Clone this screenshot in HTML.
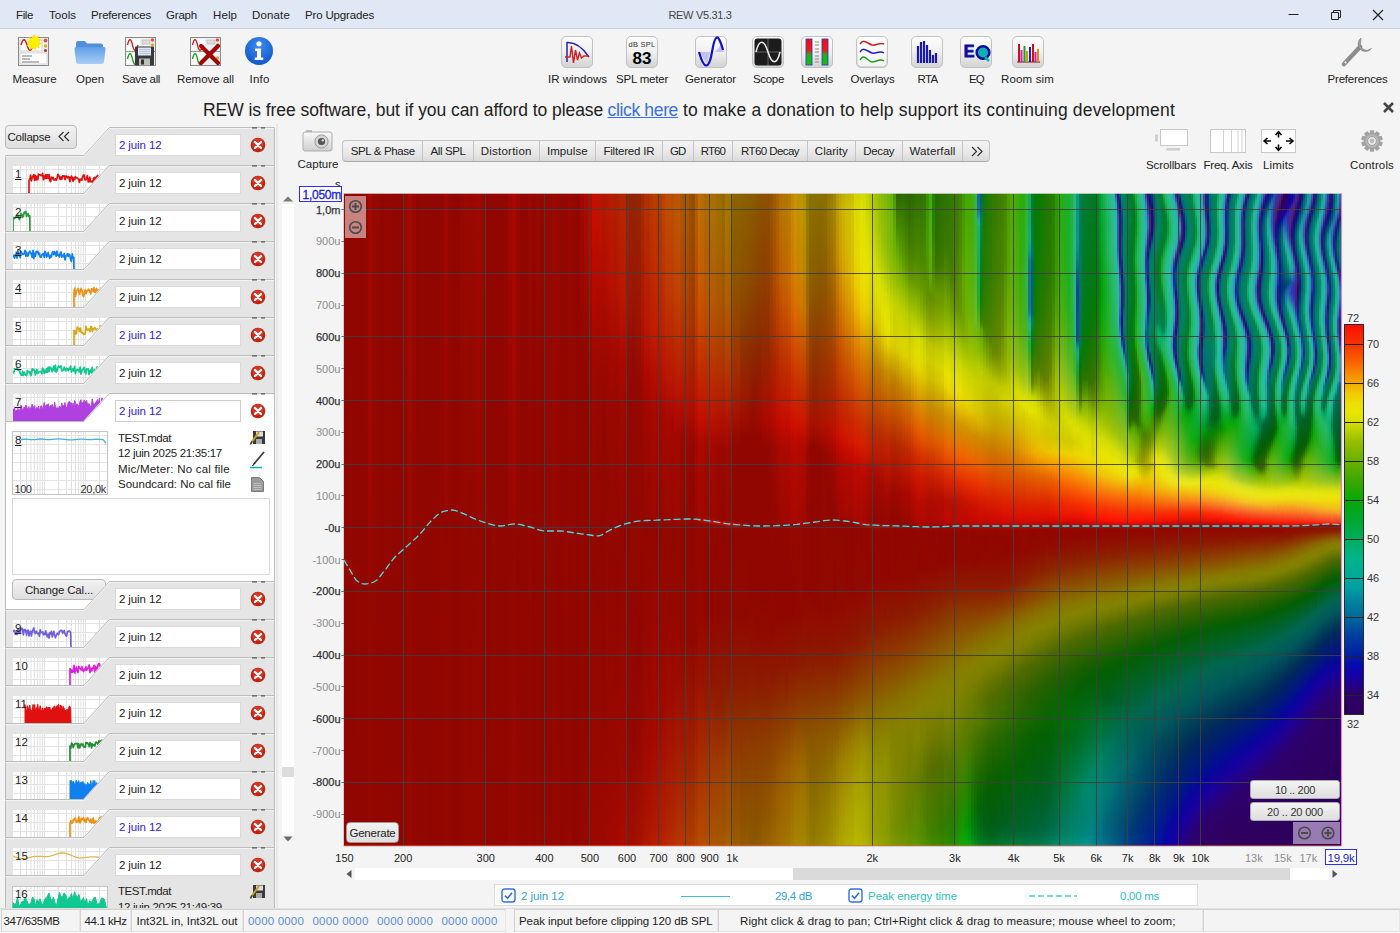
<!DOCTYPE html>
<html><head><meta charset="utf-8"><title>REW V5.31.3</title>
<style>

html,body{margin:0;padding:0;}
body{width:1400px;height:933px;overflow:hidden;background:#f4f4f4;font-family:"Liberation Sans",sans-serif;position:relative;}
.t{position:absolute;white-space:nowrap;}
.a{position:absolute;}
svg{position:absolute;overflow:visible;}
.fld{position:absolute;background:#fff;border:1px solid #dadada;box-sizing:border-box;}
.btn{position:absolute;box-sizing:border-box;border:1px solid #b9b9b9;border-radius:4px;background:linear-gradient(#f3f3f3,#dedede);}
.st{position:absolute;top:909px;height:23px;box-sizing:border-box;border:1px solid #e6e6e6;border-top-color:#d2d2d2;border-left-color:#d2d2d2;background:#f4f4f4;}

.sp{position:absolute;left:344px;top:193px;width:997px;height:653px;overflow:hidden;background:#8c1406;}
.sp i{position:absolute;top:0;height:653px;display:block;}
.tab{position:absolute;top:140px;height:22px;box-sizing:border-box;border-right:1px solid #c6c6c6;}
</style></head><body>
<div class="a" style="left:0;top:0;width:1400px;height:29px;background:#dfe8f4;border-bottom:1px solid #c9d3e2;box-sizing:border-box"></div><span class="t" style="left:16.0px;top:8.0px;font-size:11.5px;line-height:14px;color:#222;letter-spacing:-0.38px;">File</span><span class="t" style="left:49.0px;top:8.0px;font-size:11.5px;line-height:14px;color:#222;letter-spacing:0.03px;">Tools</span><span class="t" style="left:91.0px;top:8.0px;font-size:11.5px;line-height:14px;color:#222;letter-spacing:-0.18px;">Preferences</span><span class="t" style="left:166.0px;top:8.0px;font-size:11.5px;line-height:14px;color:#222;letter-spacing:-0.19px;">Graph</span><span class="t" style="left:213.0px;top:8.0px;font-size:11.5px;line-height:14px;color:#222;letter-spacing:0.09px;">Help</span><span class="t" style="left:252.0px;top:8.0px;font-size:11.5px;line-height:14px;color:#222;letter-spacing:0.15px;">Donate</span><span class="t" style="left:305.0px;top:8.0px;font-size:11.5px;line-height:14px;color:#222;letter-spacing:-0.16px;">Pro Upgrades</span><span class="t" style="left:668.5px;top:8.0px;font-size:11px;line-height:14px;color:#444;letter-spacing:-0.33px;">REW V5.31.3</span><svg style="left:1280px;top:4px" width="116" height="22" viewBox="0 0 116 22"><path d="M8.5 10.5 H18.5" stroke="#222" stroke-width="1"/><path d="M51.5 8.5 H58.5 V15.5 H51.5 Z M53.5 8.5 V6.5 H60.5 V13.5 H58.5" fill="none" stroke="#222" stroke-width="1"/><path d="M93 6 L103 16 M103 6 L93 16" stroke="#222" stroke-width="1.2"/></svg><svg style="left:17px;top:34px" width="34" height="34" viewBox="0 0 34 34"><rect x="1.5" y="3.5" width="30" height="28" fill="#f4f4f4" stroke="#8a8a8a"/><rect x="3" y="6" width="22" height="11" fill="#fff" stroke="#bbb" stroke-width="0.6"/><path d="M4 11 C6 4,8 4,10 11 S14 18,16 11" fill="none" stroke="#d01818" stroke-width="1.4"/><rect x="3" y="19" width="27" height="11" fill="#fff" stroke="#bbb" stroke-width="0.6"/><path d="M5 22h10M5 25h8M5 28h17" stroke="#777" stroke-width="1"/><circle cx="28.5" cy="6.5" r="2" fill="#e05050"/><circle cx="28.5" cy="12" r="1.8" fill="#d8b020"/><circle cx="28.5" cy="16.5" r="1.6" fill="#c03030"/><path d="M17 0 l1.6 3 3-1.6 -0.4 3.4 3.4 0.4 -2.2 2.6 2.6 2.2 -3.3 0.9 0.9 3.3 -3.2-1.2 -1.2 3.2 -2.2-2.6 -2.6 2.2 -0.4-3.4 -3.4-0.4 2.2-2.6 -2.6-2.2 3.3-0.9 -0.9-3.3 3.2 1.2z" fill="#ffe400"/><circle cx="17" cy="9" r="5.5" fill="#fff000"/></svg><span class="t" style="left:12.5px;top:72.0px;font-size:11.5px;line-height:14px;color:#222;letter-spacing:-0.11px;">Measure</span><svg style="left:73px;top:36px" width="34" height="32" viewBox="0 0 34 32"><defs><linearGradient id="fo" x1="0" y1="0" x2="0" y2="1"><stop offset="0" stop-color="#5f9fe6"/><stop offset="1" stop-color="#a8cdf6"/></linearGradient></defs><path d="M3 7 Q3 5 5 5 H12 L14 7.5 H28 Q30 7.5 30 9.5 V12 H3Z" fill="#4f8fdc"/><path d="M1.5 13 Q1.2 11 3.2 11 H30.8 Q32.8 11 32.5 13 L31 26 Q30.8 28 28.8 28 H5.2 Q3.2 28 3 26Z" fill="url(#fo)"/></svg><span class="t" style="left:76.0px;top:72.0px;font-size:11.5px;line-height:14px;color:#222;letter-spacing:-0.03px;">Open</span><svg style="left:124px;top:34px" width="34" height="34" viewBox="0 0 34 34"><rect x="1.5" y="3.5" width="30" height="28" fill="#f1f1f1" stroke="#8a8a8a"/><path d="M1.5 17.5h30" stroke="#9a9a9a"/><rect x="3" y="5.5" width="13" height="10" fill="#fff"/><rect x="3" y="19.5" width="13" height="10" fill="#fff"/><path d="M3.5 11 C5 4,7 4,8.5 11 S12 18,14 11" fill="none" stroke="#d01818" stroke-width="1.3"/><path d="M3.5 25 C5 18,7 18,8.5 25 S12 32,14 25" fill="none" stroke="#18a018" stroke-width="1.3"/><rect x="18" y="6" width="8" height="4" fill="#ddd" stroke="#aaa" stroke-width="0.5"/><circle cx="28.5" cy="6" r="1.8" fill="#e05050"/><circle cx="28.5" cy="11" r="1.7" fill="#d8b020"/><circle cx="28.5" cy="24" r="1.7" fill="#d8b020"/><rect x="11" y="12.5" width="19" height="19" rx="1" fill="#3a3a3a"/><rect x="14" y="13.5" width="13" height="8" fill="#dfe9f5"/><path d="M15 15.5h11M15 17.5h11M15 19.5h11" stroke="#a9bdd6" stroke-width="0.8"/><rect x="15" y="24.5" width="11" height="7" fill="#bdbdbd"/><rect x="17" y="25.5" width="3" height="5" fill="#333"/></svg><span class="t" style="left:122.0px;top:72.0px;font-size:11.5px;line-height:14px;color:#222;letter-spacing:-0.36px;">Save all</span><svg style="left:189px;top:34px" width="34" height="34" viewBox="0 0 34 34"><rect x="1.5" y="3.5" width="30" height="28" fill="#f1f1f1" stroke="#8a8a8a"/><path d="M1.5 17.5h30" stroke="#9a9a9a"/><rect x="3" y="5.5" width="13" height="10" fill="#fff"/><rect x="3" y="19.5" width="13" height="10" fill="#fff"/><path d="M3.5 11 C5 4,7 4,8.5 11 S12 18,14 11" fill="none" stroke="#d01818" stroke-width="1.3"/><path d="M3.5 25 C5 18,7 18,8.5 25 S12 32,14 25" fill="none" stroke="#18a018" stroke-width="1.3"/><rect x="18" y="6" width="8" height="4" fill="#ddd" stroke="#aaa" stroke-width="0.5"/><circle cx="28.5" cy="6" r="1.8" fill="#e05050"/><circle cx="28.5" cy="11" r="1.7" fill="#d8b020"/><circle cx="28.5" cy="24" r="1.7" fill="#d8b020"/><path d="M12 12 L29 29 M29 12 L12 29" stroke="#a00808" stroke-width="4.2" stroke-linecap="round"/></svg><span class="t" style="left:177.0px;top:72.0px;font-size:11.5px;line-height:14px;color:#222;letter-spacing:-0.05px;">Remove all</span><svg style="left:244px;top:36px" width="30" height="30" viewBox="0 0 30 30"><defs><radialGradient id="inf" cx="0.5" cy="0.3" r="0.8"><stop offset="0" stop-color="#3c8cf0"/><stop offset="1" stop-color="#0a50c8"/></radialGradient></defs><circle cx="15" cy="15" r="14" fill="url(#inf)"/><circle cx="15" cy="7.8" r="2.6" fill="#fff"/><path d="M11 12.5h6v9h2.3v2.6h-8.6v-2.6h2.3v-6.4h-2z" fill="#fff"/></svg><span class="t" style="left:249.5px;top:72.0px;font-size:11.5px;line-height:14px;color:#222;letter-spacing:0.20px;">Info</span><svg style="left:561px;top:36px" width="32" height="32" viewBox="0 0 32 32"><defs><linearGradient id="ib" x1="0" y1="0" x2="0" y2="1"><stop offset="0" stop-color="#fdfdfd"/><stop offset="0.5" stop-color="#f0f0f0"/><stop offset="1" stop-color="#d2d2d2"/></linearGradient></defs><rect x="0.5" y="0.5" width="31" height="31" rx="4.5" fill="url(#ib)" stroke="#c2c2c2"/><path d="M6 26 V6.5 C14 6,22 12,28 21" fill="none" stroke="#2020c0" stroke-width="1.5"/><path d="M4 21 H9 L10.5 10 L12.5 27 L14.5 14 L16.5 24 L18.5 17 L20.5 22 L23 20 H28" fill="none" stroke="#d02020" stroke-width="1.4"/></svg><span class="t" style="left:548.0px;top:72.0px;font-size:11.5px;line-height:14px;color:#222;letter-spacing:0.02px;">IR windows</span><svg style="left:626px;top:36px" width="32" height="32" viewBox="0 0 32 32"><defs><linearGradient id="ib" x1="0" y1="0" x2="0" y2="1"><stop offset="0" stop-color="#fdfdfd"/><stop offset="0.5" stop-color="#f0f0f0"/><stop offset="1" stop-color="#d2d2d2"/></linearGradient></defs><rect x="0.5" y="0.5" width="31" height="31" rx="4.5" fill="url(#ib)" stroke="#c2c2c2"/></svg><span class="t" style="left:628.5px;top:40.0px;font-size:7.5px;line-height:9px;color:#333;letter-spacing:0.26px;">dB SPL</span><span class="t" style="left:632.5px;top:47.5px;font-size:17px;line-height:21px;color:#000;letter-spacing:0.05px;font-weight:bold;">83</span><span class="t" style="left:616.0px;top:72.0px;font-size:11.5px;line-height:14px;color:#222;letter-spacing:-0.21px;">SPL meter</span><svg style="left:695px;top:36px" width="32" height="32" viewBox="0 0 32 32"><defs><linearGradient id="ib" x1="0" y1="0" x2="0" y2="1"><stop offset="0" stop-color="#fdfdfd"/><stop offset="0.5" stop-color="#f0f0f0"/><stop offset="1" stop-color="#d2d2d2"/></linearGradient></defs><rect x="0.5" y="0.5" width="31" height="31" rx="4.5" fill="url(#ib)" stroke="#c2c2c2"/><path d="M4 16 Q8.5 16 8.5 16 L15 16 L12 27 Z" fill="#b8b8f0" opacity="0.8"/><path d="M20 16 H29 L26 9 Z" fill="#b8b8f0" opacity="0.8"/><path d="M4 16 C9 34,14 34,17 16 S23 -4,28 14" fill="none" stroke="#1010c8" stroke-width="2.2"/></svg><span class="t" style="left:685.0px;top:72.0px;font-size:11.5px;line-height:14px;color:#222;letter-spacing:-0.09px;">Generator</span><svg style="left:752px;top:36px" width="32" height="32" viewBox="0 0 32 32"><defs><linearGradient id="ib" x1="0" y1="0" x2="0" y2="1"><stop offset="0" stop-color="#fdfdfd"/><stop offset="0.5" stop-color="#f0f0f0"/><stop offset="1" stop-color="#d2d2d2"/></linearGradient></defs><rect x="0.5" y="0.5" width="31" height="31" rx="4.5" fill="url(#ib)" stroke="#c2c2c2"/><rect x="2.5" y="2.5" width="27" height="27" rx="3" fill="#1c1c1c"/><path d="M3 16H29M16 3V29" stroke="#777" stroke-width="0.8"/><path d="M4 16 C7 3,12 3,16 16 S25 29,28 16" fill="none" stroke="#e8e8e8" stroke-width="1.6"/></svg><span class="t" style="left:753.0px;top:72.0px;font-size:11.5px;line-height:14px;color:#222;letter-spacing:-0.32px;">Scope</span><svg style="left:801px;top:36px" width="32" height="32" viewBox="0 0 32 32"><defs><linearGradient id="ib" x1="0" y1="0" x2="0" y2="1"><stop offset="0" stop-color="#fdfdfd"/><stop offset="0.5" stop-color="#f0f0f0"/><stop offset="1" stop-color="#d2d2d2"/></linearGradient></defs><rect x="0.5" y="0.5" width="31" height="31" rx="4.5" fill="url(#ib)" stroke="#c2c2c2"/><defs><linearGradient id="lv" x1="0" y1="0" x2="0" y2="1"><stop offset="0" stop-color="#f01010"/><stop offset="0.45" stop-color="#e02020"/><stop offset="0.6" stop-color="#20b020"/><stop offset="1" stop-color="#10c010"/></linearGradient></defs><rect x="5" y="3" width="6" height="26" fill="url(#lv)" stroke="#3030d0" stroke-width="0.8"/><rect x="21" y="3" width="6" height="26" fill="url(#lv)" stroke="#3030d0" stroke-width="0.8"/><path d="M14 6h4M14 9h4M14 13h4M14 16h4M14 20h4M14 23h4M14 26h4" stroke="#888" stroke-width="1.2"/></svg><span class="t" style="left:801.0px;top:72.0px;font-size:11.5px;line-height:14px;color:#222;letter-spacing:-0.21px;">Levels</span><svg style="left:856px;top:36px" width="32" height="32" viewBox="0 0 32 32"><defs><linearGradient id="ib" x1="0" y1="0" x2="0" y2="1"><stop offset="0" stop-color="#fdfdfd"/><stop offset="0.5" stop-color="#f0f0f0"/><stop offset="1" stop-color="#d2d2d2"/></linearGradient></defs><rect x="0.5" y="0.5" width="31" height="31" rx="4.5" fill="url(#ib)" stroke="#c2c2c2"/><rect x="2" y="2" width="28" height="28" rx="3" fill="#fff" opacity="0.7"/><path d="M4 8 C8 2,12 8,16 9 S24 6,28 8" fill="none" stroke="#d02020" stroke-width="1.5"/><path d="M4 16 C8 10,12 16,16 17 S24 14,28 17" fill="none" stroke="#2020d0" stroke-width="1.5"/><path d="M4 24 C8 16,12 26,16 26 S24 22,28 25" fill="none" stroke="#20a020" stroke-width="1.5"/></svg><span class="t" style="left:850.5px;top:72.0px;font-size:11.5px;line-height:14px;color:#222;letter-spacing:-0.17px;">Overlays</span><svg style="left:911px;top:36px" width="32" height="32" viewBox="0 0 32 32"><defs><linearGradient id="ib" x1="0" y1="0" x2="0" y2="1"><stop offset="0" stop-color="#fdfdfd"/><stop offset="0.5" stop-color="#f0f0f0"/><stop offset="1" stop-color="#d2d2d2"/></linearGradient></defs><rect x="0.5" y="0.5" width="31" height="31" rx="4.5" fill="url(#ib)" stroke="#c2c2c2"/><path d="M7 27V10M10 27V6M13 27V5M16 27V9M19 27V14M22 27V19M25 27V17" stroke="#1818b8" stroke-width="2.2"/></svg><span class="t" style="left:917.5px;top:72.0px;font-size:11.5px;line-height:14px;color:#222;letter-spacing:-0.65px;">RTA</span><svg style="left:960px;top:36px" width="32" height="32" viewBox="0 0 32 32"><defs><linearGradient id="ib" x1="0" y1="0" x2="0" y2="1"><stop offset="0" stop-color="#fdfdfd"/><stop offset="0.5" stop-color="#f0f0f0"/><stop offset="1" stop-color="#d2d2d2"/></linearGradient></defs><rect x="0.5" y="0.5" width="31" height="31" rx="4.5" fill="url(#ib)" stroke="#c2c2c2"/><circle cx="23" cy="16.5" r="6.3" fill="#10b0b0" stroke="#0a0aa0" stroke-width="2.6"/><path d="M25 21 l4 4" stroke="#10b0b0" stroke-width="2.5"/></svg><span class="t" style="left:963.7px;top:42.0px;font-size:16px;line-height:20px;color:#0a0aa0;font-weight:bold;-webkit-text-stroke:0.8px #0a0aa0;">E</span><span class="t" style="left:969.0px;top:72.0px;font-size:11.5px;line-height:14px;color:#222;letter-spacing:-0.81px;">EQ</span><svg style="left:1012px;top:36px" width="32" height="32" viewBox="0 0 32 32"><defs><linearGradient id="ib" x1="0" y1="0" x2="0" y2="1"><stop offset="0" stop-color="#fdfdfd"/><stop offset="0.5" stop-color="#f0f0f0"/><stop offset="1" stop-color="#d2d2d2"/></linearGradient></defs><rect x="0.5" y="0.5" width="31" height="31" rx="4.5" fill="url(#ib)" stroke="#c2c2c2"/><path d="M5 26H28" stroke="#8a3030" stroke-width="1.2"/><path d="M7 26V8" stroke="#d01010" stroke-width="2"/><path d="M9.5 26V14" stroke="#d020d0" stroke-width="2"/><path d="M12.5 26V10" stroke="#20a020" stroke-width="2"/><path d="M15 26V15" stroke="#c8a000" stroke-width="2"/><path d="M18 26V11" stroke="#2020d0" stroke-width="2"/><path d="M21 26V8" stroke="#d01010" stroke-width="2"/><path d="M23.5 26V16" stroke="#d020d0" stroke-width="2"/><path d="M26 26V13" stroke="#e09000" stroke-width="2"/></svg><span class="t" style="left:1001.0px;top:72.0px;font-size:11.5px;line-height:14px;color:#222;letter-spacing:0.16px;">Room sim</span><svg style="left:1340px;top:34px" width="36" height="36" viewBox="0 0 36 36"><defs><linearGradient id="wr" x1="0" y1="0" x2="1" y2="1"><stop offset="0" stop-color="#c8c8c8"/><stop offset="0.5" stop-color="#8a8a8a"/><stop offset="1" stop-color="#b0b0b0"/></linearGradient></defs><path d="M4 30 L20 13" stroke="url(#wr)" stroke-width="4.6" stroke-linecap="round"/><path d="M21 4 A7.5 7.5 0 1 0 31.5 14.5 L27 16.5 L22.5 15 L20.5 10.5 Z" fill="#9c9c9c" stroke="#7a7a7a" stroke-width="0.6"/><circle cx="5.5" cy="28.5" r="1.1" fill="#eee"/></svg><span class="t" style="left:1327.5px;top:72.0px;font-size:11.5px;line-height:14px;color:#222;letter-spacing:-0.18px;">Preferences</span><span class="t" style="left:203.0px;top:98.5px;font-size:17.5px;line-height:22px;color:#222;letter-spacing:-0.06px;">REW is free software, but if you can afford to please</span><span class="t" style="left:607.5px;top:98.5px;font-size:17.5px;line-height:22px;color:#3b6fe0;letter-spacing:-0.34px;text-decoration:underline;">click here</span><span class="t" style="left:683.0px;top:98.5px;font-size:17.5px;line-height:22px;color:#222;letter-spacing:0.17px;">to make a donation to help support its continuing development</span><svg style="left:1382px;top:101px" width="13" height="13" viewBox="0 0 13 13"><path d="M2 2 L11 11 M11 2 L2 11" stroke="#444" stroke-width="2.6"/></svg><div class="a" style="left:276px;top:124px;width:2px;height:786px;background:#e9e9e9"></div><div class="btn" style="left:5px;top:125px;width:72px;height:24px"></div><span class="t" style="left:7.5px;top:129.5px;font-size:11.5px;line-height:14px;color:#222;letter-spacing:-0.22px;">Collapse</span><svg style="left:57px;top:131px" width="14" height="11" viewBox="0 0 14 11"><path d="M6.5 1 L2 5.5 L6.5 10 M12 1 L7.5 5.5 L12 10" fill="none" stroke="#333" stroke-width="1.2"/></svg><svg style="left:0px;top:126.5px" width="280" height="79.5" viewBox="0 0 280 79.5"><path d="M109.5 0.5 H274.5 V78.5 H5.5 V28.5 H84 Z" fill="#e5e5e5" stroke="#bcbcbc" stroke-width="1"/><path d="M109.5 1.5 H274 M5.5 29.5 H84 L109.5 1.5" fill="none" stroke="#f6f6f6" stroke-width="1" opacity="0.8"/><path d="M252 0.8h5M261 0.8h4" stroke="#555" stroke-width="1.2"/></svg><div class="fld" style="left:115px;top:133.5px;width:126px;height:22px;"></div><span class="t" style="left:119.0px;top:138.0px;font-size:11.5px;line-height:14px;color:#2a22e8;letter-spacing:-0.11px;">2 juin 12</span><svg style="left:249.5px;top:137.0px" width="16" height="16" viewBox="0 0 16 16"><circle cx="8" cy="8" r="7.3" fill="#c6200f"/><circle cx="8" cy="6.6" r="5.6" fill="#de4a34" opacity="0.55"/><path d="M5 5 L11 11 M11 5 L5 11" stroke="#fff" stroke-width="2.3" stroke-linecap="round"/></svg><svg style="left:12.5px;top:166.0px" width="96" height="28" viewBox="0 0 96 28"><clipPath id="tc1"><path d="M0 0 H94.5 L69.5 28 H0Z"/></clipPath><g clip-path="url(#tc1)"><rect x="0" y="0" width="96" height="28" fill="#fff"/><path d="M7.5 0V28M13.5 0V28M18.0 0V28M21.5 0V28M24.5 0V28M27.0 0V28M29.5 0V28M31.5 0V28M45.5 0V28M53.5 0V28M58.5 0V28M62.5 0V28M65.5 0V28M68.0 0V28M70.5 0V28M72.5 0V28M86.5 0V28" stroke="#e1e1e1" stroke-width="1"/><path d="M0 3.5H96M0 12.5H96M0 21.5H96" stroke="#e4e4e4" stroke-width="1"/><path d="M16.0 28.0 L16.0 14.4 L16.8 13.6 L17.6 9.1 L18.4 14.9 L19.2 11.5 L20.0 10.3 L20.8 8.6 L21.6 14.5 L22.4 9.3 L23.2 14.0 L24.0 10.7 L24.8 13.6 L25.6 8.1 L26.4 8.8 L27.2 8.8 L28.0 9.6 L28.8 9.6 L29.6 7.4 L30.4 13.7 L31.2 10.2 L32.0 12.5 L32.8 8.6 L33.6 12.4 L34.4 8.8 L35.2 12.1 L36.0 8.5 L36.8 14.8 L37.6 15.7 L38.4 11.0 L39.2 12.7 L40.0 11.3 L40.8 13.8 L41.6 13.9 L42.4 13.0 L43.2 14.3 L44.0 12.3 L44.8 8.4 L45.6 9.3 L46.4 11.2 L47.2 13.5 L48.0 10.9 L48.8 13.3 L49.6 9.9 L50.4 10.2 L51.2 9.8 L52.0 13.6 L52.8 10.0 L53.6 10.0 L54.4 11.8 L55.2 10.6 L56.0 11.0 L56.8 15.7 L57.6 12.3 L58.4 10.0 L59.2 11.7 L60.0 15.3 L60.8 11.8 L61.6 13.7 L62.4 10.6 L63.2 11.5 L64.0 11.8 L64.8 12.6 L65.6 13.3 L66.4 16.4 L67.2 13.2 L68.0 13.4 L68.8 14.2 L69.6 11.1 L70.4 9.1 L71.2 9.1 L72.0 13.9 L72.8 13.9 L73.6 12.3 L74.4 9.5 L75.2 15.8 L76.0 15.8 L76.8 11.1 L77.6 15.6 L78.4 15.8 L79.2 15.1 L80.0 16.7 L80.8 11.9 L81.6 11.5 L82.4 15.1 L83.2 11.2 L84.0 10.4 L84.8 9.4 L85.6 12.7 L86.4 11.6 L87.2 11.9 L88.0 12.8 L88.8 15.0 L89.6 14.7 L90.4 12.0 L91.2 10.7 L92.0 13.0 L92.8 15.4 L93.6 13.8 L94.4 18.0 L95.2 15.0 L96.0 15.2" fill="none" stroke="#e01010" stroke-width="1.7" stroke-linejoin="round"/></g></svg><span class="t" style="left:15.0px;top:167.0px;font-size:11.5px;line-height:14px;color:#222;text-decoration:underline;">1</span><svg style="left:0px;top:164.5px" width="280" height="79.5" viewBox="0 0 280 79.5"><path d="M109.5 0.5 H274.5 V78.5 H5.5 V28.5 H84 Z" fill="#e5e5e5" stroke="#bcbcbc" stroke-width="1"/><path d="M109.5 1.5 H274 M5.5 29.5 H84 L109.5 1.5" fill="none" stroke="#f6f6f6" stroke-width="1" opacity="0.8"/><path d="M252 0.8h5M261 0.8h4" stroke="#555" stroke-width="1.2"/></svg><div class="fld" style="left:115px;top:171.5px;width:126px;height:22px;"></div><span class="t" style="left:119.0px;top:176.0px;font-size:11.5px;line-height:14px;color:#222;letter-spacing:-0.11px;">2 juin 12</span><svg style="left:249.5px;top:175.0px" width="16" height="16" viewBox="0 0 16 16"><circle cx="8" cy="8" r="7.3" fill="#c6200f"/><circle cx="8" cy="6.6" r="5.6" fill="#de4a34" opacity="0.55"/><path d="M5 5 L11 11 M11 5 L5 11" stroke="#fff" stroke-width="2.3" stroke-linecap="round"/></svg><svg style="left:12.5px;top:204.0px" width="96" height="28" viewBox="0 0 96 28"><clipPath id="tc2"><path d="M0 0 H94.5 L69.5 28 H0Z"/></clipPath><g clip-path="url(#tc2)"><rect x="0" y="0" width="96" height="28" fill="#fff"/><path d="M7.5 0V28M13.5 0V28M18.0 0V28M21.5 0V28M24.5 0V28M27.0 0V28M29.5 0V28M31.5 0V28M45.5 0V28M53.5 0V28M58.5 0V28M62.5 0V28M65.5 0V28M68.0 0V28M70.5 0V28M72.5 0V28M86.5 0V28" stroke="#e1e1e1" stroke-width="1"/><path d="M0 3.5H96M0 12.5H96M0 21.5H96" stroke="#e4e4e4" stroke-width="1"/><path d="M0.0 28.0 L0.0 13.8 L0.8 13.7 L1.6 14.7 L2.4 13.3 L3.2 12.6 L4.0 13.5 L4.8 10.9 L5.6 13.4 L6.4 15.5 L7.2 13.2 L8.0 9.4 L8.8 10.5 L9.6 13.3 L10.4 12.0 L11.2 8.2 L12.0 9.2 L12.8 7.5 L13.6 12.3 L14.4 10.8 L15.2 9.6 L16.0 12.6 L16.8 11.9 L17.0 28.0" fill="none" stroke="#2a9a3a" stroke-width="1.7" stroke-linejoin="round"/></g></svg><span class="t" style="left:15.0px;top:205.0px;font-size:11.5px;line-height:14px;color:#222;text-decoration:underline;">2</span><svg style="left:0px;top:202.5px" width="280" height="79.5" viewBox="0 0 280 79.5"><path d="M109.5 0.5 H274.5 V78.5 H5.5 V28.5 H84 Z" fill="#e5e5e5" stroke="#bcbcbc" stroke-width="1"/><path d="M109.5 1.5 H274 M5.5 29.5 H84 L109.5 1.5" fill="none" stroke="#f6f6f6" stroke-width="1" opacity="0.8"/><path d="M252 0.8h5M261 0.8h4" stroke="#555" stroke-width="1.2"/></svg><div class="fld" style="left:115px;top:209.5px;width:126px;height:22px;"></div><span class="t" style="left:119.0px;top:214.0px;font-size:11.5px;line-height:14px;color:#222;letter-spacing:-0.11px;">2 juin 12</span><svg style="left:249.5px;top:213.0px" width="16" height="16" viewBox="0 0 16 16"><circle cx="8" cy="8" r="7.3" fill="#c6200f"/><circle cx="8" cy="6.6" r="5.6" fill="#de4a34" opacity="0.55"/><path d="M5 5 L11 11 M11 5 L5 11" stroke="#fff" stroke-width="2.3" stroke-linecap="round"/></svg><svg style="left:12.5px;top:242.0px" width="96" height="28" viewBox="0 0 96 28"><clipPath id="tc3"><path d="M0 0 H94.5 L69.5 28 H0Z"/></clipPath><g clip-path="url(#tc3)"><rect x="0" y="0" width="96" height="28" fill="#fff"/><path d="M7.5 0V28M13.5 0V28M18.0 0V28M21.5 0V28M24.5 0V28M27.0 0V28M29.5 0V28M31.5 0V28M45.5 0V28M53.5 0V28M58.5 0V28M62.5 0V28M65.5 0V28M68.0 0V28M70.5 0V28M72.5 0V28M86.5 0V28" stroke="#e1e1e1" stroke-width="1"/><path d="M0 3.5H96M0 12.5H96M0 21.5H96" stroke="#e4e4e4" stroke-width="1"/><path d="M0.0 15.4 L0.8 13.4 L1.6 16.1 L2.4 12.5 L3.2 11.8 L4.0 16.2 L4.8 8.5 L5.6 13.3 L6.4 13.2 L7.2 15.6 L8.0 9.3 L8.8 11.3 L9.6 12.3 L10.4 12.2 L11.2 11.4 L12.0 8.3 L12.8 14.1 L13.6 10.2 L14.4 14.2 L15.2 13.5 L16.0 10.6 L16.8 9.1 L17.6 10.9 L18.4 11.9 L19.2 15.4 L20.0 8.3 L20.8 16.6 L21.6 11.3 L22.4 14.1 L23.2 9.3 L24.0 10.6 L24.8 9.3 L25.6 12.6 L26.4 11.3 L27.2 15.1 L28.0 15.3 L28.8 13.3 L29.6 12.1 L30.4 11.5 L31.2 15.4 L32.0 9.4 L32.8 11.0 L33.6 15.1 L34.4 13.6 L35.2 10.4 L36.0 14.5 L36.8 16.3 L37.6 13.5 L38.4 14.9 L39.2 10.7 L40.0 9.6 L40.8 12.7 L41.6 9.7 L42.4 11.2 L43.2 14.2 L44.0 9.1 L44.8 13.4 L45.6 13.0 L46.4 15.0 L47.2 11.2 L48.0 10.0 L48.8 15.2 L49.6 13.3 L50.4 14.7 L51.2 11.5 L52.0 18.0 L52.8 14.1 L53.6 13.7 L54.4 11.8 L55.2 14.4 L56.0 12.2 L56.8 13.2 L57.6 17.5 L58.4 19.4 L59.2 11.9 L60.0 16.5 L60.8 15.3 L61.0 28.0" fill="none" stroke="#1080f0" stroke-width="1.7" stroke-linejoin="round"/></g></svg><span class="t" style="left:15.0px;top:243.0px;font-size:11.5px;line-height:14px;color:#222;text-decoration:underline;">3</span><svg style="left:0px;top:240.5px" width="280" height="79.5" viewBox="0 0 280 79.5"><path d="M109.5 0.5 H274.5 V78.5 H5.5 V28.5 H84 Z" fill="#e5e5e5" stroke="#bcbcbc" stroke-width="1"/><path d="M109.5 1.5 H274 M5.5 29.5 H84 L109.5 1.5" fill="none" stroke="#f6f6f6" stroke-width="1" opacity="0.8"/><path d="M252 0.8h5M261 0.8h4" stroke="#555" stroke-width="1.2"/></svg><div class="fld" style="left:115px;top:247.5px;width:126px;height:22px;"></div><span class="t" style="left:119.0px;top:252.0px;font-size:11.5px;line-height:14px;color:#222;letter-spacing:-0.11px;">2 juin 12</span><svg style="left:249.5px;top:251.0px" width="16" height="16" viewBox="0 0 16 16"><circle cx="8" cy="8" r="7.3" fill="#c6200f"/><circle cx="8" cy="6.6" r="5.6" fill="#de4a34" opacity="0.55"/><path d="M5 5 L11 11 M11 5 L5 11" stroke="#fff" stroke-width="2.3" stroke-linecap="round"/></svg><svg style="left:12.5px;top:280.0px" width="96" height="28" viewBox="0 0 96 28"><clipPath id="tc4"><path d="M0 0 H94.5 L69.5 28 H0Z"/></clipPath><g clip-path="url(#tc4)"><rect x="0" y="0" width="96" height="28" fill="#fff"/><path d="M7.5 0V28M13.5 0V28M18.0 0V28M21.5 0V28M24.5 0V28M27.0 0V28M29.5 0V28M31.5 0V28M45.5 0V28M53.5 0V28M58.5 0V28M62.5 0V28M65.5 0V28M68.0 0V28M70.5 0V28M72.5 0V28M86.5 0V28" stroke="#e1e1e1" stroke-width="1"/><path d="M0 3.5H96M0 12.5H96M0 21.5H96" stroke="#e4e4e4" stroke-width="1"/><path d="M61.0 28.0 L61.0 11.6 L61.8 8.1 L62.6 16.1 L63.4 11.4 L64.2 10.1 L65.0 8.6 L65.8 11.4 L66.6 14.3 L67.4 10.2 L68.2 8.5 L69.0 10.5 L69.8 15.0 L70.6 16.6 L71.4 13.1 L72.2 9.8 L73.0 13.7 L73.8 10.9 L74.6 10.8 L75.4 9.1 L76.2 10.2 L77.0 11.6 L77.8 13.8 L78.6 8.8 L79.4 9.2 L80.2 11.2 L81.0 7.7 L81.8 12.2 L82.6 13.0 L83.4 8.3 L84.2 10.7 L85.0 10.9 L85.8 9.6 L86.6 14.5 L87.4 10.7 L88.2 7.7 L89.0 8.2 L89.8 8.9 L90.6 12.8 L91.4 10.6 L92.2 10.1 L93.0 10.1 L93.8 9.5 L94.6 11.2 L95.4 11.1" fill="none" stroke="#f09010" stroke-width="1.7" stroke-linejoin="round"/></g></svg><span class="t" style="left:15.0px;top:281.0px;font-size:11.5px;line-height:14px;color:#222;text-decoration:underline;">4</span><svg style="left:0px;top:278.5px" width="280" height="79.5" viewBox="0 0 280 79.5"><path d="M109.5 0.5 H274.5 V78.5 H5.5 V28.5 H84 Z" fill="#e5e5e5" stroke="#bcbcbc" stroke-width="1"/><path d="M109.5 1.5 H274 M5.5 29.5 H84 L109.5 1.5" fill="none" stroke="#f6f6f6" stroke-width="1" opacity="0.8"/><path d="M252 0.8h5M261 0.8h4" stroke="#555" stroke-width="1.2"/></svg><div class="fld" style="left:115px;top:285.5px;width:126px;height:22px;"></div><span class="t" style="left:119.0px;top:290.0px;font-size:11.5px;line-height:14px;color:#222;letter-spacing:-0.11px;">2 juin 12</span><svg style="left:249.5px;top:289.0px" width="16" height="16" viewBox="0 0 16 16"><circle cx="8" cy="8" r="7.3" fill="#c6200f"/><circle cx="8" cy="6.6" r="5.6" fill="#de4a34" opacity="0.55"/><path d="M5 5 L11 11 M11 5 L5 11" stroke="#fff" stroke-width="2.3" stroke-linecap="round"/></svg><svg style="left:12.5px;top:318.0px" width="96" height="28" viewBox="0 0 96 28"><clipPath id="tc5"><path d="M0 0 H94.5 L69.5 28 H0Z"/></clipPath><g clip-path="url(#tc5)"><rect x="0" y="0" width="96" height="28" fill="#fff"/><path d="M7.5 0V28M13.5 0V28M18.0 0V28M21.5 0V28M24.5 0V28M27.0 0V28M29.5 0V28M31.5 0V28M45.5 0V28M53.5 0V28M58.5 0V28M62.5 0V28M65.5 0V28M68.0 0V28M70.5 0V28M72.5 0V28M86.5 0V28" stroke="#e1e1e1" stroke-width="1"/><path d="M0 3.5H96M0 12.5H96M0 21.5H96" stroke="#e4e4e4" stroke-width="1"/><path d="M61.0 28.0 L61.0 12.4 L61.8 16.2 L62.6 13.1 L63.4 15.8 L64.2 9.1 L65.0 10.5 L65.8 10.3 L66.6 13.5 L67.4 10.0 L68.2 14.3 L69.0 14.8 L69.8 14.5 L70.6 16.3 L71.4 16.0 L72.2 16.1 L73.0 8.4 L73.8 11.0 L74.6 11.8 L75.4 11.1 L76.2 11.2 L77.0 13.4 L77.8 8.7 L78.6 8.8 L79.4 13.4 L80.2 10.6 L81.0 11.0 L81.8 9.8 L82.6 10.4 L83.4 12.5 L84.2 11.5 L85.0 10.7 L85.8 15.0 L86.6 14.7 L87.4 7.6 L88.2 8.7 L89.0 12.9 L89.8 8.3 L90.6 9.4 L91.4 10.7 L92.2 14.3 L93.0 12.0 L93.8 10.0 L94.6 8.9 L95.4 14.0" fill="none" stroke="#d8a810" stroke-width="1.7" stroke-linejoin="round"/></g></svg><span class="t" style="left:15.0px;top:319.0px;font-size:11.5px;line-height:14px;color:#222;text-decoration:underline;">5</span><svg style="left:0px;top:316.5px" width="280" height="79.5" viewBox="0 0 280 79.5"><path d="M109.5 0.5 H274.5 V78.5 H5.5 V28.5 H84 Z" fill="#e5e5e5" stroke="#bcbcbc" stroke-width="1"/><path d="M109.5 1.5 H274 M5.5 29.5 H84 L109.5 1.5" fill="none" stroke="#f6f6f6" stroke-width="1" opacity="0.8"/><path d="M252 0.8h5M261 0.8h4" stroke="#555" stroke-width="1.2"/></svg><div class="fld" style="left:115px;top:323.5px;width:126px;height:22px;"></div><span class="t" style="left:119.0px;top:328.0px;font-size:11.5px;line-height:14px;color:#2a22e8;letter-spacing:-0.11px;">2 juin 12</span><svg style="left:249.5px;top:327.0px" width="16" height="16" viewBox="0 0 16 16"><circle cx="8" cy="8" r="7.3" fill="#c6200f"/><circle cx="8" cy="6.6" r="5.6" fill="#de4a34" opacity="0.55"/><path d="M5 5 L11 11 M11 5 L5 11" stroke="#fff" stroke-width="2.3" stroke-linecap="round"/></svg><svg style="left:12.5px;top:356.0px" width="96" height="28" viewBox="0 0 96 28"><clipPath id="tc6"><path d="M0 0 H94.5 L69.5 28 H0Z"/></clipPath><g clip-path="url(#tc6)"><rect x="0" y="0" width="96" height="28" fill="#fff"/><path d="M7.5 0V28M13.5 0V28M18.0 0V28M21.5 0V28M24.5 0V28M27.0 0V28M29.5 0V28M31.5 0V28M45.5 0V28M53.5 0V28M58.5 0V28M62.5 0V28M65.5 0V28M68.0 0V28M70.5 0V28M72.5 0V28M86.5 0V28" stroke="#e1e1e1" stroke-width="1"/><path d="M0 3.5H96M0 12.5H96M0 21.5H96" stroke="#e4e4e4" stroke-width="1"/><path d="M0.0 16.6 L0.8 16.9 L1.6 12.6 L2.4 13.4 L3.2 13.1 L4.0 11.6 L4.8 13.8 L5.6 14.3 L6.4 14.5 L7.2 17.5 L8.0 19.0 L8.8 19.3 L9.6 15.3 L10.4 19.5 L11.2 16.0 L12.0 18.2 L12.8 19.2 L13.6 19.6 L14.4 14.6 L15.2 15.5 L16.0 16.6 L16.8 15.6 L17.6 19.6 L18.4 19.1 L19.2 12.8 L20.0 14.1 L20.8 13.3 L21.6 15.2 L22.4 18.9 L23.2 15.7 L24.0 13.5 L24.8 17.5 L25.6 16.6 L26.4 15.7 L27.2 15.7 L28.0 15.7 L28.8 17.7 L29.6 12.1 L30.4 14.0 L31.2 17.2 L32.0 14.2 L32.8 16.6 L33.6 12.7 L34.4 16.2 L35.2 11.2 L36.0 15.7 L36.8 11.2 L37.6 11.3 L38.4 13.2 L39.2 15.8 L40.0 13.0 L40.8 10.2 L41.6 15.0 L42.4 9.0 L43.2 16.1 L44.0 14.8 L44.8 11.7 L45.6 10.1 L46.4 11.1 L47.2 10.9 L48.0 9.9 L48.8 15.0 L49.6 14.7 L50.4 13.9 L51.2 11.0 L52.0 13.7 L52.8 14.9 L53.6 12.4 L54.4 12.5 L55.2 14.7 L56.0 12.4 L56.8 13.1 L57.6 10.0 L58.4 16.1 L59.2 14.2 L60.0 12.7 L60.8 14.9 L61.6 10.4 L62.4 17.6 L63.2 14.2 L64.0 14.4 L64.8 13.3 L65.6 14.1 L66.4 15.9 L67.2 11.0 L68.0 18.1 L68.8 15.5 L69.6 13.6 L70.4 12.9 L71.2 11.5 L72.0 16.1 L72.8 17.8 L73.6 12.9 L74.4 13.4 L75.2 12.9 L76.0 18.6 L76.8 14.9 L77.6 14.1 L78.4 17.0 L79.2 11.4 L80.0 17.0 L80.8 15.3 L81.6 13.7 L82.4 14.3 L83.2 14.2 L84.0 10.9 L84.8 11.9 L85.6 14.8 L86.4 18.9 L87.2 13.3 L88.0 13.0 L88.8 20.2 L89.6 13.0 L90.4 15.8 L91.2 13.4 L92.0 11.5 L92.8 12.7 L93.6 14.7 L94.4 11.6 L95.2 11.9 L96.0 17.1" fill="none" stroke="#10c890" stroke-width="1.7" stroke-linejoin="round"/></g></svg><span class="t" style="left:15.0px;top:357.0px;font-size:11.5px;line-height:14px;color:#222;text-decoration:underline;">6</span><svg style="left:0px;top:354.5px" width="280" height="79.5" viewBox="0 0 280 79.5"><path d="M109.5 0.5 H274.5 V78.5 H5.5 V28.5 H84 Z" fill="#e5e5e5" stroke="#bcbcbc" stroke-width="1"/><path d="M109.5 1.5 H274 M5.5 29.5 H84 L109.5 1.5" fill="none" stroke="#f6f6f6" stroke-width="1" opacity="0.8"/><path d="M252 0.8h5M261 0.8h4" stroke="#555" stroke-width="1.2"/></svg><div class="fld" style="left:115px;top:361.5px;width:126px;height:22px;"></div><span class="t" style="left:119.0px;top:366.0px;font-size:11.5px;line-height:14px;color:#222;letter-spacing:-0.11px;">2 juin 12</span><svg style="left:249.5px;top:365.0px" width="16" height="16" viewBox="0 0 16 16"><circle cx="8" cy="8" r="7.3" fill="#c6200f"/><circle cx="8" cy="6.6" r="5.6" fill="#de4a34" opacity="0.55"/><path d="M5 5 L11 11 M11 5 L5 11" stroke="#fff" stroke-width="2.3" stroke-linecap="round"/></svg><svg style="left:12.5px;top:394.0px" width="96" height="28" viewBox="0 0 96 28"><clipPath id="tc7"><path d="M0 0 H94.5 L69.5 28 H0Z"/></clipPath><g clip-path="url(#tc7)"><rect x="0" y="0" width="96" height="28" fill="#fff"/><path d="M7.5 0V28M13.5 0V28M18.0 0V28M21.5 0V28M24.5 0V28M27.0 0V28M29.5 0V28M31.5 0V28M45.5 0V28M53.5 0V28M58.5 0V28M62.5 0V28M65.5 0V28M68.0 0V28M70.5 0V28M72.5 0V28M86.5 0V28" stroke="#e1e1e1" stroke-width="1"/><path d="M0 3.5H96M0 12.5H96M0 21.5H96" stroke="#e4e4e4" stroke-width="1"/><path d="M0.0 28.0 L0.0 15.1 L0.8 15.7 L1.6 13.3 L2.4 18.2 L3.2 16.6 L4.0 16.8 L4.8 14.3 L5.6 17.2 L6.4 16.3 L7.2 15.1 L8.0 11.2 L8.8 13.9 L9.6 18.0 L10.4 14.6 L11.2 13.1 L12.0 15.0 L12.8 11.1 L13.6 12.5 L14.4 16.0 L15.2 13.5 L16.0 12.8 L16.8 17.4 L17.6 13.7 L18.4 13.1 L19.2 10.1 L20.0 14.1 L20.8 13.2 L21.6 11.5 L22.4 16.6 L23.2 14.0 L24.0 13.3 L24.8 15.8 L25.6 12.0 L26.4 16.6 L27.2 14.2 L28.0 11.7 L28.8 12.2 L29.6 16.3 L30.4 13.3 L31.2 8.5 L32.0 15.2 L32.8 11.6 L33.6 10.6 L34.4 12.0 L35.2 9.7 L36.0 13.3 L36.8 12.9 L37.6 11.6 L38.4 11.6 L39.2 10.4 L40.0 13.2 L40.8 14.3 L41.6 7.9 L42.4 12.5 L43.2 13.8 L44.0 15.3 L44.8 13.5 L45.6 14.8 L46.4 12.2 L47.2 13.8 L48.0 12.9 L48.8 8.9 L49.6 12.6 L50.4 11.8 L51.2 11.0 L52.0 8.6 L52.8 14.1 L53.6 13.0 L54.4 12.8 L55.2 8.3 L56.0 7.7 L56.8 7.7 L57.6 9.2 L58.4 8.9 L59.2 12.0 L60.0 9.2 L60.8 13.9 L61.6 6.3 L62.4 9.0 L63.2 12.7 L64.0 9.7 L64.8 11.0 L65.6 12.3 L66.4 10.5 L67.2 6.8 L68.0 5.7 L68.8 13.1 L69.6 8.5 L70.4 9.3 L71.2 5.9 L72.0 9.0 L72.8 7.8 L73.6 6.2 L74.4 10.2 L75.2 10.2 L76.0 9.5 L76.8 11.3 L77.6 12.3 L78.4 11.3 L79.2 5.0 L80.0 8.5 L80.8 9.6 L81.6 11.3 L82.4 8.5 L83.2 7.7 L84.0 6.3 L84.8 5.7 L85.6 10.5 L86.4 3.9 L87.2 9.6 L88.0 11.5 L88.8 4.0 L89.6 5.0 L90.4 5.7 L91.2 9.9 L92.0 9.9 L92.8 10.6 L93.6 8.1 L94.4 7.3 L95.2 7.0 L96.0 7.5 L96.0 28.0Z" fill="#b040e0" stroke="#b040e0" stroke-width="1" stroke-linejoin="round"/></g></svg><span class="t" style="left:15.0px;top:395.0px;font-size:11.5px;line-height:14px;color:#222;text-decoration:underline;">7</span><svg style="left:0px;top:392.5px" width="280" height="220.5" viewBox="0 0 280 220.5"><path d="M109.5 0.5 H274.5 V219.5 H5.5 V28.5 H84 Z" fill="#ffffff" stroke="#bcbcbc" stroke-width="1"/><path d="M109.5 1.5 H274 M5.5 29.5 H84 L109.5 1.5" fill="none" stroke="#f6f6f6" stroke-width="1" opacity="0.8"/><path d="M252 0.8h5M261 0.8h4" stroke="#555" stroke-width="1.2"/></svg><div class="fld" style="left:115px;top:399.5px;width:126px;height:22px;border-color:#cfcfcf;"></div><span class="t" style="left:119.0px;top:404.0px;font-size:11.5px;line-height:14px;color:#2a22e8;letter-spacing:-0.11px;">2 juin 12</span><svg style="left:249.5px;top:403.0px" width="16" height="16" viewBox="0 0 16 16"><circle cx="8" cy="8" r="7.3" fill="#c6200f"/><circle cx="8" cy="6.6" r="5.6" fill="#de4a34" opacity="0.55"/><path d="M5 5 L11 11 M11 5 L5 11" stroke="#fff" stroke-width="2.3" stroke-linecap="round"/></svg><div class="a" style="left:11.5px;top:430.5px;width:96px;height:64px;border:1px solid #c4c4c4;box-sizing:border-box;background:#fff"></div><svg style="left:12.5px;top:431.5px" width="94" height="62" viewBox="0 0 94 62"><clipPath id="tc108"><rect x="0" y="0" width="94" height="62"/></clipPath><g clip-path="url(#tc108)"><rect x="0" y="0" width="94" height="62" fill="#fff"/><path d="M7.5 0V62M13.5 0V62M18.0 0V62M21.5 0V62M24.5 0V62M27.0 0V62M29.5 0V62M31.5 0V62M45.5 0V62M53.5 0V62M58.5 0V62M62.5 0V62M65.5 0V62M68.0 0V62M70.5 0V62M72.5 0V62M86.5 0V62" stroke="#e1e1e1" stroke-width="1"/><path d="M0 3.5H94M0 12.5H94M0 21.5H94M0 30.5H94M0 39.5H94M0 48.5H94M0 57.5H94" stroke="#e4e4e4" stroke-width="1"/></g></svg><svg style="left:12.5px;top:431.5px" width="94" height="62" viewBox="0 0 94 62"><path d="M8 7.5 C14 6.5,18 8.5,24 7.3 S34 8.6,42 7.2 S54 9,62 7.6 S76 8.5,84 7.2 L90 7.6 L93 11" fill="none" stroke="#42b4d6" stroke-width="1.3"/></svg><span class="t" style="left:15.0px;top:433.0px;font-size:11.5px;line-height:14px;color:#222;text-decoration:underline;">8</span><span class="t" style="left:14.5px;top:481.5px;font-size:11px;line-height:14px;color:#333;letter-spacing:-0.45px;">100</span><span class="t" style="left:80.5px;top:481.5px;font-size:11px;line-height:14px;color:#333;letter-spacing:-0.28px;">20,0k</span><span class="t" style="left:118.0px;top:430.5px;font-size:11.5px;line-height:14px;color:#222;letter-spacing:-0.43px;">TEST.mdat</span><span class="t" style="left:118.0px;top:446.0px;font-size:11.5px;line-height:14px;color:#222;letter-spacing:-0.32px;">12 juin 2025 21:35:17</span><span class="t" style="left:118.0px;top:461.5px;font-size:11.5px;line-height:14px;color:#222;letter-spacing:0.21px;">Mic/Meter: No cal file</span><span class="t" style="left:118.0px;top:477.0px;font-size:11.5px;line-height:14px;color:#222;letter-spacing:0.02px;">Soundcard: No cal file</span><svg style="left:250px;top:429.5px" width="16" height="15" viewBox="0 0 16 15"><rect x="3" y="1" width="12" height="13" fill="#3a3a3a"/><rect x="6" y="1.5" width="7" height="5" fill="#ddd"/><rect x="6" y="9" width="6" height="5" fill="#aaa"/><path d="M1 13 L9 2" stroke="#c8a020" stroke-width="2"/><path d="M0.5 14.5 L2 11.5" stroke="#333" stroke-width="1.5"/></svg><svg style="left:249px;top:451.0px" width="18" height="18" viewBox="0 0 18 18"><path d="M5 13 L15 1" stroke="#444" stroke-width="1.8"/><path d="M3.5 15 L6 11.5" stroke="#222" stroke-width="1.2"/><path d="M1 16.5 H13" stroke="#20a8d0" stroke-width="1.6"/></svg><svg style="left:251px;top:477.0px" width="13" height="15" viewBox="0 0 13 15"><path d="M0.5 0.5 H8.5 L12.5 4.5 V14.5 H0.5Z" fill="#9a9a9a" stroke="#7c7c7c"/><path d="M2.5 6.5h8M2.5 8.5h8M2.5 10.5h8M2.5 12.5h8" stroke="#c9c9c9" stroke-width="0.8"/></svg><div class="a" style="left:12px;top:498px;width:258px;height:77px;border:1px solid #dcdcdc;box-sizing:border-box;background:#fff"></div><div class="btn" style="left:12px;top:579px;width:94px;height:21px;border-radius:4px"></div><span class="t" style="left:25.0px;top:582.5px;font-size:11.5px;line-height:14px;color:#222;letter-spacing:-0.18px;">Change Cal...</span><svg style="left:0px;top:580.5px" width="280" height="79.5" viewBox="0 0 280 79.5"><path d="M109.5 0.5 H274.5 V78.5 H5.5 V28.5 H84 Z" fill="#e5e5e5" stroke="#bcbcbc" stroke-width="1"/><path d="M109.5 1.5 H274 M5.5 29.5 H84 L109.5 1.5" fill="none" stroke="#f6f6f6" stroke-width="1" opacity="0.8"/><path d="M252 0.8h5M261 0.8h4" stroke="#555" stroke-width="1.2"/></svg><div class="fld" style="left:115px;top:587.5px;width:126px;height:22px;"></div><span class="t" style="left:119.0px;top:592.0px;font-size:11.5px;line-height:14px;color:#222;letter-spacing:-0.11px;">2 juin 12</span><svg style="left:249.5px;top:591.0px" width="16" height="16" viewBox="0 0 16 16"><circle cx="8" cy="8" r="7.3" fill="#c6200f"/><circle cx="8" cy="6.6" r="5.6" fill="#de4a34" opacity="0.55"/><path d="M5 5 L11 11 M11 5 L5 11" stroke="#fff" stroke-width="2.3" stroke-linecap="round"/></svg><svg style="left:12.5px;top:620.0px" width="96" height="28" viewBox="0 0 96 28"><clipPath id="tc9"><path d="M0 0 H94.5 L69.5 28 H0Z"/></clipPath><g clip-path="url(#tc9)"><rect x="0" y="0" width="96" height="28" fill="#fff"/><path d="M7.5 0V28M13.5 0V28M18.0 0V28M21.5 0V28M24.5 0V28M27.0 0V28M29.5 0V28M31.5 0V28M45.5 0V28M53.5 0V28M58.5 0V28M62.5 0V28M65.5 0V28M68.0 0V28M70.5 0V28M72.5 0V28M86.5 0V28" stroke="#e1e1e1" stroke-width="1"/><path d="M0 3.5H96M0 12.5H96M0 21.5H96" stroke="#e4e4e4" stroke-width="1"/><path d="M0.0 11.9 L0.8 10.3 L1.6 10.5 L2.4 14.5 L3.2 12.5 L4.0 14.5 L4.8 9.5 L5.6 9.0 L6.4 13.5 L7.2 12.9 L8.0 8.8 L8.8 8.2 L9.6 9.0 L10.4 14.9 L11.2 9.9 L12.0 9.4 L12.8 11.1 L13.6 15.1 L14.4 10.4 L15.2 10.2 L16.0 15.9 L16.8 12.4 L17.6 11.2 L18.4 16.0 L19.2 11.8 L20.0 9.7 L20.8 8.0 L21.6 12.9 L22.4 13.6 L23.2 11.1 L24.0 12.6 L24.8 13.8 L25.6 13.0 L26.4 16.3 L27.2 9.8 L28.0 12.5 L28.8 12.7 L29.6 11.8 L30.4 14.9 L31.2 13.5 L32.0 14.3 L32.8 10.8 L33.6 15.2 L34.4 16.8 L35.2 14.1 L36.0 18.0 L36.8 12.7 L37.6 13.9 L38.4 11.2 L39.2 17.0 L40.0 14.3 L40.8 11.4 L41.6 15.2 L42.4 17.8 L43.2 15.8 L44.0 13.9 L44.8 13.2 L45.6 14.7 L46.4 11.4 L47.2 11.0 L48.0 10.3 L48.8 10.3 L49.6 13.1 L50.4 12.4 L51.2 10.5 L52.0 13.7 L52.8 15.5 L53.6 16.2 L54.4 11.9 L55.2 11.3 L56.0 10.9 L56.8 11.7 L57.6 12.4 L58.0 28.0" fill="none" stroke="#7060e0" stroke-width="1.7" stroke-linejoin="round"/></g></svg><span class="t" style="left:15.0px;top:621.0px;font-size:11.5px;line-height:14px;color:#222;text-decoration:underline;">9</span><svg style="left:0px;top:618.5px" width="280" height="79.5" viewBox="0 0 280 79.5"><path d="M109.5 0.5 H274.5 V78.5 H5.5 V28.5 H84 Z" fill="#e5e5e5" stroke="#bcbcbc" stroke-width="1"/><path d="M109.5 1.5 H274 M5.5 29.5 H84 L109.5 1.5" fill="none" stroke="#f6f6f6" stroke-width="1" opacity="0.8"/><path d="M252 0.8h5M261 0.8h4" stroke="#555" stroke-width="1.2"/></svg><div class="fld" style="left:115px;top:625.5px;width:126px;height:22px;"></div><span class="t" style="left:119.0px;top:630.0px;font-size:11.5px;line-height:14px;color:#222;letter-spacing:-0.11px;">2 juin 12</span><svg style="left:249.5px;top:629.0px" width="16" height="16" viewBox="0 0 16 16"><circle cx="8" cy="8" r="7.3" fill="#c6200f"/><circle cx="8" cy="6.6" r="5.6" fill="#de4a34" opacity="0.55"/><path d="M5 5 L11 11 M11 5 L5 11" stroke="#fff" stroke-width="2.3" stroke-linecap="round"/></svg><svg style="left:12.5px;top:658.0px" width="96" height="28" viewBox="0 0 96 28"><clipPath id="tc10"><path d="M0 0 H94.5 L69.5 28 H0Z"/></clipPath><g clip-path="url(#tc10)"><rect x="0" y="0" width="96" height="28" fill="#fff"/><path d="M7.5 0V28M13.5 0V28M18.0 0V28M21.5 0V28M24.5 0V28M27.0 0V28M29.5 0V28M31.5 0V28M45.5 0V28M53.5 0V28M58.5 0V28M62.5 0V28M65.5 0V28M68.0 0V28M70.5 0V28M72.5 0V28M86.5 0V28" stroke="#e1e1e1" stroke-width="1"/><path d="M0 3.5H96M0 12.5H96M0 21.5H96" stroke="#e4e4e4" stroke-width="1"/><path d="M57.0 28.0 L57.0 10.5 L57.8 14.3 L58.6 11.9 L59.4 14.4 L60.2 13.2 L61.0 7.4 L61.8 15.0 L62.6 12.3 L63.4 9.1 L64.2 12.6 L65.0 14.5 L65.8 8.5 L66.6 10.0 L67.4 10.6 L68.2 12.0 L69.0 8.6 L69.8 12.1 L70.6 13.5 L71.4 11.1 L72.2 12.1 L73.0 8.9 L73.8 12.2 L74.6 10.5 L75.4 9.2 L76.2 7.0 L77.0 14.6 L77.8 10.1 L78.6 12.8 L79.4 11.0 L80.2 9.7 L81.0 7.4 L81.8 14.5 L82.6 8.4 L83.4 10.4 L84.2 13.8 L85.0 7.0 L85.8 5.6 L86.6 6.0 L87.4 11.4 L88.2 10.8 L89.0 8.5 L89.8 6.6 L90.6 6.3 L91.4 12.1 L92.2 7.5 L93.0 7.9 L93.8 11.4 L94.6 12.6 L95.4 10.3" fill="none" stroke="#e020e0" stroke-width="1.7" stroke-linejoin="round"/></g></svg><span class="t" style="left:15.0px;top:659.0px;font-size:11.5px;line-height:14px;color:#222;">10</span><svg style="left:0px;top:656.5px" width="280" height="79.5" viewBox="0 0 280 79.5"><path d="M109.5 0.5 H274.5 V78.5 H5.5 V28.5 H84 Z" fill="#e5e5e5" stroke="#bcbcbc" stroke-width="1"/><path d="M109.5 1.5 H274 M5.5 29.5 H84 L109.5 1.5" fill="none" stroke="#f6f6f6" stroke-width="1" opacity="0.8"/><path d="M252 0.8h5M261 0.8h4" stroke="#555" stroke-width="1.2"/></svg><div class="fld" style="left:115px;top:663.5px;width:126px;height:22px;"></div><span class="t" style="left:119.0px;top:668.0px;font-size:11.5px;line-height:14px;color:#222;letter-spacing:-0.11px;">2 juin 12</span><svg style="left:249.5px;top:667.0px" width="16" height="16" viewBox="0 0 16 16"><circle cx="8" cy="8" r="7.3" fill="#c6200f"/><circle cx="8" cy="6.6" r="5.6" fill="#de4a34" opacity="0.55"/><path d="M5 5 L11 11 M11 5 L5 11" stroke="#fff" stroke-width="2.3" stroke-linecap="round"/></svg><svg style="left:12.5px;top:696.0px" width="96" height="28" viewBox="0 0 96 28"><clipPath id="tc11"><path d="M0 0 H94.5 L69.5 28 H0Z"/></clipPath><g clip-path="url(#tc11)"><rect x="0" y="0" width="96" height="28" fill="#fff"/><path d="M7.5 0V28M13.5 0V28M18.0 0V28M21.5 0V28M24.5 0V28M27.0 0V28M29.5 0V28M31.5 0V28M45.5 0V28M53.5 0V28M58.5 0V28M62.5 0V28M65.5 0V28M68.0 0V28M70.5 0V28M72.5 0V28M86.5 0V28" stroke="#e1e1e1" stroke-width="1"/><path d="M0 3.5H96M0 12.5H96M0 21.5H96" stroke="#e4e4e4" stroke-width="1"/><path d="M12.0 28.0 L12.0 8.6 L12.8 14.0 L13.6 15.1 L14.4 9.7 L15.2 11.8 L16.0 15.6 L16.8 9.2 L17.6 15.0 L18.4 14.3 L19.2 15.9 L20.0 8.4 L20.8 15.5 L21.6 8.6 L22.4 14.0 L23.2 13.5 L24.0 11.2 L24.8 8.4 L25.6 14.8 L26.4 14.0 L27.2 9.7 L28.0 13.5 L28.8 14.9 L29.6 11.9 L30.4 14.9 L31.2 12.5 L32.0 12.4 L32.8 12.2 L33.6 10.7 L34.4 13.2 L35.2 11.0 L36.0 12.7 L36.8 11.1 L37.6 15.0 L38.4 14.8 L39.2 12.6 L40.0 11.8 L40.8 10.7 L41.6 9.9 L42.4 13.5 L43.2 10.2 L44.0 10.1 L44.8 9.5 L45.6 8.5 L46.4 16.0 L47.2 8.9 L48.0 13.0 L48.8 9.6 L49.6 14.3 L50.4 10.6 L51.2 13.0 L52.0 13.7 L52.8 15.4 L53.6 13.7 L54.4 13.3 L55.2 15.4 L56.0 10.4 L56.8 10.1 L57.6 12.2 L58.0 28.0Z" fill="#e01010" stroke="#e01010" stroke-width="1" stroke-linejoin="round"/></g></svg><span class="t" style="left:15.0px;top:697.0px;font-size:11.5px;line-height:14px;color:#222;">11</span><svg style="left:0px;top:694.5px" width="280" height="79.5" viewBox="0 0 280 79.5"><path d="M109.5 0.5 H274.5 V78.5 H5.5 V28.5 H84 Z" fill="#e5e5e5" stroke="#bcbcbc" stroke-width="1"/><path d="M109.5 1.5 H274 M5.5 29.5 H84 L109.5 1.5" fill="none" stroke="#f6f6f6" stroke-width="1" opacity="0.8"/><path d="M252 0.8h5M261 0.8h4" stroke="#555" stroke-width="1.2"/></svg><div class="fld" style="left:115px;top:701.5px;width:126px;height:22px;"></div><span class="t" style="left:119.0px;top:706.0px;font-size:11.5px;line-height:14px;color:#222;letter-spacing:-0.11px;">2 juin 12</span><svg style="left:249.5px;top:705.0px" width="16" height="16" viewBox="0 0 16 16"><circle cx="8" cy="8" r="7.3" fill="#c6200f"/><circle cx="8" cy="6.6" r="5.6" fill="#de4a34" opacity="0.55"/><path d="M5 5 L11 11 M11 5 L5 11" stroke="#fff" stroke-width="2.3" stroke-linecap="round"/></svg><svg style="left:12.5px;top:734.0px" width="96" height="28" viewBox="0 0 96 28"><clipPath id="tc12"><path d="M0 0 H94.5 L69.5 28 H0Z"/></clipPath><g clip-path="url(#tc12)"><rect x="0" y="0" width="96" height="28" fill="#fff"/><path d="M7.5 0V28M13.5 0V28M18.0 0V28M21.5 0V28M24.5 0V28M27.0 0V28M29.5 0V28M31.5 0V28M45.5 0V28M53.5 0V28M58.5 0V28M62.5 0V28M65.5 0V28M68.0 0V28M70.5 0V28M72.5 0V28M86.5 0V28" stroke="#e1e1e1" stroke-width="1"/><path d="M0 3.5H96M0 12.5H96M0 21.5H96" stroke="#e4e4e4" stroke-width="1"/><path d="M57.0 28.0 L57.0 12.0 L57.8 14.1 L58.6 9.0 L59.4 10.5 L60.2 13.6 L61.0 10.9 L61.8 9.9 L62.6 9.5 L63.4 9.7 L64.2 9.4 L65.0 13.8 L65.8 9.9 L66.6 13.9 L67.4 12.1 L68.2 9.7 L69.0 10.7 L69.8 10.1 L70.6 12.9 L71.4 12.6 L72.2 13.3 L73.0 8.5 L73.8 9.1 L74.6 8.8 L75.4 10.6 L76.2 12.6 L77.0 8.6 L77.8 9.1 L78.6 14.0 L79.4 10.2 L80.2 11.4 L81.0 10.6 L81.8 12.0 L82.6 8.4 L83.4 8.2 L84.2 9.1 L85.0 10.2 L85.8 6.8 L86.6 13.0 L87.4 6.9 L88.2 10.1 L89.0 6.2 L89.8 10.1 L90.6 8.3 L91.4 6.5 L92.2 12.2 L93.0 9.4 L93.8 11.5 L94.6 10.8 L95.4 9.1" fill="none" stroke="#209030" stroke-width="1.7" stroke-linejoin="round"/></g></svg><span class="t" style="left:15.0px;top:735.0px;font-size:11.5px;line-height:14px;color:#222;">12</span><svg style="left:0px;top:732.5px" width="280" height="79.5" viewBox="0 0 280 79.5"><path d="M109.5 0.5 H274.5 V78.5 H5.5 V28.5 H84 Z" fill="#e5e5e5" stroke="#bcbcbc" stroke-width="1"/><path d="M109.5 1.5 H274 M5.5 29.5 H84 L109.5 1.5" fill="none" stroke="#f6f6f6" stroke-width="1" opacity="0.8"/><path d="M252 0.8h5M261 0.8h4" stroke="#555" stroke-width="1.2"/></svg><div class="fld" style="left:115px;top:739.5px;width:126px;height:22px;"></div><span class="t" style="left:119.0px;top:744.0px;font-size:11.5px;line-height:14px;color:#222;letter-spacing:-0.11px;">2 juin 12</span><svg style="left:249.5px;top:743.0px" width="16" height="16" viewBox="0 0 16 16"><circle cx="8" cy="8" r="7.3" fill="#c6200f"/><circle cx="8" cy="6.6" r="5.6" fill="#de4a34" opacity="0.55"/><path d="M5 5 L11 11 M11 5 L5 11" stroke="#fff" stroke-width="2.3" stroke-linecap="round"/></svg><svg style="left:12.5px;top:772.0px" width="96" height="28" viewBox="0 0 96 28"><clipPath id="tc13"><path d="M0 0 H94.5 L69.5 28 H0Z"/></clipPath><g clip-path="url(#tc13)"><rect x="0" y="0" width="96" height="28" fill="#fff"/><path d="M7.5 0V28M13.5 0V28M18.0 0V28M21.5 0V28M24.5 0V28M27.0 0V28M29.5 0V28M31.5 0V28M45.5 0V28M53.5 0V28M58.5 0V28M62.5 0V28M65.5 0V28M68.0 0V28M70.5 0V28M72.5 0V28M86.5 0V28" stroke="#e1e1e1" stroke-width="1"/><path d="M0 3.5H96M0 12.5H96M0 21.5H96" stroke="#e4e4e4" stroke-width="1"/><path d="M57.0 28.0 L57.0 8.4 L57.8 9.1 L58.6 8.5 L59.4 11.2 L60.2 9.4 L61.0 10.6 L61.8 13.6 L62.6 11.2 L63.4 8.1 L64.2 10.0 L65.0 11.3 L65.8 8.6 L66.6 12.9 L67.4 10.5 L68.2 10.1 L69.0 10.5 L69.8 9.5 L70.6 10.4 L71.4 12.3 L72.2 12.3 L73.0 12.3 L73.8 13.4 L74.6 10.4 L75.4 11.7 L76.2 12.8 L77.0 11.9 L77.8 8.5 L78.6 13.6 L79.4 12.9 L80.2 8.3 L81.0 10.4 L81.8 8.5 L82.6 13.5 L83.4 10.6 L84.2 11.4 L85.0 11.0 L85.8 13.6 L86.6 13.0 L87.4 10.2 L88.2 11.2 L89.0 13.6 L89.8 12.2 L90.6 12.4 L91.4 13.6 L92.2 10.3 L93.0 12.3 L93.8 10.7 L94.6 9.4 L95.4 10.9 L96.0 28.0Z" fill="#1080f0" stroke="#1080f0" stroke-width="1" stroke-linejoin="round"/></g></svg><span class="t" style="left:15.0px;top:773.0px;font-size:11.5px;line-height:14px;color:#222;">13</span><svg style="left:0px;top:770.5px" width="280" height="79.5" viewBox="0 0 280 79.5"><path d="M109.5 0.5 H274.5 V78.5 H5.5 V28.5 H84 Z" fill="#e5e5e5" stroke="#bcbcbc" stroke-width="1"/><path d="M109.5 1.5 H274 M5.5 29.5 H84 L109.5 1.5" fill="none" stroke="#f6f6f6" stroke-width="1" opacity="0.8"/><path d="M252 0.8h5M261 0.8h4" stroke="#555" stroke-width="1.2"/></svg><div class="fld" style="left:115px;top:777.5px;width:126px;height:22px;"></div><span class="t" style="left:119.0px;top:782.0px;font-size:11.5px;line-height:14px;color:#222;letter-spacing:-0.11px;">2 juin 12</span><svg style="left:249.5px;top:781.0px" width="16" height="16" viewBox="0 0 16 16"><circle cx="8" cy="8" r="7.3" fill="#c6200f"/><circle cx="8" cy="6.6" r="5.6" fill="#de4a34" opacity="0.55"/><path d="M5 5 L11 11 M11 5 L5 11" stroke="#fff" stroke-width="2.3" stroke-linecap="round"/></svg><svg style="left:12.5px;top:810.0px" width="96" height="28" viewBox="0 0 96 28"><clipPath id="tc14"><path d="M0 0 H94.5 L69.5 28 H0Z"/></clipPath><g clip-path="url(#tc14)"><rect x="0" y="0" width="96" height="28" fill="#fff"/><path d="M7.5 0V28M13.5 0V28M18.0 0V28M21.5 0V28M24.5 0V28M27.0 0V28M29.5 0V28M31.5 0V28M45.5 0V28M53.5 0V28M58.5 0V28M62.5 0V28M65.5 0V28M68.0 0V28M70.5 0V28M72.5 0V28M86.5 0V28" stroke="#e1e1e1" stroke-width="1"/><path d="M0 3.5H96M0 12.5H96M0 21.5H96" stroke="#e4e4e4" stroke-width="1"/><path d="M57.0 28.0 L57.0 13.6 L57.8 10.7 L58.6 13.2 L59.4 13.0 L60.2 9.6 L61.0 10.1 L61.8 8.3 L62.6 8.3 L63.4 12.4 L64.2 11.4 L65.0 11.6 L65.8 6.9 L66.6 12.7 L67.4 12.6 L68.2 8.4 L69.0 9.8 L69.8 8.6 L70.6 7.7 L71.4 11.4 L72.2 9.5 L73.0 12.4 L73.8 8.7 L74.6 7.7 L75.4 9.6 L76.2 10.3 L77.0 11.8 L77.8 9.0 L78.6 13.1 L79.4 11.6 L80.2 8.1 L81.0 13.3 L81.8 12.5 L82.6 11.0 L83.4 12.5 L84.2 11.1 L85.0 12.2 L85.8 9.7 L86.6 7.9 L87.4 8.9 L88.2 6.6 L89.0 12.3 L89.8 7.1 L90.6 6.9 L91.4 7.3 L92.2 8.5 L93.0 10.6 L93.8 9.3 L94.6 8.0 L95.4 9.8" fill="none" stroke="#f09010" stroke-width="1.7" stroke-linejoin="round"/></g></svg><span class="t" style="left:15.0px;top:811.0px;font-size:11.5px;line-height:14px;color:#222;">14</span><svg style="left:0px;top:808.5px" width="280" height="79.5" viewBox="0 0 280 79.5"><path d="M109.5 0.5 H274.5 V78.5 H5.5 V28.5 H84 Z" fill="#e5e5e5" stroke="#bcbcbc" stroke-width="1"/><path d="M109.5 1.5 H274 M5.5 29.5 H84 L109.5 1.5" fill="none" stroke="#f6f6f6" stroke-width="1" opacity="0.8"/><path d="M252 0.8h5M261 0.8h4" stroke="#555" stroke-width="1.2"/></svg><div class="fld" style="left:115px;top:815.5px;width:126px;height:22px;"></div><span class="t" style="left:119.0px;top:820.0px;font-size:11.5px;line-height:14px;color:#2a22e8;letter-spacing:-0.11px;">2 juin 12</span><svg style="left:249.5px;top:819.0px" width="16" height="16" viewBox="0 0 16 16"><circle cx="8" cy="8" r="7.3" fill="#c6200f"/><circle cx="8" cy="6.6" r="5.6" fill="#de4a34" opacity="0.55"/><path d="M5 5 L11 11 M11 5 L5 11" stroke="#fff" stroke-width="2.3" stroke-linecap="round"/></svg><svg style="left:12.5px;top:848.0px" width="96" height="28" viewBox="0 0 96 28"><clipPath id="tc15"><path d="M0 0 H94.5 L69.5 28 H0Z"/></clipPath><g clip-path="url(#tc15)"><rect x="0" y="0" width="96" height="28" fill="#fff"/><path d="M7.5 0V28M13.5 0V28M18.0 0V28M21.5 0V28M24.5 0V28M27.0 0V28M29.5 0V28M31.5 0V28M45.5 0V28M53.5 0V28M58.5 0V28M62.5 0V28M65.5 0V28M68.0 0V28M70.5 0V28M72.5 0V28M86.5 0V28" stroke="#e1e1e1" stroke-width="1"/><path d="M0 3.5H96M0 12.5H96M0 21.5H96" stroke="#e4e4e4" stroke-width="1"/><path d="M0.0 8.0 L2.0 8.9 L4.0 9.7 L6.0 10.3 L8.0 10.6 L10.0 10.7 L12.0 10.5 L14.0 10.1 L16.0 9.6 L18.0 9.1 L20.0 8.7 L22.0 8.4 L24.0 8.3 L26.0 8.3 L28.0 8.4 L30.0 8.6 L32.0 8.6 L34.0 8.6 L36.0 8.3 L38.0 7.9 L40.0 7.3 L42.0 6.6 L44.0 5.9 L46.0 5.4 L48.0 5.0 L50.0 4.9 L52.0 5.1 L54.0 5.6 L56.0 6.3 L58.0 7.1 L60.0 8.0 L62.0 8.8 L64.0 9.4 L66.0 9.8 L68.0 9.9 L70.0 9.9 L72.0 9.7 L74.0 9.4 L76.0 9.1 L78.0 8.9 L80.0 8.8 L82.0 8.9 L84.0 9.0 L86.0 9.3 L88.0 9.5 L90.0 9.6 L92.0 9.5 L94.0 9.2 L96.0 8.7" fill="none" stroke="#e0b850" stroke-width="1.3"/></g></svg><span class="t" style="left:15.0px;top:849.0px;font-size:11.5px;line-height:14px;color:#222;">15</span><svg style="left:0px;top:846.5px" width="280" height="66.5" viewBox="0 0 280 66.5"><path d="M109.5 0.5 H274.5 V65.5 H5.5 V28.5 H84 Z" fill="#e5e5e5" stroke="#bcbcbc" stroke-width="1"/><path d="M109.5 1.5 H274 M5.5 29.5 H84 L109.5 1.5" fill="none" stroke="#f6f6f6" stroke-width="1" opacity="0.8"/><path d="M252 0.8h5M261 0.8h4" stroke="#555" stroke-width="1.2"/></svg><div class="fld" style="left:115px;top:853.5px;width:126px;height:22px;"></div><span class="t" style="left:119.0px;top:858.0px;font-size:11.5px;line-height:14px;color:#222;letter-spacing:-0.11px;">2 juin 12</span><svg style="left:249.5px;top:857.0px" width="16" height="16" viewBox="0 0 16 16"><circle cx="8" cy="8" r="7.3" fill="#c6200f"/><circle cx="8" cy="6.6" r="5.6" fill="#de4a34" opacity="0.55"/><path d="M5 5 L11 11 M11 5 L5 11" stroke="#fff" stroke-width="2.3" stroke-linecap="round"/></svg><div class="a" style="left:11.5px;top:885.5px;width:96px;height:30px;border:1px solid #c4c4c4;box-sizing:border-box;background:#fff"></div><svg style="left:12.5px;top:886.5px" width="94" height="24" viewBox="0 0 94 24"><clipPath id="tc116"><rect x="0" y="0" width="94" height="24"/></clipPath><g clip-path="url(#tc116)"><rect x="0" y="0" width="94" height="24" fill="#fff"/><path d="M7.5 0V24M13.5 0V24M18.0 0V24M21.5 0V24M24.5 0V24M27.0 0V24M29.5 0V24M31.5 0V24M45.5 0V24M53.5 0V24M58.5 0V24M62.5 0V24M65.5 0V24M68.0 0V24M70.5 0V24M72.5 0V24M86.5 0V24" stroke="#e1e1e1" stroke-width="1"/><path d="M0 3.5H94M0 12.5H94M0 21.5H94" stroke="#e4e4e4" stroke-width="1"/></g></svg><svg style="left:12.5px;top:886.5px" width="94" height="24" viewBox="0 0 94 24"><path d="M0.0 24.0 L0.0 15.6 L1.5 17.2 L3.0 16.7 L4.5 10.3 L6.0 18.5 L7.5 18.1 L9.0 14.2 L10.5 14.9 L12.0 10.1 L13.5 12.5 L15.0 16.9 L16.5 17.2 L18.0 15.6 L19.5 10.0 L21.0 11.9 L22.5 18.8 L24.0 12.6 L25.5 14.9 L27.0 11.8 L28.5 16.2 L30.0 18.0 L31.5 12.3 L33.0 10.9 L34.5 9.1 L36.0 6.0 L37.5 11.2 L39.0 14.5 L40.5 10.0 L42.0 16.0 L43.5 18.6 L45.0 11.7 L46.5 5.4 L48.0 9.8 L49.5 9.8 L51.0 5.9 L52.5 7.2 L54.0 12.7 L55.5 11.0 L57.0 10.1 L58.5 6.5 L60.0 12.0 L61.5 4.7 L63.0 8.8 L64.5 10.0 L66.0 7.5 L67.5 14.9 L69.0 12.9 L70.5 10.7 L72.0 16.2 L73.5 11.5 L75.0 18.9 L76.5 13.7 L78.0 15.3 L79.5 14.1 L81.0 10.5 L82.5 10.3 L84.0 17.5 L85.5 16.6 L87.0 15.7 L88.5 11.0 L90.0 11.3 L91.5 12.7 L93.0 19.0 L94.0 24.0Z" fill="#10c890" stroke="#10c890"/></svg><span class="t" style="left:15.0px;top:887.0px;font-size:11.5px;line-height:14px;color:#222;letter-spacing:-0.15px;">16</span><span class="t" style="left:118.0px;top:884.0px;font-size:11.5px;line-height:14px;color:#222;letter-spacing:-0.43px;">TEST.mdat</span><span class="t" style="left:118.0px;top:899.5px;font-size:11.5px;line-height:14px;color:#222;letter-spacing:-0.32px;">12 juin 2025 21:49:39</span><svg style="left:250px;top:883.5px" width="16" height="15" viewBox="0 0 16 15"><rect x="3" y="1" width="12" height="13" fill="#3a3a3a"/><rect x="6" y="1.5" width="7" height="5" fill="#ddd"/><rect x="6" y="9" width="6" height="5" fill="#aaa"/><path d="M1 13 L9 2" stroke="#c8a020" stroke-width="2"/><path d="M0.5 14.5 L2 11.5" stroke="#333" stroke-width="1.5"/></svg><div class="a" style="left:0;top:908px;width:1400px;height:25px;background:#f4f4f4;border-top:1px solid #dedede;box-sizing:border-box"></div><div class="st" style="left:1px;width:79px"></div><div class="st" style="left:80px;width:51px"></div><div class="st" style="left:131px;width:112px"></div><div class="st" style="left:243px;width:263px"></div><div class="st" style="left:514px;width:204px"></div><div class="st" style="left:718px;width:485px"></div><div class="st" style="left:1203px;width:197px"></div><span class="t" style="left:3.5px;top:914.0px;font-size:11.5px;line-height:14px;color:#222;letter-spacing:-0.31px;">347/635MB</span><span class="t" style="left:84.5px;top:914.0px;font-size:11.5px;line-height:14px;color:#222;letter-spacing:-0.42px;">44.1 kHz</span><span class="t" style="left:136.5px;top:914.0px;font-size:11.5px;line-height:14px;color:#222;letter-spacing:0.01px;">Int32L in, Int32L out</span><span class="t" style="left:248.0px;top:914.0px;font-size:11.5px;line-height:14px;color:#5b8de0;letter-spacing:0.18px;">0000 0000</span><span class="t" style="left:312.5px;top:914.0px;font-size:11.5px;line-height:14px;color:#5b8de0;letter-spacing:0.18px;">0000 0000</span><span class="t" style="left:377.0px;top:914.0px;font-size:11.5px;line-height:14px;color:#5b8de0;letter-spacing:0.18px;">0000 0000</span><span class="t" style="left:441.5px;top:914.0px;font-size:11.5px;line-height:14px;color:#5b8de0;letter-spacing:0.18px;">0000 0000</span><span class="t" style="left:519.0px;top:914.0px;font-size:11.5px;line-height:14px;color:#222;letter-spacing:-0.09px;">Peak input before clipping 120 dB SPL</span><span class="t" style="left:740.0px;top:914.0px;font-size:11.5px;line-height:14px;color:#222;letter-spacing:0.10px;">Right click &amp; drag to pan; Ctrl+Right click &amp; drag to measure; mouse wheel to zoom;</span><svg style="left:302px;top:129px" width="32" height="24" viewBox="0 0 32 24"><defs><linearGradient id="cam" x1="0" y1="0" x2="0" y2="1"><stop offset="0" stop-color="#fafafa"/><stop offset="1" stop-color="#cfcfcf"/></linearGradient></defs><rect x="4" y="1" width="6" height="3" fill="#bdbdbd"/><rect x="1" y="3" width="29" height="19" rx="2" fill="url(#cam)" stroke="#adadad"/><circle cx="19.5" cy="12.5" r="6.6" fill="#d5d5d5" stroke="#9b9b9b"/><circle cx="19.5" cy="12.5" r="3.6" fill="#555"/><circle cx="20.7" cy="11.4" r="1.2" fill="#cfd6ee"/></svg><span class="t" style="left:297.5px;top:156.5px;font-size:11.5px;line-height:14px;color:#222;letter-spacing:0.01px;">Capture</span><div class="a" style="left:342px;top:139.5px;width:648px;height:22.5px;box-sizing:border-box;border:1px solid #c2c2c2;border-bottom-color:#a9a9a9;border-radius:4px;background:linear-gradient(#f4f4f4,#e9e9e9 55%,#dadada)"></div><span class="t" style="left:350.7px;top:144.0px;font-size:11.5px;line-height:14px;color:#222;letter-spacing:-0.36px;">SPL &amp; Phase</span><span class="t" style="left:430.6px;top:144.0px;font-size:11.5px;line-height:14px;color:#222;letter-spacing:-0.39px;">All SPL</span><span class="t" style="left:480.7px;top:144.0px;font-size:11.5px;line-height:14px;color:#222;letter-spacing:0.24px;">Distortion</span><span class="t" style="left:546.9px;top:144.0px;font-size:11.5px;line-height:14px;color:#222;letter-spacing:0.10px;">Impulse</span><span class="t" style="left:603.4px;top:144.0px;font-size:11.5px;line-height:14px;color:#222;letter-spacing:-0.19px;">Filtered IR</span><span class="t" style="left:669.9px;top:144.0px;font-size:11.5px;line-height:14px;color:#222;letter-spacing:-0.90px;">GD</span><span class="t" style="left:700.8px;top:144.0px;font-size:11.5px;line-height:14px;color:#222;letter-spacing:-0.90px;">RT60</span><span class="t" style="left:741.0px;top:144.0px;font-size:11.5px;line-height:14px;color:#222;letter-spacing:-0.57px;">RT60 Decay</span><span class="t" style="left:814.8px;top:144.0px;font-size:11.5px;line-height:14px;color:#222;letter-spacing:0.06px;">Clarity</span><span class="t" style="left:863.2px;top:144.0px;font-size:11.5px;line-height:14px;color:#222;letter-spacing:-0.32px;">Decay</span><span class="t" style="left:909.5px;top:144.0px;font-size:11.5px;line-height:14px;color:#222;letter-spacing:0.12px;">Waterfall</span><svg style="left:970px;top:146px" width="14" height="11" viewBox="0 0 14 11"><path d="M2 1 L6.5 5.5 L2 10 M7.5 1 L12 5.5 L7.5 10" fill="none" stroke="#333" stroke-width="1.2"/></svg><svg style="left:0;top:0" width="1400" height="933"><path d="M422.5 140.5V161M473.5 140.5V161M539.5 140.5V161M595.5 140.5V161M662.5 140.5V161M693.5 140.5V161M732.5 140.5V161M807.5 140.5V161M855.5 140.5V161M902.5 140.5V161M962.5 140.5V161" stroke="#c4c4c4" stroke-width="1"/></svg><svg style="left:1150px;top:126px" width="250" height="30" viewBox="0 0 250 30"><rect x="10.5" y="3.5" width="27" height="16" fill="#fff" stroke="#c9c9c9"/><rect x="5" y="8.5" width="3" height="7" fill="#cfcfcf"/><rect x="16.5" y="22" width="13.5" height="2.6" fill="#cfcfcf"/><rect x="60.5" y="3.5" width="35" height="23" fill="#fff" stroke="#c9c9c9"/><path d="M73.5 4V26M81.5 4V26M88 4V26M92 4V26" stroke="#d0d0d0" stroke-width="1"/><rect x="111.5" y="3.5" width="34" height="23" fill="#fff" stroke="#c9c9c9"/><path d="M128.5 6V11.5M128.5 18.5V24M114.5 15H121M136 15H142.5" stroke="#000" stroke-width="1.6"/><path d="M125.5 9L128.5 5.6L131.5 9M125.5 21L128.5 24.4L131.5 21M117.5 12L114.1 15L117.5 18M139.5 12L142.9 15L139.5 18" fill="none" stroke="#000" stroke-width="1.6"/></svg><svg style="left:1361px;top:130px" width="22" height="22" viewBox="-11 -11 22 22"><defs><radialGradient id="ge"><stop offset="0.5" stop-color="#c9c9c9"/><stop offset="1" stop-color="#9b9b9b"/></radialGradient></defs><rect x="-2.2" y="-10.8" width="4.4" height="4" rx="0.8" transform="rotate(0)" fill="#a3a3a3"/><rect x="-2.2" y="-10.8" width="4.4" height="4" rx="0.8" transform="rotate(36)" fill="#a3a3a3"/><rect x="-2.2" y="-10.8" width="4.4" height="4" rx="0.8" transform="rotate(72)" fill="#a3a3a3"/><rect x="-2.2" y="-10.8" width="4.4" height="4" rx="0.8" transform="rotate(108)" fill="#a3a3a3"/><rect x="-2.2" y="-10.8" width="4.4" height="4" rx="0.8" transform="rotate(144)" fill="#a3a3a3"/><rect x="-2.2" y="-10.8" width="4.4" height="4" rx="0.8" transform="rotate(180)" fill="#a3a3a3"/><rect x="-2.2" y="-10.8" width="4.4" height="4" rx="0.8" transform="rotate(216)" fill="#a3a3a3"/><rect x="-2.2" y="-10.8" width="4.4" height="4" rx="0.8" transform="rotate(252)" fill="#a3a3a3"/><rect x="-2.2" y="-10.8" width="4.4" height="4" rx="0.8" transform="rotate(288)" fill="#a3a3a3"/><rect x="-2.2" y="-10.8" width="4.4" height="4" rx="0.8" transform="rotate(324)" fill="#a3a3a3"/><circle r="8.2" fill="url(#ge)"/><circle r="4.4" fill="#efefef" stroke="#8d8d8d" stroke-width="0.8"/><circle r="2.4" fill="#bdbdbd"/></svg><span class="t" style="left:1146.0px;top:158.0px;font-size:11.5px;line-height:14px;color:#222;letter-spacing:-0.11px;">Scrollbars</span><span class="t" style="left:1203.5px;top:158.0px;font-size:11.5px;line-height:14px;color:#222;letter-spacing:-0.21px;">Freq. Axis</span><span class="t" style="left:1263.0px;top:158.0px;font-size:11.5px;line-height:14px;color:#222;letter-spacing:0.16px;">Limits</span><span class="t" style="left:1350.0px;top:158.0px;font-size:11.5px;line-height:14px;color:#222;letter-spacing:0.15px;">Controls</span><div class="sp"><i style="left:0px;width:4px;background:linear-gradient(#910700 0%,#910700 42.5%,#910700 52.6%,#940700 56%,#ab0900 56.4%,#a90800 56.9%,#950700 57.5%,#910700 59%,#910700 91%,#910700 98.6%,#910700 99.8%,#910700 100%)"></i><i style="left:4px;width:4px;background:linear-gradient(#910700 0%,#920700 56.6%,#a30800 57.5%,#9f0800 58%,#910700 58.9%,#910700 90.8%,#910700 98.5%,#910700 100%)"></i><i style="left:8px;width:4px;background:linear-gradient(#910700 0%,#910700 56.6%,#960700 58.1%,#980800 58.7%,#910700 60%,#910700 91.9%,#910700 99.5%,#910700 100%)"></i><i style="left:12px;width:4px;background:linear-gradient(#910700 0%,#910700 56.6%,#930700 59.2%,#910700 91.1%,#910700 98.8%,#910700 100%)"></i><i style="left:16px;width:4px;background:linear-gradient(#910700 0%,#910700 75.5%,#910700 99.4%,#910700 100%)"></i><i style="left:20px;width:4px;background:linear-gradient(#920700 0%,#910700 75.5%,#910700 99.4%,#910700 100%)"></i><i style="left:24px;width:4px;background:linear-gradient(#a00800 0%,#9d0800 31.9%,#980800 55.8%,#980800 59.2%,#980800 59.8%,#930800 60.7%,#950800 92.6%,#950800 98.5%,#950800 100%)"></i><i style="left:28px;width:4px;background:linear-gradient(#960800 0%,#920800 75.5%,#920800 99.4%,#920800 100%)"></i><i style="left:32px;width:4px;background:linear-gradient(#930800 0%,#910700 75.5%,#910700 99.4%,#910700 100%)"></i><i style="left:36px;width:4px;background:linear-gradient(#910700 0%,#910700 75.5%,#910700 99.4%,#910700 100%)"></i><i style="left:40px;width:4px;background:linear-gradient(#940700 0%,#910700 75.5%,#920700 99.4%,#920700 100%)"></i><i style="left:44px;width:4px;background:linear-gradient(#940700 0%,#910700 75.5%,#920700 99.4%,#920700 100%)"></i><i style="left:48px;width:4px;background:linear-gradient(#910700 0%,#910700 75.5%,#910700 99.4%,#910700 100%)"></i><i style="left:52px;width:4px;background:linear-gradient(#910700 0%,#910700 75.5%,#910700 99.4%,#910700 100%)"></i><i style="left:56px;width:4px;background:linear-gradient(#910700 0%,#910700 75.5%,#910700 99.4%,#910700 100%)"></i><i style="left:60px;width:4px;background:linear-gradient(#970800 0%,#910800 56.6%,#930800 99.1%,#930800 100%)"></i><i style="left:64px;width:4px;background:linear-gradient(#a30800 0%,#a10800 23.9%,#9a0800 41.9%,#9a0800 52%,#930800 55.4%,#970800 97.9%,#970800 99.8%,#970800 100%)"></i><i style="left:68px;width:4px;background:linear-gradient(#970800 0%,#930700 75.5%,#930700 99.4%,#930700 100%)"></i><i style="left:72px;width:4px;background:linear-gradient(#910700 0%,#910700 75.5%,#910700 99.4%,#910700 100%)"></i><i style="left:76px;width:4px;background:linear-gradient(#920700 0%,#910700 75.5%,#910700 99.4%,#910700 100%)"></i><i style="left:80px;width:4px;background:linear-gradient(#910700 0%,#910700 75.5%,#910800 99.4%,#920800 100%)"></i><i style="left:84px;width:4px;background:linear-gradient(#910700 0%,#910700 75.5%,#910700 99.4%,#910700 100%)"></i><i style="left:88px;width:4px;background:linear-gradient(#910700 0%,#910700 75.5%,#910700 99.4%,#910700 100%)"></i><i style="left:92px;width:4px;background:linear-gradient(#910700 0%,#910700 75.5%,#910700 99.4%,#910700 100%)"></i><i style="left:96px;width:4px;background:linear-gradient(#940700 0%,#920700 75.5%,#920700 99.4%,#920700 100%)"></i><i style="left:100px;width:4px;background:linear-gradient(#9e0800 0%,#9a0800 23.9%,#970800 47.9%,#910700 49.1%,#950800 91.6%,#950800 99.2%,#950800 100%)"></i><i style="left:104px;width:4px;background:linear-gradient(#940700 0%,#920700 75.5%,#920700 99.4%,#920700 100%)"></i><i style="left:108px;width:4px;background:linear-gradient(#910700 0%,#910700 75.5%,#910700 99.4%,#910700 100%)"></i><i style="left:112px;width:4px;background:linear-gradient(#910700 0%,#910700 75.5%,#910700 99.4%,#910700 100%)"></i><i style="left:116px;width:4px;background:linear-gradient(#940800 0%,#910800 75.5%,#920800 99.4%,#920800 100%)"></i><i style="left:120px;width:4px;background:linear-gradient(#9a0800 0%,#920800 56.6%,#940800 99.1%,#940800 100%)"></i><i style="left:124px;width:4px;background:linear-gradient(#980800 0%,#910800 56.6%,#930800 99.1%,#940800 100%)"></i><i style="left:128px;width:4px;background:linear-gradient(#9b0800 0%,#920800 56.6%,#940800 99.1%,#940800 100%)"></i><i style="left:132px;width:4px;background:linear-gradient(#9d0800 0%,#9b0800 23.9%,#970800 47.9%,#980800 49.8%,#970800 50.3%,#920800 51.2%,#950800 93.7%,#950800 99.5%,#950800 100%)"></i><i style="left:136px;width:4px;background:linear-gradient(#970800 0%,#940800 42.5%,#940800 48.3%,#950800 49.8%,#9d0800 50.3%,#910800 50.9%,#930800 93.4%,#930800 99.2%,#930800 100%)"></i><i style="left:140px;width:4px;background:linear-gradient(#910700 0%,#910700 42.5%,#930800 50.2%,#9a0800 50.6%,#910700 51.2%,#910700 93.7%,#910700 99.5%,#910700 100%)"></i><i style="left:144px;width:4px;background:linear-gradient(#910700 0%,#910700 42.5%,#910700 50.2%,#990800 50.8%,#910700 51.4%,#910700 93.9%,#910700 99.7%,#910700 100%)"></i><i style="left:148px;width:4px;background:linear-gradient(#910700 0%,#910700 42.5%,#910700 50.2%,#930800 51.1%,#910700 93.6%,#910700 99.4%,#910700 100%)"></i><i style="left:152px;width:4px;background:linear-gradient(#910700 0%,#910700 75.5%,#910700 99.4%,#910700 100%)"></i><i style="left:156px;width:4px;background:linear-gradient(#910700 0%,#910700 75.5%,#910700 99.4%,#910700 100%)"></i><i style="left:160px;width:4px;background:linear-gradient(#920700 0%,#910700 75.5%,#910700 99.4%,#910700 100%)"></i><i style="left:164px;width:4px;background:linear-gradient(#9e0800 0%,#9b0800 23.9%,#970800 47.9%,#950800 50.5%,#910700 51.2%,#950800 93.7%,#950800 99.5%,#950800 100%)"></i><i style="left:168px;width:4px;background:linear-gradient(#a70800 0%,#a60800 17.9%,#9c0800 35.9%,#9b0800 49.4%,#9b0800 50.3%,#920800 51.1%,#980800 93.6%,#980800 99.4%,#980800 100%)"></i><i style="left:172px;width:4px;background:linear-gradient(#980800 0%,#910700 56.6%,#930800 99.1%,#930800 100%)"></i><i style="left:176px;width:4px;background:linear-gradient(#910700 0%,#910700 75.5%,#910700 99.4%,#910700 100%)"></i><i style="left:180px;width:4px;background:linear-gradient(#910700 0%,#910700 75.5%,#910700 99.4%,#910700 100%)"></i><i style="left:184px;width:4px;background:linear-gradient(#970800 0%,#920800 75.5%,#930800 99.4%,#930800 100%)"></i><i style="left:188px;width:4px;background:linear-gradient(#920700 0%,#910700 75.5%,#920800 99.4%,#920800 100%)"></i><i style="left:192px;width:4px;background:linear-gradient(#970800 0%,#910700 56.6%,#930800 99.1%,#930800 100%)"></i><i style="left:196px;width:4px;background:linear-gradient(#920700 0%,#910700 75.5%,#910800 99.4%,#910800 100%)"></i><i style="left:200px;width:4px;background:linear-gradient(#990800 0%,#950800 42.5%,#950800 50.2%,#910800 60.3%,#930800 92.2%,#940800 99.8%,#940800 100%)"></i><i style="left:204px;width:4px;background:linear-gradient(#930800 0%,#920800 42.5%,#920800 50.2%,#910800 52.1%,#910700 94.6%,#920800 99.1%,#920800 100%)"></i><i style="left:208px;width:4px;background:linear-gradient(#9b0800 0%,#960800 42.5%,#960800 50.2%,#990800 51.7%,#920800 52.6%,#940800 95.1%,#950800 99.5%,#950800 100%)"></i><i style="left:212px;width:4px;background:linear-gradient(#970800 0%,#940800 42.5%,#940800 50.2%,#950800 51.4%,#9a0800 51.8%,#910700 52.5%,#930800 94.9%,#940800 99.4%,#940800 100%)"></i><i style="left:216px;width:4px;background:linear-gradient(#920700 0%,#910700 42.5%,#910700 50.2%,#910700 51.4%,#980800 52%,#910700 52.6%,#910700 95.1%,#910700 99.5%,#910700 100%)"></i><i style="left:220px;width:4px;background:linear-gradient(#930700 0%,#910700 42.5%,#910700 50.2%,#940800 52.1%,#910700 94.6%,#920700 99.1%,#920700 100%)"></i><i style="left:224px;width:4px;background:linear-gradient(#990800 0%,#920700 42.5%,#920700 50.2%,#960800 52.1%,#910700 53.1%,#920800 95.6%,#940800 100%)"></i><i style="left:228px;width:4px;background:linear-gradient(#940800 0%,#910700 75.5%,#910700 99.4%,#920700 100%)"></i><i style="left:232px;width:4px;background:linear-gradient(#910700 0%,#910700 75.5%,#910700 99.4%,#910700 100%)"></i><i style="left:236px;width:4px;background:linear-gradient(#a20800 0%,#910700 23.9%,#930800 99.4%,#930800 100%)"></i><i style="left:240px;width:4px;background:linear-gradient(#ae0900 0%,#a80900 7.7%,#910700 25.6%,#910700 82.2%,#940800 95.7%,#960800 99.1%,#960800 100%)"></i><i style="left:244px;width:4px;background:linear-gradient(#b60a00 0%,#b60900 4.4%,#990800 22.4%,#920700 35.9%,#940800 92.5%,#970800 98.3%,#980800 99.8%,#980800 100%)"></i><i style="left:248px;width:4px;background:linear-gradient(#c20f00 0%,#c40e00 3.4%,#b10900 16.9%,#9d0800 27%,#960800 40.5%,#910700 58.4%,#980800 90.3%,#9b0800 98%,#9d0800 100%)"></i><i style="left:252px;width:3px;background:linear-gradient(#bb1300 0%,#be1100 3.4%,#ae0900 16.9%,#960800 30.4%,#910700 62.3%,#990800 94.2%,#9d0800 100%)"></i><i style="left:255px;width:3px;background:linear-gradient(#b81500 0%,#bc1300 4.4%,#b30a00 14.6%,#990800 28.1%,#910700 52%,#940800 83.9%,#9b0800 97.4%,#9e0800 100%)"></i><i style="left:258px;width:3px;background:linear-gradient(#ae1700 0%,#b31500 3.4%,#ae0c00 13.5%,#920800 31.4%,#910700 73.9%,#9b0800 97.9%,#9d0800 99.8%,#9d0800 100%)"></i><i style="left:261px;width:3px;background:linear-gradient(#ae1900 0%,#b41800 3.4%,#b00e00 13.5%,#9a0800 27%,#920800 40.5%,#940800 83%,#9c0800 96.5%,#a00800 99.8%,#a00800 100%)"></i><i style="left:264px;width:3px;background:linear-gradient(#b11c00 0%,#b71a00 3.4%,#b61000 13.5%,#a50800 23.6%,#970800 33.7%,#910700 57.7%,#9a0800 89.6%,#a20800 99.7%,#a30800 100%)"></i><i style="left:267px;width:3px;background:linear-gradient(#b01e00 0%,#b61d00 2.6%,#b81300 12.7%,#a80900 22.9%,#990800 33%,#910700 56.9%,#9a0800 88.8%,#a30800 98.9%,#a50900 99.8%,#a50900 100%)"></i><i style="left:270px;width:3px;background:linear-gradient(#aa1f00 0%,#b01e00 2.6%,#b01000 16.1%,#a00800 26.2%,#960800 36.3%,#910700 60.3%,#970800 84.2%,#a10800 97.7%,#a40900 99.7%,#a40900 100%)"></i><i style="left:273px;width:3px;background:linear-gradient(#ad2200 0%,#b32000 3.4%,#b61600 13.5%,#a80900 23.6%,#990800 33.7%,#910700 57.7%,#9c0800 89.6%,#a70900 99.7%,#a70a00 100%)"></i><i style="left:276px;width:3px;background:linear-gradient(#b12500 0%,#b82500 2.6%,#bb1500 16.1%,#a90900 26.2%,#9b0800 36.3%,#960800 49.8%,#910700 51.4%,#9a0800 83.3%,#a40a00 96.8%,#a90b00 99.4%,#aa0b00 100%)"></i><i style="left:279px;width:3px;background:linear-gradient(#ad2700 0%,#b32600 2.6%,#b71700 16.1%,#a60900 26.2%,#9a0800 36.3%,#910800 54.3%,#9b0800 86.2%,#a90c00 99.7%,#aa0c00 100%)"></i><i style="left:282px;width:3px;background:linear-gradient(#982400 0%,#9f2400 2.6%,#a31600 16.1%,#980800 26.2%,#910700 39.7%,#930800 82.2%,#9d0b00 95.7%,#a30d00 99.1%,#a40d00 100%)"></i><i style="left:285px;width:3px;background:linear-gradient(#8f2300 0%,#952200 2.6%,#9b1500 16.1%,#910700 29.6%,#930800 86.2%,#a20e00 99.7%,#a30e00 100%)"></i><i style="left:288px;width:3px;background:linear-gradient(#8e2300 0%,#942300 2.6%,#9a1500 16.1%,#930800 26.2%,#910800 82.8%,#9d0d00 96.3%,#a30f00 99.7%,#a40f00 100%)"></i><i style="left:291px;width:3px;background:linear-gradient(#902400 0%,#972400 2.6%,#9c1000 20.6%,#930800 28.2%,#910700 70.7%,#940800 84.2%,#a10f00 97.7%,#a61000 99.7%,#a61000 100%)"></i><i style="left:294px;width:3px;background:linear-gradient(#912500 0%,#982400 3.4%,#9e0f00 21.3%,#940800 29%,#910700 71.5%,#960800 85%,#a31100 98.5%,#a71100 100%)"></i><i style="left:297px;width:3px;background:linear-gradient(#9d2900 0%,#a42900 2.6%,#ab1300 20.6%,#9f0800 28.2%,#970800 32.7%,#910700 56.6%,#970800 80.5%,#a20f00 94%,#ac1300 99.8%,#ad1300 100%)"></i><i style="left:300px;width:3px;background:linear-gradient(#ae2f00 0%,#b42f00 2.6%,#ba1600 20.6%,#ac0900 28.2%,#a00800 32.7%,#990800 46.2%,#970800 49.5%,#910700 50.5%,#9e0800 82.4%,#a91200 95.9%,#b01600 99.2%,#b21600 100%)"></i><i style="left:303px;width:3px;background:linear-gradient(#ab3200 0%,#b13100 2.6%,#b71800 20.6%,#ab0900 28.2%,#9f0800 34%,#970800 47.5%,#960800 49.5%,#910700 50.5%,#990800 74.4%,#a20c00 87.9%,#ad1600 98%,#b31800 100%)"></i><i style="left:306px;width:3px;background:linear-gradient(#b33700 0%,#ba3600 2.6%,#be1b00 20.6%,#b30b00 28.2%,#a40800 34%,#9c0800 47.5%,#9a0800 49.5%,#910700 50.3%,#a10800 82.2%,#ac1600 95.7%,#b31a00 99.1%,#b61b00 100%)"></i><i style="left:309px;width:3px;background:linear-gradient(#b83c00 0%,#be3b00 2.6%,#c21e00 20.6%,#b70d00 28.2%,#a60900 34%,#9e0800 47.5%,#9c0800 49.5%,#910700 50.3%,#a30a00 82.2%,#ae1800 95.7%,#b51c00 99.1%,#b71d00 100%)"></i><i style="left:312px;width:3px;background:linear-gradient(#ae3c00 0%,#b43c00 2.6%,#b82000 20.6%,#b10e00 28.2%,#a10800 34%,#980800 47.5%,#960800 49.5%,#910700 50.8%,#960800 68.7%,#a00b00 82.2%,#ab1a00 95.7%,#b21e00 99.1%,#b51f00 100%)"></i><i style="left:315px;width:3px;background:linear-gradient(#ab3d00 0%,#b13d00 2.6%,#b42100 20.6%,#b31400 26.4%,#a00800 34%,#910700 52%,#960800 69.9%,#9e0a00 80.1%,#ae1f00 98%,#b42100 100%)"></i><i style="left:318px;width:3px;background:linear-gradient(#b34300 0%,#b94300 2.6%,#b92d00 16.1%,#b81700 26.2%,#a50800 33.9%,#9a0800 47.4%,#980800 49.4%,#910700 50.3%,#970800 68.3%,#9f0a00 78.4%,#ad1f00 96.3%,#b62400 99.7%,#b72400 100%)"></i><i style="left:321px;width:3px;background:linear-gradient(#bb4a00 0%,#c24900 2.6%,#c13300 16.1%,#be1a00 26.2%,#b10b00 32.1%,#a40800 36.5%,#9e0800 46.6%,#9c0800 49.2%,#970800 49.8%,#910800 50.3%,#990800 68.3%,#a10b00 78.4%,#af2200 96.3%,#b82700 99.7%,#b92700 100%)"></i><i style="left:324px;width:3px;background:linear-gradient(#b94d00 0%,#c04d00 2.6%,#bf3600 16.1%,#b81200 29.6%,#aa0900 34%,#a10800 38.5%,#9b0800 48.6%,#980800 49.8%,#920800 50.8%,#950800 64.3%,#a10c00 77.8%,#ae2300 95.7%,#b62a00 99.1%,#b92b00 100%)"></i><i style="left:327px;width:3px;background:linear-gradient(#b34e00 0%,#b94e00 2.6%,#ba3800 16.1%,#b61400 29.6%,#a30800 35.4%,#980800 48.9%,#970800 50.2%,#910800 51.4%,#970800 69.3%,#a00e00 79.4%,#af2900 97.4%,#b82e00 100%)"></i><i style="left:330px;width:3px;background:linear-gradient(#b75400 0%,#be5400 2.6%,#c03d00 16.1%,#b91600 29.6%,#b30c00 33%,#a20800 37.4%,#9c0800 47.5%,#9c0800 50.2%,#920800 50.8%,#950800 64.3%,#9d0a00 74.4%,#ab2300 92.3%,#b32e00 98.2%,#b93100 99.7%,#ba3100 100%)"></i><i style="left:333px;width:3px;background:linear-gradient(#b65800 0%,#bd5700 3.4%,#bf3f00 16.9%,#b91500 30.4%,#b10b00 33.7%,#a20800 37.1%,#9c0800 47.2%,#9a0800 49.2%,#a00800 49.8%,#a20800 50.2%,#930800 50.6%,#940800 64.1%,#9c0b00 74.2%,#ab2600 92.2%,#b33200 98%,#ba3500 100%)"></i><i style="left:336px;width:3px;background:linear-gradient(#a75500 0%,#af5400 3.4%,#b33e00 16.9%,#b31600 30.4%,#ad0c00 33.7%,#9a0800 38.2%,#940800 48.3%,#940800 49.5%,#a20800 50%,#a20800 50.2%,#910800 50.6%,#940800 68.6%,#a01600 82.1%,#aa2e00 95.6%,#b73700 100%)"></i><i style="left:339px;width:3px;background:linear-gradient(#9f5200 0%,#a65300 2.6%,#ac3f00 16.1%,#ae1900 29.6%,#ae0f00 33%,#990800 37.4%,#910800 47.5%,#910700 49.5%,#9f0800 50%,#9f0800 50.2%,#910700 50.6%,#910800 68.6%,#9e1700 82.1%,#a83100 95.6%,#b43a00 100%)"></i><i style="left:342px;width:3px;background:linear-gradient(#a15600 0%,#a85700 2.6%,#af4200 16.1%,#b11a00 29.6%,#af0c00 34%,#990800 38.5%,#930800 48.6%,#920800 49.5%,#a00800 50%,#a00800 50.2%,#910800 50.6%,#920800 68.6%,#a22000 86.5%,#aa3600 96.6%,#b53d00 100%)"></i><i style="left:345px;width:3px;background:linear-gradient(#925000 0%,#995000 3.4%,#a13d00 16.9%,#a91800 30.4%,#ab0e00 33.7%,#980800 37.1%,#920700 40.5%,#910700 48.2%,#920800 49.7%,#9b0800 50%,#910700 50.6%,#910800 68.6%,#961400 78.7%,#a63700 96.6%,#b13e00 100%)"></i><i style="left:348px;width:3px;background:linear-gradient(#8f4e00 0%,#964d00 4.4%,#9f3900 17.9%,#a91500 31.4%,#aa0d00 34%,#930700 38.5%,#910700 48.6%,#930800 49.8%,#980800 50.2%,#910700 50.8%,#910800 68.7%,#921100 76.4%,#a23400 94.3%,#aa3e00 98.8%,#af4000 100%)"></i><i style="left:351px;width:3px;background:linear-gradient(#aa5e00 0%,#b15e00 3.4%,#ba4700 16.9%,#b80c00 34.8%,#a30800 38.2%,#9b0800 48.3%,#9a0800 49.5%,#a20800 50%,#930800 50.6%,#950800 68.6%,#a11e00 82.1%,#ac3c00 95.6%,#b74600 100%)"></i><i style="left:354px;width:3px;background:linear-gradient(#bc6d00 0%,#c36d00 3.4%,#cd5300 16.9%,#c30e00 34.8%,#ae0900 38.2%,#a50900 48.3%,#a40900 49.5%,#b40900 50%,#b30900 50.2%,#9d0800 50.5%,#950800 50.8%,#960800 64.3%,#9d1100 74.4%,#b64800 98.3%,#bc4b00 99.8%,#bc4b00 100%)"></i><i style="left:357px;width:3px;background:linear-gradient(#b26d00 0%,#b96b00 4.4%,#c15a00 14.6%,#c24800 20.4%,#be2000 30.5%,#bf0f00 35%,#a90900 38.3%,#a00800 48.5%,#a10800 49.7%,#bd0a00 50.2%,#b70a00 50.3%,#9a0800 50.6%,#940800 51.1%,#930800 64.6%,#991300 74.7%,#ac3d00 92.6%,#b34a00 98.5%,#b94d00 100%)"></i><i style="left:360px;width:3px;background:linear-gradient(#a76800 0%,#ad6900 3.4%,#b95200 16.9%,#b92e00 27%,#bb1100 34.7%,#a60900 38%,#9f0800 42.5%,#9b0800 48.3%,#9a0800 49.5%,#a10800 49.8%,#bc0a00 50.2%,#b90a00 50.3%,#9a0800 50.6%,#920800 50.9%,#910700 64.4%,#981a00 77.9%,#a73c00 91.4%,#ab4800 97.2%,#b44f00 99.8%,#b44f00 100%)"></i><i style="left:363px;width:3px;background:linear-gradient(#a76b00 0%,#ad6b00 3.4%,#b85500 16.9%,#ba3000 27%,#ba1100 34.7%,#ad0900 37.3%,#a10800 39.9%,#9c0800 47.5%,#9b0800 49.5%,#a20800 49.8%,#c30a00 50.2%,#c30a00 50.3%,#9d0800 50.6%,#950800 50.8%,#910700 55.2%,#910700 65.3%,#981d00 78.8%,#a53800 89%,#a94900 96.6%,#b25200 100%)"></i><i style="left:366px;width:3px;background:linear-gradient(#a86e00 0%,#ae6e00 3.4%,#b95700 16.9%,#bb3200 27%,#ba1200 34.7%,#ae0900 37.3%,#a20800 39.9%,#9d0800 47.5%,#9b0800 49.5%,#a00800 49.8%,#ae0900 50%,#c40a00 50.2%,#d20b00 50.3%,#c60a00 50.5%,#ac0900 50.6%,#9a0800 50.8%,#920800 51.1%,#910700 64.6%,#921500 74.7%,#a43900 88.2%,#ab5000 98.3%,#b05400 99.8%,#b15400 100%)"></i><i style="left:369px;width:3px;background:linear-gradient(#a46f00 0%,#aa7000 2.6%,#b25a00 16.1%,#b83600 26.2%,#b71500 33.9%,#b10c00 36.5%,#a20800 39.1%,#9a0800 49.2%,#9b0800 49.8%,#a40800 50%,#ce0b00 50.3%,#cf0b00 50.5%,#9f0800 50.8%,#950800 50.9%,#910700 54.3%,#900b00 67.8%,#931d00 77.9%,#a23a00 88%,#a85200 98.2%,#ad5600 99.7%,#ae5600 100%)"></i><i style="left:372px;width:3px;background:linear-gradient(#9c6c00 0%,#a26c00 3.4%,#ac5600 16.9%,#b33200 27%,#b31200 34.7%,#9d0800 39.1%,#960800 49.2%,#960800 49.8%,#9b0800 50%,#ac0900 50.2%,#c80a00 50.3%,#d90b00 50.5%,#cc0a00 50.6%,#ae0900 50.8%,#990800 50.9%,#910700 51.2%,#910800 64.7%,#8f1e00 78.2%,#9f3c00 88.3%,#a45300 98.5%,#aa5700 100%)"></i><i style="left:375px;width:3px;background:linear-gradient(#9a6c00 0%,#a06c00 3.4%,#a95600 16.9%,#b13200 27%,#b11200 34.7%,#9c0800 39.1%,#940800 49.2%,#960800 50%,#a00800 50.2%,#cf0b00 50.5%,#ce0b00 50.6%,#9d0800 50.9%,#930800 51.1%,#910800 64.6%,#8d1f00 78.1%,#9e3d00 88.2%,#a25400 98.3%,#a75900 99.8%,#a75900 100%)"></i><i style="left:378px;width:3px;background:linear-gradient(#936800 0%,#996900 3.4%,#a25300 16.9%,#ad3200 27%,#ad1200 34.7%,#990800 39.1%,#910800 49.2%,#920800 50%,#9a0800 50.2%,#af0900 50.3%,#cd0b00 50.5%,#da0b00 50.6%,#c60a00 50.8%,#a80800 50.9%,#960800 51.1%,#910700 51.4%,#910800 64.9%,#8c2100 78.4%,#9b3f00 88.5%,#9c5000 96.2%,#a35800 99.5%,#a45900 100%)"></i><i style="left:381px;width:3px;background:linear-gradient(#a37400 0%,#a97500 3.4%,#b15c00 16.9%,#b83500 27%,#b71a00 32.8%,#af0d00 36.2%,#a00800 39.6%,#990800 49.7%,#9b0800 50.2%,#a70900 50.3%,#d70b00 50.6%,#d20b00 50.8%,#9d0800 51.1%,#930800 51.2%,#910800 64.7%,#8d1900 74.8%,#902600 79.3%,#9e3e00 87%,#a05600 97.1%,#a75d00 99.7%,#a85d00 100%)"></i><i style="left:384px;width:3px;background:linear-gradient(#9d7300 0%,#a37300 3.4%,#ac5c00 16.9%,#b53600 27%,#b41a00 32.8%,#ac0d00 36.2%,#9d0800 39.6%,#970800 49.7%,#980800 50.2%,#a20800 50.3%,#ba0900 50.5%,#d90b00 50.6%,#df0b00 50.8%,#a50800 51.1%,#950800 51.2%,#910700 51.7%,#900900 65.2%,#8c1b00 75.3%,#922e00 81.1%,#9d4400 88.8%,#9d5600 96.5%,#a55e00 99.8%,#a55f00 100%)"></i><i style="left:387px;width:3px;background:linear-gradient(#8a6500 0%,#8f5500 13.5%,#9c3b00 23.6%,#a42500 29.4%,#a61300 33.9%,#930800 38.3%,#910700 48.5%,#910700 50%,#930800 50.3%,#9f0800 50.5%,#d50b00 50.8%,#ce0b00 50.9%,#990800 51.2%,#910700 51.5%,#900900 65%,#8c1b00 75.2%,#913900 85.3%,#945100 95.4%,#9c5b00 99.8%,#9c5b00 100%)"></i><i style="left:390px;width:3px;background:linear-gradient(#8a6400 0%,#8e5300 13.5%,#9b3a00 23.6%,#a42400 29.4%,#a61300 33.9%,#920700 38.3%,#910700 48.5%,#910700 50%,#910800 50.3%,#970800 50.5%,#c20a00 50.8%,#c40a00 50.9%,#990800 51.2%,#910700 51.5%,#900900 65%,#8c1c00 75.2%,#903a00 85.3%,#975900 98.8%,#9b5c00 100%)"></i><i style="left:393px;width:3px;background:linear-gradient(#8a6400 0%,#8e5300 13.5%,#a12f00 27%,#a61600 32.8%,#a10d00 35.4%,#910700 38.8%,#910700 48.9%,#910700 50.2%,#960800 50.5%,#bc0a00 50.8%,#be0a00 50.9%,#970800 51.2%,#910700 51.5%,#900900 65%,#8c1c00 75.2%,#924400 88.7%,#925400 96.3%,#995c00 99.7%,#9a5c00 100%)"></i><i style="left:396px;width:3px;background:linear-gradient(#8a6300 0%,#8c5000 13.5%,#8e3400 23.6%,#9a2000 29.4%,#9e1000 33.9%,#910700 37.3%,#910700 47.4%,#910700 50%,#930800 50.5%,#9c0800 50.6%,#ad0900 50.8%,#b10900 50.9%,#950800 51.2%,#910700 51.7%,#900900 65.2%,#8c1d00 75.3%,#8d4400 88.8%,#8d5200 96.5%,#945a00 99.8%,#945a00 100%)"></i><i style="left:399px;width:3px;background:linear-gradient(#8a6100 0%,#8c4e00 13.5%,#8d3200 23.6%,#9a1900 31.3%,#9e1000 33.9%,#910700 37.3%,#910700 47.4%,#910700 50%,#910800 50.5%,#970800 50.6%,#a40800 50.8%,#a90900 50.9%,#950800 51.2%,#910700 51.8%,#900900 65.3%,#8c1d00 75.5%,#8e3d00 85.6%,#8c5100 95.7%,#905800 99.1%,#935a00 100%)"></i><i style="left:402px;width:3px;background:linear-gradient(#8a5f00 0%,#8c4c00 13.5%,#8d3000 23.6%,#9b1800 31.3%,#9d0c00 34.7%,#910700 37.3%,#910700 47.4%,#910700 50%,#920700 50.6%,#9d0800 50.9%,#910700 51.5%,#910800 65%,#8c1d00 75.2%,#8e3d00 85.3%,#8c5200 95.4%,#935b00 99.8%,#935b00 100%)"></i><i style="left:405px;width:3px;background:linear-gradient(#8a5d00 0%,#8c4a00 13.5%,#8d2400 27%,#990b00 34.7%,#910700 37.3%,#910700 61.2%,#8f0e00 68.9%,#8c2200 76.5%,#8d4100 86.7%,#8b5400 96.8%,#8e5800 99.4%,#8f5a00 100%)"></i><i style="left:408px;width:3px;background:linear-gradient(#8b5a00 0%,#8d4600 13.5%,#8c2200 27%,#950a00 34.7%,#910700 38%,#910700 62%,#8f0f00 69.6%,#8c2400 77.3%,#8d4400 87.4%,#8b5500 97.5%,#8b5700 99.5%,#8d5800 100%)"></i><i style="left:411px;width:3px;background:linear-gradient(#8b5600 0%,#8d4300 13.5%,#8c2000 27%,#9a0a00 34.7%,#910700 37.3%,#910700 61.2%,#900a00 67%,#8c1b00 74.7%,#8e3d00 84.8%,#8b5600 98.3%,#8f5900 99.8%,#8f5a00 100%)"></i><i style="left:414px;width:3px;background:linear-gradient(#8b5400 0%,#8d4100 13.5%,#8d1f00 27%,#9a1300 31.4%,#9f0900 34.8%,#910700 37.4%,#910700 61.3%,#900a00 67.2%,#8c1b00 74.8%,#8e3e00 85%,#8d5800 98.5%,#915b00 100%)"></i><i style="left:417px;width:3px;background:linear-gradient(#8b5200 0%,#8e3f00 13.5%,#902900 23.6%,#9a1d00 28.1%,#a31000 32.5%,#a50800 35.1%,#910700 38.5%,#910700 62.4%,#900b00 68.3%,#8c1f00 75.9%,#8d4200 86%,#8e5600 96.2%,#945e00 99.5%,#955f00 100%)"></i><i style="left:420px;width:3px;background:linear-gradient(#8c5200 0%,#8e3e00 13.5%,#922800 23.6%,#9c1e00 28.1%,#a61000 32.5%,#a80900 35.1%,#910700 38.5%,#910700 62.4%,#900b00 68.3%,#8c1f00 75.9%,#8d4300 86%,#8e5800 96.2%,#955f00 99.5%,#966000 100%)"></i><i style="left:423px;width:3px;background:linear-gradient(#8c5100 0%,#923f00 13.5%,#942800 23.6%,#9d1d00 28.1%,#aa0c00 33.9%,#a90900 35.4%,#920700 38.8%,#910700 62.7%,#900c00 68.6%,#8c2100 76.2%,#8d4500 86.3%,#905a00 96.5%,#976200 99.8%,#976200 100%)"></i><i style="left:426px;width:3px;background:linear-gradient(#905400 0%,#975400 3.4%,#9f3d00 16.9%,#9f2900 24.5%,#b20900 34.7%,#960800 39.1%,#910700 57.1%,#900900 67.2%,#8c1c00 74.8%,#8d4300 85%,#935b00 95.1%,#996400 99.5%,#9a6500 100%)"></i><i style="left:429px;width:3px;background:linear-gradient(#9a5b00 0%,#a15b00 3.4%,#aa4b00 13.5%,#a92300 27%,#b80a00 34.7%,#9c0800 39.1%,#910700 52.6%,#910800 66.1%,#8d1900 73.8%,#8e4100 83.9%,#955800 91.6%,#976200 97.4%,#9d6900 100%)"></i><i style="left:432px;width:3px;background:linear-gradient(#a56300 0%,#ac6300 3.4%,#b55200 13.5%,#b74700 16.9%,#b02e00 24.5%,#be0b00 34.7%,#ae0900 37.3%,#a20800 39.3%,#980800 49.4%,#910700 51.4%,#910700 64.9%,#8d1600 72.5%,#8e3e00 82.7%,#975400 88.5%,#9c6900 98.6%,#a06c00 99.8%,#a06c00 100%)"></i><i style="left:435px;width:3px;background:linear-gradient(#b16e00 0%,#b86e00 3.4%,#c15b00 13.5%,#c04a00 17.9%,#bb2500 28.1%,#c30f00 33.9%,#c20a00 35.4%,#aa0900 38.8%,#9f0800 48.9%,#9b0800 50.5%,#910700 50.9%,#910700 64.4%,#8e1500 72.1%,#8e3e00 82.2%,#9a5700 88%,#9f6c00 98.2%,#a37000 99.7%,#a37100 100%)"></i><i style="left:438px;width:3px;background:linear-gradient(#b47400 0%,#bb7400 3.4%,#c56100 13.5%,#c85400 16.9%,#bd2c00 27%,#c70e00 34.7%,#bc0a00 36.7%,#aa0900 39.3%,#a10800 49.4%,#9f0800 50.3%,#910700 50.9%,#910700 64.4%,#8d1600 72.1%,#8e4000 82.2%,#9b5a00 88%,#a06f00 98.2%,#a47300 99.7%,#a47400 100%)"></i><i style="left:441px;width:3px;background:linear-gradient(#b17600 0%,#b87600 3.4%,#c36400 13.5%,#c45200 17.9%,#bc2900 28.1%,#c51200 33.9%,#c10a00 35.9%,#aa0900 39.3%,#a00800 49.4%,#9e0800 50.3%,#910700 50.9%,#910700 64.4%,#8c1e00 74.5%,#8e4200 82.2%,#9a5c00 88%,#9f7100 98.2%,#a37500 99.7%,#a47600 100%)"></i><i style="left:444px;width:3px;background:linear-gradient(#b37c00 0%,#ba7d00 2.6%,#c46c00 12.7%,#c95c00 17.2%,#c02f00 27.3%,#c70f00 35%,#b60900 37.6%,#ab0900 39.6%,#a10800 49.7%,#9d0800 50.5%,#910700 50.9%,#910700 64.4%,#8d1700 72.1%,#8e4400 82.2%,#9a5f00 88%,#a07400 98.2%,#a47800 99.7%,#a57900 100%)"></i><i style="left:447px;width:3px;background:linear-gradient(#bf8900 0%,#c68900 3.4%,#d17600 13.5%,#d66300 17.9%,#c93000 28.1%,#cd1d00 32.5%,#ce1000 35.1%,#bc0a00 37.7%,#b10900 40.3%,#aa0900 48%,#a70900 50%,#a10800 50.5%,#930800 50.8%,#910700 64.3%,#8d1700 71.9%,#8e3900 79.6%,#9d6100 87.3%,#a37800 97.4%,#a97e00 100%)"></i><i style="left:450px;width:3px;background:linear-gradient(#c49300 0%,#ca9400 2.6%,#d48200 12.7%,#db6900 18.6%,#cd3200 28.7%,#ce2200 32.1%,#d01100 35.4%,#bd0a00 38%,#b40900 40.6%,#ac0900 48.3%,#a80900 50.3%,#a00800 50.6%,#940800 50.9%,#910800 64.4%,#8d1900 72.1%,#8e3c00 79.8%,#9c5e00 85.6%,#a27400 93.3%,#a88100 99.1%,#ab8300 100%)"></i><i style="left:453px;width:3px;background:linear-gradient(#ba9100 0%,#c19100 3.4%,#c68500 11%,#d27400 16.9%,#c62a00 30.4%,#cd1500 34.8%,#be0a00 37.4%,#b10900 39.4%,#a60900 49.5%,#a40900 50.5%,#930800 51.2%,#900900 64.7%,#8c1b00 72.4%,#904e00 82.5%,#9d6900 88.3%,#a48000 98.5%,#a88400 100%)"></i><i style="left:456px;width:3px;background:linear-gradient(#b99500 0%,#bf9600 2.6%,#c78500 12.7%,#d07700 17.2%,#c52b00 30.7%,#cc1600 35.1%,#b50900 38.5%,#ad0900 41.9%,#a40900 49.5%,#a50900 50.3%,#ac0900 50.6%,#930800 51.2%,#900a00 64.7%,#8c1c00 72.4%,#8f5000 82.5%,#9d6c00 88.3%,#a48300 98.5%,#a98700 100%)"></i><i style="left:459px;width:3px;background:linear-gradient(#ae9100 0%,#b49300 2.6%,#bb8200 12.7%,#c66f00 18.6%,#c12500 32.1%,#c71900 34.7%,#c00f00 36.7%,#ac0900 39.3%,#9f0800 49.4%,#a20800 50.3%,#af0900 50.6%,#ab0900 50.8%,#960800 51.1%,#910700 51.8%,#910700 62%,#8c1b00 72.1%,#8c4f00 82.2%,#996b00 88%,#a18200 98.2%,#a58700 99.7%,#a68700 100%)"></i><i style="left:462px;width:3px;background:linear-gradient(#937c00 0%,#987b00 4.4%,#9b7000 12.1%,#a76300 17.9%,#ae2500 31.4%,#b81700 34.8%,#af0e00 36.8%,#9c0800 39.4%,#930700 49.5%,#940800 50.2%,#a20800 50.6%,#920700 51.1%,#910700 61.2%,#8e1300 68.9%,#8c2100 73.3%,#8b5600 83.4%,#936f00 91.1%,#9a7f00 98.8%,#9d8300 100%)"></i><i style="left:465px;width:3px;background:linear-gradient(#887200 0%,#8a5f00 13.5%,#983300 27%,#9d2200 31.4%,#a91500 34.8%,#a10d00 36.8%,#920700 38.8%,#910700 48.9%,#910700 50.2%,#9a0800 50.6%,#910700 51.1%,#910700 61.2%,#8e1300 68.9%,#8c2200 73.3%,#8b5600 83.4%,#8e7600 96.9%,#947c00 99.5%,#957d00 100%)"></i><i style="left:468px;width:3px;background:linear-gradient(#887100 0%,#8a5d00 13.5%,#902f00 27%,#961f00 31.4%,#a41500 34.8%,#9d0c00 36.8%,#910700 38.3%,#910700 62.3%,#8c1d00 72.4%,#8b5300 82.5%,#896800 90.2%,#8d7700 97.9%,#937c00 99.8%,#937c00 100%)"></i><i style="left:471px;width:3px;background:linear-gradient(#887000 0%,#8b5a00 13.5%,#922f00 27%,#981f00 31.4%,#a61500 34.8%,#a10c00 36.8%,#910700 38.8%,#910800 62.7%,#8d1700 70.4%,#8d3100 76.2%,#8b5900 83.9%,#8c7100 94%,#957f00 99.8%,#957f00 100%)"></i><i style="left:474px;width:3px;background:linear-gradient(#896f00 0%,#8b5800 13.5%,#963000 27%,#a11c00 32.8%,#aa1200 35.4%,#a10a00 37.4%,#910700 39.4%,#910800 63.3%,#8d1900 71%,#8e3500 76.8%,#8b5500 82.7%,#8c6c00 90.3%,#937d00 98%,#988200 100%)"></i><i style="left:477px;width:3px;background:linear-gradient(#896f00 0%,#8b6500 7.7%,#8f4d00 17.8%,#9c2e00 27.9%,#a21e00 32.4%,#ae1500 35%,#aa0c00 37%,#930800 39.6%,#910900 63.5%,#8d1900 71.2%,#8c4f00 81.3%,#8c6b00 89%,#988400 99.1%,#9b8600 100%)"></i><i style="left:480px;width:3px;background:linear-gradient(#896f00 0%,#8e6f00 3.4%,#8d5800 13.5%,#944900 19.3%,#a51d00 32.8%,#b01300 35.4%,#aa0a00 37.4%,#930800 40%,#900900 64%,#8c1b00 71.6%,#8b5300 81.7%,#8b6800 87.6%,#968200 97.7%,#9c8800 99.7%,#9d8900 100%)"></i><i style="left:483px;width:3px;background:linear-gradient(#907600 0%,#987900 2.6%,#996100 12.7%,#9a4f00 18.6%,#a62000 32.1%,#b41400 35.4%,#b00a00 37.4%,#990800 40%,#910700 45.9%,#900900 63.8%,#8c1b00 71.5%,#8b5300 81.6%,#8e6b00 87.4%,#998600 97.5%,#9f8c00 99.5%,#a08d00 100%)"></i><i style="left:486px;width:3px;background:linear-gradient(#957c00 0%,#9d8000 2%,#a06900 12.1%,#9e5400 17.9%,#a63000 28.1%,#aa1f00 32.5%,#b81300 35.9%,#b10900 37.9%,#9a0800 40.5%,#910700 46.3%,#900a00 64.3%,#8c1d00 71.9%,#8b5700 82.1%,#8b6500 85.4%,#957c00 91.3%,#9f8e00 98.9%,#a29100 99.8%,#a29200 100%)"></i><i style="left:489px;width:3px;background:linear-gradient(#9e8400 0%,#a68800 2%,#aa7900 9.7%,#a85300 19.8%,#ac2b00 29.9%,#b11e00 33.3%,#bc1000 36.7%,#af0900 38.7%,#9f0800 40.6%,#920700 48.3%,#910700 61.8%,#8e1500 69.5%,#8d2800 73.9%,#8b5600 81.6%,#906c00 86%,#9b8600 93.7%,#a49500 99.5%,#a69600 100%)"></i><i style="left:492px;width:3px;background:linear-gradient(#b29800 0%,#ba9d00 2%,#c18d00 9.7%,#c07400 15.5%,#bc5e00 19.9%,#b92f00 30.1%,#bc2100 33.4%,#c71200 36.8%,#bb0a00 38.8%,#aa0900 40.8%,#9a0800 48.5%,#960800 49.7%,#910700 50.6%,#900a00 64.1%,#8c1e00 71.8%,#8b5a00 81.9%,#9a7b00 87.7%,#a69800 97.9%,#ac9f00 99.8%,#ac9f00 100%)"></i><i style="left:495px;width:3px;background:linear-gradient(#bda600 0%,#c6ab00 2%,#ce9d00 9.7%,#ce8300 15.5%,#c86100 21.3%,#bf2d00 31.4%,#c22400 33.4%,#ce1400 36.8%,#c40a00 38.8%,#b20900 40.8%,#a10800 48.5%,#9c0800 49.7%,#910700 50.2%,#900a00 63.7%,#8c1d00 71.3%,#8c5a00 81.4%,#9d7f00 87.3%,#a99d00 97.4%,#b1a600 100%)"></i><i style="left:498px;width:3px;background:linear-gradient(#c1af00 0%,#cab400 2%,#d3a800 9.7%,#d69600 14.1%,#cd6600 21.8%,#c32e00 31.9%,#c62500 33.9%,#d11400 37.3%,#c40a00 39.3%,#b40900 41.3%,#a20800 48.9%,#9e0800 49.7%,#910700 50.2%,#900a00 63.7%,#8c1f00 71.3%,#8e5e00 81.4%,#9e8300 87.3%,#aba200 97.4%,#b2aa00 100%)"></i><i style="left:501px;width:3px;background:linear-gradient(#c4b700 0%,#cdbd00 2%,#d7b300 9.7%,#dca200 14.1%,#cb4a00 27.6%,#c52900 33.4%,#d21a00 36.8%,#cd0e00 38.8%,#b60900 41.4%,#a40900 49.1%,#9e0800 49.8%,#910700 50.3%,#910700 60.4%,#8e1500 68.1%,#8c2700 72.5%,#8b5900 80.2%,#9d8100 86%,#a89d00 93.7%,#b3ac00 99.5%,#b4ad00 100%)"></i><i style="left:504px;width:3px;background:linear-gradient(#c3ba00 0%,#ccc100 2%,#dab300 12.1%,#da9b00 16.6%,#cf6400 24.2%,#c63600 31.9%,#c82700 34.5%,#d21600 37.9%,#bf0a00 40.5%,#b20900 42.5%,#a60900 48.3%,#a00800 49.8%,#920800 50.3%,#910700 60.4%,#8d1600 68.1%,#8d2900 72.5%,#8c5c00 80.2%,#9d8400 86%,#a89f00 93.7%,#b3ae00 99.5%,#b5af00 100%)"></i><i style="left:507px;width:3px;background:linear-gradient(#c6bf00 0%,#cfc600 2%,#d8c100 9.7%,#e0b500 14.1%,#d99500 18.6%,#cc4d00 28.7%,#c72a00 34.5%,#d31900 37.9%,#c80d00 39.9%,#b40900 42.5%,#a70900 48.3%,#a10800 49.8%,#910700 50.6%,#910700 60.7%,#8d1800 68.4%,#8e3500 74.2%,#8c5e00 80.1%,#9a8000 84.5%,#a59a00 90.3%,#afab00 98%,#b6b200 100%)"></i><i style="left:510px;width:3px;background:linear-gradient(#d4d000 0%,#dcd700 2%,#e5d400 9.7%,#ecc800 14.1%,#ebb200 17.5%,#da7000 25.2%,#ce3900 32.8%,#cf2900 35.4%,#d91c00 38%,#ce1000 40%,#bb0a00 42.6%,#ad0900 48.5%,#a70900 50%,#9c0800 50.6%,#910800 51.2%,#910800 61.3%,#8c1b00 69%,#8c4900 76.7%,#936c00 81.1%,#a08b00 85.6%,#aaa200 91.4%,#b6b400 99.1%,#b9b800 100%)"></i><i style="left:513px;width:3px;background:linear-gradient(#d2d200 0%,#dddb00 2.6%,#e5d800 10.3%,#eacc00 14.7%,#eabd00 17.3%,#d87700 25%,#cd3e00 32.7%,#cc2d00 35.3%,#d61b00 38.7%,#bc0a00 42%,#a60900 49.7%,#a70900 50.3%,#ab0900 50.6%,#940800 51.1%,#910900 61.2%,#8c1c00 68.9%,#8c4b00 76.5%,#8e6500 79.9%,#9b8600 84.4%,#a49b00 88.8%,#b3b300 98.9%,#b6b600 99.8%,#b7b600 100%)"></i><i style="left:516px;width:3px;background:linear-gradient(#d6d900 0%,#dfe100 2.6%,#e8e100 10.3%,#ecd700 14.7%,#eec500 18.1%,#d97900 25.8%,#ce3d00 33.4%,#cd2c00 36%,#d61e00 38.7%,#ca1100 40.6%,#b90a00 43.3%,#aa0900 49.1%,#a60900 50%,#a90900 50.3%,#b80900 50.6%,#b40900 50.8%,#990800 51.1%,#910700 51.4%,#900a00 61.5%,#8c2000 69.2%,#8d4300 75%,#8e6500 79.4%,#9b8700 83.9%,#a49c00 88.3%,#b0b100 98.5%,#b5b700 100%)"></i><i style="left:519px;width:3px;background:linear-gradient(#d2da00 0%,#dfe200 5.8%,#e8e300 11.7%,#ebd700 16.1%,#e8bf00 19.5%,#d58200 25.3%,#cc4300 33%,#ca2c00 36.3%,#d21d00 39%,#c51100 41%,#b50a00 43.6%,#a50800 49.4%,#a40800 50.3%,#c40a00 50.8%,#b90900 50.9%,#a50800 51.1%,#960800 51.2%,#910700 51.5%,#900a00 61.7%,#8c2300 69.3%,#8d4700 75.2%,#8c6800 79.6%,#9c9100 85.4%,#a8a700 93.1%,#adb000 98.9%,#b1b400 99.8%,#b1b400 100%)"></i><i style="left:522px;width:3px;background:linear-gradient(#c5d300 0%,#dce000 7.7%,#e5e200 12.1%,#e3cd00 17.9%,#d9ad00 21.3%,#cc7f00 25.8%,#c54100 33.4%,#c22f00 36%,#ca1c00 39.4%,#b10c00 42.8%,#a10800 48.6%,#9a0800 50.2%,#a10800 50.5%,#c00a00 50.8%,#bd0a00 50.9%,#980800 51.2%,#910700 51.5%,#910700 59.2%,#8c1a00 66.9%,#8e3800 72.7%,#8a6e00 80.4%,#968c00 84.8%,#a1a200 92.5%,#a6aa00 98.3%,#abb000 99.8%,#acb000 100%)"></i><i style="left:525px;width:3px;background:linear-gradient(#b6cb00 0%,#c4d500 3.4%,#dddf00 11%,#d7cc00 16.9%,#d7c300 18.9%,#c89600 23.3%,#bf6c00 27.8%,#bd4000 33.6%,#ba2900 37%,#c11c00 39.6%,#a90c00 42.9%,#980800 48.8%,#920800 50.3%,#970800 50.5%,#a60800 50.6%,#bc0a00 50.8%,#c50a00 50.9%,#b60900 51.1%,#9f0800 51.2%,#930800 51.4%,#910700 59%,#8c1a00 66.7%,#8e3900 72.5%,#886f00 80.2%,#938d00 86%,#9b9b00 91.9%,#9ea300 97.7%,#a3aa00 99.7%,#a4ab00 100%)"></i><i style="left:528px;width:3px;background:linear-gradient(#acc800 0%,#c8d701 7.7%,#d9de00 11%,#dad800 14.4%,#d5c600 18.9%,#cba600 22.2%,#bb7600 26.7%,#bc4800 32.5%,#b62a00 37%,#bc1c00 39.6%,#a20a00 44%,#910700 49.8%,#910800 50.5%,#970800 50.6%,#b80900 50.9%,#b60900 51.1%,#950800 51.4%,#910700 51.7%,#910700 59.4%,#8c1c00 67%,#8e3d00 72.9%,#887200 80.5%,#8c8400 83.9%,#969600 89.7%,#989f00 97.4%,#9ea800 100%)"></i><i style="left:531px;width:3px;background:linear-gradient(#9fc202 0%,#bad004 7.7%,#d7de02 12.1%,#e0e000 14.7%,#dbcf00 19.2%,#d1ae00 22.5%,#c08300 25.9%,#bd4300 33.6%,#b62b00 37%,#bb1800 40.3%,#a10800 44.8%,#930800 49.2%,#910700 50.5%,#950800 50.6%,#b10900 50.9%,#b10900 51.1%,#950800 51.4%,#910700 52%,#910800 59.7%,#8c1f00 67.3%,#8d4100 73.2%,#896c00 79%,#887c00 82.4%,#949300 88.2%,#96a000 98.3%,#9ba700 99.8%,#9ba700 100%)"></i><i style="left:534px;width:3px;background:linear-gradient(#92bd03 0%,#a3c405 5.8%,#bdd106 10.3%,#d9df03 13.7%,#dfdf00 16.3%,#dccb00 20.7%,#cca100 24.1%,#bd7900 27.5%,#bf4800 33.3%,#b62e00 36.7%,#ba1b00 40%,#a30900 44.5%,#910700 50.3%,#950800 50.6%,#af0900 50.9%,#af0900 51.1%,#950800 51.4%,#910700 52%,#910800 59.7%,#8c2000 67.3%,#8d4400 73.2%,#896e00 79%,#8a8300 83.4%,#929100 87.9%,#919e00 98%,#96a500 100%)"></i><i style="left:537px;width:3px;background:linear-gradient(#87ba05 0%,#9dc207 7.7%,#bfd308 12.1%,#d7de04 14.7%,#e3e100 18.1%,#e1d000 21.5%,#c28100 27.3%,#c26300 30.7%,#c34b00 33.3%,#b82800 37.7%,#bb1a00 40.3%,#a40900 44.8%,#960800 49.2%,#910700 50.5%,#950800 50.6%,#ad0900 50.9%,#ad0900 51.1%,#950800 51.4%,#910700 52%,#910800 59.7%,#8c2100 67.3%,#8d4600 73.2%,#887000 79%,#8a8400 83.4%,#919100 87.9%,#8d9d00 98%,#92a500 100%)"></i><i style="left:540px;width:3px;background:linear-gradient(#7bb807 0%,#91be08 7.7%,#a7c60a 11%,#d4dc04 15.5%,#e5e400 18.9%,#e7db00 21.5%,#ddba00 24.1%,#c78800 27.5%,#c46e00 30.1%,#c74e00 33.4%,#ba2900 37.9%,#bb1700 41.3%,#a50900 45.7%,#930800 50.2%,#960800 50.6%,#ad0900 50.9%,#ad0900 51.1%,#950800 51.4%,#910700 52%,#910800 59.7%,#8c1a00 65.5%,#8d4800 73.2%,#887200 79%,#888100 82.4%,#909000 86.8%,#8e9600 92.6%,#8a9d00 98.5%,#8ea400 100%)"></i><i style="left:543px;width:3px;background:linear-gradient(#70b50a 0%,#85ba08 7.7%,#98c009 11%,#c8d705 15.5%,#dadf01 17.5%,#e7e100 20.9%,#e6d500 22.9%,#c99000 27.3%,#c47400 29.9%,#c95300 33.3%,#ba2c00 37.7%,#bb1900 41.1%,#a50900 45.6%,#940800 50%,#930800 50.5%,#960800 50.6%,#ac0900 50.9%,#ac0900 51.1%,#940800 51.4%,#910700 52.9%,#910700 58.7%,#8c1f00 66.4%,#8d4300 72.2%,#886f00 78.1%,#888200 82.5%,#8d8e00 87%,#839700 97.1%,#88a000 99.7%,#89a100 100%)"></i><i style="left:546px;width:3px;background:linear-gradient(#66b410 0%,#79b706 7.7%,#95be06 12.1%,#c8d601 16.6%,#d3d900 18.1%,#dcd600 21.5%,#dbca00 23.5%,#bf8800 27.9%,#bd6e00 30.5%,#c34e00 33.9%,#b32700 38.3%,#b31600 41.7%,#9d0800 46.2%,#910700 49.5%,#910700 50.5%,#9a0800 50.8%,#a40800 50.9%,#a50800 51.1%,#930800 51.4%,#910800 59%,#8d1900 64.9%,#8e3900 70.7%,#887200 78.4%,#857f00 81.7%,#868c00 89.4%,#7b9200 97.1%,#809b00 99.7%,#819c00 100%)"></i><i style="left:549px;width:3px;background:linear-gradient(#479a08 0%,#6cb002 7.7%,#8cbb03 12.1%,#a8c704 14.7%,#c7d500 17.3%,#ced000 19.9%,#d8d000 22.5%,#d7c500 24.1%,#bc8300 28.5%,#bc6a00 31.1%,#c35100 33.7%,#b22800 38.2%,#af1200 42.6%,#9c0800 46%,#910700 50.5%,#950800 50.8%,#9e0800 51.1%,#910700 51.5%,#910800 59.2%,#8c1b00 65%,#8e3c00 70.9%,#887400 78.5%,#858000 81.9%,#818800 89.6%,#768e00 97.2%,#7b9800 99.8%,#7b9800 100%)"></i><i style="left:552px;width:3px;background:linear-gradient(#2a6300 0%,#4c8e00 5.8%,#6aab00 9.2%,#92bd03 13.7%,#bdd100 17%,#cad100 19%,#d7d200 22.4%,#d9cc00 23.9%,#cca700 26.5%,#be8200 29.1%,#c26100 32.5%,#c44c00 34.5%,#b32500 39%,#ae0f00 43.4%,#9c0800 46.8%,#910700 50.2%,#930800 50.8%,#980800 51.1%,#910700 51.5%,#910800 59.2%,#8c1b00 65%,#8e3e00 70.9%,#877600 78.5%,#858000 81.9%,#7e8600 89.6%,#718d00 97.2%,#779700 99.8%,#779700 100%)"></i><i style="left:555px;width:3px;background:linear-gradient(#2a6400 0%,#347400 2%,#549500 7.8%,#6fab00 11.2%,#86b900 13.2%,#a4c503 15.8%,#c4d300 18.4%,#dad400 22.9%,#dbce00 24.4%,#d0a900 27%,#c28300 29.6%,#c95500 34%,#b82a00 38.5%,#b41200 42.9%,#a20800 46.3%,#920800 50.8%,#960800 51.1%,#910700 51.8%,#900900 59.5%,#8c1d00 65.3%,#8d4200 71.2%,#886f00 77%,#867f00 80.4%,#7e8500 88%,#6f8900 95.7%,#719300 99.1%,#749800 100%)"></i><i style="left:558px;width:3px;background:linear-gradient(#2b6800 0%,#337500 2%,#4d8d00 7.8%,#659f00 11.2%,#8dbb01 14.6%,#b9cf00 17.9%,#cad200 19.9%,#dbd500 23.3%,#ddd000 24.8%,#d2aa00 27.5%,#c68400 30.1%,#ce5500 34.5%,#bb2900 39%,#b71100 43.4%,#a70900 46%,#9a0800 49.4%,#920700 50.9%,#910700 58.6%,#8c1a00 64.4%,#8e3d00 70.2%,#877600 77.9%,#858100 81.3%,#798400 89%,#6a8a00 96.6%,#709800 100%)"></i><i style="left:561px;width:3px;background:linear-gradient(#2a6700 0%,#357500 3.4%,#4e8a00 9.2%,#609800 11.8%,#8bb800 15.2%,#b9ce00 18.6%,#d7d500 23%,#dbd000 25%,#d4ae00 27.6%,#c77f00 31%,#cf5000 35.4%,#bc2400 39.9%,#ba1300 43.3%,#aa0900 45.9%,#9d0800 49.2%,#910700 51.2%,#910800 58.9%,#8c1c00 64.7%,#8d4100 70.6%,#886f00 76.4%,#857f00 79.8%,#798100 87.4%,#678500 95.1%,#6b9500 99.5%,#6c9700 100%)"></i><i style="left:564px;width:3px;background:linear-gradient(#2a6500 0%,#417a00 7.7%,#5a8f00 12.1%,#83af00 15.5%,#b3c900 18.9%,#c9cd00 21.5%,#d6d100 24.1%,#d9c700 26.1%,#c88800 30.5%,#cb6d00 33.1%,#d15000 35.7%,#be2400 40.2%,#ba1200 43.6%,#a90900 46.2%,#9d0800 49.5%,#910700 51.1%,#910800 58.7%,#8c1c00 64.6%,#8c5100 72.2%,#887300 76.7%,#858000 80.1%,#747e00 87.7%,#638400 95.4%,#648f00 98.8%,#689600 100%)"></i><i style="left:567px;width:3px;background:linear-gradient(#2c6900 0%,#347300 3.4%,#488200 9.2%,#5d9200 12.6%,#85b100 16%,#b7cd00 19.3%,#cdd400 21.3%,#dcd600 24.7%,#dfce00 26.2%,#cf7f00 32.1%,#da5a00 35.4%,#c72a00 39.9%,#c31600 43.3%,#b00900 46.6%,#a10800 50%,#910700 51.5%,#900900 59.2%,#8c2000 65%,#8d4800 70.9%,#887400 76.7%,#858000 80.1%,#7a8000 85.9%,#638200 93.6%,#608d00 98%,#659700 100%)"></i><i style="left:570px;width:3px;background:linear-gradient(#2d6e00 0%,#367800 3.4%,#498500 9.2%,#669a00 13.7%,#90b800 17%,#d0d900 21.5%,#e2dc00 24.8%,#e4d100 26.8%,#d69200 31.3%,#de6b00 34.7%,#e05300 36.7%,#cf2d00 40%,#cb1700 43.4%,#b70900 46.8%,#a90900 50.2%,#910700 51.7%,#900a00 59.4%,#8c2300 65.2%,#8c4c00 71%,#877700 76.8%,#848100 80.2%,#7e8300 84.7%,#687f00 90.5%,#5d8f00 98.2%,#619700 99.7%,#619900 100%)"></i><i style="left:573px;width:3px;background:linear-gradient(#2e7100 0%,#367a00 3.4%,#518c00 11%,#6a9d00 14.4%,#93b900 17.8%,#d4dc00 22.2%,#e2df00 24.8%,#e5d600 26.8%,#e0b500 29.4%,#d98600 32.8%,#e55f00 36.2%,#d32c00 40.6%,#cc1600 44%,#b90a00 47.4%,#af0900 50%,#9e0800 51.2%,#920800 51.7%,#910700 57.5%,#8c1a00 63.3%,#8d4000 69.2%,#886f00 75%,#857f00 78.4%,#818400 82.8%,#647d00 90.5%,#598e00 98.2%,#5c9600 99.7%,#5d9800 100%)"></i><i style="left:576px;width:3px;background:linear-gradient(#2e7100 0%,#387b00 4.4%,#4b8800 10.3%,#679a00 14.7%,#8cb200 18.1%,#c1d100 21.5%,#d4d900 23%,#e0da00 25.6%,#e1cf00 27.6%,#d69400 32.1%,#e16e00 35.4%,#e45500 37.4%,#d42e00 40.8%,#cc1600 44.2%,#ba0a00 46.8%,#b40900 49.4%,#a80900 50.9%,#a30800 51.2%,#920800 51.7%,#910700 57.5%,#8c1b00 63.3%,#8d4300 69.2%,#887100 75%,#858000 78.4%,#7a8000 84.2%,#607a00 90%,#538a00 97.7%,#579400 99.7%,#579600 100%)"></i><i style="left:579px;width:3px;background:linear-gradient(#2f7600 0%,#398000 4.4%,#528c00 12.1%,#709c00 16.6%,#90b100 19.2%,#c3ce00 22.5%,#d4d500 24.5%,#d9d400 26.1%,#dac800 28.1%,#d18f00 32.5%,#e25e00 37%,#d02b00 41.4%,#c41400 44.8%,#b60c00 46.8%,#b20900 49.4%,#a70900 50.6%,#a90900 51.1%,#920800 51.7%,#910700 57.5%,#8c1c00 63.3%,#8b5400 71%,#877600 75.5%,#858000 78.1%,#7c8000 82.5%,#617600 88.3%,#4f8100 96%,#4f8f00 99.4%,#519200 100%)"></i><i style="left:582px;width:3px;background:linear-gradient(#388e01 0%,#469901 5.8%,#599100 13.5%,#659000 16.1%,#89a700 19.5%,#bbc500 22.9%,#cfce00 25.5%,#d1c200 28.1%,#c98d00 32.5%,#d66c00 35.9%,#dc5400 37.9%,#cc2d00 41.3%,#c01600 44.6%,#af0b00 47.2%,#ab0900 49.8%,#a10800 50.8%,#a20800 51.2%,#920800 51.7%,#910700 57.5%,#8c1e00 63.3%,#8b5700 71%,#877700 75.5%,#848200 78.8%,#757b00 83.3%,#587100 89.1%,#477f00 96.8%,#498b00 99.4%,#4b8f00 100%)"></i><i style="left:585px;width:3px;background:linear-gradient(#41aa0d 0%,#4fae0f 5.8%,#57ae08 9.2%,#61a900 12.6%,#638e00 16%,#82a100 19.3%,#c1c700 23.8%,#cecc00 25.8%,#cebf00 28.4%,#c68a00 32.8%,#da5e00 37.3%,#d43f00 39.9%,#c71f00 43.3%,#af0d00 46.6%,#aa0900 50%,#a00800 50.9%,#9f0800 51.2%,#920800 51.7%,#910800 57.5%,#8c2000 63.3%,#8b5900 71%,#877900 75.5%,#838200 78.8%,#737a00 83.3%,#5a6f00 87.7%,#428000 97.9%,#458c00 99.8%,#458c00 100%)"></i><i style="left:588px;width:3px;background:linear-gradient(#218304 0%,#2b8304 5.8%,#488c00 11.7%,#639600 15%,#669000 16.3%,#86a400 19.6%,#c2c700 24.1%,#cfcd00 26.1%,#cfbe00 28.7%,#c58800 33.1%,#d56a00 36.5%,#db5300 38.5%,#cc2c00 41.9%,#c11800 44.5%,#ad0c00 47.1%,#ad0900 49.7%,#9b0800 51.2%,#910700 51.8%,#910800 57.7%,#8c2300 63.5%,#8a5d00 71.2%,#867c00 75.6%,#828200 79%,#707900 83.4%,#566d00 87.9%,#3e7f00 98%,#418b00 100%)"></i><i style="left:591px;width:3px;background:linear-gradient(#206f00 0%,#2d7100 7.7%,#3b7400 11%,#679800 15.5%,#6a9600 16.4%,#8aa900 19.8%,#c6cb00 24.2%,#d4d200 26.2%,#d5c300 28.8%,#c78b00 33.3%,#d27400 35.9%,#df5f00 37.9%,#d83f00 40.5%,#ce2400 43.1%,#b40e00 46.5%,#b10900 48.5%,#b00900 50%,#940800 51.5%,#910700 54.1%,#910800 57.5%,#8c2400 63.3%,#8a5e00 71%,#867d00 75.5%,#818100 78.8%,#6f7900 83.3%,#556e00 87.7%,#3b7f00 97.9%,#3d8b00 99.8%,#3d8b00 100%)"></i><i style="left:594px;width:3px;background:linear-gradient(#257000 0%,#317300 7.7%,#3e7600 11%,#669800 15.5%,#6c9900 16.7%,#8ead00 20.1%,#c8cd00 24.5%,#d6d400 26.5%,#d7c600 29.1%,#c78a00 33.6%,#d37400 36.2%,#e05f00 38.2%,#d53500 41.6%,#c31800 44.9%,#b10d00 46.9%,#b30900 49.5%,#ab0900 50.5%,#960800 51.4%,#910700 52.3%,#910700 56.7%,#8c2000 62.6%,#8b5b00 70.2%,#877a00 74.7%,#828200 78.1%,#717a00 82.5%,#576e00 87%,#377b00 97.1%,#388900 99.7%,#398a00 100%)"></i><i style="left:597px;width:3px;background:linear-gradient(#2a7200 0%,#357500 7.7%,#417a00 11%,#659700 15.5%,#739f00 17.5%,#98b500 20.9%,#c5cd00 24.2%,#d9d600 26.8%,#dbcf00 28.8%,#c99000 33.3%,#cc7e00 35.3%,#df6600 37.9%,#e04d00 39.9%,#d22600 43.3%,#bb1200 45.9%,#b00c00 47.4%,#b30900 50%,#a50800 50.8%,#950800 51.2%,#910700 52.8%,#910800 57.2%,#8c2500 63%,#8a6100 70.7%,#867e00 75.2%,#7f8100 78.5%,#6d7a00 83%,#536f00 87.4%,#337b00 97.5%,#348700 99.5%,#358a00 100%)"></i><i style="left:600px;width:3px;background:linear-gradient(#2d7400 0%,#387700 7.7%,#4d8800 12.1%,#689e00 15.5%,#84b000 18.9%,#d1d800 24.7%,#e4e100 27.3%,#e7d900 29.3%,#dbb100 31.9%,#d19300 33.9%,#d78000 35.9%,#ea6600 38.5%,#e84c00 40.5%,#d92400 43.9%,#b90d00 47.2%,#bd0a00 49.8%,#b30900 50.6%,#9a0800 51.2%,#910700 52.1%,#910700 56.6%,#8c1900 61%,#8b5400 68.7%,#867d00 74.5%,#7d8300 80.4%,#5a7400 86.2%,#337b00 96.3%,#318b00 99.7%,#318d00 100%)"></i><i style="left:603px;width:3px;background:linear-gradient(#2f7600 0%,#397800 7.7%,#4a8300 12.1%,#76a700 17.9%,#9dbf00 21.3%,#d7dc00 25.8%,#e6e200 27.8%,#e9da00 29.8%,#e1bc00 31.7%,#d39a00 33.7%,#d58500 35.7%,#e96d00 38.3%,#ec5800 39.9%,#de2c00 43.3%,#cf1a00 45.2%,#b90f00 47.2%,#be0a00 49.8%,#b30900 50.6%,#990800 51.4%,#910700 52.1%,#910700 56.6%,#8c1b00 61%,#8b5700 68.7%,#877700 73.2%,#838200 76.5%,#7d8400 79.9%,#517400 87.6%,#327900 95.2%,#2b8400 98.6%,#2c8d00 99.8%,#2c8d00 100%)"></i><i style="left:606px;width:3px;background:linear-gradient(#327800 0%,#427b00 10.1%,#4d8100 13.5%,#6d9e00 17.9%,#a5c300 22.4%,#d2d800 25.8%,#e3df00 28.4%,#e7d600 30.4%,#d8aa00 33%,#cf8d00 35%,#d97c00 37%,#ea5f00 39.6%,#d92600 44%,#b60e00 47.4%,#ba0a00 50%,#ac0900 50.8%,#980800 51.4%,#910700 52.1%,#910800 56.6%,#8c1c00 61%,#8b5900 68.7%,#877900 73.2%,#828200 76.5%,#748000 81%,#527400 86.8%,#317700 94.5%,#278000 97.9%,#268e00 99.8%,#268e00 100%)"></i><i style="left:609px;width:3px;background:linear-gradient(#367a00 0%,#457d00 10.1%,#4d8000 13.5%,#5f9000 16.9%,#82ae00 20.2%,#c1d200 24.7%,#d4da00 26.2%,#e5e100 28.8%,#ead700 30.8%,#d49c00 34.2%,#d38600 36.2%,#e86e00 38.8%,#ec5900 40.3%,#df2c00 43.7%,#cd1900 45.7%,#ba1000 47.2%,#bb0a00 48.8%,#bc0a00 50%,#ae0900 50.8%,#990800 51.4%,#910700 52%,#910700 56.4%,#8c1b00 60.9%,#8b5a00 68.6%,#877a00 73%,#818100 76.4%,#738100 80.8%,#527700 86.7%,#2f7a00 94.3%,#238400 97.7%,#219201 99.7%,#229401 100%)"></i><i style="left:612px;width:3px;background:linear-gradient(#387c00 0%,#438000 7.7%,#598b00 15.3%,#669600 17.9%,#8ab400 21.3%,#ccd800 25.8%,#e2e100 28.4%,#eadf00 30.4%,#ebcf00 31.9%,#d49400 35.3%,#dc8200 37.3%,#f06400 39.9%,#e12800 44.3%,#c21200 46.9%,#bd0c00 48.5%,#c00a00 50%,#b10900 50.8%,#970800 51.5%,#910700 52.3%,#910900 56.7%,#8c1e00 61.2%,#8c5000 67%,#867b00 72.9%,#808100 76.2%,#728200 80.7%,#527b00 86.5%,#2d8000 94.2%,#1f8b01 97.5%,#1c9a02 99.5%,#1c9d02 100%)"></i><i style="left:615px;width:3px;background:linear-gradient(#3c8400 0%,#498d00 7.7%,#649700 17.8%,#80ad00 21.2%,#c2d300 25.6%,#d5da00 27.1%,#e6e000 29.8%,#ebdb00 31.3%,#e4bc00 33.3%,#d59900 35.3%,#d68700 36.8%,#ec6e00 39.4%,#f05900 41%,#e32a00 44.3%,#cc1700 46.3%,#be0f00 47.9%,#c10a00 49.8%,#b50900 50.6%,#970800 51.5%,#910700 52.1%,#910800 56.6%,#8c1e00 61%,#8c5100 66.9%,#867c00 72.7%,#828200 75.3%,#6c8000 81.1%,#557d00 85.6%,#2d8400 93.3%,#189502 97.7%,#15a504 99.7%,#15a604 100%)"></i><i style="left:618px;width:3px;background:linear-gradient(#429500 0%,#509e00 7.7%,#62a500 13.5%,#6fa200 19.3%,#84ae00 21.9%,#c4d200 26.4%,#d3d800 27.9%,#e3db00 30.5%,#e7d600 31.7%,#e0b800 33.7%,#d29500 35.7%,#d98100 37.7%,#ef6400 40.3%,#e02700 44.8%,#c11200 47.4%,#c00b00 48.9%,#c10a00 49.8%,#b40900 50.6%,#910800 51.8%,#910800 56.3%,#8c1c00 60.7%,#8c5000 66.6%,#867d00 72.4%,#818100 75%,#697f00 80.8%,#5e7c00 82.8%,#298700 92.9%,#119903 97.4%,#0ca706 99.4%,#0ca808 100%)"></i><i style="left:621px;width:3px;background:linear-gradient(#44a600 0%,#59ae02 10.1%,#70b000 17.8%,#7eb000 21.2%,#98bb00 23.8%,#c9d300 27.1%,#dfd800 30.5%,#e5d400 32.1%,#e0b800 34%,#d29400 36%,#d58400 37.6%,#ed6900 40.2%,#ed4d00 42.2%,#e32a00 44.8%,#c51300 47.4%,#c10d00 48.6%,#c30a00 49.8%,#b60900 50.6%,#910800 51.8%,#910800 56.3%,#8c1c00 60.7%,#8d4300 65.2%,#896c00 69.6%,#858000 73%,#7d7f00 75.6%,#587b00 83.3%,#2d8200 91%,#0a9504 96.8%,#07a70d 99.4%,#09a80f 100%)"></i><i style="left:624px;width:3px;background:linear-gradient(#3ea903 0%,#52ae06 10.1%,#6db407 17.8%,#88b900 22.2%,#a4c300 24.8%,#cfd400 28.2%,#e0d600 31.6%,#e4ca00 33.1%,#d29200 36.5%,#d78200 38%,#ef6600 40.6%,#e93600 44%,#db1f00 46%,#c51000 48%,#c50a00 50%,#b40900 50.8%,#940800 51.7%,#910800 56.1%,#8c1c00 60.6%,#8d4300 65%,#896d00 69.5%,#858000 72.9%,#7b7f00 75.5%,#547a00 83.1%,#267c00 90.8%,#058c08 96.6%,#049b12 98.6%,#05a516 99.8%,#05a516 100%)"></i><i style="left:627px;width:3px;background:linear-gradient(#40ae14 0%,#43ad10 4.4%,#5ab10f 14.6%,#6eb50c 19%,#86ba04 22.4%,#adc700 25.8%,#ccd200 28.4%,#dcd200 31.7%,#e1c800 33.3%,#d8a800 35.3%,#d18a00 37.3%,#e57200 39.9%,#ef5d00 41.4%,#e62e00 44.8%,#d91e00 46.3%,#c81200 47.9%,#c80a00 49.8%,#ba0a00 50.6%,#980800 51.5%,#910700 52.1%,#900900 56.6%,#8c1f00 61%,#8c4900 65.5%,#887300 69.9%,#858000 72.5%,#7b7e00 75.2%,#6c7b00 77.8%,#5d7c00 81.1%,#4f7700 83.1%,#1e7400 90.8%,#057b05 95.2%,#028512 97.9%,#029a1a 99.8%,#029b1b 100%)"></i><i style="left:630px;width:3px;background:linear-gradient(#35b53a 0%,#3ab433 3.4%,#3fb429 5.4%,#52b526 13%,#6eb821 18.9%,#74b815 20.4%,#76b608 21.3%,#9ac003 24.7%,#b5ca00 26.7%,#c9cf00 28.7%,#d7cd00 32.1%,#ddc300 33.6%,#d9ad00 35.1%,#cf8d00 37.1%,#d47e00 38.7%,#eb6100 41.3%,#e63200 44.6%,#d71c00 46.6%,#c91100 48.2%,#c90b00 49.7%,#ba0a00 50.6%,#980800 51.5%,#910700 52.1%,#900900 56.6%,#8c1e00 61%,#8c4b00 65.5%,#896d00 68.9%,#867e00 71.5%,#7e8000 74.1%,#687800 77.5%,#5a7b00 80.8%,#427300 84.2%,#1d6d00 90%,#046f05 94.5%,#017915 97.9%,#018e1e 99.8%,#018f1e 100%)"></i><i style="left:633px;width:3px;background:linear-gradient(#1c5ea9 0%,#1c76a1 2.6%,#2283a2 3.1%,#23a599 4%,#22b485 4.8%,#1ab078 5.2%,#1bac49 12.9%,#20ac35 15.5%,#2fad21 17.5%,#55af1d 19.5%,#68b51a 20.4%,#6db306 21.3%,#94be04 24.7%,#b6cd00 26.7%,#cbcf00 29.3%,#d6ca00 32.7%,#dbb800 34.7%,#cf8e00 37.3%,#d87a00 39.3%,#eb6300 41.3%,#e93500 44.6%,#db1f00 46.6%,#cd1200 48.2%,#cd0b00 49.7%,#c10a00 50.5%,#950800 51.7%,#910700 52.9%,#910800 56.3%,#8c1c00 60.7%,#8e3b00 64.1%,#8a6300 67.5%,#867d00 70.9%,#808100 73.5%,#677600 76.8%,#547b00 81.3%,#477300 82.8%,#156901 90.5%,#046805 93.9%,#016e14 97.2%,#00771a 98.5%,#008720 100%)"></i><i style="left:636px;width:3px;background:linear-gradient(#006261 0%,#016d5a 2.6%,#047a56 3.5%,#05843d 4.8%,#038236 5.1%,#077e18 12.7%,#0d7e0d 15.3%,#217f03 17.9%,#358102 19.5%,#448c02 20.2%,#5aa402 20.9%,#96bd00 25.3%,#b9cd00 27.3%,#c9cd00 29.3%,#d2c700 32.7%,#d8b800 34.7%,#ce8600 38%,#e26d00 40.6%,#eb5300 42.6%,#e22600 46%,#d01500 48%,#cc0b00 50%,#b60a00 50.9%,#950800 51.7%,#910700 52.9%,#910900 56.3%,#8c1c00 60.7%,#8e3c00 64.1%,#896500 67.5%,#867e00 70.9%,#7e8000 73.5%,#637400 76.8%,#4f7900 81.3%,#427100 82.8%,#116501 90.5%,#036407 93.9%,#016815 97.2%,#00701b 98.5%,#008122 100%)"></i><i style="left:639px;width:3px;background:linear-gradient(#107a03 0%,#287a00 13.5%,#3c7e00 19.3%,#458300 20.6%,#539100 21.5%,#85af00 24.8%,#b5c800 27.5%,#c6ca00 29.4%,#ccc100 32.8%,#d3b300 34.8%,#cb8400 38.2%,#e46100 41.6%,#e63f00 44.2%,#da2000 46.8%,#cf1000 48.8%,#cb0b00 50%,#b50900 50.9%,#950800 51.7%,#910700 52.9%,#910900 56.3%,#8c1c00 60.7%,#8e3d00 64.1%,#896800 67.5%,#857f00 70.9%,#7f8000 72.9%,#697600 75.5%,#5a7100 77.5%,#4c7600 80.8%,#346c00 84.2%,#076103 91.9%,#016012 96.3%,#00691b 98.3%,#007c24 99.8%,#007d24 100%)"></i><i style="left:642px;width:3px;background:linear-gradient(#1e7a01 0%,#2f7b00 13.5%,#407f00 19.3%,#528700 21.9%,#83a700 25.3%,#b6c600 27.9%,#c5c900 29.4%,#c8be00 32.8%,#cfab00 35.4%,#cb7e00 38.8%,#e35a00 42.2%,#e12e00 45.6%,#d01000 48.9%,#ce0b00 49.8%,#b90a00 50.8%,#950800 51.7%,#910700 52.9%,#910900 56.3%,#8c1c00 60.7%,#8e3f00 64.1%,#896a00 67.5%,#858000 70.9%,#7d7f00 72.9%,#566e00 77.3%,#487400 80.7%,#437300 81.6%,#386c00 82.8%,#0b5f02 90.5%,#035f07 93.1%,#006119 97.5%,#00691e 98.5%,#007a26 100%)"></i><i style="left:645px;width:3px;background:linear-gradient(#267a00 0%,#367c00 13.5%,#468000 19.3%,#598500 22.7%,#799b00 25.3%,#afbf00 27.9%,#c1c700 29.1%,#c6c400 31.1%,#c6b500 33.7%,#cba400 35.7%,#c97a00 39.1%,#df5700 42.5%,#dd2b00 45.9%,#d01400 48.5%,#cb0b00 50%,#b30900 50.9%,#920800 51.8%,#900900 56.3%,#8c1c00 60.7%,#8d4000 64.1%,#896c00 67.5%,#867f00 70.1%,#808100 72.1%,#6f7900 74.1%,#556c00 76.7%,#417100 81.1%,#326900 83.1%,#075f02 90.8%,#005e16 96.6%,#00621d 98.2%,#007527 99.7%,#007728 100%)"></i><i style="left:648px;width:3px;background:linear-gradient(#2f7b00 0%,#3d7e00 13.5%,#558300 21.2%,#698a00 24.5%,#8ca500 26.5%,#bfc600 29.1%,#c6c500 31.1%,#c3b400 33.7%,#ca9d00 36.3%,#c77b00 39%,#dd5800 42.3%,#dc2d00 45.7%,#d20f00 49.1%,#cd0b00 50%,#b70a00 50.8%,#950800 51.7%,#910700 52.9%,#900900 56.3%,#8c1c00 60.7%,#8d4200 64.1%,#896e00 67.5%,#857f00 70.1%,#7e8000 72.1%,#657300 74.7%,#4f6b00 77.3%,#407000 80.7%,#1b6200 86.5%,#055f03 91%,#005e18 96.8%,#006320 98.3%,#00772a 99.8%,#00772a 100%)"></i><i style="left:651px;width:3px;background:linear-gradient(#367c00 0%,#447f00 13.5%,#5a8500 21.2%,#6a8800 24.5%,#94a900 27.1%,#bdc400 29.1%,#c7c900 30.4%,#c3b400 33.7%,#ca9e00 36.3%,#cb7500 39.7%,#de5000 43.1%,#db2700 46.5%,#d10b00 49.8%,#bf0a00 50.6%,#9b0800 51.5%,#910700 52%,#900a00 56.4%,#8c1d00 60.9%,#8d4700 64.3%,#896a00 66.9%,#867e00 69.5%,#808100 71.5%,#6e7800 73.5%,#536b00 76.1%,#3d7000 80.5%,#366c00 81.7%,#0a5f02 89.4%,#025f0a 92.8%,#005f1c 97.2%,#006624 98.5%,#00782d 100%)"></i><i style="left:654px;width:3px;background:linear-gradient(#3c7e00 0%,#498100 13.5%,#5f8600 21.2%,#6f8b00 24.5%,#93a700 27.1%,#c4c800 29.8%,#ccca00 31.3%,#c5b400 33.9%,#cb9e00 36.5%,#cd7600 39.9%,#de5000 43.3%,#db2600 46.6%,#d70f00 49.2%,#cf0b00 50.2%,#ba0a00 50.8%,#960800 51.7%,#910700 52.5%,#910800 55.8%,#8c1a00 60.3%,#8d3500 62.9%,#896600 66.3%,#867d00 68.9%,#828200 70.9%,#727a00 72.9%,#4f6a00 76.2%,#397000 80.7%,#246600 84%,#065f03 89.9%,#005f20 97.5%,#006d2a 98.8%,#007930 100%)"></i><i style="left:657px;width:3px;background:linear-gradient(#407f00 0%,#4d8400 13.5%,#678f00 21.2%,#799700 24.5%,#97ac00 27.1%,#c4c900 29.8%,#d0cf00 31.3%,#c8b800 33.9%,#ce9800 37.3%,#d07900 39.9%,#df5200 43.3%,#dd2800 46.6%,#dc1000 49.2%,#d40b00 50.2%,#be0a00 50.8%,#970800 51.7%,#910700 52.3%,#900b00 56.7%,#8c1a00 60.1%,#8d3500 62.7%,#896600 66.1%,#867d00 68.7%,#818100 70.7%,#6f7900 72.7%,#526b00 75.3%,#347000 81.1%,#276800 83.1%,#086202 89%,#005e15 94.8%,#006122 97.4%,#006c2b 98.6%,#007a33 99.8%,#007b33 100%)"></i><i style="left:660px;width:3px;background:linear-gradient(#448700 0%,#4f8e00 10.1%,#649c00 17.8%,#75a300 21.2%,#84a600 24.5%,#9cb200 27.1%,#c4ca00 29.8%,#d2d200 31.3%,#cab400 34.7%,#cf9b00 37.3%,#d37200 40.6%,#df5300 43.3%,#dd2900 46.6%,#dc1100 49.2%,#d40b00 50.2%,#bf0a00 50.8%,#970800 51.7%,#910700 52.3%,#910800 55.7%,#8c1b00 60.1%,#8e3700 62.7%,#896900 66.1%,#857f00 68.7%,#7f8000 70.7%,#717900 72.2%,#536b00 74.8%,#3e6c00 78.2%,#2d6d00 81.6%,#236700 83.1%,#056303 89%,#005f20 96.6%,#006629 98.2%,#007a35 99.7%,#007c36 100%)"></i><i style="left:663px;width:3px;background:linear-gradient(#4b9a00 0%,#5ca500 13.5%,#73b000 19.3%,#92b600 25.2%,#b4c400 28.5%,#c8cd00 30.1%,#d4d200 31.6%,#cbbb00 34.2%,#cf9a00 37.6%,#d57000 41%,#de5000 43.6%,#dc2700 46.9%,#dc0e00 49.5%,#d10b00 50.3%,#920800 51.8%,#910700 55.2%,#8c1900 59.7%,#8d3400 62.3%,#896600 65.6%,#867e00 68.3%,#808100 70.2%,#737a00 71.8%,#536b00 74.4%,#406800 77%,#2b6c00 81.4%,#216600 83%,#046303 88.8%,#005e18 94.6%,#006125 97.2%,#006a2e 98.5%,#007a38 99.7%,#007c39 100%)"></i><i style="left:666px;width:3px;background:linear-gradient(#4da900 0%,#5daf03 13.5%,#71b506 19.3%,#94bd04 25.2%,#c9d300 29.6%,#d5d500 31.6%,#ceb700 35%,#d39400 38.3%,#de4a00 44.2%,#dc2200 47.5%,#dd0e00 49.5%,#d20b00 50.3%,#b20900 51.1%,#920800 51.8%,#910800 55.2%,#8c1b00 59.7%,#8e3600 62.3%,#896900 65.6%,#857f00 68.3%,#7e8000 70.2%,#4d6900 74.7%,#386900 78.1%,#276b00 81.4%,#1f6600 82.7%,#046304 88.5%,#005e18 94.3%,#00642b 97.7%,#007b3a 99.7%,#007d3c 100%)"></i><i style="left:669px;width:3px;background:linear-gradient(#47ab05 0%,#56af08 13.5%,#69b40b 19.3%,#8ebd0b 25.2%,#a4c506 27.1%,#ced900 29.8%,#d6db00 30.7%,#d5d000 32.7%,#d0b800 35.3%,#d59500 38.7%,#dd4700 44.5%,#db1f00 47.9%,#da0c00 49.8%,#c70a00 50.6%,#9c0800 51.5%,#910700 52%,#900900 55.4%,#8c1d00 59.8%,#8e3b00 62.4%,#896e00 65.8%,#867e00 67.8%,#7f8000 69.8%,#6a7600 71.8%,#4c6900 74.4%,#396600 77%,#246a00 81.4%,#1a6400 83%,#056203 87.4%,#005f1f 95.1%,#00642c 97.7%,#006d34 98.6%,#007c3d 99.8%,#007c3e 100%)"></i><i style="left:672px;width:3px;background:linear-gradient(#3dab09 0%,#4bad0a 13.5%,#5fb20e 19.3%,#7ab912 23.8%,#9cc10c 27.1%,#d7de02 30.5%,#dbda00 32.1%,#d2ba00 35.4%,#d89700 38.8%,#dc4600 44.6%,#da2500 47.2%,#da0c00 49.8%,#c60a00 50.6%,#9b0800 51.5%,#910700 52%,#900900 55.4%,#8c1f00 59.8%,#8d3f00 62.4%,#887000 65.8%,#857f00 67.8%,#7d7f00 69.8%,#4a6900 74.2%,#336600 77.6%,#236900 81%,#146401 83.6%,#036105 88%,#006024 95.7%,#00632e 97.7%,#007a3f 99.7%,#007c40 100%)"></i><i style="left:675px;width:3px;background:linear-gradient(#2fab0b 0%,#3eab0c 13.5%,#51af0e 19.3%,#65b411 22.7%,#87bc12 26.1%,#a2c40d 28.1%,#d5dd04 30.7%,#e0e100 31.9%,#d4c800 34.5%,#dc9b00 39%,#dd4500 44.8%,#da2500 47.4%,#dd1100 49.4%,#d40b00 50.2%,#b30900 51.1%,#940800 51.7%,#910700 53.2%,#900c00 55.8%,#8c1c00 59.2%,#8e3900 61.8%,#896c00 65.2%,#867e00 67.2%,#7f8000 69.2%,#707900 70.7%,#4f6a00 73.3%,#346300 76.7%,#1f6800 81.1%,#146301 83.1%,#036105 87.6%,#006024 95.2%,#006431 97.9%,#007b42 99.8%,#007c42 100%)"></i><i style="left:678px;width:3px;background:linear-gradient(#26ac11 0%,#30ae15 7.7%,#40b01a 15.3%,#54b115 21.2%,#66b517 23.8%,#8dbe13 27.1%,#a5c60f 28.7%,#dadf05 31.3%,#e3e100 32.5%,#d7ce00 34%,#d8b800 36.7%,#e09c00 39.3%,#de5400 43.7%,#da2800 47.1%,#db0d00 49.7%,#ca0b00 50.5%,#a90900 51.2%,#930800 51.7%,#900a00 55.1%,#8c2200 59.5%,#8d4100 62.1%,#887200 65.5%,#858000 67.5%,#7b7e00 69.5%,#516a00 72.9%,#2d6300 77.3%,#1e6700 80.7%,#0d6202 84%,#036007 87.4%,#005f1b 93.3%,#006332 97.7%,#006c3a 98.6%,#007b43 99.8%,#007b44 100%)"></i><i style="left:681px;width:3px;background:linear-gradient(#2db42e 0%,#2fb434 7.7%,#2fb540 11%,#38b436 18.7%,#49b428 21.3%,#69b826 24.7%,#a9c91d 29.1%,#d3dd0c 31.1%,#e4e400 32.7%,#d9cd00 34.7%,#dcb900 37.3%,#e69900 39.9%,#e15d00 43.3%,#dc2200 47.7%,#dc0e00 49.7%,#cb0b00 50.5%,#b10900 51.1%,#930800 51.7%,#900a00 55.1%,#8c2400 59.5%,#8d4500 62.1%,#896c00 64.7%,#867e00 66.7%,#7f8000 68.7%,#677500 70.7%,#496800 73.3%,#2e6200 76.7%,#196701 81.1%,#0f6202 83.1%,#036105 86.5%,#006022 94.2%,#006333 97.5%,#006a3a 98.5%,#007b46 100%)"></i><i style="left:684px;width:3px;background:linear-gradient(#1aa555 0%,#1aa874 5.8%,#1aa87c 7.4%,#1a9791 8.9%,#1a7597 10.4%,#1a729b 11.7%,#1a729c 17.5%,#1e78a3 18.3%,#23969f 19%,#23af93 19.9%,#22b575 20.9%,#20b367 21.2%,#20ad3a 23.2%,#32ae23 24.7%,#4dae1e 25.6%,#90bd1c 29%,#b7cf14 30.5%,#d9df08 31.7%,#e6e400 33.3%,#dbd200 34.5%,#debf00 37.1%,#eaa300 39.7%,#e36100 43.1%,#de2500 47.5%,#de0f00 49.5%,#d00b00 50.3%,#b20900 51.1%,#920800 51.7%,#910800 54.3%,#8c2000 58.7%,#8e3d00 61.3%,#886f00 64.7%,#857f00 66.7%,#808100 68.3%,#707900 69.8%,#4f6a00 72.4%,#2a6200 76.8%,#166701 81.3%,#0e6102 82.8%,#036106 86.2%,#006023 93.9%,#006333 97.2%,#006a3c 98.5%,#007a47 99.7%,#007c49 100%)"></i><i style="left:687px;width:3px;background:linear-gradient(#017c27 0%,#017e3a 5.8%,#007e40 7.4%,#007a55 8.9%,#006a5d 10.9%,#006a5c 16.7%,#026d5d 18.3%,#058052 19.5%,#068335 20.7%,#058127 21.2%,#117e0a 23.8%,#3a7d01 26.4%,#568101 28.4%,#698b01 29.3%,#819f01 29.9%,#c0d102 31.1%,#d7de03 31.9%,#e5e300 33.4%,#dad000 35%,#e0bf00 37.6%,#edac00 39.6%,#e36600 42.9%,#dd2700 47.4%,#de1100 49.4%,#d40b00 50.2%,#b00900 51.1%,#960800 51.5%,#910700 52.1%,#900b00 54.8%,#8c1d00 58.1%,#8d4300 61.5%,#887300 64.9%,#858000 66.9%,#797d00 68.9%,#4d6900 72.2%,#286100 76.7%,#146701 81.1%,#0c6102 82.7%,#036007 86%,#006024 93.7%,#00673b 98.2%,#007a49 99.7%,#007c4b 100%)"></i><i style="left:690px;width:3px;background:linear-gradient(#047a07 0%,#097a06 13.5%,#107a03 17.9%,#307b00 23.8%,#4e7e00 27.1%,#749600 29.1%,#bbcd00 31.1%,#d5dc00 32.1%,#e1e000 33.6%,#d9ce00 35.6%,#dfc200 37.6%,#efb200 39.6%,#ee9200 41.1%,#e46600 43.1%,#de2500 47.5%,#de1000 49.5%,#cf0b00 50.3%,#b00900 51.1%,#950800 51.5%,#910700 52.5%,#8f0d00 55.1%,#8c2200 58.4%,#8d3f00 61%,#887100 64.4%,#858000 66.4%,#7b7e00 68.4%,#4e6a00 71.8%,#286100 76.2%,#136601 80.7%,#046103 84%,#005f1c 91.7%,#006439 97.5%,#006b40 98.5%,#007d4d 100%)"></i><i style="left:693px;width:3px;background:linear-gradient(#087a03 0%,#147a02 13.5%,#237a00 19.3%,#407b00 25.2%,#4d7d00 26.7%,#7e9e00 29.3%,#c6d000 31.9%,#d8da00 33.1%,#dcd900 34.4%,#dac700 37%,#ebbe00 39%,#f3a600 40.5%,#e66800 43.1%,#df2600 47.5%,#de1000 49.5%,#ce0b00 50.3%,#ae0900 51.1%,#940800 51.5%,#900900 54.1%,#8c2600 58.6%,#8d4500 61.2%,#887400 64.6%,#848100 66.6%,#767c00 68.6%,#526b00 71.2%,#296100 75.6%,#0e6602 81.4%,#076103 83%,#005f1a 90.6%,#006336 96.5%,#00673f 98%,#007d50 100%)"></i><i style="left:696px;width:3px;background:linear-gradient(#0e7a03 0%,#1a7a01 13.5%,#2a7a00 19.3%,#467c00 25.2%,#5a7e00 27.8%,#759000 29.3%,#b7c100 31.9%,#c9ce00 32.8%,#d8d600 34.4%,#d7c800 37%,#eac100 39%,#f2b000 40.2%,#f09300 41.4%,#e66400 43.4%,#df2f00 46.8%,#de1100 49.4%,#d20b00 50.2%,#ad0900 51.1%,#930800 51.5%,#900a00 54.1%,#8c1d00 57.5%,#8d4400 60.9%,#887300 64.3%,#848100 66.3%,#767c00 68.3%,#526b00 70.9%,#286100 75.3%,#196200 77.9%,#0c6602 81.3%,#056003 82.8%,#005f1b 90.5%,#006337 96.3%,#006b44 98.3%,#007e52 99.8%,#007e53 100%)"></i><i style="left:699px;width:3px;background:linear-gradient(#157a02 0%,#227a00 13.5%,#317b00 19.3%,#597e00 27%,#637e00 28.5%,#98a600 31.1%,#bac000 32.7%,#d3d100 34.7%,#d5c500 37.3%,#ecc200 39.3%,#f3a600 40.8%,#e66500 43.4%,#df3000 46.8%,#dd1100 49.4%,#d10b00 50.2%,#aa0900 51.1%,#920800 51.5%,#900a00 54.1%,#8c1f00 57.5%,#8d4700 60.9%,#877500 64.3%,#848200 66.3%,#737a00 68.3%,#4f6a00 70.9%,#256000 75.3%,#136301 78.7%,#0a6602 81.3%,#046003 82.8%,#006128 92.9%,#006640 97.4%,#00714b 98.6%,#007f55 99.8%,#007f56 100%)"></i><i style="left:702px;width:3px;background:linear-gradient(#1d7a01 0%,#2a7a00 13.5%,#397d00 19.3%,#548000 25.2%,#688000 28.5%,#94a100 31.1%,#b9bd00 33.1%,#d2ce00 35.1%,#d2c600 37.1%,#e0c300 38.7%,#efc200 39.6%,#f39600 41.6%,#e76400 43.6%,#df2e00 46.9%,#dd0f00 49.5%,#cc0b00 50.3%,#920800 51.5%,#910800 53.5%,#8c2600 58%,#8d4600 60.6%,#887400 64%,#848100 66%,#747b00 67.9%,#4f6a00 70.6%,#256000 75%,#0e6402 79.4%,#076603 81.4%,#046004 82.7%,#00612a 92.8%,#006842 97.2%,#00704c 98.5%,#008058 99.7%,#008259 100%)"></i><i style="left:705px;width:3px;background:linear-gradient(#227a00 0%,#2f7b00 13.5%,#3d7f00 19.3%,#668500 27%,#829500 29.6%,#c1c300 34%,#d0cd00 35.6%,#d2c500 37.6%,#e6c600 39.1%,#f0c300 39.7%,#f49600 41.7%,#e96400 43.7%,#e22d00 47.1%,#e21500 49.1%,#d60b00 50%,#be0a00 50.6%,#960800 51.4%,#910700 52.1%,#900b00 54.1%,#8c2300 57.5%,#8c4d00 60.9%,#877900 64.3%,#828200 66.3%,#727a00 67.8%,#4e6a00 70.4%,#236000 74.8%,#116301 78.2%,#056503 81.6%,#036107 83.1%,#006430 93.3%,#006d49 97.7%,#007652 98.6%,#00845d 99.8%,#00845e 100%)"></i><i style="left:708px;width:3px;background:linear-gradient(#258100 0%,#338300 13.5%,#468d00 19.3%,#619800 23.8%,#87a300 28.2%,#b2b800 32.7%,#cdcc00 35.3%,#d3c500 37.9%,#ecc900 39.4%,#f1ba02 40.3%,#f48a00 42.3%,#ea5c00 44.3%,#e62600 47.7%,#e41300 49.2%,#d90b00 50%,#c00a00 50.6%,#960800 51.4%,#910700 52.1%,#900c00 54.1%,#8c2400 57.5%,#8c4f00 60.9%,#867b00 64.3%,#808100 66.3%,#6f7800 67.8%,#4b6900 70.4%,#215f00 74.8%,#0a6602 79.3%,#046803 81.3%,#036208 82.8%,#006827 90.5%,#006b45 96.3%,#007453 98.3%,#008763 99.8%,#008864 100%)"></i><i style="left:711px;width:3px;background:linear-gradient(#289901 0%,#3a9b00 13.5%,#49a200 17.9%,#6fb001 23.8%,#a7c100 29.6%,#c1c400 34%,#d0cc00 36%,#d0c500 37.6%,#e4c900 39.1%,#efc701 39.9%,#f68a00 42.5%,#ed5c00 44.5%,#e82500 47.9%,#e51200 49.4%,#d60b00 50.2%,#b80a00 50.8%,#950800 51.4%,#910700 52.6%,#8e1300 55.2%,#8d2900 57.8%,#8b5600 61.2%,#877800 63.8%,#828200 65.8%,#727a00 67.3%,#4d6a00 69.9%,#215f00 74.4%,#0e6402 77.8%,#046905 81.1%,#036409 82.7%,#006a2a 90.3%,#006f49 96.2%,#007757 98.2%,#008968 99.7%,#008b69 100%)"></i><i style="left:714px;width:3px;background:linear-gradient(#28a909 0%,#3ca906 13.5%,#52ae09 19.3%,#70b50c 23.8%,#8fbe0d 27.1%,#bed001 31.6%,#c8cb00 34.2%,#d1ce00 36.2%,#d1c700 37.7%,#e0ca00 39%,#efca01 39.9%,#f68d01 42.5%,#f25f00 44.5%,#eb2600 47.9%,#e81200 49.4%,#d90b00 50.2%,#ba0a00 50.8%,#950800 51.4%,#910700 52.1%,#900d00 54.1%,#8c2700 57.5%,#8d4800 60.1%,#877600 63.5%,#848100 65%,#747b00 67%,#4e6a00 69.6%,#215f00 74.1%,#106101 76.7%,#046904 80.1%,#036908 81.6%,#02660d 83.1%,#006e32 90.8%,#007451 96.6%,#008163 98.6%,#008e6d 99.8%,#008f6e 100%)"></i><i style="left:717px;width:3px;background:linear-gradient(#23ad15 0%,#37ad12 13.5%,#4caf13 19.3%,#76b918 25.2%,#95c015 28.5%,#cad701 33%,#d1d600 34.2%,#d2c900 37.6%,#ddcc00 38.8%,#eece00 39.7%,#f2b004 41.3%,#f76000 44.6%,#ed2f00 47.2%,#eb1500 49.2%,#e00c00 50%,#c60a00 50.6%,#960800 51.4%,#910700 52.1%,#8f0d00 54.1%,#8d2800 57.5%,#8b5600 60.9%,#877800 63.5%,#818100 65.5%,#707900 67%,#4b6900 69.6%,#1e5f00 74.1%,#0e6202 76.7%,#046a06 80.1%,#036b0b 81.6%,#026710 83.1%,#007237 90.8%,#007858 96.6%,#008467 98.6%,#009072 99.8%,#009172 100%)"></i><i style="left:720px;width:3px;background:linear-gradient(#1daf23 0%,#24af1b 10.1%,#38af19 17.8%,#5db41b 23.6%,#87be1d 28.1%,#adca0e 31.4%,#d3db01 34%,#d4d700 35.3%,#d2ca00 37.9%,#e1ce00 39.1%,#eecf00 39.9%,#f2b005 41.4%,#f86000 44.8%,#ee2e00 47.4%,#eb1300 49.4%,#dc0c00 50.2%,#b40900 50.9%,#960800 51.4%,#910700 52.1%,#8f0d00 54.1%,#8c2100 56.7%,#8c4c00 60.1%,#877a00 63.5%,#838200 65%,#747b00 66.6%,#4e6a00 69.2%,#1f5f00 73.6%,#0a6302 77%,#036b09 80.4%,#026c0d 81.6%,#016812 83.1%,#00753c 90.8%,#007b5d 96.6%,#007f65 98.2%,#009074 99.7%,#009276 100%)"></i><i style="left:723px;width:3px;background:linear-gradient(#1baf33 0%,#1eaf21 13.5%,#28b01d 17.9%,#4fb11d 23.8%,#7bbb1f 28.2%,#a3c512 31.6%,#cfda03 34.2%,#d8de00 35.1%,#d1ca00 37.7%,#dbce00 39%,#ecd000 39.9%,#f1bc04 41.1%,#f96900 44.5%,#ef3400 47.1%,#ec1800 49.1%,#e00c00 50%,#bc0a00 50.8%,#950800 51.4%,#910700 52.1%,#8f0e00 54.1%,#8c2200 56.7%,#8c4e00 60.1%,#887300 62.7%,#858000 64.3%,#7c7f00 65.8%,#4b6900 69.2%,#1d5f00 73.6%,#076303 77%,#026c0f 81.4%,#016914 83%,#007740 90.6%,#007c61 96.5%,#00836b 98.5%,#009379 100%)"></i><i style="left:726px;width:3px;background:linear-gradient(#20b147 0%,#26b238 13.5%,#2bb32b 19.3%,#3cb427 22.7%,#63b724 27.1%,#8cbf1d 30.5%,#a9c812 32.5%,#d8de01 35.1%,#d9db00 36%,#d4cc00 38%,#dfd000 39.3%,#eed001 40.2%,#f2b105 41.7%,#f96001 45.1%,#ef2b00 47.7%,#ec1600 49.2%,#e10c00 50%,#bd0a00 50.8%,#950800 51.4%,#910700 52.3%,#8e1300 54.9%,#8d2c00 57.5%,#867b00 63.3%,#828200 64.9%,#717900 66.4%,#4a6900 69%,#1b5f00 73.5%,#066203 76.8%,#026d11 81.3%,#006917 82.8%,#007a45 90.5%,#007e63 96.3%,#00836d 98.3%,#00937c 99.8%,#00947c 100%)"></i><i style="left:729px;width:3px;background:linear-gradient(#27b972 0%,#27b874 10.1%,#28b676 16%,#29b764 21.8%,#2ab760 22.7%,#32b53a 24.7%,#4bb529 27.3%,#95c325 31.7%,#b0cb1b 33.3%,#d6dd02 35.3%,#dcdf00 36.2%,#d7d100 38.2%,#e3d500 39.4%,#edd201 40.2%,#f2b605 41.7%,#f96302 45.1%,#f22c00 47.7%,#e91000 49.7%,#d70b00 50.3%,#aa0900 51.1%,#960800 51.4%,#910700 52.1%,#900c00 53.7%,#8c1f00 56.3%,#8c4a00 59.7%,#877900 63%,#838200 64.6%,#737a00 66.1%,#4b6900 68.7%,#1c5f00 73.2%,#056103 76.5%,#016d13 81%,#006b1a 83%,#007d4c 90.6%,#008064 95.1%,#00826d 97.7%,#00947f 99.7%,#009581 100%)"></i><i style="left:732px;width:3px;background:linear-gradient(#0e9a89 0%,#108f97 7.7%,#0e8895 8.9%,#125c95 12.3%,#1b3ea4 14.9%,#1a4b9e 22.5%,#1a8599 23.5%,#1aa195 24.1%,#1aa883 24.8%,#1c9e34 27.5%,#26a01e 28.4%,#349e1b 28.8%,#4da117 30.1%,#9ec112 33.4%,#cad805 35%,#dce000 36.2%,#d8d300 38.2%,#e7d700 39.7%,#efca03 41%,#f68d05 43.6%,#f74e02 46.2%,#f12600 48.2%,#e91100 49.7%,#d70b00 50.3%,#a90900 51.1%,#950800 51.4%,#910700 52.3%,#8f1000 54.3%,#8c2700 56.9%,#8b5500 60.3%,#877900 62.9%,#838200 64.4%,#737a00 66%,#526b00 67.9%,#205f00 72.4%,#065f03 75.8%,#006d18 81.6%,#006c1f 83.1%,#008053 90.8%,#008068 95.2%,#008371 97.9%,#009584 99.8%,#009684 100%)"></i><i style="left:735px;width:3px;background:linear-gradient(#00804d 0%,#007e4e 10.1%,#007754 16%,#00784a 21.8%,#017a47 22.7%,#017c31 23.9%,#027920 24.7%,#09730a 26.7%,#1b7102 28.2%,#377300 30.2%,#527f00 31.7%,#88ad00 33.3%,#b0cb02 34.2%,#d4dc01 35.7%,#dbde00 36.7%,#ddd600 38.7%,#ecd800 40.2%,#f1bf05 41.7%,#f96904 45.1%,#f52e00 47.7%,#eb1100 49.7%,#d80b00 50.3%,#a90900 51.1%,#950800 51.4%,#910700 52.6%,#8c1d00 56%,#8c4800 59.4%,#877900 62.7%,#848200 64.3%,#737a00 65.8%,#4a6900 68.4%,#195f00 72.9%,#055f03 75.5%,#006e1a 81.3%,#006c21 82.8%,#008258 90.5%,#008265 93.1%,#008373 97.5%,#008779 98.5%,#009688 100%)"></i><i style="left:738px;width:3px;background:linear-gradient(#007d38 0%,#007923 13.5%,#03790e 21.2%,#077904 23.8%,#297300 28.2%,#4a8d00 30.2%,#8ab800 32.8%,#c8d702 35.4%,#dbdf00 36.7%,#e4da00 39.3%,#ecdb00 40.2%,#f0c305 41.7%,#f96e06 45.1%,#f63000 47.7%,#f31800 49.2%,#e70d00 50%,#ca0b00 50.6%,#950800 51.4%,#910700 52.1%,#8f1000 54.1%,#8c2700 56.7%,#8c4a00 59.4%,#877a00 62.7%,#828200 64.3%,#757b00 65.5%,#4c6900 68.1%,#1a5f00 72.5%,#055f03 75.2%,#006e1c 81%,#006f26 83%,#008560 90.6%,#008769 92.2%,#00816f 95.6%,#00857b 98.2%,#00948b 99.7%,#00968d 100%)"></i><i style="left:741px;width:3px;background:linear-gradient(#007c33 0%,#00791d 13.5%,#047a09 21.2%,#0c7903 23.8%,#237200 27.1%,#2f7600 28.4%,#519200 30.4%,#80b400 32.4%,#c9d702 35.7%,#dbdf00 37%,#e9e000 39.6%,#edd602 40.8%,#f1bb07 42.3%,#f96307 45.7%,#f63302 47.7%,#f71900 49.2%,#eb0e00 50%,#ce0b00 50.6%,#960800 51.4%,#910700 52%,#900c00 53.5%,#8c2100 56.1%,#8c4e00 59.5%,#887500 62.1%,#848100 63.7%,#787d00 65.2%,#4d6a00 67.8%,#1b5f00 72.2%,#055f03 74.8%,#02650e 77.5%,#006f1e 80.8%,#00702a 82.8%,#008766 90.5%,#008276 96.3%,#008681 98.3%,#009591 99.8%,#009592 100%)"></i><i style="left:744px;width:3px;background:linear-gradient(#007a2c 0%,#017918 13.5%,#067a04 21.2%,#1e7500 25.6%,#367300 29%,#578e00 31%,#93ba00 33.6%,#cbd700 36.2%,#dade00 37.4%,#e8dd00 40%,#edd702 41%,#f1bc06 42.5%,#f96308 45.9%,#f63202 47.9%,#f81800 49.4%,#e80c00 50.2%,#c50a00 50.8%,#970800 51.4%,#910700 51.8%,#8f0e00 53.8%,#8c2500 56.4%,#8b5400 59.8%,#877900 62.4%,#838200 64%,#707900 65.5%,#4f6a00 67.5%,#1b5f00 71.9%,#045f03 74.5%,#02630f 77.1%,#007127 81.6%,#007231 83.1%,#008561 89%,#00876d 91.6%,#008178 96%,#008382 98%,#009092 99.5%,#009295 100%)"></i><i style="left:747px;width:2px;background:linear-gradient(#007a26 0%,#027913 13.5%,#057a05 19.3%,#217600 25.2%,#3e7300 29.6%,#5e8e00 31.6%,#abc500 35%,#ced500 37%,#dcd600 39.6%,#ebda00 40.8%,#f0c305 42.3%,#f88109 44.9%,#f63a04 47.5%,#fb1e00 49.1%,#ee0f00 50%,#d00b00 50.6%,#970800 51.4%,#910700 51.8%,#900c00 53.4%,#8c2100 56%,#8c4e00 59.4%,#887500 62%,#848100 63.5%,#767c00 65%,#536b00 67%,#1e5f00 71.5%,#055f03 74.1%,#016312 77.5%,#006f26 80.8%,#007133 82.8%,#008564 88.7%,#008670 92%,#008077 95.4%,#008184 98%,#008d95 100%)"></i><i style="left:749px;width:2px;background:linear-gradient(#007922 0%,#037910 13.5%,#097a03 19.3%,#257600 25.2%,#397400 28.5%,#487c00 30.1%,#699700 32.1%,#b3ca00 35.4%,#d2d800 37.4%,#e1d900 40%,#ecda00 41%,#f0c305 42.5%,#f87f09 45.1%,#f63804 47.7%,#fb1c00 49.2%,#f00f00 50%,#d10b00 50.6%,#970800 51.4%,#910700 51.8%,#900c00 53.4%,#8c2100 56%,#8c4f00 59.4%,#877600 62%,#848200 63.5%,#747b00 65%,#516b00 67%,#1c5f00 71.5%,#045f03 74.1%,#016313 77.5%,#007028 80.8%,#007236 82.8%,#008567 88.7%,#008571 92%,#007f7a 95.4%,#007d84 98%,#008995 100%)"></i><i style="left:751px;width:2px;background:linear-gradient(#007a20 0%,#037a0d 13.5%,#077a04 17.9%,#2b7600 25.6%,#3c7a00 28.2%,#588c00 30.8%,#87b000 33.4%,#b4cc00 35.4%,#d6dc00 37.4%,#ebde00 40.8%,#f1c007 42.8%,#f68c0a 44.8%,#f64206 47.4%,#fb1a00 49.4%,#f71200 49.8%,#dd0c00 50.5%,#970800 51.4%,#910700 51.8%,#900c00 53.4%,#8c2200 56%,#8c5000 59.4%,#877700 62%,#848200 63.5%,#737a00 65%,#506a00 67%,#1b5f00 71.5%,#045f04 74.1%,#006315 77.5%,#00702b 80.8%,#007239 82.8%,#008360 87.3%,#00846f 90.6%,#007985 98.3%,#008494 99.8%,#008495 100%)"></i><i style="left:753px;width:2px;background:linear-gradient(#008723 0%,#047d0d 13.5%,#098004 17.9%,#2f7f00 25.6%,#4a8900 29%,#699c00 31.6%,#a9c700 35%,#d7de00 37.6%,#ebde01 41%,#f0c906 42.5%,#f5990a 44.5%,#f85e09 46.5%,#f63505 48%,#fc1900 49.5%,#f51100 50%,#df0c00 50.5%,#980800 51.4%,#910700 51.7%,#900b00 53.2%,#8c2100 55.8%,#8c4f00 59.2%,#877600 61.8%,#848200 63.3%,#747b00 64.9%,#506b00 66.9%,#1b5f00 71.3%,#045f04 73.9%,#006115 77.3%,#007134 81.7%,#007c51 85.1%,#008366 87.7%,#008275 92.2%,#007583 98%,#008094 100%)"></i><i style="left:755px;width:2px;background:linear-gradient(#019f2e 0%,#019621 5.8%,#048b0e 13.5%,#0a9204 17.9%,#229201 22.4%,#368d00 25.8%,#519400 29.1%,#6fa400 31.7%,#d5dc02 37.6%,#e5e300 39.6%,#ecd902 41.6%,#f1c008 43.1%,#f7890a 45.1%,#f74f08 47.1%,#f82b03 48.6%,#fa1400 49.8%,#e90c00 50.3%,#bf0a00 50.9%,#980800 51.4%,#910700 51.7%,#900b00 53.2%,#8c2100 55.8%,#8c5000 59.2%,#877600 61.8%,#848200 63.3%,#787d00 64.6%,#536b00 66.6%,#1d5f00 71%,#045f03 73.6%,#005f15 77%,#007235 81.4%,#00713d 82.7%,#008164 87.1%,#008174 91.6%,#007180 97.4%,#007388 98.6%,#007b92 99.8%,#007c93 100%)"></i><i style="left:757px;width:2px;background:linear-gradient(#0bab3f 0%,#05a62b 5.8%,#049d13 13.5%,#09a307 17.9%,#24a304 22.4%,#3b9b00 25.8%,#579e00 29.1%,#71aa00 31.7%,#a4c502 35.1%,#d4dc03 37.7%,#e7e400 39.7%,#ecd903 41.7%,#f1c008 43.3%,#f7870a 45.2%,#f74d08 47.2%,#f92903 48.8%,#fc1700 49.7%,#f20f00 50.2%,#cb0b00 50.8%,#980800 51.4%,#910700 51.7%,#900c00 53.2%,#8c2200 55.8%,#8c5100 59.2%,#877700 61.8%,#848200 63.3%,#767c00 64.6%,#526b00 66.6%,#1b5f00 71%,#045f04 73.6%,#005e16 77%,#007137 81.4%,#007242 83%,#007f62 86.3%,#007e77 92.2%,#006e7d 96.6%,#007086 98.6%,#007891 99.8%,#007891 100%)"></i><i style="left:759px;width:2px;background:linear-gradient(#17b153 0%,#0eab3e 4.4%,#0daa2c 10.3%,#0ba916 16.1%,#13ab10 19.5%,#30a907 23.9%,#54a800 28.4%,#73b000 31.7%,#a0c203 35.1%,#d0da04 37.7%,#e6e500 39.7%,#ecdc03 41.7%,#f0c308 43.3%,#f5990b 44.8%,#f85c09 46.8%,#f73305 48.3%,#fc1500 49.8%,#ec0d00 50.3%,#b20900 51.1%,#980800 51.4%,#910700 51.7%,#900c00 53.2%,#8c2300 55.8%,#8d4500 58.4%,#877800 61.8%,#848300 63.3%,#6f7900 64.9%,#4c6a00 66.9%,#165f01 71.3%,#045f03 73.3%,#00611d 77.8%,#007038 81.1%,#007246 83.1%,#007d63 86.5%,#007c78 92.3%,#006a7c 96.8%,#006a81 98.3%,#00748f 99.8%,#007490 100%)"></i><i style="left:761px;width:2px;background:linear-gradient(#21b668 0%,#17b150 4.4%,#16ae3d 10.3%,#11ab28 14.7%,#1cae1b 20.6%,#44ab06 26.4%,#79b600 32.2%,#96be04 34.8%,#d5dc04 38.2%,#e8e500 40.2%,#edd804 42.2%,#f1bb09 43.7%,#f96a0a 46.3%,#f73405 48.3%,#fc1600 49.8%,#f51000 50.2%,#d90b00 50.6%,#980800 51.4%,#910700 51.7%,#900c00 53.2%,#8c2300 55.8%,#8b5200 59.2%,#877900 61.8%,#838200 63.3%,#737b00 64.6%,#4f6a00 66.6%,#185f00 71%,#045f03 73%,#005f1c 77.5%,#006e37 80.8%,#00734c 83.4%,#007b61 86%,#007b78 91.9%,#00677b 96.3%,#006680 98.3%,#00708e 99.8%,#00708e 100%)"></i><i style="left:763px;width:2px;background:linear-gradient(#27ba7a 0%,#1eb562 4.4%,#21b457 8.9%,#18ae38 14.7%,#23b12c 20.6%,#2cb11e 23.2%,#4ead08 27.6%,#83b904 33.4%,#9bc105 35.4%,#dadf04 38.8%,#e8e501 40.3%,#ebde03 41.9%,#f0c608 43.4%,#f5990b 44.9%,#f85b09 46.9%,#f73305 48.5%,#fb1300 50%,#e60c00 50.5%,#980800 51.4%,#910700 51.7%,#900c00 53.2%,#8d2d00 56.6%,#887000 61%,#858000 62.6%,#7e8000 63.8%,#506a00 66.4%,#195f00 70.9%,#045f03 72.9%,#005f1d 77.3%,#006d38 80.7%,#00724d 83.3%,#00795e 85.3%,#007976 91.1%,#007478 92.6%,#006579 96%,#00627d 98%,#006d8d 100%)"></i><i style="left:765px;width:2px;background:linear-gradient(#28bc88 0%,#22b872 4.4%,#26b869 8.9%,#1fb149 14.7%,#28b33d 20.6%,#2fb325 23.9%,#54b00e 28.4%,#88bb06 34.2%,#a4c507 36.2%,#d8de05 38.8%,#e8e401 40.8%,#ecdb05 42.3%,#f1bd09 43.9%,#f96909 46.5%,#f73406 48.5%,#fc1400 50%,#f20e00 50.3%,#cf0b00 50.8%,#990800 51.4%,#910700 51.7%,#900c00 53.2%,#8c2400 55.8%,#8b5400 59.2%,#877a00 61.8%,#818200 63.3%,#707900 64.6%,#4c6900 66.6%,#155f01 71%,#045f05 73%,#005f20 77.5%,#006d3c 80.8%,#007251 83.4%,#00775f 85.4%,#007878 91.3%,#006378 95.7%,#00607d 98.3%,#00698b 99.8%,#00698c 100%)"></i><i style="left:767px;width:2px;background:linear-gradient(#28be96 0%,#25bb81 4.4%,#28ba79 8.9%,#25b55b 14.7%,#28b44a 20.6%,#2db530 23.9%,#52b116 28.4%,#77b70b 32.8%,#9ec209 36.2%,#d4dc07 38.8%,#e8e502 40.8%,#ecdd06 42.3%,#f1c00a 43.9%,#f96b09 46.5%,#f73506 48.5%,#fd1501 50%,#f40f00 50.3%,#d10b00 50.8%,#990800 51.4%,#910700 51.7%,#900c00 53.2%,#8c2500 55.8%,#8d4900 58.4%,#877b00 61.8%,#818100 63.3%,#6e7800 64.6%,#4b6900 66.6%,#145f01 71%,#035f06 73%,#006022 77.5%,#006d3e 80.8%,#007253 83.4%,#007766 86.8%,#007578 91.3%,#006377 94.6%,#005c7b 98%,#00668b 100%)"></i><i style="left:769px;width:2px;background:linear-gradient(#28b7a5 0%,#28bf99 2%,#28bd8d 6.4%,#28bb7e 10.9%,#27b866 16.7%,#28b65c 20.1%,#2db535 24.5%,#38b52b 26.1%,#58b31a 29.4%,#7eb90e 33.9%,#9ec20b 36.5%,#d5dd08 39.1%,#e8e504 41.1%,#eddb07 42.6%,#f1c30a 43.9%,#fa6c09 46.5%,#f63606 48.5%,#fd1601 50%,#f60f00 50.3%,#d30b00 50.8%,#9a0800 51.4%,#910700 51.7%,#900d00 53.2%,#8c2500 55.8%,#8b5600 59.2%,#867c00 61.8%,#808100 63.3%,#737b00 64.3%,#4e6a00 66.3%,#165f01 70.7%,#045f05 72.7%,#006022 77.1%,#006f47 81.6%,#006f50 82.8%,#007561 85.4%,#007575 89.9%,#005d76 95.7%,#005a7b 98.3%,#006289 99.8%,#00628a 100%)"></i><i style="left:771px;width:2px;background:linear-gradient(#354193 0%,#2c5db1 0.5%,#2790aa 1.2%,#28a7a8 1.8%,#28b6a7 2.6%,#28bca0 5.2%,#28be97 9.7%,#28bb7c 14.1%,#28b86c 19.9%,#28b557 22.5%,#2eb531 25.9%,#53b323 29.3%,#79b913 33.7%,#97c00e 36.3%,#dadf08 39.7%,#e8e605 41.3%,#eddb09 42.8%,#f1c10b 44%,#f96908 46.6%,#f73406 48.6%,#fc1300 50.2%,#ee0d00 50.5%,#9a0800 51.4%,#910700 51.7%,#900d00 53.2%,#8c2600 55.8%,#8b5700 59.2%,#867c00 61.8%,#828200 63%,#717a00 64.3%,#4c6a00 66.3%,#155f01 70.7%,#035f06 72.7%,#00622e 78.5%,#006d45 81.1%,#006e50 82.7%,#00746f 88.5%,#006d76 91.1%,#005a74 95.6%,#005679 98.2%,#005e87 99.7%,#005e89 100%)"></i><i style="left:773px;width:2px;background:linear-gradient(#260885 0%,#3a1070 0.3%,#3e146d 0.9%,#3e1677 1.2%,#3d1f90 1.5%,#372892 1.8%,#353f94 2.6%,#3155ad 3.4%,#2962b1 4.6%,#2f5ab0 7.2%,#2b60b2 8.4%,#276fb0 9.2%,#279ca5 10.7%,#28b8a4 12%,#28bd95 13.5%,#28bd8a 16.9%,#28bd8b 19.5%,#28bb7e 21%,#2ab443 25.5%,#32b52d 27.5%,#5ab524 30.8%,#85bc14 35.3%,#a1c410 37.3%,#d8df0a 39.9%,#e7e508 41.4%,#eddb0a 42.9%,#f1bf0c 44.2%,#f87807 46.2%,#f73106 48.8%,#fd1702 50%,#f81000 50.3%,#d50b00 50.8%,#9a0800 51.4%,#910700 51.7%,#900d00 53.2%,#8c2600 55.8%,#8b5800 59.2%,#867d00 61.8%,#828200 63%,#767c00 64%,#4f6a00 66%,#175f01 70.4%,#045f05 72.4%,#00622e 78.2%,#006d4a 81.6%,#006d53 82.8%,#007170 88.7%,#006575 92%,#005573 96.5%,#00537b 98.5%,#005a89 100%)"></i><i style="left:775px;width:2px;background:linear-gradient(#00696e 0%,#005a72 0.3%,#013e82 0.8%,#053289 0.9%,#0c2a89 1.1%,#192174 1.4%,#1e117c 2%,#250884 2.3%,#370c6e 2.9%,#3e146e 3.5%,#3e146d 9.4%,#3e146f 10.3%,#3d1474 10.6%,#39198b 11%,#372494 11.3%,#353690 12%,#344995 12.6%,#2b61b3 13.3%,#277fae 14.3%,#278baa 15.5%,#2782ad 17%,#286ab2 18.6%,#245eb0 19.3%,#2363af 20.1%,#2788a9 21.3%,#27b69a 22.5%,#28bb7b 23.5%,#28b761 24.4%,#2db533 27.8%,#3db52b 29.3%,#63b722 32.7%,#8abd15 36%,#a1c412 37.6%,#d8df0b 40.2%,#e8e60b 41.7%,#ecde0b 42.9%,#f1c10c 44.2%,#f59f0b 45.1%,#f96b07 46.6%,#f73506 48.6%,#fc1401 50.2%,#ef0d00 50.5%,#9a0800 51.4%,#910700 51.7%,#8f0d00 53.2%,#8c2700 55.8%,#8b5900 59.2%,#867e00 61.8%,#7e8000 63.3%,#4e6a00 66%,#155f01 70.4%,#035f06 72.4%,#006230 78.2%,#006c4c 81.6%,#006c58 83.6%,#006f6e 88%,#005f72 92.5%,#005073 96.9%,#004f7b 98.5%,#005589 100%)"></i><i style="left:777px;width:2px;background:linear-gradient(#008264 0%,#007a6e 1.5%,#005c71 2.8%,#01467e 4%,#01467e 5.2%,#015b71 7.8%,#015376 9.4%,#014681 10.1%,#0a318b 10.7%,#1c2b73 11.3%,#1d1875 12.1%,#240984 12.7%,#2f0a7f 13%,#3e1471 13.5%,#3e146e 16.1%,#3e1473 17.6%,#33138a 18.6%,#1f0b86 19.3%,#1e1083 20.2%,#2d1791 21%,#30149b 21.9%,#291e96 22.4%,#2f329a 22.7%,#2b4faa 23.2%,#2659ae 23.3%,#237ca9 23.6%,#269ba3 23.9%,#27b697 24.4%,#28ba7a 25%,#28b75f 25.8%,#2bb440 27.8%,#34b52c 29.8%,#6eb921 34.2%,#9bc214 37.6%,#d2dc0d 40.2%,#e9e50d 42.2%,#edde0c 43.1%,#f1be0d 44.3%,#f5990a 45.2%,#f87a06 46.2%,#f73205 48.8%,#fc1802 50%,#f81100 50.3%,#d50b00 50.8%,#9a0800 51.4%,#910700 51.7%,#8f0d00 53.2%,#8c2700 55.8%,#8c4d00 58.4%,#877600 61%,#848200 62.6%,#767c00 63.8%,#4f6a00 65.8%,#155f01 70.2%,#035f06 72.2%,#006231 78.1%,#006c4d 81.4%,#006b5a 84%,#006c6f 88.5%,#004f70 96.2%,#004b78 98.2%,#005087 99.7%,#005189 100%)"></i><i style="left:779px;width:2px;background:linear-gradient(#008157 0%,#008265 2.6%,#008164 6%,#008161 10.4%,#007e6a 12%,#01646e 13.5%,#015277 14.4%,#014b7e 15.6%,#015871 17.2%,#00726d 18.7%,#007968 20.2%,#016f6a 21.5%,#015a70 22.2%,#08468c 22.9%,#10348e 23.2%,#142e88 23.3%,#152790 23.6%,#152d9e 23.9%,#154099 24.4%,#1c62a0 24.7%,#2184a5 25%,#219b9e 25.3%,#24b19d 25.6%,#27bb85 26.2%,#28b65f 27.1%,#29b44c 28.1%,#33b52d 30.7%,#76bb25 35.1%,#98c117 37.7%,#dae00b 41.1%,#e9e50e 42.3%,#eddd0d 43.3%,#f2ba0e 44.5%,#f78006 46%,#f74606 48%,#fc1802 50%,#f81100 50.3%,#e30c00 50.6%,#9a0800 51.4%,#910700 51.7%,#8f0d00 53.2%,#8d2800 55.8%,#8c4e00 58.4%,#877600 61%,#848200 62.6%,#747b00 63.8%,#4d6a00 65.8%,#145f01 70.2%,#045f03 71.8%,#00643d 79.4%,#006b4f 81.4%,#006855 83%,#006c6c 87.4%,#005c71 91.9%,#004b71 96.3%,#004779 98.3%,#004c89 99.8%,#004d89 100%)"></i><i style="left:781px;width:2px;background:linear-gradient(#007f47 0%,#008158 2.6%,#008157 6%,#008050 9.4%,#00825a 15.2%,#007e41 21%,#007f45 22.5%,#007e5a 23.8%,#076974 25%,#076677 25.3%,#11778d 25.8%,#147e90 26.2%,#1d9c9f 26.7%,#21ad9b 27.1%,#22b48b 27.6%,#27ba80 28.2%,#27b65d 29.4%,#2ab33a 31.4%,#39b42b 33%,#71ba27 35.6%,#8dc124 37.1%,#9bc216 38.3%,#d2dc0c 41%,#e6e60f 42.2%,#eddb0d 43.4%,#f1c10e 44.3%,#f59c0a 45.2%,#f97206 46.5%,#f63a06 48.5%,#fc1802 50%,#f91100 50.3%,#e40c00 50.6%,#9a0800 51.4%,#910700 51.7%,#8f0e00 53.2%,#8d2800 55.8%,#896d00 60.3%,#857f00 61.8%,#7e8000 63%,#6f7900 64%,#506b00 65.5%,#165f01 69.9%,#035f06 71.9%,#006440 79.6%,#006a52 81.6%,#006754 82.8%,#006a6c 87.3%,#005a70 91.7%,#004d6e 95.1%,#00447c 98.5%,#00498a 100%)"></i><i style="left:783px;width:2px;background:linear-gradient(#007c37 0%,#007f49 2.6%,#007f4a 5.2%,#007e3e 9.7%,#007f47 15.5%,#007b2f 21.3%,#007b33 23.9%,#007a3e 25.2%,#01795a 26.4%,#067d6d 26.8%,#077b75 27.5%,#0d8e86 27.8%,#149686 28.4%,#149b7a 29.6%,#148f33 32.2%,#1b8e18 33.7%,#2e8e15 34.7%,#4ba615 35.6%,#77ba1f 36.8%,#8dc01d 37.7%,#a0c415 39%,#cbd90b 41%,#e4e50f 42.2%,#ebe10d 43.1%,#f0cd0d 44%,#f59d0a 45.2%,#f97307 46.5%,#f63a06 48.5%,#fc1902 50%,#f91100 50.3%,#e50c00 50.6%,#9a0800 51.4%,#910700 51.7%,#8f0e00 53.2%,#8d2900 55.8%,#8c4f00 58.4%,#877800 61%,#828200 62.6%,#777d00 63.5%,#4f6a00 65.5%,#155f01 69.9%,#045f03 71.5%,#00643f 79.1%,#006a50 81.1%,#006656 83.1%,#006969 86.5%,#00556f 92.3%,#004770 95.7%,#00407b 98.3%,#00458a 99.8%,#00458b 100%)"></i><i style="left:785px;width:2px;background:linear-gradient(#007a29 0%,#007d3b 3.4%,#007c36 6%,#007a2b 9.4%,#007c35 15.2%,#007a2b 17.8%,#00791b 21.2%,#007820 23.8%,#017336 28.2%,#016e29 29.8%,#05690a 31.7%,#146602 33.3%,#256601 34.8%,#327301 35.6%,#468f03 36%,#62af07 36.7%,#7fbb15 37.6%,#a5c60f 39.6%,#c7d707 41.1%,#dfe20d 42%,#eae40b 42.8%,#edda0b 43.6%,#f3b20c 44.8%,#f78407 46%,#f63706 48.6%,#fc1501 50.2%,#f10e00 50.5%,#c70a00 50.9%,#9a0800 51.4%,#910700 51.7%,#8f0e00 53.2%,#8d2900 55.8%,#8a5d00 59.2%,#877b00 61.2%,#808100 62.7%,#6b7700 64%,#4d6a00 65.5%,#135f01 69.9%,#045f04 71.5%,#006441 79.1%,#006851 81.1%,#006454 82.7%,#00646a 87.1%,#00556e 91.6%,#00476e 94.9%,#003c7b 98.3%,#00418b 99.8%,#00418c 100%)"></i><i style="left:787px;width:2px;background:linear-gradient(#007c22 0%,#007a2b 4.4%,#00791d 10.3%,#007920 16.1%,#037a0b 21.9%,#027711 24.5%,#00711c 27.1%,#026c0f 29.8%,#066903 31.3%,#1e6300 33.9%,#286e00 34.7%,#3e8d00 35.6%,#4fa401 36%,#68b307 37%,#83bb0d 38.2%,#a1c408 39.7%,#c6d503 41.3%,#dbe008 41.9%,#e8e507 42.6%,#edd907 43.6%,#f3b20b 44.8%,#fa6c07 46.8%,#f73405 48.8%,#fc1902 50%,#f81200 50.3%,#e40c00 50.6%,#9a0800 51.4%,#910700 51.7%,#8f0e00 53.2%,#8d2a00 55.8%,#8c5100 58.4%,#877a00 61%,#818100 62.6%,#737b00 63.5%,#4c6900 65.5%,#125f01 69.9%,#035f05 71.5%,#006335 77.3%,#00664f 80.7%,#00645b 84%,#006368 86.7%,#00466d 94.3%,#003978 97.7%,#003980 98.6%,#003d8c 99.8%,#003d8c 100%)"></i><i style="left:789px;width:2px;background:linear-gradient(#099b32 0%,#018022 1.5%,#007921 3.5%,#007c1d 6.9%,#058b1f 10.3%,#027d17 13.7%,#027a12 17%,#07840a 20.4%,#0a7a04 23.8%,#036f0b 28.2%,#076b04 30.2%,#1f6400 33.6%,#256600 34.4%,#368300 35.3%,#4fa900 36%,#7ab708 38%,#b1c800 40.6%,#b7c700 41.1%,#d7de03 41.7%,#e8e403 42.6%,#edd804 43.6%,#f2b108 44.8%,#fa6c07 46.8%,#f73405 48.8%,#fc1901 50%,#f71100 50.3%,#d50b00 50.8%,#990800 51.4%,#910700 51.7%,#8e1200 53.7%,#8d3000 56.3%,#877700 60.7%,#838200 62.3%,#717a00 63.5%,#4b6900 65.5%,#105f01 69.9%,#045f04 71.2%,#006334 77%,#00664e 80.4%,#006259 83.7%,#006066 86.3%,#00446c 94%,#003776 97.4%,#00398d 100%)"></i><i style="left:791px;width:2px;background:linear-gradient(#21b353 0%,#10a539 1.5%,#049027 3.1%,#038a23 4.6%,#059326 6.1%,#11a634 8.1%,#1aac3d 10.1%,#17a833 12.1%,#0c941f 14.7%,#0a931a 16.7%,#1ba923 20.1%,#1fa91c 22.1%,#1fa114 23%,#1b8d08 24.2%,#177f04 24.8%,#127402 26.4%,#0f6e02 29%,#236400 33.4%,#276400 34.7%,#337900 35.4%,#489b00 36%,#5fae01 37%,#94bb00 39.6%,#a6b800 40.8%,#aab800 41.1%,#bcc700 41.4%,#d2d900 41.7%,#e5e100 42.6%,#ecda01 43.4%,#f3ac07 44.9%,#f96907 46.9%,#f73105 48.9%,#fb1500 50.2%,#ee0e00 50.5%,#b60900 51.1%,#990800 51.4%,#910700 51.7%,#8d1800 54.3%,#8d4600 57.7%,#867b00 61%,#7f8000 62.6%,#697600 63.8%,#4b6900 65.3%,#105f01 69.8%,#045f04 71%,#006335 76.8%,#00654f 80.2%,#006159 83.6%,#005e65 86.2%,#004c6b 92%,#003e6e 94.6%,#003477 97.2%,#00358e 99.8%,#00368f 100%)"></i><i style="left:793px;width:2px;background:linear-gradient(#28b96e 0%,#23b454 2%,#19ad44 3.5%,#17ac41 5.1%,#27b65b 9.5%,#26b453 12.1%,#20b03c 15.5%,#23b13b 17.5%,#2ab440 20.9%,#2bb431 22.9%,#2ead20 24.4%,#2da315 25.2%,#28920b 25.8%,#227c03 26.7%,#1f7100 27.9%,#276700 33.7%,#2d6d00 35%,#357a00 35.6%,#469200 36.2%,#69ab00 37.7%,#8dae00 39.7%,#9caa00 41%,#a6af00 41.3%,#c5ca00 41.7%,#dbd500 42.6%,#e9d500 43.4%,#f1bf03 44.3%,#f96a08 46.9%,#f73105 48.9%,#fb1500 50.2%,#ee0e00 50.5%,#c50a00 50.9%,#980800 51.4%,#910700 51.7%,#8e1300 53.7%,#8d3100 56.3%,#877800 60.7%,#828200 62.3%,#6e7800 63.5%,#4f6a00 65%,#135f01 69.5%,#035f05 71%,#006546 78.7%,#006450 80.7%,#005f58 83.3%,#005c64 85.9%,#004a6b 91.7%,#00396f 95.1%,#00307c 97.7%,#00338f 99.7%,#003390 100%)"></i><i style="left:795px;width:2px;background:linear-gradient(#28bd8b 0%,#28b869 2.6%,#27b65f 4.6%,#28b86a 7.2%,#28bb77 9.8%,#28ba71 11.8%,#28b559 15.2%,#28b559 18.6%,#28b65a 21.2%,#29b447 23.2%,#32b42b 25.2%,#3bb021 26.1%,#3ba313 27%,#358f08 27.8%,#2d7902 29%,#2b7400 30.5%,#338200 33.9%,#367d00 35.4%,#448c00 36.2%,#6a9e00 38.2%,#939f00 40.8%,#9ea500 41.3%,#bdbe00 41.9%,#dbcd00 43.1%,#efc600 44%,#f97608 46.6%,#f63806 48.6%,#fb1500 50.2%,#ed0e00 50.5%,#b50900 51.1%,#980800 51.4%,#910700 51.7%,#8e1300 53.7%,#8d3200 56.3%,#877900 60.7%,#818100 62.3%,#737b00 63.2%,#526b00 64.7%,#155f01 69.2%,#045f04 70.7%,#006336 76.5%,#00654f 79.9%,#005e58 83.3%,#005964 85.9%,#00486b 91.7%,#003670 95.1%,#002e84 98.5%,#003091 100%)"></i><i style="left:797px;width:2px;background:linear-gradient(#28baa2 0%,#28bc82 3.4%,#28bb7e 5.4%,#28be95 9.8%,#28bd8b 12.4%,#28ba74 15.8%,#28ba76 18.4%,#28bb79 21%,#28b96f 22.5%,#2bb440 25.2%,#34b52c 26.4%,#48b324 27.6%,#44a510 29.6%,#40a303 34%,#3e9800 35%,#3d8b00 35.6%,#4e8900 37.1%,#8c9900 40.5%,#9a9e00 41.3%,#b9b700 42%,#d9c400 43.3%,#efc000 44.2%,#f59608 45.7%,#f96409 47.2%,#f73506 48.8%,#fc1801 50%,#f51100 50.3%,#d30b00 50.8%,#970800 51.4%,#910700 51.8%,#8c1a00 54.4%,#8c4b00 57.8%,#877600 60.4%,#838200 62%,#717a00 63.2%,#516b00 64.7%,#135f01 69.2%,#045f05 70.7%,#006338 76.5%,#00664e 79.1%,#005a61 85%,#004869 90.8%,#003271 95.2%,#002c88 98.6%,#002e92 99.8%,#002e92 100%)"></i><i style="left:799px;width:2px;background:linear-gradient(#28a2ac 0%,#28b4aa 1.5%,#28bd9d 4.9%,#28b4a8 10.7%,#28be94 15.2%,#28be90 17.2%,#28bc99 20.6%,#28bc92 22.5%,#28bc83 23.5%,#2db537 26.8%,#3db52b 28.1%,#48b427 29.6%,#46b11e 32.2%,#43a903 34.8%,#439c00 35.4%,#4c8300 37%,#7b9100 39.6%,#989c00 41.1%,#c4bb00 42.6%,#dfc100 43.6%,#f0bb00 44.3%,#f69309 45.9%,#f85209 47.9%,#f82d05 49.1%,#fc1801 50%,#f41100 50.3%,#d20b00 50.8%,#960800 51.4%,#910700 51.8%,#8c1b00 54.4%,#8e3e00 57.1%,#877700 60.4%,#848100 61.7%,#767c00 62.9%,#4d6a00 64.9%,#1e5f00 68.3%,#055f03 70.2%,#00612a 74.7%,#00654f 79.1%,#005164 86.8%,#00446a 91.3%,#003270 94.6%,#002a83 98%,#002b94 100%)"></i><i style="left:801px;width:2px;background:linear-gradient(#353493 0%,#373b95 0.2%,#2e52af 0.6%,#276ead 1.1%,#288dab 1.8%,#28a2ae 3.1%,#28b1ac 5.7%,#28adab 6.6%,#289aaa 7.5%,#2770af 8.3%,#2d5eb1 8.6%,#36519b 9%,#354592 9.4%,#353794 10.3%,#333a9a 11.5%,#2d50a6 12.7%,#245eb0 13.3%,#267dae 14%,#279ea5 15.2%,#27a8a6 16.4%,#27a2a6 17.6%,#268baa 18.9%,#2174a7 19.8%,#1e6aa5 20.7%,#145a95 21.3%,#145697 22.1%,#1e5fa6 22.5%,#2169aa 23.2%,#2181a4 23.8%,#26a3a1 24.2%,#27b796 24.7%,#28bc80 25.3%,#28b553 26.8%,#2db535 28.4%,#38b52c 30.4%,#40b529 32.4%,#40ac0d 34.4%,#46a800 35.3%,#4e8500 36.8%,#568200 37.6%,#758e00 39.1%,#999f00 40.6%,#aeab00 41.9%,#d3bf00 43.1%,#ebc000 44%,#f3a805 45.2%,#f9750a 46.8%,#f73506 48.8%,#fc1800 50%,#f31100 50.3%,#d20b00 50.8%,#960800 51.4%,#910700 51.7%,#8e1400 53.7%,#8d3300 56.3%,#867c00 60.7%,#828200 62%,#747b00 62.9%,#4b6900 64.9%,#1c5f00 68.3%,#045f03 70.2%,#006338 76.1%,#00664e 78.7%,#005163 86.3%,#003c6d 92.2%,#003170 94.2%,#00278b 98.6%,#002894 99.8%,#002895 100%)"></i><i style="left:803px;width:2px;background:linear-gradient(#2c087f 0%,#350b6f 0.2%,#3e146a 0.6%,#451c71 1.1%,#47217e 1.4%,#3c2393 1.7%,#393292 2%,#3a4198 2.5%,#3249ac 2.8%,#2a54b2 3.1%,#2865ac 3.5%,#2873ad 4.4%,#286fae 5.4%,#2d5ab0 6%,#3255ab 6.1%,#3a4c95 6.4%,#393192 7.1%,#3a2695 7.2%,#40218f 7.4%,#492177 7.7%,#3e146a 8.4%,#3d1370 8.9%,#340f7f 9%,#270c86 9.2%,#1f0f80 9.4%,#1d1a77 9.7%,#1b2278 10%,#122d8a 10.4%,#0a368d 11.3%,#132d89 12.3%,#1d1d77 13%,#1d157e 13.5%,#29138c 13.8%,#31138e 14%,#3e1476 14.6%,#3b147e 15.2%,#32158d 16%,#2d1796 17.2%,#2416ac 17.8%,#1c1aac 18.1%,#123299 18.9%,#073e82 19.3%,#06677a 20.6%,#016a73 21.2%,#016770 22.1%,#065e7b 22.7%,#074a85 23.2%,#102b8d 23.6%,#1c218f 23.9%,#2816a1 24.2%,#2f149f 24.4%,#2f1694 24.5%,#302f8e 24.8%,#354f90 25.2%,#286ab0 25.5%,#27a39e 25.9%,#27b794 26.2%,#28bc7f 26.7%,#28b763 27.5%,#29b449 28.7%,#2eb532 31.3%,#32b326 32.8%,#3aab0d 34.4%,#46a800 35.3%,#528800 36.8%,#5d8500 37.7%,#819600 39.3%,#a7aa00 40.8%,#acab00 41.4%,#b1ac00 41.9%,#cebf00 42.8%,#e7c400 43.7%,#f1b600 44.6%,#f4a109 45.6%,#f85e0b 47.5%,#f82d05 49.1%,#fb1700 50%,#f21100 50.3%,#d00b00 50.8%,#950800 51.4%,#910700 51.8%,#8c1b00 54.4%,#8e3f00 57.1%,#877900 60.4%,#848200 61.7%,#727a00 62.9%,#516b00 64.4%,#135f01 68.9%,#035f06 70.4%,#00643b 76.2%,#00654f 78.8%,#005a5c 83.3%,#003f6a 91%,#00316e 93.6%,#002587 98%,#002596 100%)"></i><i style="left:805px;width:2px;background:linear-gradient(#002b7c 0%,#081791 0.5%,#10138b 0.6%,#170f7c 0.8%,#210782 1.1%,#2b067e 1.2%,#32076c 1.4%,#340762 1.7%,#3e146a 2.3%,#42196d 2.9%,#492173 3.5%,#492173 5.5%,#461d70 6%,#3e146a 6.4%,#3b1067 7.1%,#340767 7.4%,#2e0778 7.5%,#210a83 7.7%,#1b1b71 8%,#192071 8.1%,#0f2685 8.3%,#033188 8.4%,#014979 8.7%,#006472 9.2%,#007871 10.1%,#007c6c 12.1%,#00756f 13.3%,#015c72 14.6%,#014181 15.8%,#014081 16.6%,#015c72 17.8%,#007b6f 19%,#008260 21%,#00825c 22.5%,#007e63 23.8%,#007a6b 24.1%,#015f6c 24.5%,#054984 24.8%,#11378c 25%,#1c2f73 25.2%,#1d256f 25.3%,#201e77 25.5%,#261786 25.6%,#33138b 25.8%,#3b1480 25.9%,#35158e 26.1%,#2e228e 26.2%,#324b97 26.5%,#2b58ad 26.7%,#2470ad 26.8%,#2697a3 27.1%,#27b19b 27.5%,#28bc87 27.9%,#28b96c 28.5%,#28b552 29.8%,#2cb43b 31.7%,#21b01c 33%,#37a905 34.5%,#479f00 35.4%,#568e00 36.7%,#628b00 37.6%,#809900 38.8%,#aeb300 40.3%,#bcbb00 41.3%,#b5b000 41.7%,#dac700 42.9%,#eec700 43.9%,#f2af03 45.1%,#f6940b 46%,#f9600c 47.5%,#f82d05 49.1%,#fb1700 50%,#e80e00 50.5%,#b10900 51.1%,#950800 51.4%,#910700 52%,#8c1d00 54.6%,#8d4300 57.2%,#867b00 60.6%,#828200 61.8%,#747b00 62.7%,#526b00 64.3%,#135f01 68.7%,#035f05 70.2%,#00643b 76.1%,#00654f 78.7%,#00595c 83.1%,#004c62 86.5%,#003c6b 91%,#002f71 93.6%,#002389 98%,#002297 100%)"></i><i style="left:807px;width:2px;background:linear-gradient(#004770 0%,#003178 1.2%,#00277f 1.5%,#09188e 1.8%,#171377 2.1%,#180b79 2.5%,#230181 2.8%,#320568 3.1%,#330762 3.7%,#330762 5.2%,#330765 5.7%,#32066c 5.8%,#2a057c 6%,#1f0581 6.1%,#171371 6.4%,#17186f 6.6%,#151f77 6.7%,#0a2789 6.9%,#013581 7.1%,#005572 7.5%,#006b74 8%,#007871 8.6%,#008163 11.2%,#007f68 17%,#00825e 19.6%,#007f4b 22.2%,#007e4e 24.2%,#007a5f 25.5%,#007865 25.6%,#01586a 26.1%,#064486 26.4%,#0f358b 26.5%,#162d82 26.7%,#1c2680 26.8%,#1f229b 27.1%,#1a20a6 27.3%,#1a34a6 27.6%,#205da6 27.9%,#217da7 28.2%,#21969e 28.5%,#26aca2 28.8%,#27b797 29.1%,#27ba79 30.1%,#27b44b 31.6%,#23b135 32.1%,#15ac1f 32.5%,#13a90e 33.1%,#379c00 34.7%,#539200 36.2%,#709600 37.7%,#9db000 39.3%,#c2c500 40.5%,#cfce00 41.1%,#c1bc00 41.6%,#c8bf00 42%,#e3cf00 42.9%,#efcc00 43.7%,#f2af06 45.2%,#f7860c 46.5%,#f7500c 48%,#f92904 49.2%,#fb1700 50%,#e60e00 50.5%,#b00900 51.1%,#950800 51.4%,#910700 52%,#8c1d00 54.6%,#8d4400 57.2%,#867c00 60.6%,#818100 61.8%,#727a00 62.7%,#516b00 64.3%,#125f01 68.7%,#035f07 70.2%,#00664e 77.9%,#005b5a 82.4%,#004c60 85.7%,#003d69 90.2%,#002d73 93.6%,#001f96 99.4%,#001f98 100%)"></i><i style="left:809px;width:2px;background:linear-gradient(#006874 0%,#004871 2.6%,#022a86 4.1%,#022c85 4.8%,#004775 5.7%,#006473 6.4%,#007772 7.4%,#008161 9.4%,#00804e 11.3%,#008050 13.3%,#008261 16.7%,#00825c 18.7%,#007f41 22.1%,#007c3e 24.1%,#007a4c 26.1%,#00765e 27%,#026267 27.6%,#075377 28.2%,#08537a 28.5%,#116889 28.8%,#148a8e 29.6%,#149f7e 30.5%,#15a74e 31.4%,#15a731 31.9%,#099d16 32.4%,#089506 33%,#2f8900 34.5%,#539000 36%,#84a700 38%,#c9d000 40%,#dfde00 41%,#deda00 41.3%,#d0ca00 41.6%,#d0c800 41.9%,#e8d800 42.8%,#f0c403 44.3%,#f2b106 45.2%,#f6930c 46.2%,#f85d0e 47.7%,#f83106 48.9%,#fb1a00 49.8%,#f51300 50.2%,#da0b00 50.6%,#9f0800 51.2%,#950800 51.4%,#910700 52%,#8c1e00 54.6%,#8d4400 57.2%,#887300 59.8%,#848200 61.3%,#747b00 62.6%,#526b00 64.1%,#125f01 68.6%,#045f04 69.8%,#00622e 74.2%,#00664d 77.6%,#005b5a 82.1%,#004d5d 84.7%,#003f66 89.1%,#002b75 93.6%,#001c97 99.4%,#001c99 100%)"></i><i style="left:811px;width:2px;background:linear-gradient(#007f68 0%,#006f73 2.6%,#006e74 4.6%,#007c6d 6.6%,#00825f 8.1%,#007e40 10.1%,#007c35 11.7%,#007d3b 13.7%,#008054 17%,#008153 19%,#008250 19.8%,#009955 21%,#01964b 21.9%,#007e35 23.5%,#007934 25%,#00754b 28.4%,#01744f 29.3%,#017245 30.1%,#03721a 31.6%,#047a11 32.1%,#077203 32.8%,#237300 34%,#579200 36%,#7cac00 37.3%,#a2c000 38.5%,#d6dd01 40%,#e7e302 41.3%,#ddd700 41.7%,#ebde01 42.6%,#efca04 44.2%,#f2b705 45.1%,#f59b0c 46%,#f9630f 47.5%,#f73507 48.8%,#f91600 50%,#e30e00 50.5%,#ad0900 51.1%,#940800 51.4%,#900b00 52.6%,#8c2700 55.2%,#8c5000 57.8%,#867c00 60.4%,#818100 61.7%,#727a00 62.6%,#506b00 64.1%,#1f5f00 67.5%,#055f03 69.5%,#00612d 73.9%,#00664c 77.3%,#005c5a 81.7%,#004c5b 84.4%,#003e66 88.8%,#002a75 93.3%,#001c8d 97.7%,#00199b 99.7%,#00199c 100%)"></i><i style="left:813px;width:2px;background:linear-gradient(#00804b 0%,#008063 2%,#007d6a 4%,#008067 6%,#008159 7.2%,#007b2e 9.8%,#007924 11.8%,#007a2a 13.8%,#007f49 17.2%,#008050 19.2%,#008451 19.8%,#00a863 20.7%,#07b062 21.6%,#05a64e 22.9%,#007c2d 24.1%,#007627 25.3%,#007232 27.9%,#006e2c 29.4%,#036708 32.1%,#106501 33%,#226600 33.9%,#4e8f00 35.4%,#629d00 36.2%,#82b500 37.1%,#adc903 38.7%,#d9df06 40.2%,#e8e404 41.4%,#ecde05 42.9%,#f0c706 44.5%,#f2b20a 45.4%,#f96a0f 47.4%,#f83106 48.9%,#fb1900 49.8%,#eb1000 50.3%,#ca0b00 50.8%,#9d0800 51.2%,#940800 51.4%,#900c00 52.6%,#8c2700 55.2%,#8c5100 57.8%,#867d00 60.4%,#808100 61.7%,#707900 62.6%,#4f6a00 64.1%,#1e5f00 67.5%,#045f03 69.5%,#00622e 73.9%,#00664e 77.3%,#005b5b 81.7%,#004a5b 84.4%,#00346a 90.2%,#001991 97.9%,#01159f 99.8%,#0115a0 100%)"></i><i style="left:815px;width:2px;background:linear-gradient(#007c33 0%,#007f47 2%,#00825b 4%,#008158 5.5%,#007a29 8.9%,#007e21 10.4%,#038825 12%,#007d23 14%,#007b31 16%,#007f49 18.6%,#008350 20.1%,#00995c 20.9%,#03ac66 21.5%,#0cb163 22.4%,#09ad50 23.3%,#039d3b 23.9%,#007d23 24.7%,#00741a 25.6%,#006d1f 29%,#02690f 31%,#0a6702 32.2%,#246500 33.7%,#3d8100 34.7%,#5b9e00 35.6%,#70ad00 36.3%,#89bb04 37.3%,#b1cc08 38.8%,#dae00b 40.3%,#e6e60b 41.3%,#e9e306 42%,#eddb0a 43.6%,#f1bc07 45.1%,#f7890e 46.6%,#f74d0d 48.2%,#f82c05 49.1%,#fa1900 49.8%,#e91000 50.3%,#c80a00 50.8%,#9c0800 51.2%,#910700 51.5%,#8e1400 53.5%,#8e3500 56.1%,#887100 59.5%,#858000 60.7%,#7b7f00 62%,#506b00 64%,#1e5f00 67.3%,#045f03 69.3%,#00622e 73.8%,#00664e 77.1%,#005a5c 81.6%,#00485a 84.2%,#003965 88.7%,#001b89 96.3%,#0311a2 99.7%,#0310a3 100%)"></i><i style="left:817px;width:2px;background:linear-gradient(#048e35 0%,#00802e 0.9%,#007c37 2.5%,#007f45 4.4%,#007e3e 6%,#007a28 8%,#008024 8.9%,#0da236 10.4%,#19ac44 12%,#12a63c 13.5%,#01812a 15.5%,#007c34 17%,#00804d 20.4%,#008550 21%,#02ab64 21.9%,#11b263 22.9%,#14b051 23.8%,#0ca437 24.5%,#058419 25.5%,#03740e 26.4%,#026c0f 29.8%,#066903 31.3%,#236700 33.3%,#367e00 34%,#5da900 35.3%,#abc90c 38.7%,#d3dd0f 40.2%,#e5e50d 41.4%,#e9e50b 42.3%,#ecdf0d 43.6%,#f1bf09 45.1%,#f78b0f 46.6%,#f74d0e 48.2%,#f92c05 49.1%,#f91800 49.8%,#e81000 50.3%,#c60a00 50.8%,#9b0800 51.2%,#910700 51.5%,#8c1a00 54.1%,#8e3f00 56.7%,#877b00 60.1%,#828200 61.3%,#747b00 62.3%,#516b00 63.8%,#1f5f00 67.2%,#045f03 69.2%,#00622e 73.6%,#00664e 77%,#00595c 81.4%,#004759 84%,#003765 88.5%,#001a8b 96.2%,#040da5 99.5%,#040ca6 100%)"></i><i style="left:819px;width:2px;background:linear-gradient(#1cb158 0%,#10a344 0.9%,#01812d 2.1%,#007b30 3.4%,#007c33 5.4%,#007d27 7.4%,#02912c 8.3%,#0ea83e 9.2%,#22b459 10.4%,#27b764 12%,#24b55a 14%,#12a847 15.5%,#028837 17%,#00803a 18.3%,#008149 20.2%,#008750 21%,#04ad68 21.9%,#1ab66e 22.9%,#24b664 23.8%,#1cad36 25.3%,#14a120 25.9%,#097f08 26.8%,#077104 27.8%,#086b03 30.4%,#1d6800 32.4%,#277100 33%,#489f00 34.2%,#60b005 35.1%,#a3c511 38.5%,#d4dd15 40.5%,#e1e312 41.4%,#e9e610 42.6%,#edde0f 43.9%,#f2b80c 45.4%,#f96e12 47.4%,#f83006 48.9%,#f91800 49.8%,#df0d00 50.5%,#9a0800 51.2%,#910700 51.5%,#8e1500 53.5%,#8e3600 56.1%,#887300 59.5%,#858000 60.7%,#797e00 62%,#4d6a00 64%,#1b5f00 67.3%,#035f05 69.3%,#00654f 77%,#00575b 81.4%,#004659 84%,#002e6c 89.9%,#00198b 95.7%,#0509a6 99.1%,#0608a9 100%)"></i><i style="left:821px;width:2px;background:linear-gradient(#27ba76 0%,#22b55f 1.2%,#11a747 2.1%,#038c33 3.1%,#00802d 3.8%,#007e2b 5.8%,#00882c 6.7%,#0ba83e 8%,#25b766 9.5%,#28bb7c 11%,#28bc80 12.6%,#23b663 16%,#0ca250 17.9%,#059851 19.2%,#059e5f 20.4%,#10b377 21.6%,#25bb7f 22.9%,#28b96d 24.1%,#27b338 26.1%,#1da81b 27%,#148909 27.9%,#107704 28.5%,#116c02 30.1%,#1b6c01 31.6%,#277d00 32.4%,#44a503 33.6%,#62b20d 35.1%,#83bb11 37.1%,#acca17 39.1%,#d8e01a 41.1%,#e0e313 42%,#eae514 43.3%,#eddb10 44.2%,#f2bb0d 45.4%,#f88212 46.9%,#f74e0f 48.2%,#f92b05 49.1%,#f91800 49.8%,#e70f00 50.3%,#c60a00 50.8%,#990800 51.2%,#910700 51.5%,#8e1500 53.5%,#8e3600 56.1%,#887400 59.5%,#848200 61%,#787d00 62%,#4c6900 64%,#1a5f00 67.3%,#035f06 69.3%,#006441 75.2%,#00654f 76.7%,#00575c 81.1%,#004359 84.5%,#002f68 89%,#00257c 92.3%,#00168f 95.7%,#0608a3 98.3%,#0a06a8 99.8%,#0a06a8 100%)"></i><i style="left:823px;width:2px;background:linear-gradient(#28be91 0%,#26b86a 2%,#10a848 3.5%,#059838 4.8%,#069d3a 6%,#11ae4b 7.2%,#27b971 8.7%,#28be96 10.7%,#28bd9c 12.3%,#28be92 14.3%,#27ba78 16.9%,#1db775 18.9%,#1eba88 20.9%,#27be94 22.4%,#28bd8b 23.6%,#28b86a 25.2%,#2bb433 27.1%,#28ac1f 28.1%,#21970e 29%,#1c8605 29.9%,#1f8303 30.8%,#3da808 32.8%,#66b514 35.4%,#7dba14 37%,#acca1d 39.6%,#cdda1e 41.1%,#dee218 42.3%,#eae717 43.3%,#eddf13 44.2%,#f2bd0d 45.4%,#f88413 46.9%,#f74f10 48.2%,#f92b05 49.1%,#f81800 49.8%,#dd0d00 50.5%,#990800 51.2%,#910700 51.5%,#8e1500 53.5%,#8e3700 56.1%,#887500 59.5%,#848100 60.7%,#767c00 62%,#526b00 63.5%,#1f5f00 66.9%,#045f03 68.9%,#00643e 74.7%,#00654f 76.7%,#00555b 81.1%,#004159 84.5%,#002d6a 89%,#00188b 94.8%,#0508a0 97.4%,#0d04a7 100%)"></i><i style="left:825px;width:2px;background:linear-gradient(#28bba2 0%,#28be93 1.2%,#26b86b 3.2%,#1cb358 4.8%,#1bb259 6%,#25b86f 7.5%,#28be9a 9.5%,#28b7a6 11.5%,#28bca0 14.9%,#28be90 17.5%,#27be92 19%,#28bc9f 21.6%,#28bd9e 23.6%,#28be8f 24.8%,#28b762 26.4%,#2bb43e 27.6%,#30af1e 29.6%,#32ab14 31.1%,#55b21a 34.5%,#70b716 36.5%,#a8c820 39.9%,#c8d81f 41.4%,#e9e719 43.4%,#eddf14 44.3%,#f3b00e 45.9%,#fa7115 47.4%,#f63a0b 48.6%,#fb1e01 49.5%,#f21400 50%,#db0d00 50.5%,#980800 51.2%,#910700 51.5%,#8e1500 53.5%,#8e3700 56.1%,#887500 59.5%,#848100 60.7%,#747b00 62%,#516b00 63.5%,#1d5f00 66.9%,#045f04 68.9%,#006440 74.7%,#006450 76.7%,#005b5b 80.1%,#003f58 84.5%,#002b6c 89%,#001c84 93.4%,#05089f 96.8%,#1002a6 99.4%,#1102a7 100%)"></i><i style="left:827px;width:2px;background:linear-gradient(#28b2ab 0%,#28be9b 2%,#28bb79 4%,#27ba72 5.5%,#28bc81 7.1%,#28bd9e 8.6%,#28b3aa 10.1%,#2789ac 12.1%,#278dac 13%,#28b1ab 15%,#28bba1 17.6%,#28b8a4 20.2%,#28b3aa 21.2%,#2797a9 22.7%,#2796a8 23.5%,#28aaa8 24.4%,#28b7a6 24.8%,#28be8e 26.1%,#29b44d 28.1%,#2eb530 29.6%,#38b427 31.6%,#4cb221 34.2%,#66b619 36.2%,#abca23 40.6%,#e3e51d 43.3%,#ebe418 44%,#efd112 44.9%,#f4a60f 46.2%,#f96515 47.7%,#f73a0b 48.6%,#fb1e01 49.5%,#eb1200 50.2%,#d00b00 50.6%,#970800 51.2%,#910700 51.7%,#8c1d00 54.3%,#8d4600 56.9%,#877600 59.5%,#848200 60.7%,#7a7e00 61.7%,#4d6a00 63.7%,#195f00 67%,#045f03 68.6%,#006230 73%,#00664b 75.6%,#005a5c 80.1%,#003d57 84.5%,#002d66 87.9%,#001889 93.7%,#06089f 96.3%,#1400a6 99.7%,#1400a6 100%)"></i><i style="left:829px;width:2px;background:linear-gradient(#287aae 0%,#289bad 0.5%,#28b1ad 1.2%,#28bd9c 3.2%,#28bd8d 4.8%,#28be91 6.3%,#28b8a4 8.3%,#28aead 9.2%,#289cad 9.7%,#2a57b0 10.4%,#3239a0 10.9%,#2f29a0 11.3%,#241ca8 11.7%,#191dac 12.3%,#1626a5 13.2%,#1d2aa8 14.1%,#2a42ae 14.7%,#2363aa 15.5%,#2790ac 16.4%,#28a3ab 17.3%,#28a6aa 18.6%,#289aaa 19.5%,#277eae 20.1%,#2a5bb1 20.7%,#304ba5 21%,#343d96 21.3%,#362b93 21.9%,#341990 22.4%,#381485 23.2%,#361486 23.8%,#362091 24.2%,#353d90 24.8%,#354991 25%,#2b5fb1 25.3%,#2784ad 25.6%,#27a1a6 25.9%,#28b6a7 26.2%,#28be93 27%,#28b551 29%,#2db538 30.5%,#33b52c 32.5%,#47b323 34.5%,#64b51b 36.5%,#a5c825 41%,#c8d921 42.5%,#dfe31f 43.3%,#ebe51a 44%,#eedc16 44.6%,#f3b30e 45.9%,#f98215 47.1%,#f85713 48%,#f82f07 48.9%,#f81a00 49.7%,#e20f00 50.3%,#c10a00 50.8%,#960800 51.2%,#910700 51.5%,#8c1c00 54.1%,#8d4300 56.7%,#887500 59.4%,#848100 60.6%,#747b00 61.8%,#516b00 63.3%,#1d5f00 66.7%,#035f05 68.7%,#006334 73.2%,#00664e 75.8%,#00565b 80.2%,#003a58 84.7%,#002a69 88%,#001c84 92.5%,#021094 94.5%,#07079f 96%,#1500a3 98.6%,#1700a1 99.8%,#1700a1 100%)"></i><i style="left:831px;width:2px;background:linear-gradient(#492175 0%,#47217f 0.2%,#3e2292 0.3%,#372c92 0.5%,#3a4596 0.8%,#3350a9 0.9%,#285eb0 1.1%,#288eac 1.5%,#28a1ae 1.8%,#28b2ab 2.6%,#28bca0 5.2%,#28b3aa 7.8%,#28a9ad 8.3%,#289bad 8.6%,#277aae 8.9%,#2768ad 9%,#2e54af 9.2%,#37459b 9.4%,#373792 9.5%,#362a92 9.7%,#3e2091 9.8%,#431d7d 10%,#411871 10.1%,#3e1471 10.3%,#3b137a 10.4%,#2e0f8c 10.6%,#211286 10.7%,#1b1981 10.9%,#0f258e 11.2%,#033982 11.5%,#014c75 12.1%,#015674 12.9%,#014977 13.8%,#053a85 14.4%,#11228e 14.9%,#1b1585 15.3%,#2d1190 15.6%,#3b1480 16%,#3d147a 16.1%,#35198d 16.9%,#372594 17.2%,#352f8f 18.1%,#382594 19%,#3e2192 19.3%,#3e1470 19.9%,#3e146e 20.6%,#381077 20.9%,#2e0b81 21%,#240a85 21.2%,#1d157b 21.5%,#1c1d77 21.8%,#102989 22.2%,#033188 22.7%,#023a83 23.3%,#073089 23.9%,#0d2c8a 24.1%,#1d2471 24.5%,#1d1578 25%,#230f85 25.2%,#311086 25.3%,#3b1378 25.5%,#3e1471 25.6%,#3e1571 25.8%,#3b1783 25.9%,#342091 26.1%,#354292 26.4%,#2561b0 26.7%,#257dac 26.8%,#27a2a6 27.1%,#27b8a4 27.5%,#28bd8a 28.2%,#28b65b 29.8%,#2ab442 31.3%,#2fb52e 33.3%,#42b220 34.8%,#5fb41d 36.8%,#a0c626 41.3%,#b5cf24 42.2%,#dfe320 43.4%,#ebe71c 44%,#eeda16 44.8%,#f2ba0e 45.7%,#f88a15 46.9%,#f85f15 47.9%,#f73409 48.8%,#f71a00 49.7%,#e00f00 50.3%,#bf0a00 50.8%,#950800 51.2%,#910700 51.7%,#8c1e00 54.3%,#8d4700 56.9%,#877800 59.5%,#838200 60.7%,#767c00 61.7%,#526b00 63.2%,#1d5f00 66.6%,#045f05 68.6%,#006334 73%,#00664e 75.6%,#005c59 79%,#003758 84.8%,#002a65 87.4%,#001c83 91.9%,#01148d 93.4%,#07079e 95.4%,#1600a1 98%,#1a009b 100%)"></i><i style="left:833px;width:2px;background:linear-gradient(#250884 0%,#340769 0.3%,#3b1067 0.6%,#41186c 1.2%,#461d75 1.4%,#41208c 1.5%,#372893 1.7%,#37368f 1.8%,#394395 2%,#334fa8 2.1%,#295eb0 2.3%,#2896ac 2.9%,#28a9ae 3.5%,#28b3ab 4.4%,#28b2ab 6.4%,#28a5ae 7.2%,#2899ac 7.5%,#277bae 7.8%,#276aad 8%,#2e56af 8.1%,#394898 8.3%,#393a91 8.4%,#382994 8.6%,#432087 8.7%,#461d73 8.9%,#3e146a 9.2%,#3b1068 9.4%,#350b70 9.5%,#230a84 9.7%,#1c1778 9.8%,#181f7b 10%,#09298a 10.1%,#013b7e 10.3%,#005f72 10.7%,#007473 11.5%,#00796f 13%,#007572 14.6%,#006473 15.5%,#015974 15.8%,#013a81 16.4%,#043189 16.6%,#0b2a8a 16.7%,#1c2372 17.2%,#1d1677 18.1%,#1d1975 19%,#1a2273 19.6%,#0e2785 19.9%,#072d89 20.1%,#01477b 20.6%,#006471 21.2%,#007871 22.1%,#007b6a 24.1%,#00756d 24.8%,#01616b 25.5%,#014e76 25.8%,#02437e 25.9%,#0a358a 26.1%,#1d256f 26.4%,#20187d 26.7%,#29138d 26.8%,#331392 27%,#31159b 27.1%,#2b2297 27.3%,#2b48a8 27.6%,#235cad 27.8%,#258aa8 28.1%,#269da5 28.2%,#27b6a5 28.5%,#28bd8c 29.1%,#28b96d 30.1%,#28b44d 31.6%,#28b334 33.1%,#28b121 34%,#4bb11b 36%,#8ac024 40.5%,#a7c826 42%,#dfe320 43.6%,#ebe61c 44.2%,#eedc17 44.8%,#f2bc0e 45.7%,#f88b16 46.9%,#f85f16 47.9%,#f83309 48.8%,#f91c00 49.5%,#e61100 50.2%,#ca0b00 50.6%,#950800 51.2%,#910800 51.8%,#8c2100 54.4%,#8c4b00 57.1%,#867b00 59.7%,#818100 60.9%,#707900 61.8%,#4e6a00 63.3%,#195f00 66.7%,#045f03 68.3%,#006232 72.7%,#00664e 75.3%,#00565b 79.8%,#003857 84.2%,#002a62 86.8%,#001689 92.6%,#05089c 94.6%,#1500a2 97.2%,#1d0096 99.8%,#1d0095 100%)"></i><i style="left:835px;width:2px;background:linear-gradient(#005972 0%,#004278 0.5%,#042c88 0.8%,#102283 0.9%,#181b70 1.1%,#1b1179 1.4%,#240884 1.5%,#310773 1.7%,#370b67 1.8%,#41186c 2.5%,#461d74 2.6%,#442085 2.8%,#3a2393 2.9%,#352f8f 3.1%,#394495 3.4%,#2f55af 3.7%,#276bad 4%,#2887ad 4.6%,#2892ac 5.2%,#288dac 5.8%,#2774ae 6.4%,#295db1 6.7%,#3253aa 6.9%,#3a4a97 7.1%,#373390 7.4%,#3a2494 7.5%,#452082 7.7%,#461d72 7.8%,#3b1067 8.4%,#370b69 8.6%,#280784 8.7%,#1b1476 8.9%,#191c71 9%,#092889 9.2%,#003e7d 9.4%,#004c74 9.5%,#005d72 9.7%,#007173 10.1%,#007b6d 11%,#008068 13.7%,#007672 17%,#006d72 18.6%,#007b6d 20.6%,#008262 23.2%,#007d60 25.2%,#007765 26.4%,#006869 26.8%,#01576a 27.1%,#083986 27.6%,#112c8c 27.9%,#143198 28.2%,#154195 28.5%,#185397 28.7%,#207aa4 29%,#218ca2 29.1%,#22a2a0 29.4%,#26b7a0 29.8%,#27bb7b 30.7%,#23b350 31.9%,#1caf1f 33.9%,#2bae19 34.8%,#4bb11c 36.8%,#7abb22 40.2%,#98c427 41.7%,#b5cf26 42.6%,#dde222 43.6%,#ebe71c 44.2%,#efd816 44.9%,#f2b80e 45.9%,#f88517 47.1%,#f85714 48%,#f83309 48.8%,#f81c00 49.5%,#dd0e00 50.3%,#bb0a00 50.8%,#940800 51.2%,#900c00 52.5%,#8d2a00 55.1%,#8b5800 57.7%,#867c00 59.7%,#808100 60.9%,#6f7800 61.8%,#4d6a00 63.3%,#185f00 66.7%,#045f04 68.3%,#006334 72.7%,#00664f 75.3%,#005c5a 78.7%,#003457 84.5%,#002a60 86.5%,#00158b 92.3%,#06079d 94.3%,#1700a0 96.9%,#200090 99.5%,#20008f 100%)"></i><i style="left:837px;width:2px;background:linear-gradient(#007772 0%,#006d74 0.9%,#005a72 1.5%,#003c7d 2%,#052c88 2.1%,#122280 2.3%,#191b71 2.5%,#1b1774 2.6%,#1e0e7f 2.8%,#290782 2.9%,#33076c 3.1%,#370b66 3.2%,#3e146a 3.7%,#41186c 4.1%,#492179 4.6%,#42218a 5.1%,#42218a 5.5%,#492176 6.1%,#3e146a 6.9%,#340863 7.5%,#32076d 7.7%,#210782 7.8%,#191373 8%,#181c6e 8.1%,#0c2788 8.3%,#003b7e 8.4%,#005b72 8.7%,#007173 9.2%,#007c6c 10.1%,#008159 12.1%,#008154 13.7%,#007f68 17%,#008166 20.4%,#007e48 23.8%,#007c4a 25.3%,#007561 27.9%,#026568 28.7%,#076570 29.3%,#086c76 29.4%,#118389 29.8%,#149783 30.4%,#15ad88 30.7%,#1db468 31.3%,#14ae4e 31.7%,#0faa32 32.7%,#14ac15 34.2%,#37af1a 36.2%,#77ba20 40.6%,#9dc527 42.2%,#bcd226 42.9%,#dee321 43.7%,#ebe61c 44.3%,#eeda17 44.9%,#f1bf0d 45.7%,#f78d17 46.9%,#f85f17 47.9%,#f83309 48.8%,#f81c00 49.5%,#dc0e00 50.3%,#ba0a00 50.8%,#9d0800 51.1%,#940800 51.2%,#900d00 52.5%,#8c2100 54.4%,#8c4c00 57.1%,#867d00 59.7%,#7f8000 60.9%,#6d7800 61.8%,#4b6900 63.3%,#165f01 66.7%,#035f05 68.3%,#006335 72.7%,#00654f 75.3%,#005b5b 78.7%,#003258 84.5%,#00295d 86%,#001c80 90.5%,#06079c 93.9%,#1300a2 95.9%,#22008b 99.2%,#230089 100%)"></i><i style="left:839px;width:2px;background:linear-gradient(#007d6b 0%,#007274 2%,#006072 2.8%,#004677 3.2%,#033087 3.5%,#0d2687 3.7%,#162074 3.8%,#181a6e 4%,#1b1575 4.3%,#210b83 4.6%,#260784 4.8%,#32076e 5.4%,#300773 5.8%,#290782 6.1%,#220983 6.3%,#18166e 6.7%,#171b6c 6.9%,#142378 7.1%,#082b89 7.2%,#003a7e 7.4%,#005373 7.7%,#006774 8%,#007970 8.7%,#008260 10.3%,#007f46 11.8%,#007d3d 13.3%,#007f46 15.3%,#00825b 17.9%,#008159 19.5%,#007c36 22.9%,#007830 24.8%,#007740 26.8%,#00754f 28.4%,#01734e 29.9%,#017446 30.5%,#058040 31.1%,#058e3e 31.4%,#039a25 32.7%,#0da911 34.2%,#20ad14 35.4%,#3cb01b 37.4%,#70b81d 40.8%,#93c226 42%,#afcc26 42.8%,#dde221 43.7%,#ebe71c 44.3%,#eedb17 44.9%,#f1c00d 45.7%,#f78e17 46.9%,#f85f17 47.9%,#f83209 48.8%,#f71b00 49.5%,#db0e00 50.3%,#b90a00 50.8%,#9c0800 51.1%,#910700 51.4%,#8d1600 53.4%,#8e3900 56%,#877900 59.4%,#828200 60.6%,#737b00 61.5%,#4f6a00 63%,#1a5f00 66.4%,#045f03 67.9%,#006333 72.4%,#00654f 75%,#005b5a 78.4%,#003258 84.2%,#00295c 85.7%,#01148b 91.6%,#06079c 93.6%,#1400a1 95.6%,#240086 98.9%,#250084 99.8%,#250083 100%)"></i><i style="left:841px;width:2px;background:linear-gradient(#008262 0%,#007373 3.4%,#005573 5.4%,#005d72 6.1%,#007871 7.7%,#008163 9.2%,#007d3c 11.2%,#028337 13.8%,#007d36 15.8%,#007e43 18.4%,#007d3b 20.4%,#007a26 23%,#007520 25.6%,#00732b 27.1%,#00723a 28.7%,#006e36 30.2%,#006b22 31.7%,#00751a 32.5%,#059f11 33.7%,#0ca90f 34.5%,#2caf1a 37.1%,#53b118 39.7%,#73b91d 41.3%,#93c225 42.2%,#b2cd25 42.9%,#dbe221 43.7%,#ebe71c 44.3%,#eedc17 44.9%,#f1c10d 45.7%,#f78f18 46.9%,#f86018 47.9%,#f83209 48.8%,#f71b00 49.5%,#db0e00 50.3%,#b80a00 50.8%,#9b0800 51.1%,#910700 51.4%,#8d1600 53.4%,#8e3900 56%,#877a00 59.4%,#818100 60.6%,#717a00 61.5%,#4e6a00 63%,#185f00 66.4%,#045f04 67.9%,#006335 72.4%,#00654f 75%,#005b5b 78.4%,#003058 84.2%,#00275e 85.7%,#001981 90.2%,#09059d 93.6%,#17009f 95.6%,#260080 98.9%,#27007e 99.8%,#27007e 100%)"></i><i style="left:843px;width:2px;background:linear-gradient(#008050 0%,#007f68 2.6%,#007871 5.2%,#007f68 7.8%,#00815b 8.7%,#007e3c 10.3%,#01873b 11%,#0fa750 12.3%,#19ad59 13.5%,#14a951 14.7%,#0b9741 15.6%,#068f3a 16.3%,#028334 16.9%,#007c30 19.5%,#018129 21.5%,#07932e 23%,#0d9830 24.2%,#099025 25.5%,#047c1c 26.2%,#00701b 27.5%,#006e28 29.4%,#006922 31%,#016614 32.5%,#027512 33%,#059d10 33.9%,#07a811 34.4%,#19ad19 36.3%,#3bae14 39%,#62b415 41%,#8ec023 42.2%,#aecb23 42.9%,#dfe31f 43.9%,#ebe51a 44.5%,#efd715 45.1%,#f1c20d 45.7%,#f78f18 46.9%,#f86018 47.9%,#f83209 48.8%,#f81b00 49.5%,#db0e00 50.3%,#b70a00 50.8%,#9a0800 51.1%,#910700 51.4%,#8d1600 53.4%,#8e3a00 56%,#877b00 59.4%,#808100 60.6%,#6f7900 61.5%,#4d6a00 63%,#175f01 66.4%,#035f05 67.9%,#006337 72.4%,#00664d 74.4%,#005c59 77.8%,#004458 81.1%,#002b59 84.5%,#001685 90.3%,#08069c 92.9%,#1600a0 94.9%,#27007e 98.3%,#290078 99.8%,#290078 100%)"></i><i style="left:845px;width:2px;background:linear-gradient(#007f44 0%,#008050 2%,#008166 4%,#008067 6.6%,#008159 7.8%,#007e3d 9.4%,#01883d 10%,#0ea955 10.9%,#21b76d 11.8%,#27bb7b 13%,#27ba76 14.6%,#21b462 16.1%,#13a84c 17.3%,#0c963e 18.3%,#0a973a 20.2%,#19ae4b 22.2%,#23b355 23.8%,#22b14a 25.3%,#15a330 26.5%,#0b8e21 27.1%,#047918 27.8%,#016e17 28.7%,#006919 30.7%,#016612 32.2%,#026a11 32.7%,#04a014 33.9%,#0aa918 34.7%,#14ac1e 36.2%,#1eac14 37.7%,#4cae0e 40.3%,#64b413 41.3%,#84bd1f 42%,#abca21 42.9%,#dee31e 43.9%,#ebe619 44.5%,#efd814 45.1%,#f2be0e 45.9%,#f8881a 47.1%,#f85817 48%,#f83209 48.8%,#f81b00 49.5%,#db0e00 50.3%,#b70a00 50.8%,#990800 51.1%,#910700 51.4%,#8d1600 53.4%,#8e3a00 56%,#867c00 59.4%,#848300 60.3%,#757c00 61.2%,#516b00 62.7%,#1a5f00 66.1%,#045f03 67.6%,#006335 72.1%,#00654f 74.7%,#005a5c 78.1%,#003956 82.5%,#002959 84.5%,#011488 90.3%,#06079b 92.3%,#1400a0 94.3%,#240087 96.9%,#2a0075 98.9%,#2a0073 99.8%,#2a0073 100%)"></i><i style="left:847px;width:2px;background:linear-gradient(#04924c 0%,#008043 2%,#00815b 5.4%,#008052 6.9%,#007f3f 8.4%,#01883f 9%,#0fac5a 10%,#24ba79 10.9%,#28be92 12.1%,#28bd9a 13.7%,#28be90 15.2%,#24b76a 17.8%,#21b45e 19.8%,#28b971 23.2%,#28b96f 24.7%,#27b557 26.2%,#1fac3b 27.5%,#16a42e 27.9%,#0b8e1f 28.5%,#047515 29.3%,#016a13 30.8%,#026c11 32.1%,#027f13 32.7%,#04a119 33.6%,#09a81f 34.5%,#10ab23 36%,#13ab11 37.6%,#35aa09 39.6%,#59b00c 41.1%,#80bc1b 42%,#a9c91f 42.9%,#dde21c 43.9%,#ebe618 44.5%,#eed814 45.1%,#f2bf0e 45.9%,#f8891b 47.1%,#f85818 48%,#f8330a 48.8%,#f81b00 49.5%,#db0e00 50.3%,#b70a00 50.8%,#990800 51.1%,#910700 51.4%,#8d1600 53.4%,#8e3b00 56%,#867d00 59.4%,#838200 60.3%,#747b00 61.2%,#506a00 62.7%,#185f00 66.1%,#045f04 67.6%,#006336 72.1%,#00664d 74.1%,#005c5a 77.5%,#003158 83.3%,#00275d 84.8%,#001880 89.3%,#06079b 91.9%,#1400a1 93.9%,#21008e 95.9%,#2b0073 98.5%,#2c006e 100%)"></i><i style="left:849px;width:2px;background:linear-gradient(#1ab46f 0%,#10a85e 1.5%,#028645 3.1%,#007f46 4.6%,#007f44 6.6%,#018540 7.8%,#0aa353 8.7%,#1fb773 9.7%,#28be90 10.6%,#28bca0 11.5%,#28b5a8 13.5%,#28bca0 16.1%,#28bc81 18.7%,#28bb7d 20.2%,#28be93 23.6%,#28bd8d 25.2%,#28b96d 26.7%,#25b247 28.2%,#14a32b 29.4%,#098c1c 30.4%,#058618 31.3%,#07a622 33.3%,#0aa929 34.8%,#0eaa22 36.3%,#0fa90c 37.9%,#44aa03 40.5%,#60b20c 41.4%,#8bbe19 42.3%,#b1cd1d 43.1%,#dde21a 43.9%,#ebe617 44.5%,#eed913 45.1%,#f1c00f 45.9%,#f88a1c 47.1%,#f85918 48%,#f92d07 48.9%,#f91b00 49.5%,#db0e00 50.3%,#b70a00 50.8%,#990800 51.1%,#910700 51.4%,#8c1d00 54%,#8d4800 56.6%,#867b00 59.2%,#808100 60.4%,#6e7800 61.3%,#4c6900 62.9%,#155f01 66.3%,#045f04 67.5%,#006336 71.9%,#00664d 73.9%,#005c5a 77.3%,#003058 83.1%,#00275e 84.7%,#001782 89.1%,#07069b 91.7%,#16009f 93.7%,#22008b 95.7%,#2c006f 98.3%,#2e006b 99.8%,#2e006b 100%)"></i><i style="left:851px;width:2px;background:linear-gradient(#27bd8a 0%,#25ba7f 1.5%,#1bb26c 2.8%,#11a75d 3.5%,#0a9952 4.1%,#048d47 5.7%,#099b50 7.2%,#1cb66f 8.4%,#28be94 9.7%,#28b7a5 10.9%,#28a8ae 12.1%,#2781ad 13.7%,#2782ad 14.3%,#28aaad 15.8%,#28b5a8 16.7%,#28bd9b 19.3%,#28b9a4 23.8%,#28bd9f 25.8%,#28be91 26.7%,#28b559 28.7%,#20b03e 30.2%,#12aa30 31.7%,#0ba932 34.4%,#0aa929 35.9%,#0aa808 37.9%,#319f00 39.9%,#51ab02 41.1%,#8abd15 42.3%,#a8c819 42.9%,#dde218 43.9%,#eae816 44.3%,#eed912 45.1%,#f2bb10 46%,#f9831d 47.2%,#f75117 48.2%,#f92d08 48.9%,#f91b00 49.5%,#db0e00 50.3%,#b70a00 50.8%,#990800 51.1%,#910700 51.4%,#8c1d00 54%,#8d4900 56.6%,#867c00 59.2%,#838200 60.1%,#747b00 61%,#506a00 62.6%,#185f00 66%,#045f05 67.5%,#006338 71.9%,#00664e 73.9%,#005b5b 77.3%,#003a56 81.7%,#002959 83.7%,#01118a 89.6%,#06079a 91.1%,#1400a0 93.1%,#21008e 95.1%,#2c0070 97.7%,#2e006a 99.2%,#2e0069 100%)"></i><i style="left:853px;width:2px;background:linear-gradient(#28bd9f 0%,#28be95 2%,#1fb773 4.6%,#1ab36b 6.1%,#22b979 7.4%,#28bd99 8.9%,#28b1ad 10.4%,#27a0ae 11%,#278eab 11.3%,#225faa 11.8%,#274fac 12%,#333a97 12.3%,#2e248d 12.6%,#2e188f 12.7%,#34148b 12.9%,#3e1472 13.3%,#3e146c 14.6%,#3e1470 14.9%,#351a8e 15.3%,#35408d 16%,#344f95 16.3%,#2e55a9 16.4%,#2760b1 16.6%,#2792ab 17.2%,#28aaad 17.9%,#28b4a9 19.2%,#28b2ab 21.8%,#289bab 23%,#277aaf 23.9%,#2773af 24.4%,#277eaf 25%,#28a4a9 25.9%,#28b6a6 26.5%,#28be94 27.8%,#28b868 29.3%,#27b452 30.8%,#18af45 32.8%,#09a937 34.8%,#07a822 36.3%,#07a105 37.9%,#249101 39.4%,#379200 40.3%,#4da000 41.1%,#65b106 41.6%,#9fc315 42.8%,#d7df17 43.7%,#e9e714 44.3%,#eeda11 45.1%,#f1c20f 45.9%,#f69c1a 46.8%,#f96b1d 47.7%,#f73a0e 48.6%,#fa1b00 49.5%,#dc0e00 50.3%,#b80a00 50.8%,#990800 51.1%,#910700 51.4%,#8d1700 53.4%,#8e3d00 56%,#887300 58.6%,#848100 59.8%,#737a00 61%,#4e6a00 62.6%,#175f01 66%,#035f06 67.5%,#006339 71.9%,#00654f 73.9%,#005a5c 77.3%,#003857 81.7%,#00285b 83.7%,#00187e 88.2%,#06079a 90.8%,#1400a0 92.8%,#1f0093 94.3%,#2d006b 97.7%,#2e0068 99.7%,#2e0068 100%)"></i><i style="left:855px;width:2px;background:linear-gradient(#28b5a8 0%,#28bba1 2.6%,#27bd8d 5.2%,#27be90 6.7%,#28b7a5 8.7%,#28abae 9.7%,#279aad 10.1%,#267fac 10.4%,#225aaa 10.7%,#2745ad 10.9%,#29259b 11.2%,#2a17a2 11.3%,#2b12a2 11.5%,#241196 11.7%,#1e1684 11.8%,#1c1a7d 12%,#1a207d 12.1%,#0f2b8b 12.4%,#023783 12.7%,#014a78 13.3%,#014f76 14.1%,#01457c 14.7%,#07338b 15.2%,#102f88 15.3%,#1c2b70 15.6%,#1d1f6f 16%,#1d147b 16.3%,#260d86 16.4%,#341080 16.6%,#3d1370 16.7%,#3e146b 17%,#3e146f 17.2%,#34198d 17.5%,#353a8f 17.9%,#354892 18.3%,#2c51aa 18.6%,#2661af 18.9%,#2774ae 19.3%,#277cae 20.1%,#2770ae 20.9%,#295db1 21.3%,#2d55ae 21.5%,#344b95 21.8%,#35388f 22.2%,#3a2393 22.7%,#40208c 22.9%,#421871 23.2%,#3e146a 23.5%,#3e156b 25.5%,#441c77 25.8%,#411f8a 25.9%,#382594 26.1%,#353a8e 26.4%,#354690 26.5%,#285eb1 26.8%,#2788ad 27.1%,#2799a7 27.3%,#28b6a7 27.8%,#28be96 28.7%,#28ba71 30.2%,#28b761 31.7%,#22b55a 32.7%,#08ab3f 34.7%,#04a72a 35.9%,#05a011 37.1%,#0b9304 38%,#268200 39.6%,#378500 40.5%,#499100 41.1%,#64ae02 41.6%,#a0c411 42.8%,#d8df14 43.7%,#e9e712 44.3%,#eeda10 45.1%,#f2bd11 46%,#f9851f 47.2%,#f75318 48.2%,#f92e09 48.9%,#fa1c00 49.5%,#dc0e00 50.3%,#b80a00 50.8%,#9a0800 51.1%,#910700 51.4%,#8c1e00 54%,#8c4a00 56.6%,#867e00 59.2%,#828200 60.1%,#717a00 61%,#4d6a00 62.6%,#155f01 66%,#045f04 67.2%,#006337 71.6%,#00664e 73.6%,#005b5b 77%,#003857 81.4%,#00285a 83.4%,#00177e 87.9%,#060799 90.5%,#1400a0 92.5%,#22008c 94.5%,#2d006d 97.1%,#2e0067 99.7%,#2e0067 100%)"></i><i style="left:857px;width:2px;background:linear-gradient(#28a3af 0%,#28abae 2%,#28b9a3 4.6%,#28b8a5 7.2%,#28aeae 8.4%,#279cae 9%,#2787ab 9.4%,#234fad 9.8%,#283caa 10%,#272ca1 10.1%,#241ca6 10.3%,#2212ab 10.4%,#171c8e 10.7%,#12228d 10.9%,#072f8a 11%,#014778 11.3%,#005c72 11.7%,#006f74 12.3%,#007970 13.5%,#007772 15.5%,#006973 16.4%,#015874 16.9%,#013d82 17.3%,#08338b 17.5%,#132f86 17.6%,#1b2c76 17.8%,#1d2070 18.1%,#1e127c 18.6%,#2c0f88 18.9%,#3b147b 19.3%,#3e1473 19.8%,#3c116f 21.3%,#330971 21.6%,#270784 22.1%,#1d1478 22.5%,#182169 23.3%,#172970 23.8%,#0d2e88 24.4%,#092f89 25.2%,#0e2c85 25.5%,#1c2a6e 26.1%,#1d206c 26.4%,#22197f 26.8%,#2d1595 27.1%,#2a14a7 27.3%,#221baa 27.5%,#2340ac 27.8%,#2594a7 28.4%,#27b4a7 28.8%,#28be98 29.6%,#28bb7b 31.1%,#27b96e 32.4%,#09ac48 34.4%,#00a42d 35.6%,#02a21e 36.3%,#098904 37.9%,#237600 39.4%,#327700 40.3%,#458500 41.1%,#75b301 41.9%,#a2c40d 42.8%,#d9e011 43.7%,#eae510 44.5%,#eddb0f 45.1%,#f2bf11 46%,#f7971d 46.9%,#f9651e 47.9%,#f8350c 48.8%,#fa1c01 49.5%,#e41000 50.2%,#c50a00 50.6%,#9a0800 51.1%,#910700 51.4%,#8c1e00 54%,#8c4b00 56.6%,#887500 58.6%,#848200 59.8%,#787d00 60.7%,#516b00 62.3%,#195f00 65.6%,#045f05 67.2%,#006339 71.6%,#00654f 73.6%,#005a5c 77%,#003757 81.4%,#00275d 83.4%,#001680 87.9%,#050897 89.9%,#1200a0 91.9%,#1d0096 93.4%,#2d006c 96.8%,#2e0067 99.4%,#2e0066 100%)"></i><i style="left:859px;width:2px;background:linear-gradient(#2d54af 0%,#3451a6 0.9%,#2b5ab1 1.7%,#278aac 2.9%,#28a1ae 3.8%,#28aead 5.4%,#28aaae 6.9%,#289aad 7.8%,#277eac 8.3%,#294fad 8.7%,#2f329a 9%,#2b2397 9.2%,#2b15a2 9.4%,#2612a3 9.5%,#1c1892 9.7%,#0c278d 10%,#033882 10.1%,#005173 10.4%,#006573 10.7%,#007771 11.5%,#008162 13.5%,#008162 15%,#007772 17.6%,#015f73 19.2%,#014d77 20.1%,#014f75 21%,#006a74 22.5%,#007572 24.1%,#00716d 26.1%,#00646c 27%,#01556e 27.5%,#06467b 27.9%,#0b4380 28.2%,#134d8c 28.5%,#14548b 28.7%,#16618f 28.8%,#1f84a1 29.1%,#25b3a7 29.8%,#28be99 30.5%,#25bb7e 32.1%,#07ad4f 34%,#009b2a 35.6%,#029b1f 36.2%,#068806 37.4%,#246d00 39.4%,#387200 40.6%,#4a8100 41.3%,#7cb200 42%,#d2dc0e 43.6%,#e9e60e 44.3%,#eed70d 45.2%,#f2ba13 46.2%,#f8901f 47.1%,#f9661e 47.9%,#f8360d 48.8%,#fa1c01 49.5%,#e41000 50.2%,#c50a00 50.6%,#9a0800 51.1%,#910700 51.4%,#8d1800 53.4%,#8e3f00 56%,#887500 58.6%,#848200 59.8%,#767c00 60.7%,#506b00 62.3%,#175f01 65.6%,#035f06 67.2%,#00622d 70.6%,#00664c 73.2%,#005c5a 76.5%,#003957 81%,#00285a 83%,#00177e 87.4%,#080699 90%,#16009f 92%,#230089 94%,#2e006b 96.6%,#2e0066 100%)"></i><i style="left:861px;width:2px;background:linear-gradient(#3e146a 0%,#3e156b 2.6%,#482078 3.1%,#3d2292 3.4%,#352f8f 3.7%,#384c8f 4.4%,#38559b 4.8%,#3158ae 5.1%,#2864b0 5.7%,#2863b0 6.3%,#2e58b0 6.7%,#354895 7.2%,#342b8f 7.8%,#351e90 8%,#3c147b 8.3%,#381385 8.4%,#29138e 8.6%,#201b7f 8.7%,#192082 8.9%,#0c2a8c 9%,#023b81 9.2%,#005473 9.5%,#006c75 10%,#007b6c 10.9%,#00825b 12.1%,#008049 13.3%,#008047 14.9%,#008155 16.4%,#007f68 17.9%,#007871 21.3%,#00786b 24.7%,#006e67 28.1%,#02676b 28.8%,#076972 29.3%,#086e78 29.4%,#10828a 29.8%,#169e97 30.2%,#21b39b 30.7%,#22bc96 31.1%,#03aa53 33.7%,#00902a 35.3%,#009023 35.7%,#029118 36.3%,#0a8003 37.6%,#236b00 39.1%,#356b00 40.3%,#4b7b00 41.3%,#6e9e00 41.9%,#8fba00 42.3%,#d5dd0c 43.6%,#e9e60c 44.3%,#eed80d 45.2%,#f2bb13 46.2%,#f89220 47.1%,#f85f1d 48%,#f8370d 48.8%,#fa1d01 49.5%,#eb1300 50%,#c50a00 50.6%,#990800 51.1%,#910700 51.4%,#8d1800 53.4%,#8d4000 56%,#877600 58.6%,#858100 59.5%,#7b7f00 60.4%,#4c6a00 62.4%,#135f01 65.8%,#035f05 67%,#00633a 71.5%,#00654f 73.5%,#00585c 76.8%,#003457 81.3%,#00285b 82.8%,#001680 87.3%,#050896 89.3%,#13009f 91.3%,#1d0096 92.8%,#2d006b 96.2%,#2e0065 99.5%,#2e0065 100%)"></i><i style="left:863px;width:2px;background:linear-gradient(#0a2789 0%,#023383 0.6%,#023385 1.4%,#092b89 1.8%,#0e2986 2%,#162771 2.3%,#19206a 2.8%,#1d1577 3.4%,#230983 3.7%,#2a0780 3.8%,#340768 4.1%,#3c1168 4.6%,#3e146b 6.6%,#391074 6.9%,#2e0b82 7.1%,#210b84 7.2%,#1d1b73 7.5%,#1c2172 7.7%,#18287e 7.8%,#0b2f8b 8%,#023c80 8.1%,#015273 8.4%,#006373 8.7%,#007772 9.5%,#008161 10.7%,#008046 12%,#048744 12.9%,#08984d 13.7%,#09984c 14.9%,#078e46 15.5%,#028541 16.3%,#007f45 17.2%,#008160 19.2%,#007f68 20.7%,#00776a 25.2%,#007060 29.6%,#027564 30.2%,#057d68 30.5%,#0a9779 31%,#089e77 31.4%,#019956 33%,#00832a 35%,#00821f 35.6%,#028a17 36.2%,#058205 37.1%,#276a00 39.1%,#396c00 40.3%,#4f7a00 41.3%,#638d00 41.7%,#a5c502 42.6%,#d7de0a 43.6%,#e9e60b 44.3%,#eed90d 45.2%,#f2bd14 46.2%,#fa8322 47.4%,#f8581c 48.2%,#f9320b 48.9%,#f91900 49.7%,#dc0e00 50.3%,#b70a00 50.8%,#990800 51.1%,#910700 51.4%,#8d1800 53.4%,#8d4100 56%,#877700 58.6%,#838200 59.8%,#737b00 60.7%,#4e6a00 62.3%,#155f01 65.6%,#045f04 66.9%,#00633a 71.3%,#00654f 73.3%,#00585c 76.7%,#003457 81.1%,#00285b 82.7%,#001581 87.1%,#050797 89.1%,#1400a0 91.1%,#1e0094 92.6%,#2e006b 96%,#2e0064 99.4%,#2e0064 100%)"></i><i style="left:865px;width:2px;background:linear-gradient(#006a74 0%,#006f74 2%,#006573 3.5%,#014f74 4.8%,#01457a 5.7%,#014d75 6.4%,#007074 8%,#008067 9.5%,#008246 11%,#038a47 11.5%,#13ab60 12.4%,#21b773 13.3%,#23b977 14.6%,#1fb169 15.8%,#15ab5c 16.4%,#119c50 16.9%,#078e44 17.5%,#018440 18.1%,#007f48 19.3%,#008262 21.9%,#007a69 24.5%,#007259 30.4%,#00724b 31.9%,#007027 34.5%,#00761c 35.4%,#038413 36.2%,#098004 37.1%,#2d6f00 39.1%,#477600 40.6%,#5f8500 41.6%,#799e00 42%,#aac701 42.6%,#d9df09 43.6%,#e9e50a 44.3%,#edda0c 45.2%,#f2bf14 46.2%,#f98523 47.4%,#f7511a 48.3%,#f92d09 49.1%,#fa1a00 49.7%,#dd0e00 50.3%,#a80900 50.9%,#9a0800 51.1%,#910700 51.4%,#8c2000 54%,#8c4f00 56.6%,#877800 58.6%,#828200 59.8%,#727a00 60.7%,#4d6a00 62.3%,#135f01 65.6%,#035f05 66.9%,#00622e 70.2%,#00664e 72.9%,#005b5b 76.2%,#003657 80.7%,#002959 82.2%,#00167f 86.7%,#050896 88.7%,#13009f 90.6%,#1d0096 92.2%,#2e006b 95.6%,#2e0063 100%)"></i><i style="left:867px;width:2px;background:linear-gradient(#007a6e 0%,#007b6d 3.4%,#007772 6%,#007e6a 8%,#00815f 8.9%,#018347 10.1%,#048f4b 10.6%,#16ae66 11.3%,#25bc85 12.3%,#28be96 13.2%,#28bd9b 14.7%,#28bd8f 16%,#21b46c 17.5%,#14a557 18.3%,#048541 19.5%,#008047 21%,#008163 23.6%,#007b64 25.6%,#00744c 29%,#006f46 31%,#006321 34.4%,#006c19 35.3%,#03800f 36.2%,#0a8103 37%,#327700 39%,#4f8000 40.5%,#6c8f00 41.7%,#97b600 42.3%,#b7ce02 42.8%,#dadf09 43.6%,#e9e509 44.3%,#eddb0c 45.2%,#f2c115 46.2%,#f98824 47.4%,#f85d1f 48.2%,#f8340d 48.9%,#fa1a01 49.7%,#e71100 50.2%,#b70a00 50.8%,#9a0800 51.1%,#910700 51.4%,#8c2000 54%,#8c4f00 56.6%,#877800 58.6%,#828200 59.8%,#707900 60.7%,#4c6900 62.3%,#125f01 65.6%,#035f06 66.9%,#00643d 71.3%,#00664e 72.9%,#005a5c 76.2%,#003457 80.7%,#00285b 82.2%,#001482 86.7%,#060798 88.7%,#15009f 90.6%,#22008c 92.6%,#2e006b 95.2%,#2e0062 99.7%,#2e0062 100%)"></i><i style="left:869px;width:2px;background:linear-gradient(#008165 0%,#00825c 2%,#008064 6.4%,#008157 8%,#00824a 8.9%,#048e4c 9.5%,#10a65f 10.1%,#22b97f 10.9%,#28bd9a 11.8%,#28b3aa 13.3%,#28b3aa 15.3%,#28bc9d 16.9%,#26ba7c 18.4%,#14a95c 19.9%,#0c9a51 20.6%,#03874b 21.8%,#008262 25.2%,#01835b 26.4%,#017a3f 27.9%,#007034 29.1%,#006a32 31.7%,#00611c 34.4%,#006417 35%,#047f0b 36.2%,#0c8303 36.8%,#378000 38.8%,#588e00 40.3%,#709a00 41.3%,#729500 41.6%,#7e9f00 41.9%,#aac600 42.5%,#d6de08 43.4%,#e9e509 44.3%,#eddd0c 45.2%,#f3b719 46.5%,#f98a25 47.4%,#f85f20 48.2%,#f92f0b 49.1%,#f81700 49.8%,#d30c00 50.5%,#9a0800 51.1%,#910700 51.4%,#8d1900 53.4%,#8d4300 56%,#877900 58.6%,#818100 59.8%,#6f7900 60.7%,#506b00 62%,#165f01 65.3%,#045f04 66.6%,#00612d 69.9%,#00664d 72.5%,#005b5b 75.9%,#003557 80.4%,#00295a 81.9%,#001582 86.3%,#060798 88.3%,#15009f 90.3%,#22008c 92.3%,#2d006b 94.9%,#2e0062 99.4%,#2e0062 100%)"></i><i style="left:871px;width:2px;background:linear-gradient(#008153 0%,#038750 2.6%,#018150 6%,#04894c 8%,#0fa25e 8.9%,#1bb473 9.5%,#27be94 10.4%,#28b8a5 11.3%,#28a8ae 12.3%,#2798ac 12.7%,#276eae 13.3%,#2962b3 13.5%,#305caf 13.7%,#355598 14%,#355190 14.3%,#355292 14.7%,#3157a2 15%,#2e5aae 15.2%,#2a61b2 15.3%,#279cac 16.3%,#28b3aa 17.2%,#28bd98 18.7%,#25ba7e 20.2%,#19b171 21.8%,#10a872 23%,#0ea279 24.5%,#13af82 25.8%,#16b078 26.7%,#14ab61 27.6%,#0e9345 28.4%,#068835 29%,#03772a 29.4%,#006b25 30.7%,#006624 32.7%,#006316 34.7%,#058007 36.2%,#288700 37.7%,#569800 39.7%,#7bad00 41%,#82aa00 41.4%,#85a800 41.7%,#b0ca02 42.5%,#d7de09 43.4%,#e9e609 44.3%,#ecde0c 45.2%,#f1c515 46.2%,#f98d26 47.4%,#f86221 48.2%,#f83810 48.9%,#f91800 49.8%,#d30c00 50.5%,#9a0800 51.1%,#910700 51.4%,#8d1900 53.4%,#8d4400 56%,#877a00 58.6%,#808100 59.8%,#6e7800 60.7%,#4a6900 62.3%,#105f01 65.6%,#045f05 66.6%,#00622e 69.9%,#00664e 72.5%,#005a5c 75.9%,#003457 80.4%,#00285c 81.9%,#011385 86.3%,#080699 88.3%,#1300a0 89.9%,#21008f 91.9%,#2d006d 94.5%,#2e0062 98.9%,#2e0061 99.8%,#2e0061 100%)"></i><i style="left:873px;width:2px;background:linear-gradient(#089a5e 0%,#0ea164 0.6%,#15b072 1.4%,#19b174 2.9%,#14aa6a 4.4%,#139e61 5.7%,#13a062 6.6%,#19b170 7.8%,#26bd8e 9%,#28b8a5 10.3%,#28aaae 11%,#279ead 11.3%,#2792ab 11.5%,#2769af 11.8%,#35589f 12%,#374d8c 12.1%,#342e8f 12.4%,#3c1d8f 12.6%,#421872 12.7%,#3f156b 12.9%,#3d136c 13.7%,#3b106f 13.8%,#290782 14.1%,#230983 14.7%,#2c0a83 15%,#3d1270 15.3%,#3e146a 16%,#3e146b 16.1%,#401673 16.3%,#3a1b8e 16.4%,#342b8f 16.6%,#35508d 17%,#3257a3 17.2%,#2667b0 17.3%,#278dac 17.6%,#279bac 17.8%,#28b0ac 18.4%,#28bd9b 20.4%,#27be96 22.4%,#26bd9d 25.8%,#27be91 27%,#23b667 28.5%,#13a443 29.8%,#098d31 30.4%,#017123 31.3%,#00651d 33.3%,#006718 34.2%,#047f0b 35.7%,#0a8604 36.3%,#3e9600 38.3%,#86b903 41%,#94ba01 41.7%,#d1db0b 43.3%,#e6e50b 44.2%,#ebe00a 45.1%,#f0cd14 46%,#f79925 47.2%,#f96e25 48%,#f83a11 48.9%,#fa1801 49.8%,#e00f00 50.3%,#9a0800 51.1%,#910700 51.4%,#8d1900 53.4%,#8d4500 56%,#877b00 58.6%,#808100 59.8%,#6c7700 60.7%,#496900 62.3%,#1c5f00 64.9%,#045f04 66.4%,#00622e 69.8%,#00664e 72.4%,#005a5c 75.8%,#003358 80.2%,#00285c 81.7%,#011286 86.2%,#09069a 88.2%,#1400a0 89.7%,#21008d 91.7%,#2d006c 94.3%,#2e0061 98.8%,#2e0061 100%)"></i><i style="left:875px;width:2px;background:linear-gradient(#21ba85 0%,#27bd97 1.5%,#27bd98 3.5%,#26bd8e 6.1%,#28bd9b 8.1%,#28b1ac 9.7%,#279ead 10.3%,#2793ab 10.4%,#2767af 10.7%,#385696 10.9%,#36478d 11%,#35338e 11.2%,#3d1d8c 11.3%,#41186d 11.5%,#3b1067 12%,#340b73 12.1%,#1e107e 12.3%,#1c1c71 12.4%,#1b276b 12.6%,#192c6e 12.7%,#0c2f8b 12.9%,#013e80 13%,#015274 13.3%,#016073 13.7%,#006974 14.6%,#016173 15.5%,#014b78 16%,#01437e 16.1%,#06368b 16.3%,#16307e 16.4%,#1c2d6d 16.6%,#1c266c 16.7%,#1d1c72 16.9%,#1f0f7f 17%,#320b78 17.2%,#3b1068 17.3%,#411870 17.8%,#3d1d8c 17.9%,#342e8f 18.1%,#354c8b 18.4%,#365595 18.6%,#2960b2 18.7%,#2788ad 19%,#2797ab 19.2%,#28adad 19.8%,#28b5a8 20.7%,#28b7a5 23.3%,#28b7a6 25.9%,#28bd9e 27.5%,#28bc81 28.7%,#23b45b 30.2%,#0c9f3b 31.4%,#018227 32.7%,#007b1e 33.9%,#04880e 35.4%,#088904 36%,#3d9e00 38%,#71b405 40%,#91be0a 41.3%,#a3c507 42%,#dae00f 43.6%,#e9e60b 44.5%,#ece00d 45.2%,#f1ca16 46.2%,#f6a324 47.1%,#f97126 48%,#f83c13 48.9%,#fb1901 49.8%,#ed1200 50.2%,#b80a00 50.8%,#990800 51.1%,#910700 51.4%,#8d1900 53.4%,#8d4600 56%,#867b00 58.6%,#838200 59.5%,#737b00 60.4%,#4d6a00 62%,#135f01 65.3%,#035f07 66.6%,#00654f 72.4%,#00585c 75.8%,#003258 80.2%,#00275e 81.7%,#011189 86.2%,#070699 87.7%,#16009e 89.7%,#23008a 91.7%,#2e006b 94.3%,#2e0061 98.8%,#2e0060 100%)"></i><i style="left:877px;width:2px;background:linear-gradient(#28bc9f 0%,#28b3aa 2.6%,#28b6a7 7.1%,#28aeac 8.3%,#279fae 9%,#278cab 9.4%,#2664af 9.7%,#355498 9.8%,#35488c 10%,#391e90 10.3%,#41186e 10.4%,#3a0f67 10.9%,#300a7c 11%,#1d1677 11.2%,#1b226b 11.3%,#192b6d 11.5%,#04348a 11.7%,#014879 11.8%,#006373 12.1%,#007672 12.9%,#007d6b 14.9%,#007772 16.4%,#006774 17.2%,#006072 17.3%,#015275 17.5%,#01437f 17.6%,#0d318b 17.8%,#1b2e6d 17.9%,#1c246c 18.1%,#1d1974 18.3%,#240984 18.4%,#370b69 18.6%,#41186d 19.2%,#431d7e 19.3%,#372494 19.5%,#374b8c 19.9%,#395593 20.1%,#335ba9 20.2%,#2963b3 20.4%,#2784ad 20.9%,#2798ac 21.3%,#28a0ad 22.2%,#2799ac 23.5%,#278cac 24.4%,#278fab 25.3%,#27b2a9 27.3%,#28be99 28.8%,#27b867 30.8%,#1db254 31.7%,#06a436 33%,#019721 34.2%,#069206 35.7%,#1c9502 36.7%,#51ad03 38.7%,#93bf12 41.3%,#a2c50e 42%,#d8df12 43.6%,#e8e70d 44.5%,#ece10e 45.2%,#f1cc16 46.2%,#f6a724 47.1%,#f97327 48%,#f83e14 48.9%,#fb1a02 49.8%,#f81600 50%,#d60d00 50.5%,#990800 51.1%,#910700 51.4%,#8c1a00 53.4%,#8d4700 56%,#867c00 58.6%,#838200 59.5%,#727a00 60.4%,#4c6a00 62%,#115f01 65.3%,#045f04 66.3%,#00622e 69.6%,#00664f 72.2%,#00585c 75.6%,#003258 80.1%,#00275e 81.6%,#02108a 86%,#080699 87.6%,#1300a0 89.1%,#1e0094 90.6%,#2e006b 94%,#2e0060 99.8%,#2e0060 100%)"></i><i style="left:879px;width:2px;background:linear-gradient(#28b0ac 0%,#2894ac 2%,#278daa 3.2%,#279aad 5.8%,#2796ab 7.1%,#2787ac 7.7%,#256bad 8.1%,#275bb0 8.3%,#31529f 8.4%,#354d8d 8.6%,#34368e 8.9%,#342390 9%,#3f187a 9.2%,#3e156b 9.4%,#370b65 9.8%,#2b0780 10%,#1c1677 10.1%,#1b216b 10.3%,#192b6c 10.4%,#06328a 10.6%,#014879 10.7%,#005873 10.9%,#006a75 11.2%,#007b6d 12.1%,#00825d 13.7%,#008156 14.9%,#007f69 16.9%,#007273 18.1%,#006473 18.6%,#005873 18.7%,#01497a 18.9%,#043689 19%,#172e75 19.2%,#1b296a 19.3%,#1d1677 19.6%,#260984 19.8%,#370b6b 19.9%,#3d136a 20.2%,#3e156b 21%,#46207e 21.5%,#3e2192 21.9%,#3a2494 22.9%,#381d92 23.5%,#331590 23.8%,#2815a8 24.2%,#1f19ad 24.4%,#181faa 24.5%,#143798 25%,#14618b 26.2%,#14718c 27.1%,#157c93 27.5%,#1b91a2 27.8%,#24b4a6 28.7%,#28be94 29.9%,#26b766 31.9%,#09aa39 33.4%,#03a31c 34.7%,#069f07 35.6%,#159803 36.2%,#48ab05 38.2%,#86bd19 40.8%,#a9c817 42.3%,#dce115 43.9%,#e9e50d 44.8%,#eedb13 45.7%,#f3be1c 46.6%,#f89128 47.5%,#f85b22 48.5%,#fa2b0b 49.4%,#f91601 50%,#e50f00 50.3%,#990800 51.1%,#910700 51.4%,#8c1a00 53.4%,#8d4800 56%,#867d00 58.6%,#828200 59.5%,#717a00 60.4%,#4b6900 62%,#105f01 65.3%,#045f05 66.3%,#00643e 70.7%,#00654f 72.2%,#00575b 75.6%,#003058 80.1%,#002660 81.6%,#00167f 85%,#050797 87%,#1400a0 89%,#22008d 91%,#2d006c 93.6%,#2e005f 99.4%,#2e005f 100%)"></i><i style="left:881px;width:2px;background:linear-gradient(#278eab 0%,#2769ad 0.6%,#285bb0 0.8%,#2e51ab 0.9%,#334a9a 1.1%,#354391 1.2%,#33298e 2%,#2f198e 2.3%,#301595 3.2%,#28189f 4.1%,#2a238a 5.7%,#2b1d88 6.6%,#33148a 7.1%,#3e146e 7.5%,#3d136a 8%,#380c6c 8.3%,#2c087f 8.4%,#1f0c82 8.6%,#1c1e6f 8.9%,#1b266a 9%,#192b6e 9.2%,#0a2e8b 9.4%,#01407d 9.5%,#004d74 9.7%,#006373 10%,#00796f 10.9%,#00825d 12.1%,#00814d 13%,#05884b 15%,#018149 16.3%,#007e69 18.3%,#007173 19.5%,#005b73 20.1%,#013c83 20.6%,#08308a 20.7%,#18296d 21%,#1d1f6f 21.8%,#1d2170 22.7%,#1b2676 23%,#122c8a 23.3%,#0a308c 23.5%,#013c7f 23.8%,#015971 24.5%,#016871 25.3%,#016d6c 26.8%,#026e71 27.6%,#076f75 28.2%,#08737a 28.4%,#0f858c 28.7%,#159492 29.1%,#1ca89d 29.4%,#25bc9b 30.2%,#26ba75 31.7%,#13b050 33%,#05a729 34.2%,#07a609 35.4%,#18a003 36.2%,#49ac09 38.2%,#84be20 40.8%,#a4c61e 42.3%,#dae019 43.9%,#e9e610 44.8%,#eddd14 45.7%,#f2c11c 46.6%,#f89428 47.5%,#f85f23 48.5%,#f93410 49.2%,#fa1701 50%,#e71000 50.3%,#990800 51.1%,#910700 51.4%,#8c1a00 53.4%,#8c4900 56%,#887300 58%,#848200 59.2%,#787d00 60.1%,#506b00 61.7%,#155f01 65%,#035f05 66.3%,#00654f 72.1%,#00575b 75.5%,#003058 79.9%,#00275e 81.1%,#02108a 85.6%,#080699 87.1%,#1400a0 88.7%,#1f0093 90.2%,#2e006b 93.6%,#2e005f 99.4%,#2e005f 100%)"></i><i style="left:883px;width:2px;background:linear-gradient(#371e90 0%,#3e187c 0.2%,#3e156e 0.3%,#3d136a 0.6%,#3c116f 0.8%,#300d83 0.9%,#210e83 1.1%,#1d1d71 1.4%,#1d2271 1.5%,#1b2777 1.7%,#152b85 1.8%,#0c2f8c 2%,#013a80 2.3%,#014a74 3.2%,#014b74 4.4%,#013c7e 6.4%,#01437b 7.4%,#005d73 8.3%,#007672 9.5%,#00815e 11%,#00834f 11.8%,#058e51 12.4%,#13aa66 13.3%,#1db272 14.3%,#1eb271 15.2%,#15ac65 16%,#119d59 16.4%,#08934f 16.9%,#058749 17.2%,#00804c 17.9%,#007f69 19.5%,#007273 21.5%,#007273 23%,#007869 25%,#007361 28.4%,#017363 29.1%,#077d6d 29.8%,#0f947f 30.2%,#14a185 30.5%,#15ac8b 30.7%,#18b185 31%,#10b15d 32.5%,#03a62b 34%,#0ca806 35.6%,#30a906 37.1%,#78bb23 40.5%,#99c425 42%,#b3ce24 42.9%,#dde21b 44.2%,#eae511 45.1%,#eedb15 45.9%,#f3be1f 46.8%,#f98e28 47.7%,#f86225 48.5%,#f93611 49.2%,#fb1802 50%,#f51300 50.2%,#cb0b00 50.6%,#990800 51.1%,#910700 51.4%,#8c1b00 53.4%,#8c4a00 56%,#887400 58%,#848200 59.2%,#777d00 60.1%,#4f6a00 61.7%,#145f01 65%,#035f06 66.3%,#006441 70.7%,#006450 72.2%,#005b5b 74.8%,#003457 79.3%,#00285c 80.8%,#011189 85.3%,#080699 86.8%,#1300a0 88.3%,#1e0094 89.9%,#2d006b 93.3%,#2e005f 99.1%,#2e005e 100%)"></i><i style="left:885px;width:2px;background:linear-gradient(#1b216f 0%,#132780 0.2%,#042f88 0.3%,#013d7b 0.5%,#005672 0.9%,#006c74 2.1%,#007572 4.1%,#007372 6.7%,#007c6c 8.7%,#00825e 10%,#018650 10.9%,#0c9d5e 11.7%,#16af6f 12.1%,#24bc8a 13%,#27bd97 14%,#28bd97 15.2%,#27bd8c 16.1%,#20b473 17%,#15aa62 17.5%,#048748 18.4%,#00804d 19.2%,#008163 20.4%,#007d6a 22.4%,#007f63 24.4%,#007952 27%,#017455 30.4%,#028652 31.6%,#029649 32.5%,#03a21a 34.5%,#0aa808 35.4%,#2caa09 37%,#5db41e 39.6%,#7ebd28 41.1%,#a1c628 42.6%,#cddb23 43.9%,#e0e31b 44.5%,#eae514 45.2%,#eed916 46%,#f3ba21 46.9%,#f89128 47.7%,#f85b24 48.6%,#fa2a0c 49.5%,#fc1902 50%,#f81400 50.2%,#de0d00 50.5%,#990800 51.1%,#920800 51.2%,#8f0f00 52.5%,#8d2d00 54.4%,#887200 57.8%,#848100 59%,#7a7e00 60%,#516b00 61.5%,#155f01 64.9%,#035f05 66.1%,#006440 70.6%,#006450 72.1%,#005b5b 74.7%,#003457 79.1%,#00275d 80.7%,#02108a 85.1%,#080699 86.7%,#1400a0 88.2%,#21008d 90.2%,#2c006e 92.8%,#2e005f 98.6%,#2e005e 99.8%,#2e005e 100%)"></i><i style="left:887px;width:2px;background:linear-gradient(#006373 0%,#007870 1.2%,#008164 3.8%,#008064 7.2%,#018355 9.2%,#058c55 10%,#11a76a 10.7%,#21ba86 11.5%,#27bd9c 12.4%,#28b3aa 14.4%,#28b7a5 16%,#28bd9b 16.9%,#25bb81 17.8%,#17ac64 18.6%,#068a48 19.3%,#008048 20.1%,#00825c 22.1%,#008156 23.6%,#00773b 26.2%,#00743a 27.8%,#007043 30.4%,#006c37 31.9%,#007128 33.1%,#01881d 34%,#06a40e 35%,#15a908 35.9%,#50b21e 39.3%,#6db928 40.8%,#90c228 42.3%,#adcb28 43.3%,#d3de24 44.2%,#e9e717 45.1%,#eedb16 46%,#f3bd21 46.9%,#f89528 47.7%,#f85f25 48.6%,#fa2c0d 49.5%,#f91501 50.2%,#e00d00 50.5%,#9a0800 51.1%,#910700 51.4%,#8c1b00 53.4%,#8c4c00 56%,#877600 58%,#848200 59.2%,#757b00 60.1%,#4e6a00 61.7%,#115f01 65%,#045f04 66%,#006440 70.4%,#006550 71.9%,#005b5b 74.5%,#003457 79%,#00275d 80.5%,#00187d 83.9%,#050896 85.9%,#1400a0 87.9%,#1e0093 89.4%,#2d006b 92.8%,#2e005e 98.6%,#2e005e 99.8%,#2e005e 100%)"></i><i style="left:889px;width:2px;background:linear-gradient(#00796f 0%,#00835d 2%,#078a5b 4%,#078a59 7.4%,#078f5a 8%,#099b61 8.6%,#12a269 9.2%,#17b176 9.7%,#24bc91 10.6%,#28b8a5 11.8%,#28a5af 13%,#2790ab 14.6%,#2796ac 15.5%,#28aead 16.7%,#28bd9d 17.9%,#25bb7f 18.9%,#16ac62 19.6%,#0c9951 20.1%,#038644 20.7%,#007f44 21.9%,#007e40 23.5%,#007729 26.8%,#006e2c 29.4%,#006a2f 31.4%,#006419 33.4%,#017016 33.9%,#059e0f 34.8%,#0aa80b 35.3%,#23ac10 36.8%,#49b321 39.4%,#60b728 40.6%,#83be28 42.2%,#aaca28 43.4%,#d3de25 44.3%,#e7e71a 45.1%,#eede16 46%,#f3c021 46.9%,#f89828 47.7%,#f86227 48.6%,#fa2e0f 49.5%,#fa1601 50.2%,#f11100 50.3%,#9b0800 51.1%,#910700 51.4%,#8c1b00 53.4%,#8c4d00 56%,#877600 58%,#838200 59.2%,#737b00 60.1%,#536b00 61.3%,#165f01 64.7%,#045f05 66%,#006441 70.4%,#00654f 71.6%,#00555b 75%,#003857 78.4%,#00275d 80.4%,#00177d 83.7%,#050897 85.7%,#1400a0 87.7%,#22008c 89.7%,#2c006e 92.3%,#2e005f 98.2%,#2e005e 99.7%,#2e005e 100%)"></i><i style="left:891px;width:2px;background:linear-gradient(#008263 0%,#02895d 0.9%,#0b9d69 1.7%,#13a673 2.1%,#16b27e 2.6%,#21b688 3.8%,#21b583 7.2%,#21bb8b 8.4%,#27bca0 10%,#28aeac 11.2%,#2897ad 12.1%,#2677ac 12.7%,#215aa7 13.2%,#2240ae 13.7%,#182ca7 14.1%,#1b23a7 15%,#2226a2 15.5%,#2f3ca3 16%,#2553ad 16.4%,#256fab 16.7%,#2795ac 17.2%,#28acad 17.8%,#28bd9a 19%,#21b774 20.2%,#13a75c 21%,#0c994f 21.5%,#03873e 23%,#09943d 25%,#109e3f 26.5%,#078c2e 28.5%,#037825 29.1%,#006b21 30.4%,#00661d 32.4%,#016513 33.6%,#017013 33.9%,#06a310 34.8%,#10aa0e 35.7%,#38b221 39.1%,#55b528 40.6%,#70ba28 41.9%,#a2c628 43.4%,#dae123 44.6%,#eae718 45.4%,#eedc17 46.2%,#f3bd23 47.1%,#f98828 48%,#f85b25 48.8%,#fb290c 49.7%,#fb1602 50.2%,#f31200 50.3%,#c00a00 50.8%,#9b0800 51.1%,#910700 51.4%,#8d1600 52.9%,#8d4400 55.5%,#877900 58.1%,#818100 59.4%,#6e7800 60.3%,#496900 61.8%,#1a5f00 64.4%,#035f06 66%,#006334 69.3%,#00664e 71.3%,#00575c 74.7%,#003a56 78.1%,#00285c 80.1%,#02108a 84.5%,#09059a 86%,#15009f 87.6%,#22008b 89.6%,#2d006d 92.2%,#2e005f 98%,#2e005e 100%)"></i><i style="left:893px;width:2px;background:linear-gradient(#079766 0%,#0da06e 0.5%,#17b281 0.9%,#24bc98 1.8%,#28b9a3 3.4%,#28b9a3 7.8%,#28b3ab 9.4%,#289dae 10.6%,#278caa 11%,#2568ab 11.5%,#2b49ac 11.8%,#30339c 12.1%,#2b289c 12.3%,#261ba7 12.4%,#2217ad 12.6%,#0d248f 13.2%,#063d81 13.7%,#014874 14.4%,#014676 15.2%,#023c7e 15.6%,#0a2f8c 16%,#12268c 16.1%,#1d1b7b 16.4%,#211583 16.6%,#2e108e 16.7%,#3b137e 16.9%,#301c8f 17.2%,#322f8d 17.3%,#353f91 17.5%,#324ea1 17.6%,#265fae 17.8%,#2788ac 18.1%,#28a0ae 18.4%,#28b5a8 19.2%,#28bd98 20.1%,#22b873 21.6%,#1ab061 22.9%,#1db360 24.4%,#25b765 26.4%,#23b45d 27.9%,#1ead4d 28.8%,#13a23b 29.6%,#0c8f2f 30.1%,#058124 30.7%,#02711d 31.3%,#006a16 32.8%,#017415 33.4%,#059e16 34.4%,#0ba917 35%,#23b01e 38.3%,#38b325 39.9%,#66b828 41.9%,#9bc528 43.4%,#d5df26 44.6%,#eae819 45.4%,#eeda18 46.3%,#f4b925 47.2%,#f96f28 48.5%,#f74b1f 49.1%,#fc1d06 50%,#f51201 50.3%,#d50c00 50.6%,#9c0800 51.1%,#930800 51.2%,#8f1000 52.5%,#8d3000 54.4%,#887500 57.8%,#848200 59%,#757c00 60%,#4e6a00 61.5%,#115f01 64.9%,#045f05 65.8%,#006334 69.2%,#00664e 71.2%,#00575c 74.5%,#003956 77.9%,#00285c 79.9%,#020f8b 84.4%,#0a059a 85.9%,#16009e 87.4%,#23008a 89.4%,#2d006c 92%,#2e005f 97.9%,#2e005e 99.8%,#2e005e 100%)"></i><i style="left:895px;width:2px;background:linear-gradient(#21ba90 0%,#28b8a4 1.2%,#28a6af 2.8%,#289aad 4.3%,#28a1ae 7.7%,#2897ad 8.9%,#2785ab 9.5%,#266aac 10%,#275bb0 10.1%,#2f50a7 10.3%,#354894 10.4%,#33268f 10.9%,#36188d 11%,#3b157d 11.2%,#3b137b 11.3%,#2e118d 11.5%,#211883 11.7%,#1d1d7e 11.8%,#142389 12%,#082d8b 12.1%,#033c80 12.3%,#014b73 12.6%,#005c72 13%,#006d75 14.3%,#006a75 15.8%,#005c72 16.6%,#014c74 16.9%,#01417a 17%,#043287 17.2%,#162780 17.3%,#1d1e74 17.5%,#21167e 17.6%,#351080 17.8%,#3e146c 17.9%,#411873 18.1%,#371f91 18.3%,#35358e 18.4%,#374792 18.6%,#2c57af 18.7%,#2671ad 18.9%,#2796ac 19.2%,#28abad 19.6%,#28b9a3 20.6%,#28be8f 21.8%,#27bc81 23%,#28bc82 25%,#28bc85 27%,#28bb7a 28.2%,#22b252 30.2%,#0e9d31 31.7%,#099525 32.7%,#09a022 33.6%,#11ab23 34.8%,#22b123 39.3%,#37b326 40.5%,#63b728 42%,#afcc28 44%,#dde323 44.9%,#ebe517 45.7%,#efd819 46.5%,#f4b527 47.4%,#f96928 48.6%,#f8451c 49.2%,#fc1803 50.2%,#f71301 50.3%,#d70c00 50.6%,#9c0800 51.1%,#930800 51.2%,#8f1000 52.5%,#8d3000 54.4%,#877600 57.8%,#848200 59%,#747b00 60%,#4d6a00 61.5%,#105f01 64.9%,#035f06 65.8%,#006335 69.2%,#00654f 71.2%,#005c5a 73.8%,#003557 78.2%,#00275d 79.8%,#00177d 83.1%,#050797 85.1%,#15009f 87.1%,#22008b 89.1%,#2d006d 91.7%,#2e005f 97.5%,#2e005e 99.5%,#2e005e 100%)"></i><i style="left:897px;width:2px;background:linear-gradient(#28b8a4 0%,#28a8ae 0.9%,#2790ab 1.8%,#2771ac 2.5%,#275baf 2.8%,#2c51ac 2.9%,#354991 3.2%,#35398e 4%,#35338f 5.2%,#35408d 7.2%,#353a8e 8.1%,#352d8f 8.7%,#391f91 9%,#3f1573 9.4%,#3e146a 9.8%,#3d136c 10%,#391075 10.1%,#290c87 10.3%,#1e147b 10.4%,#1d1b72 10.6%,#1c2272 10.7%,#122888 10.9%,#043385 11%,#014973 11.3%,#005d72 11.8%,#007572 13%,#007d6b 15%,#007772 16.6%,#006574 17.5%,#005672 17.8%,#014877 17.9%,#033883 18.1%,#16297e 18.3%,#1d1e71 18.4%,#221282 18.6%,#3a1072 18.7%,#3e146a 18.9%,#411871 19%,#381e90 19.2%,#374892 19.5%,#2a58af 19.6%,#2787ac 19.9%,#289fae 20.2%,#28b3ab 21%,#28bd9d 23%,#28bd9f 27.5%,#28be93 28.7%,#26b559 31.3%,#1baf3d 33.3%,#16ad2c 36.7%,#1caf27 39.3%,#22b020 40.2%,#39b223 41.1%,#5bb628 42%,#a9c928 44%,#dbe125 44.9%,#eae617 45.7%,#eeda18 46.5%,#f4b826 47.4%,#f96c28 48.6%,#f8471e 49.2%,#fc1904 50.2%,#f91401 50.3%,#d90c00 50.6%,#9d0800 51.1%,#930800 51.2%,#8f1000 52.5%,#8e3d00 55.1%,#887400 57.7%,#848200 58.9%,#777c00 59.8%,#4f6a00 61.3%,#115f01 64.7%,#045f05 65.6%,#006334 69%,#00654f 71%,#005c5a 73.6%,#003457 78.1%,#00275d 79.6%,#00177e 83%,#060798 85%,#16009e 87%,#23008a 89%,#2d006c 91.6%,#2e005e 99.2%,#2e005e 100%)"></i><i style="left:899px;width:2px;background:linear-gradient(#28a1ae 0%,#278caa 0.6%,#2665ac 1.1%,#2e52ad 1.2%,#374992 1.4%,#34328e 1.7%,#342391 1.8%,#3b1885 2%,#3e1570 2.1%,#3e146a 2.3%,#3d1370 2.6%,#331083 2.8%,#250e85 2.9%,#1d147a 3.1%,#1d226e 3.7%,#1b2c75 4.9%,#1d236d 6.4%,#1d1d71 8%,#1c276f 8.9%,#1b2971 9%,#092b8a 9.4%,#013d7c 9.7%,#005872 10.3%,#007672 11.8%,#008163 13.8%,#00825f 15.3%,#007b6d 17.3%,#006a75 18.3%,#005e73 18.6%,#005373 18.7%,#014379 18.9%,#082e8a 19%,#1b2370 19.2%,#1d1876 19.3%,#2c0b84 19.5%,#3b106a 19.6%,#3e146a 19.8%,#411871 19.9%,#381f91 20.1%,#374692 20.4%,#2e54ae 20.6%,#266bad 20.7%,#278dab 21%,#28a3af 21.5%,#28b2ac 22.4%,#28b4aa 25%,#28adac 27%,#28b7a5 28.5%,#28be97 29.8%,#28b86a 31.7%,#25b34f 33.7%,#15ad35 36.3%,#15ac2b 39%,#1cae1c 40.5%,#31b11f 41.3%,#55b427 42%,#a5c728 44%,#d7e025 44.9%,#eae717 45.7%,#eedc18 46.5%,#f4bb26 47.4%,#f96e28 48.6%,#f75324 49.1%,#fc2109 50%,#f91402 50.3%,#db0c00 50.6%,#9d0800 51.1%,#930800 51.2%,#8f1000 52.5%,#8d3200 54.4%,#877800 57.8%,#828200 59%,#717a00 60%,#4b6900 61.5%,#1b5f00 64.1%,#035f06 65.6%,#006336 69%,#00654f 71%,#005b5b 73.6%,#003358 78.1%,#00285c 79.3%,#00187d 82.7%,#050797 84.7%,#15009f 86.7%,#23008a 88.7%,#2d006d 91.3%,#2e005e 98.9%,#2e005e 99.8%,#2e005e 100%)"></i><i style="left:901px;width:2px;background:linear-gradient(#2a55af 0%,#374992 0.2%,#342f8e 0.5%,#3b1d8f 0.6%,#411871 0.8%,#3d136a 1.1%,#3a106f 1.2%,#260d86 1.4%,#1d1877 1.5%,#1c1f6f 1.7%,#1b2572 1.8%,#0b2a8a 2%,#01377f 2.1%,#014873 2.5%,#005871 2.9%,#006774 4.4%,#006373 7.8%,#006f74 9.8%,#008068 11.8%,#008254 13.8%,#018652 15.3%,#008155 16.6%,#007d6b 18.1%,#006e75 19%,#005a71 19.5%,#004b74 19.6%,#013a7e 19.8%,#122881 19.9%,#1b1d6f 20.1%,#1d137a 20.2%,#310b7c 20.4%,#3b1069 20.6%,#41186e 20.9%,#411d83 21%,#362693 21.2%,#35358f 21.3%,#374292 21.5%,#344ea1 21.6%,#2b59b0 21.8%,#277cad 22.2%,#2891ab 22.7%,#289aad 23.6%,#2891ab 24.5%,#2861b0 25.8%,#2d53ad 26.1%,#344398 26.7%,#343d97 27.3%,#2b47ac 28.1%,#2169a7 28.7%,#249ea6 29.4%,#27b4a7 29.9%,#28be96 30.8%,#28b96c 32.8%,#25b457 34.4%,#16ae42 35.9%,#0faa31 38.5%,#14ac19 40.5%,#1aad14 41%,#3db11f 41.7%,#95c327 43.7%,#c3d527 44.6%,#e0e41f 45.2%,#eae617 45.9%,#efd919 46.6%,#f3bd25 47.4%,#f97028 48.6%,#f74b21 49.2%,#fc1b06 50.2%,#fa1502 50.3%,#ef1000 50.5%,#9e0800 51.1%,#940800 51.2%,#900d00 52.1%,#8c2400 53.7%,#8b5b00 56.3%,#877800 57.8%,#828200 59%,#707900 60%,#496900 61.5%,#1a5f00 64.1%,#045f03 65.3%,#006333 68.7%,#00664e 70.7%,#005c5a 73.3%,#003457 77.8%,#00275e 79.3%,#00167f 82.7%,#070699 84.7%,#1400a0 86.2%,#1f0093 87.7%,#2d006c 91.1%,#2e005e 98.8%,#2e005e 100%)"></i><i style="left:903px;width:2px;background:linear-gradient(#3a0f67 0%,#350b70 0.2%,#1f0d83 0.3%,#1c1a73 0.5%,#1b226e 0.6%,#0e2788 0.8%,#01387e 0.9%,#004e72 1.2%,#006574 2%,#007871 3.2%,#007c6c 5.8%,#007c6c 9.2%,#008260 11.2%,#018656 12.4%,#04925c 13%,#13ae73 14.6%,#13ac70 15.5%,#099a5e 16.4%,#028752 17%,#008154 17.6%,#007e6a 18.9%,#007074 19.8%,#006073 20.2%,#004975 20.6%,#013b7e 20.7%,#0e2988 20.9%,#1b2170 21%,#1c1974 21.2%,#1f0e80 21.3%,#2f0b7f 21.5%,#3b106d 21.6%,#3e146a 22.1%,#401876 22.4%,#3d2092 22.7%,#352d90 23.5%,#3d2192 24.4%,#411d84 24.7%,#3e1571 25%,#3e146d 25.6%,#3b1277 25.9%,#320f82 26.1%,#270c86 26.2%,#1d1478 26.5%,#1c1e73 27%,#132886 27.5%,#083684 28.1%,#074778 29%,#09547f 29.3%,#126889 29.6%,#147b8c 30.1%,#148690 30.2%,#16989a 30.4%,#1eab9c 30.7%,#21bc99 31.1%,#25b86c 33.7%,#15b04d 35.7%,#0aa934 38.3%,#0ba916 40.3%,#10aa0c 41%,#2cad14 41.6%,#75ba21 43.1%,#adcb26 44.3%,#dee31f 45.2%,#ebe516 46%,#eedb18 46.6%,#f3c024 47.4%,#fa8628 48.3%,#f75726 49.1%,#fc240b 50%,#fa1603 50.3%,#f11101 50.5%,#c90b00 50.8%,#9e0800 51.1%,#940800 51.2%,#900d00 52.1%,#8c2400 53.7%,#8a5c00 56.3%,#877900 57.8%,#818100 59%,#737a00 59.8%,#4b6900 61.3%,#1b5f00 64%,#035f06 65.5%,#006546 69.9%,#006451 71.2%,#00575b 73.8%,#003957 77.1%,#002959 78.7%,#00197b 82.1%,#040896 84%,#1400a0 86%,#22008c 88%,#2c006e 90.6%,#2e005e 98.3%,#2e005e 99.8%,#2e005e 100%)"></i><i style="left:905px;width:2px;background:linear-gradient(#004375 0%,#005a71 0.5%,#007173 1.4%,#007d6b 2.3%,#018563 4.3%,#018662 5.8%,#008360 9.2%,#01875a 10.7%,#048d5b 11.3%,#0ea66f 12.3%,#19b37f 12.9%,#25bd93 14.1%,#27be94 15.3%,#21b882 16.6%,#14ab6e 17.2%,#048a52 17.9%,#008154 18.6%,#007d6b 19.8%,#007074 20.7%,#005d72 21.3%,#004c73 21.6%,#052c88 22.1%,#0e2486 22.2%,#162178 22.4%,#1b1f72 22.5%,#1d1478 23.5%,#1d1b73 24.4%,#1b2071 24.7%,#0e2485 25%,#062a86 25.2%,#014276 25.6%,#005f6d 26.4%,#006f69 27.6%,#01715f 30.2%,#07806a 30.8%,#089375 31.1%,#0b9e77 31.7%,#10af7b 32.4%,#17b56e 33.6%,#11b054 35.6%,#08ab40 37.6%,#04a31f 39.6%,#08a007 40.8%,#1da809 41.4%,#7fbc1d 43.4%,#aac922 44.3%,#d5de20 45.1%,#eae717 45.9%,#eedd18 46.6%,#f3c223 47.4%,#f89328 48.2%,#f75927 49.1%,#fb1703 50.3%,#f31101 50.5%,#ca0b00 50.8%,#9f0800 51.1%,#940800 51.2%,#8f1100 52.5%,#8d3400 54.4%,#896d00 57.1%,#857f00 58.3%,#7e8000 59.2%,#687500 60.1%,#4a6900 61.3%,#1a5f00 64%,#045f03 65.2%,#006334 68.6%,#00654f 70.6%,#005b5b 73.2%,#003258 77.6%,#00275d 78.8%,#00167f 82.2%,#070699 84.2%,#1400a0 85.7%,#22008d 87.7%,#2c006f 90.3%,#2e005e 98%,#2e005e 100%)"></i><i style="left:907px;width:2px;background:linear-gradient(#006974 0%,#007a6e 0.9%,#018666 2.1%,#058e69 2.8%,#089c72 3.2%,#14a57a 4.1%,#14ae80 5.1%,#11a072 7.1%,#089c69 9%,#0fa16e 10.3%,#16b27e 11%,#24bd95 12.3%,#28baa2 13.8%,#28b9a3 15.8%,#27be95 17%,#1fb67d 17.8%,#12a467 18.3%,#038751 18.9%,#008156 19.5%,#007f68 20.4%,#006f74 21.9%,#006073 23.5%,#006972 24.7%,#007469 26.2%,#007456 29.6%,#007150 31.6%,#017b53 32.4%,#05a461 33.6%,#08af5f 34.4%,#0aae52 36.3%,#00a333 38.3%,#058b0b 40.3%,#0b8903 41%,#148f03 41.3%,#29a304 41.7%,#a7c71e 44.3%,#dae11c 45.2%,#eae616 46%,#eeda18 46.8%,#f4bc25 47.5%,#f96d28 48.8%,#f84920 49.4%,#fc1804 50.3%,#f51201 50.5%,#cc0b00 50.8%,#9f0800 51.1%,#940800 51.2%,#8f1100 52.5%,#8d3500 54.4%,#896e00 57.1%,#858000 58.3%,#7e8000 59.2%,#4c6900 61.2%,#0d5f02 64.6%,#035f06 65.3%,#006548 69.8%,#005a5c 73.2%,#003b56 76.5%,#00285c 78.5%,#00177d 81.9%,#060798 83.9%,#1300a0 85.4%,#1e0093 87%,#2d006c 90.3%,#2e005e 98%,#2e005e 100%)"></i><i style="left:909px;width:2px;background:linear-gradient(#007b6d 0%,#01866a 0.9%,#069772 1.5%,#12ab83 2.1%,#1ab58e 2.6%,#24bb9c 3.5%,#27bba0 5.5%,#21bc93 8.9%,#27bd9c 10.9%,#28aead 13.5%,#28a6af 15%,#28b3aa 16.6%,#28bd9a 17.8%,#20b880 18.6%,#13a769 19%,#068c53 19.5%,#00824f 19.9%,#007f69 21.5%,#007871 23.5%,#007b62 26.1%,#007549 28.1%,#007044 30.1%,#006b41 32.7%,#007042 33.3%,#00884c 33.9%,#01a357 34.7%,#04ae59 35.9%,#01a948 37.1%,#037d10 39.7%,#087303 40.6%,#157602 41.3%,#3d9f01 42.2%,#5cb007 42.8%,#a4c619 44.3%,#d7df1b 45.2%,#eae716 46%,#eedb18 46.8%,#f3be24 47.5%,#f96f28 48.8%,#f84a21 49.4%,#fc1905 50.3%,#f71201 50.5%,#e50e00 50.6%,#a00800 51.1%,#940800 51.2%,#8f1100 52.5%,#8e3500 54.4%,#886f00 57.1%,#858000 58.3%,#7d7f00 59.2%,#4b6900 61.2%,#1a5f00 63.8%,#045f03 65%,#006336 68.4%,#00654f 70.4%,#005a5c 73%,#003b56 76.4%,#00285c 78.4%,#00177e 81.7%,#070699 83.7%,#1400a0 85.3%,#22008c 87.3%,#2c006e 89.9%,#2e005e 97.5%,#2e005e 99.5%,#2e005e 100%)"></i><i style="left:911px;width:2px;background:linear-gradient(#02896d 0%,#0da381 0.8%,#18b491 1.2%,#24ba9f 2%,#28aeac 3.5%,#28a6ae 5.1%,#28b6a7 8.4%,#28b5a8 10.4%,#28a9ae 12%,#288dab 13.5%,#276aad 14.4%,#2861af 15%,#276fad 15.6%,#2897ad 16.6%,#28b0ac 17.5%,#27be97 18.7%,#1db478 19.5%,#068f54 20.2%,#01824d 20.7%,#008163 22.2%,#007f67 23.8%,#007e5a 25.3%,#00753b 27.3%,#007234 28.8%,#00693b 33.3%,#006a3c 33.7%,#008e4d 34.7%,#00a858 35.9%,#00a24a 36.8%,#00791b 38.8%,#066403 40.3%,#176301 41.3%,#2b7800 41.9%,#5aa901 42.8%,#87bb0d 43.7%,#b4ce17 44.6%,#dbe118 45.4%,#eae615 46.2%,#eedc17 46.8%,#f3c023 47.5%,#f98f28 48.3%,#f75526 49.2%,#fc210a 50.2%,#f81302 50.5%,#e70e00 50.6%,#a00800 51.1%,#940800 51.2%,#8f1100 52.5%,#8d4400 55.1%,#887000 57.1%,#858000 58.3%,#7c7f00 59.2%,#536b00 60.7%,#135f01 64.1%,#045f04 65%,#006337 68.4%,#00664e 69.9%,#00555b 73.3%,#003657 76.7%,#00275d 78.2%,#00167f 81.6%,#080699 83.6%,#15009f 85.1%,#22008b 87.1%,#2d006d 89.7%,#2e005e 97.4%,#2e005e 100%)"></i><i style="left:913px;width:2px;background:linear-gradient(#19b293 0%,#26b8a2 0.9%,#28acac 1.8%,#2782aa 3.8%,#2773ab 4.8%,#2775ab 5.7%,#2892ac 7.7%,#289eae 9.2%,#289aad 10.7%,#288baa 11.7%,#2769ac 12.3%,#295cb0 12.4%,#3353a6 12.6%,#394c93 12.7%,#36398f 13%,#382594 13.3%,#42218b 13.5%,#492177 13.7%,#3e156b 14.3%,#3e146a 15.5%,#482074 16.1%,#46217f 16.3%,#3b2393 16.4%,#35308f 16.6%,#394a91 16.9%,#3354a8 17%,#2767ad 17.2%,#278aab 17.5%,#28a3af 17.9%,#28b6a7 18.7%,#27be92 19.6%,#1eb479 20.2%,#15aa6a 20.6%,#058c50 21.2%,#00804c 21.9%,#008155 23.5%,#007c48 25%,#007a37 26.5%,#038138 27.5%,#06903f 28.4%,#068f46 30.4%,#00733d 32.4%,#00713f 33.6%,#008a4c 35.1%,#00924f 35.7%,#00984d 36.2%,#016814 38.8%,#065f02 40%,#226000 41.6%,#2e6b00 42%,#559900 42.8%,#71b202 43.3%,#aac911 44.5%,#d9e017 45.4%,#eae615 46.2%,#efd918 46.9%,#f4b925 47.7%,#f96928 48.9%,#f8451f 49.5%,#fc1a06 50.3%,#f81402 50.5%,#e90f00 50.6%,#a10800 51.1%,#940800 51.2%,#8e1100 52.5%,#8e3700 54.4%,#887100 57.1%,#858100 58.3%,#7b7e00 59.2%,#516b00 60.7%,#115f01 64.1%,#035f06 65%,#006339 68.4%,#00654f 69.9%,#005b5b 72.5%,#003058 77%,#00265f 78.2%,#001483 81.6%,#060798 83.1%,#13009f 84.7%,#1e0094 86.2%,#2d006c 89.6%,#2e005e 97.2%,#2e005e 99.8%,#2e005e 100%)"></i><i style="left:915px;width:2px;background:linear-gradient(#27b5a7 0%,#28a3ae 0.9%,#287baa 2.1%,#2764ab 2.6%,#2b49af 2.9%,#353b92 3.2%,#332690 3.7%,#361588 4%,#3d1475 4.3%,#3e1474 4.8%,#3a1482 5.7%,#311591 6.6%,#2a218b 7.1%,#353a93 7.7%,#294cac 8.9%,#284eab 9.8%,#2c4ba8 10.1%,#354691 10.6%,#352e8f 11.3%,#392494 11.5%,#411f8a 11.7%,#451c75 11.8%,#41176c 12%,#3c1168 12.7%,#340764 13.2%,#32076d 13.3%,#280783 13.5%,#1f0d80 13.7%,#1b1972 14%,#171f68 14.4%,#17256c 15.3%,#192069 15.8%,#1d1776 16.3%,#1f0d81 16.4%,#2c077e 16.6%,#370b68 16.7%,#41186c 17.3%,#461d76 17.5%,#372793 17.6%,#373b8f 17.8%,#394e94 17.9%,#285faf 18.1%,#278dab 18.4%,#28a6af 18.9%,#28b6a6 19.5%,#27be92 20.4%,#1db374 21.2%,#14ac69 21.5%,#0a9958 21.9%,#03874a 22.5%,#008041 24.5%,#03863f 25.5%,#0fa34f 26.7%,#1db363 27.9%,#22b871 29.4%,#1bb36d 31%,#09a35f 32.5%,#009153 34%,#007e46 35.6%,#008242 36.2%,#006317 38.2%,#075f02 39.7%,#2a6100 41.7%,#336700 42.2%,#64a000 43.1%,#81b702 43.6%,#aac80d 44.5%,#d7df15 45.4%,#eae614 46.2%,#eed917 46.9%,#f4ba24 47.7%,#f96b28 48.9%,#f74f24 49.4%,#fc1b07 50.3%,#f91403 50.5%,#ea0f00 50.6%,#a20800 51.1%,#950800 51.2%,#8f0e00 52.1%,#8d2800 53.7%,#887200 57.1%,#848100 58.3%,#7a7e00 59.2%,#506a00 60.7%,#1e5f00 63.3%,#045f05 64.9%,#006339 68.3%,#00654f 69.8%,#005b5b 72.4%,#003058 76.8%,#002660 78.1%,#001384 81.4%,#070798 83%,#1400a0 84.5%,#1f0092 86%,#2d006b 89.4%,#2e005e 97.1%,#2e005e 99.7%,#2e005e 100%)"></i><i style="left:917px;width:2px;background:linear-gradient(#2896ad 0%,#2769ac 1.2%,#2655ad 1.5%,#2b44b1 1.7%,#353b9c 1.8%,#353390 2%,#332690 2.1%,#39198b 2.3%,#3f1571 2.5%,#3e146c 2.6%,#3b1172 2.8%,#2e0d86 2.9%,#201081 3.1%,#1d1777 3.2%,#1d1b76 3.4%,#1b1e7b 3.5%,#12208a 3.7%,#07248c 3.8%,#01327c 4.1%,#014472 5.1%,#014373 6.3%,#02377f 7.2%,#092e8c 7.5%,#142789 7.8%,#1d2074 8.3%,#1d127b 9%,#250884 9.5%,#2e0778 10.3%,#240984 11%,#1b1b6f 11.8%,#18216b 12.1%,#162572 12.3%,#0d2887 12.4%,#033186 12.6%,#004972 13%,#005c72 13.7%,#006874 14.9%,#006373 16.1%,#005472 16.7%,#01417b 17%,#062f89 17.2%,#19286f 17.3%,#1b206b 17.5%,#1d1677 17.6%,#2f0b81 17.8%,#3b1067 17.9%,#41186c 18.3%,#431d7e 18.4%,#352f8f 18.6%,#37448e 18.7%,#2d55ae 18.9%,#2673ac 19%,#278aab 19.2%,#28a0ae 19.5%,#28b4a9 20.1%,#28be98 21%,#1eb474 22.2%,#0fa25b 23.5%,#0ea257 24.4%,#22b871 26.4%,#28bd8b 28.4%,#28be90 29.9%,#25bb85 31.9%,#17b779 32.8%,#00a965 34%,#007642 35.3%,#006f3b 35.7%,#005f18 37.7%,#055f03 39.3%,#326300 41.9%,#3d6d00 42.3%,#6fa500 43.3%,#89ba01 43.7%,#bfd30e 44.9%,#dfe315 45.7%,#ebe513 46.3%,#eeda16 46.9%,#f3bb22 47.7%,#fa7f28 48.6%,#f75024 49.4%,#fc1c07 50.3%,#f91503 50.5%,#ec0f01 50.6%,#a20800 51.1%,#950800 51.2%,#8f0e00 52.1%,#8d2800 53.7%,#887300 57.1%,#848100 58.3%,#787d00 59.2%,#4e6a00 60.7%,#0d5f02 64.1%,#035f06 64.9%,#00664b 69.3%,#005c59 71.9%,#004358 74.5%,#002a59 77.1%,#02108a 81.6%,#070699 82.8%,#15009f 84.4%,#22008b 86.3%,#2d006d 89%,#2e005e 96.6%,#2e005e 100%)"></i><i style="left:919px;width:2px;background:linear-gradient(#2866ad 0%,#274faf 0.5%,#2a42b2 0.6%,#353193 0.9%,#3b1a8a 1.2%,#401671 1.4%,#3e136d 1.5%,#381077 1.7%,#270d86 1.8%,#1d127b 2%,#1b177a 2.1%,#10188f 2.3%,#03208a 2.5%,#012b7e 2.6%,#004270 3.2%,#005d72 4.4%,#006a74 6%,#005571 9.4%,#005471 10.6%,#007273 13.2%,#007b6d 14.7%,#007672 16.7%,#006273 17.6%,#005073 17.9%,#01417b 18.1%,#0f2c88 18.3%,#1b246b 18.4%,#1d1776 18.6%,#310b7b 18.7%,#3b1067 18.9%,#411872 19.2%,#32288e 19.3%,#36428e 19.5%,#3054ab 19.6%,#2671ad 19.8%,#2789ab 19.9%,#28a0ae 20.2%,#28b4aa 20.9%,#28be96 22.1%,#25bb81 23.3%,#24ba7d 24.5%,#28bd9b 27.1%,#28baa2 29.1%,#26be99 31.7%,#20bb8d 32.7%,#03af70 33.9%,#009a5e 34.4%,#006f3e 35.1%,#006433 35.6%,#025f0c 38.2%,#095f02 39.1%,#266200 40.6%,#326700 41.4%,#386800 41.9%,#558a00 42.6%,#85b700 43.6%,#c5d60e 45.1%,#dfe314 45.7%,#eae513 46.3%,#eeda15 46.9%,#f4b424 47.9%,#fa7728 48.8%,#f75124 49.4%,#fc1d08 50.3%,#f91603 50.5%,#ed1001 50.6%,#a20800 51.1%,#950800 51.2%,#8f0e00 52.1%,#8d2900 53.7%,#887400 57.1%,#848200 58.3%,#767c00 59.2%,#4d6a00 60.7%,#1a5f00 63.3%,#045f03 64.6%,#006338 67.9%,#00654f 69.5%,#005b5b 72.1%,#003a56 75.5%,#002a59 77%,#020f8b 81.4%,#0b049b 83%,#15009f 84.2%,#230089 86.2%,#2d006c 88.8%,#2e005e 96.5%,#2e005e 99.8%,#2e005e 100%)"></i><i style="left:921px;width:2px;background:linear-gradient(#372695 0%,#3b1d8f 0.2%,#3f187a 0.3%,#3e1470 0.5%,#3b106e 0.6%,#300b7e 0.8%,#240a84 0.9%,#1d0f81 1.1%,#081694 1.4%,#002682 1.7%,#003b72 2.3%,#015d74 3.2%,#047a7d 4.1%,#078378 5.1%,#018271 6.6%,#007c6e 7.5%,#007372 10.1%,#007a6e 12.1%,#00825f 15.5%,#007c6c 17.5%,#006a75 18.4%,#005b72 18.7%,#004c73 18.9%,#023883 19%,#19286e 19.2%,#1c1c70 19.3%,#280c86 19.5%,#3b1068 19.6%,#411871 19.9%,#342490 20.1%,#363f8e 20.2%,#35529e 20.4%,#266aad 20.6%,#2782ac 20.7%,#2794ac 20.9%,#28a9ae 21.3%,#28b8a5 22.2%,#28bd99 23.8%,#28bba1 25.8%,#27b0ac 27.8%,#21a2a7 29%,#21a3a3 29.6%,#1cac99 30.8%,#11af8b 32.4%,#08a77a 33.1%,#00925f 33.9%,#006a3c 34.8%,#00612c 35.7%,#035f04 38.3%,#1f6300 39.9%,#408300 41.1%,#457c00 41.7%,#7fb501 43.3%,#abc908 44.5%,#dfe213 45.7%,#eae512 46.3%,#eeda14 46.9%,#f4b423 47.9%,#fa7828 48.8%,#f75225 49.4%,#fc1e08 50.3%,#fa1604 50.5%,#ee1001 50.6%,#a30800 51.1%,#950800 51.2%,#8f0e00 52.1%,#8d2a00 53.7%,#887500 57.1%,#848200 58.3%,#747b00 59.2%,#4b6900 60.7%,#185f00 63.3%,#035f05 64.6%,#00622e 67.2%,#00664d 69.2%,#005b5a 71.8%,#002f58 76.2%,#002561 77.5%,#011286 80.8%,#080699 82.4%,#15009f 83.9%,#290079 87.3%,#2e006b 88.8%,#2e005e 96.5%,#2e005e 99.8%,#2e005e 100%)"></i><i style="left:923px;width:2px;background:linear-gradient(#210988 0%,#110c99 0.3%,#021692 0.6%,#003377 1.5%,#035377 2.1%,#0e7c8f 2.9%,#18a2a4 3.8%,#21aba3 4.8%,#1eaf9b 6%,#15ab92 6.6%,#14a085 7.1%,#0c9d7f 7.7%,#078b6f 8.3%,#008268 9.8%,#008361 12.4%,#048a5c 14%,#079a65 15.2%,#07935f 16%,#04895a 16.6%,#00825b 17.3%,#007b6d 18.6%,#006774 19.3%,#005273 19.6%,#01407d 19.8%,#152b79 19.9%,#1c206d 20.1%,#211182 20.2%,#3a0f6c 20.4%,#41186c 20.7%,#3e1d89 20.9%,#35328e 21%,#37468d 21.2%,#3354a3 21.3%,#266aad 21.5%,#278fab 21.8%,#28a5af 22.2%,#28b3ab 23.2%,#28b3aa 25.2%,#28a8ae 26.1%,#2796ab 26.7%,#2170a7 27.3%,#1c65a0 27.8%,#15608d 28.1%,#146789 28.4%,#0b6f85 28.8%,#076b73 29.3%,#05776a 30.5%,#01775a 32.5%,#005f23 35.9%,#035f05 37.9%,#176401 39.1%,#307f00 40%,#4fa101 41%,#58a301 41.4%,#5ea301 41.9%,#78b504 42.8%,#a6c609 44.3%,#cbd90e 45.2%,#dee212 45.7%,#eae512 46.3%,#eeda14 46.9%,#f4b421 47.9%,#fa8228 48.6%,#f75325 49.4%,#fc1f09 50.3%,#fa1704 50.5%,#f01101 50.6%,#a30800 51.1%,#950800 51.2%,#8f0e00 52.1%,#8d2b00 53.7%,#877600 57.1%,#838200 58.3%,#727a00 59.2%,#506a00 60.4%,#1d5f00 63%,#045f03 64.3%,#006338 67.6%,#00654f 69.2%,#005a5b 71.8%,#003857 75.2%,#00295a 76.7%,#00167f 80.1%,#070699 82.1%,#15009f 83.6%,#23008a 85.6%,#2d006d 88.2%,#2e005e 95.9%,#2e005e 99.2%,#2e005e 100%)"></i><i style="left:925px;width:2px;background:linear-gradient(#01178e 0%,#01327e 0.9%,#054381 1.2%,#16779b 2%,#238da9 2.8%,#2892ac 4.8%,#27afab 6.7%,#23b7a1 7.7%,#1db494 8.6%,#15ad88 9%,#14a27c 9.5%,#079c6f 11%,#0f9f70 12.6%,#16b280 13.5%,#21ba8e 14.7%,#21b98a 16%,#19b27d 16.7%,#058959 17.9%,#00835e 18.6%,#007a6e 19.5%,#006473 20.2%,#005a72 20.4%,#014878 20.6%,#09318b 20.7%,#1b296c 20.9%,#1d1c72 21%,#280c86 21.2%,#3b106a 21.3%,#3e156b 21.6%,#411871 21.8%,#391e90 21.9%,#35408e 22.2%,#374c8e 22.4%,#35559f 22.5%,#2b5db2 22.7%,#2776ae 23%,#278bab 23.5%,#2792ab 24.1%,#2789ac 24.7%,#266dad 25.3%,#2a55ae 25.6%,#32479a 25.9%,#303398 26.2%,#1f20aa 26.5%,#1723a6 26.7%,#07457d 27.3%,#046472 27.8%,#007065 28.7%,#006d4a 32.1%,#00632c 34.7%,#015e10 36.7%,#075f02 37.9%,#166b01 38.7%,#42a101 40.2%,#5db008 41.1%,#78b70c 42.6%,#a1c40e 44.2%,#c5d50c 45.1%,#dee211 45.7%,#eae511 46.3%,#eeda13 46.9%,#f3bb1d 47.7%,#f98e28 48.5%,#f75425 49.4%,#fc1f0a 50.3%,#fb1805 50.5%,#f11101 50.6%,#a40900 51.1%,#950800 51.2%,#8f0e00 52.1%,#8d2b00 53.7%,#896900 56.3%,#867e00 57.5%,#808100 58.4%,#6b7700 59.4%,#4b6900 60.6%,#175f00 63.2%,#035f06 64.4%,#00664d 68.9%,#005b5b 71.5%,#003956 74.8%,#002959 76.4%,#00177f 79.8%,#070798 81.7%,#1400a0 83.3%,#22008b 85.3%,#2d006d 87.9%,#2e005e 95.6%,#2e005e 100%)"></i><i style="left:927px;width:2px;background:linear-gradient(#012984 0%,#073a8a 0.5%,#1d65a3 1.2%,#2672a9 1.8%,#2859ae 3.8%,#2859ae 4.8%,#286dab 6%,#28a5ad 8%,#27b5a7 8.9%,#21bb97 10.9%,#24bc99 12.4%,#28b8a4 15%,#27bba0 16.6%,#23bc90 17.5%,#19af77 18.1%,#08925c 18.7%,#018558 19.2%,#00796f 20.4%,#006473 21.2%,#005a73 21.3%,#014a77 21.5%,#033886 21.6%,#172c73 21.8%,#1b266a 21.9%,#1f107f 22.2%,#320b7a 22.4%,#3b1069 22.5%,#3e146d 23.8%,#3e146a 25%,#3e146d 25.2%,#39137c 25.3%,#291388 25.5%,#201b78 25.6%,#1d2071 25.8%,#192979 25.9%,#0d328a 26.1%,#024d76 26.4%,#01626d 26.7%,#007168 27.3%,#007552 28.8%,#006f3d 30.4%,#00652b 33.7%,#015f0e 36.3%,#086202 37.6%,#1b7e01 38.5%,#359f01 39.4%,#4cad09 40.3%,#61b312 41.3%,#7cba14 42.8%,#a6c711 44.3%,#cbd90e 45.2%,#dee210 45.7%,#eae510 46.3%,#eeda13 46.9%,#f4b31f 47.9%,#fa8428 48.6%,#f74c22 49.5%,#fb1805 50.5%,#f21201 50.6%,#a40900 51.1%,#950800 51.2%,#8f0f00 52.1%,#8d2c00 53.7%,#896a00 56.3%,#867f00 57.5%,#7f8000 58.4%,#687500 59.4%,#496900 60.6%,#155f01 63.2%,#045f03 64.1%,#00633a 67.5%,#00654f 69%,#00575c 71.6%,#003557 75%,#00275e 76.5%,#011385 79.9%,#070798 81.4%,#1400a0 83%,#1f0091 84.5%,#2e006b 87.9%,#2e005e 95.6%,#2e005e 100%)"></i><i style="left:929px;width:2px;background:linear-gradient(#15479f 0%,#2555ad 0.8%,#2949b1 1.7%,#2e3ab4 2.3%,#3b2caa 3.5%,#3f2a99 4.3%,#392494 5.2%,#353391 6.4%,#34399a 6.7%,#2d44b1 7.1%,#2760ac 7.5%,#2886aa 8.4%,#28a6ae 9.7%,#28b4aa 10.9%,#28b1ab 12.9%,#28a1ae 14.9%,#28a7ae 16.4%,#28b9a4 17.6%,#26bc94 18.4%,#1aaf77 19%,#088f59 19.6%,#018457 20.1%,#007a6e 21.3%,#006974 22.2%,#015574 22.7%,#05338a 23.3%,#0c2f8a 23.5%,#132d7d 23.9%,#083089 24.4%,#014977 24.8%,#015a70 25.2%,#006d6e 25.8%,#00785e 27%,#007339 28.5%,#057833 30.1%,#02722c 32.1%,#00631d 34%,#036006 36.7%,#0c7203 37.4%,#279f03 38.7%,#3daa09 39.6%,#5cb318 41.1%,#76b919 42.6%,#9fc315 44.2%,#d4dd0f 45.4%,#e9e610 46.2%,#eed912 46.9%,#f3ba1b 47.7%,#fa8428 48.6%,#f74d22 49.5%,#fc1905 50.5%,#f41201 50.6%,#dd0d00 50.8%,#a50900 51.1%,#950800 51.2%,#900900 51.7%,#8c2200 53.2%,#8a6200 55.8%,#867e00 57.4%,#808100 58.3%,#6f7900 59%,#4d6a00 60.3%,#195f00 62.9%,#045f05 64.1%,#006230 66.7%,#00654f 68.7%,#00595c 71.3%,#003657 74.7%,#00275e 76.2%,#001384 79.6%,#060798 81.1%,#1400a0 82.7%,#1f0091 84.2%,#2e006b 87.6%,#2e005e 95.2%,#2e005e 99.7%,#2e005e 100%)"></i><i style="left:931px;width:2px;background:linear-gradient(#2745b0 0%,#3133b4 0.8%,#44289d 1.5%,#4d277f 2.5%,#461d70 3.7%,#3e146a 4.1%,#35096a 4.8%,#280783 5.4%,#210a83 6.3%,#280986 6.7%,#37117b 7.1%,#3d1371 7.2%,#3e146c 7.7%,#3e1571 7.8%,#3b1885 8%,#362091 8.1%,#35348e 8.4%,#353f95 8.7%,#2e45a8 8.9%,#274fb0 9%,#2768ab 9.4%,#2786aa 10.1%,#2893ac 11%,#2892ac 12.6%,#277eaa 14.1%,#276bab 15.3%,#2770ab 16.3%,#28a4af 17.8%,#28b9a4 18.7%,#26bc93 19.3%,#19ad73 19.9%,#088e57 20.6%,#018258 21.2%,#007f68 22.1%,#007771 23.6%,#007b63 25.6%,#00794c 26.5%,#017937 27.5%,#068338 28.1%,#0c9241 28.5%,#129748 28.8%,#15a954 29.3%,#1fae5f 30.5%,#18a950 32.1%,#0f9e40 32.8%,#017e21 34%,#016c11 35.3%,#036908 36.2%,#0c8703 37.1%,#1fa305 38%,#3bac0f 39.6%,#5eb41e 41.6%,#7fbc1c 43.1%,#a4c616 44.3%,#dbe00f 45.6%,#e9e60f 46.2%,#eed912 46.9%,#f4b21d 47.9%,#fa7b28 48.8%,#f74d22 49.5%,#fc1906 50.5%,#f51202 50.6%,#de0d00 50.8%,#a50900 51.1%,#960800 51.2%,#900a00 51.7%,#8c2300 53.2%,#8a6300 55.8%,#857f00 57.4%,#7e8000 58.3%,#717900 58.9%,#486800 60.4%,#145f01 63%,#045f04 64%,#00622f 66.6%,#00654f 68.6%,#00585c 71.2%,#003557 74.5%,#00285b 75.8%,#001582 79.1%,#050797 80.7%,#16009e 82.7%,#290077 86%,#2e006a 87.6%,#2e005e 95.2%,#2e005e 99.7%,#2e005e 100%)"></i><i style="left:933px;width:2px;background:linear-gradient(#4229a0 0%,#4e287e 0.8%,#4c2575 2%,#370b64 3.2%,#300267 3.8%,#29017b 4.1%,#1c0197 4.4%,#0e03a1 4.8%,#01178f 5.4%,#00287f 6.3%,#012e7b 7.2%,#022584 7.8%,#07208b 8%,#111e8b 8.1%,#1a1e7d 8.3%,#1d1d76 8.4%,#1d1677 8.7%,#20127f 8.9%,#291088 9%,#351184 9.2%,#3c1376 9.4%,#3e1473 9.5%,#3d1478 9.7%,#31198e 10%,#353593 10.4%,#323c9d 10.7%,#2944ad 11.2%,#224eab 12.1%,#2a39ae 13.3%,#2b2aa3 14%,#2b179d 14.4%,#351491 14.9%,#3e1476 15.6%,#3e146f 16.6%,#3d1575 16.7%,#3a1e90 17%,#35458f 17.6%,#334e9e 17.8%,#275bb0 17.9%,#277fab 18.3%,#2797ac 18.6%,#28b4aa 19.3%,#27bc96 20.1%,#1eb379 20.7%,#119e61 21.2%,#058852 21.8%,#008259 22.7%,#00805e 23.9%,#007e55 24.8%,#017c3d 26.1%,#06843a 26.7%,#14a04d 27.5%,#19ac59 27.8%,#25b978 28.7%,#27bc86 29.6%,#28bc84 30.8%,#25b86b 32.4%,#1ab151 33.3%,#06a128 34.5%,#068c0b 36%,#0ea006 37%,#23ab0d 38.2%,#47b11b 40.8%,#67b71f 42.3%,#a3c618 44.3%,#dbe10e 45.6%,#e9e60f 46.2%,#eddd11 46.8%,#f3b91a 47.7%,#fa8427 48.6%,#f75725 49.4%,#fc220b 50.3%,#fc1a06 50.5%,#f51302 50.6%,#df0e00 50.8%,#a60900 51.1%,#960800 51.2%,#900a00 51.7%,#8c1c00 52.9%,#8c4f00 54.9%,#877a00 56.9%,#848200 57.8%,#737a00 58.7%,#496900 60.3%,#155f01 62.9%,#045f03 63.8%,#00622f 66.4%,#00654f 68.4%,#00585c 71%,#003457 74.4%,#00275d 75.6%,#001484 79%,#060798 80.5%,#13009f 82.1%,#1f0092 83.6%,#2e006b 87%,#2e005e 94.6%,#2e005e 99.1%,#2e005e 100%)"></i><i style="left:935px;width:2px;background:linear-gradient(#4f2878 0%,#492172 1.2%,#320561 2.5%,#2e0061 3.1%,#2d0069 3.4%,#1f0091 3.8%,#0f03a0 4.1%,#031097 4.4%,#002680 5.1%,#003f71 6%,#004e70 6.9%,#004d70 8.4%,#014173 9.4%,#023081 10%,#062b8a 10.1%,#12238d 10.4%,#181e83 10.9%,#131993 12.4%,#0b1f93 13.7%,#012384 14.6%,#012e7d 16.1%,#022884 16.6%,#0e208b 16.9%,#1c1f73 17.2%,#1d1776 17.5%,#1f0e81 17.6%,#2f0b80 17.8%,#3b106b 17.9%,#3e156b 18.3%,#411875 18.4%,#342291 18.6%,#36498c 18.9%,#3054a6 19%,#256cac 19.2%,#2793ab 19.5%,#28aaad 19.9%,#28bca0 20.7%,#24bb89 21.3%,#19ae6e 21.9%,#129e5e 22.4%,#089453 22.9%,#07884c 23.3%,#078443 24.8%,#0c9648 25.6%,#129a4c 25.9%,#19ac5a 26.4%,#26ba7b 27.3%,#28bd95 28.1%,#27bba0 29%,#22b79e 30.2%,#20b590 31%,#18af75 31.9%,#0eac41 33.9%,#0da91e 35.4%,#0da811 36.3%,#3db01c 40.8%,#62b51e 42.3%,#a2c519 44.3%,#d0db10 45.2%,#e8e60e 46%,#eddd11 46.8%,#f2c018 47.5%,#fa7b27 48.8%,#f8461f 49.7%,#fc1b06 50.5%,#f61302 50.6%,#e00e00 50.8%,#a60900 51.1%,#960800 51.2%,#900a00 51.7%,#8c1d00 52.9%,#8a6000 55.5%,#867e00 57.1%,#808100 58%,#707900 58.7%,#4e6a00 60%,#195f00 62.6%,#035f05 63.8%,#00654f 68.3%,#00575b 70.9%,#003258 74.2%,#00275e 75.5%,#011286 78.8%,#080699 80.4%,#14009f 81.9%,#200090 83.4%,#2b0071 86%,#2e0069 87.6%,#2e005e 95.2%,#2e005e 99.7%,#2e005e 100%)"></i><i style="left:937px;width:2px;background:linear-gradient(#492172 0%,#300360 1.5%,#2e005f 2.5%,#2d006b 2.9%,#240085 3.2%,#1d0095 3.4%,#0c05a1 3.7%,#021d90 4.1%,#053189 4.6%,#075b86 5.5%,#076581 6.1%,#016e78 7.4%,#006974 8.9%,#00466f 12.3%,#003573 13.8%,#003772 15%,#005270 17%,#004e71 17.8%,#014276 18.1%,#01397d 18.3%,#0d2a8a 18.4%,#1b276e 18.6%,#1c1f6f 18.7%,#1e157a 18.9%,#310b7d 19%,#3b1068 19.2%,#3e146a 19.3%,#411875 19.5%,#32288d 19.6%,#35408d 19.8%,#375190 19.9%,#2760b1 20.1%,#2791ab 20.4%,#27a4ae 20.7%,#28b6a7 21.3%,#27bd92 22.2%,#21b476 23.2%,#1eb16b 24.4%,#21b671 25.3%,#28bc99 26.8%,#27b6a7 27.8%,#25a7a8 28.2%,#218da1 28.7%,#1c85a0 29%,#157a90 29.3%,#108987 29.9%,#098d7e 30.2%,#057d59 31.1%,#027741 32.4%,#028338 33.3%,#04a232 34.2%,#13ac24 35.7%,#1dae1b 38.3%,#2baf19 40.3%,#3bb01b 41.3%,#6ab61b 42.8%,#a1c518 44.3%,#d2dc11 45.2%,#eae50e 46.2%,#eddc11 46.8%,#f3b81a 47.7%,#f97327 48.9%,#f93e1b 49.8%,#fc1b07 50.5%,#f61402 50.6%,#e00e00 50.8%,#a60900 51.1%,#960800 51.2%,#900a00 51.7%,#8c1e00 52.9%,#8a6200 55.5%,#867f00 57.1%,#7f8000 58%,#687500 58.9%,#496900 60.1%,#145f01 62.7%,#035f05 63.7%,#00654f 68.1%,#00565b 70.7%,#003158 74.1%,#002660 75.3%,#011188 78.7%,#070798 79.9%,#1300a0 81.4%,#1f0092 83%,#2e006b 86.3%,#2e005e 96.5%,#2e005e 99.8%,#2e005e 100%)"></i><i style="left:939px;width:2px;background:linear-gradient(#330762 0%,#2e005e 1.2%,#2e0064 2.1%,#2b0071 2.5%,#28007a 2.6%,#1c0098 2.9%,#0f06a4 3.2%,#0b229e 3.7%,#1b4ba6 4.4%,#2172a6 5.4%,#2092a6 6.6%,#159d9f 7.2%,#11968e 7.7%,#0a9286 8%,#058476 8.4%,#007b6f 9.4%,#007074 10.9%,#00456f 13.5%,#003b72 14.4%,#01437a 15%,#045680 15.6%,#006274 16.9%,#006a75 17.8%,#006173 18.7%,#005a72 19%,#014478 19.3%,#07318a 19.5%,#1b2c6d 19.6%,#1d226d 19.8%,#20187b 19.9%,#381077 20.1%,#3d136a 20.2%,#3e156c 20.4%,#34198e 20.6%,#354b8b 20.9%,#3256a2 21%,#256dac 21.2%,#2685ac 21.3%,#2796ac 21.5%,#27a5ae 21.8%,#28b6a7 22.5%,#28bd97 24.1%,#28bc9d 25.3%,#27b2ab 26.5%,#269faa 27%,#2393a7 27.1%,#1d62a6 27.6%,#154c95 27.9%,#134b8e 28.1%,#0c5687 28.4%,#076570 28.7%,#04746e 29%,#01735e 29.4%,#006c38 31.4%,#006723 33.4%,#007023 33.7%,#019e2b 34.4%,#06a82d 34.7%,#17ad30 35.6%,#1baf24 38.2%,#1dad17 40.2%,#2cad15 41.1%,#4cb018 42%,#94c017 44%,#b2cd17 44.6%,#dae00f 45.4%,#eae50e 46.2%,#eddc11 46.8%,#f2bf17 47.5%,#fa7b26 48.8%,#f8471f 49.7%,#fc1b07 50.5%,#f61402 50.6%,#e00e00 50.8%,#a50900 51.1%,#950800 51.2%,#900a00 51.7%,#8c1f00 52.9%,#8a6400 55.5%,#867c00 56.7%,#818200 57.7%,#737a00 58.4%,#506b00 59.7%,#1b5f00 62.3%,#045f04 63.5%,#00643f 66.9%,#006450 68.1%,#005b5b 70.1%,#003557 73.5%,#00285c 74.7%,#001483 78.1%,#070799 79.6%,#1400a0 81.1%,#1f0092 82.7%,#2e006b 86%,#2e005e 96.2%,#2e005e 99.5%,#2e005e 100%)"></i><i style="left:941px;width:2px;background:linear-gradient(#2e005e 0%,#2e0062 1.2%,#2c006c 1.7%,#230087 2.1%,#1602a2 2.6%,#1515ad 3.1%,#2337b0 3.7%,#2865ad 5.7%,#2790ab 6.9%,#26a9ad 7.7%,#21aea0 8.3%,#16ab94 8.7%,#109e84 9.2%,#068a71 9.8%,#007f6b 10.7%,#007075 12.3%,#00496f 13.8%,#004375 14.3%,#08518f 14.7%,#1666a0 15.2%,#1a7fa1 16%,#13899c 16.6%,#098c8c 17%,#038177 17.5%,#007b6d 18.3%,#007672 19.2%,#006574 19.9%,#015473 20.2%,#01467b 20.4%,#0a318c 20.6%,#1b2d6c 20.7%,#1d236d 20.9%,#20197b 21%,#35107e 21.2%,#3d136a 21.3%,#3e156e 21.5%,#341a8d 21.6%,#34458c 21.9%,#35518f 22.1%,#2c56ac 22.2%,#236bac 22.4%,#278cab 22.7%,#27a0ad 23.2%,#28abac 24.1%,#27a7ac 25%,#2699ab 25.6%,#216ea9 26.1%,#2551ab 26.4%,#2341a8 26.5%,#1a32a6 26.7%,#123097 27%,#074e7b 27.5%,#02676f 27.8%,#007264 28.2%,#007245 29.4%,#006e31 30.4%,#017129 31.9%,#027428 32.8%,#03852b 33.6%,#07a633 34.4%,#1caf3b 35.9%,#18ad29 38.5%,#15ab11 40.5%,#27ab0f 41.3%,#4cae11 42.2%,#9ac214 44.2%,#ccda13 45.1%,#dee20d 45.6%,#eae50e 46.2%,#eedb11 46.8%,#f2be18 47.5%,#fa7b26 48.8%,#f8471f 49.7%,#fc1c07 50.5%,#f61403 50.6%,#e00f00 50.8%,#a50900 51.1%,#950800 51.2%,#8d1600 52.5%,#896e00 55.8%,#858000 57.1%,#7b7f00 58%,#516b00 59.5%,#1c5f00 62.1%,#045f04 63.3%,#00643f 66.7%,#00664e 67.6%,#00575b 70.2%,#003058 73.6%,#00275d 74.5%,#011386 77.9%,#08069a 79.4%,#1500a0 81%,#200090 82.5%,#2c0070 85.1%,#2e0068 87.1%,#2e005e 94.8%,#2e005e 99.2%,#2e005e 100%)"></i><i style="left:943px;width:2px;background:linear-gradient(#2c006a 0%,#28007a 0.9%,#19009d 1.8%,#1706a6 2.3%,#3026b5 3.1%,#342cb7 4%,#2c38b5 5.2%,#2857ae 6.4%,#288aaa 7.7%,#27abad 8.6%,#23b6a1 9.4%,#18b092 10.1%,#12a083 10.6%,#08987c 11%,#058772 11.5%,#007774 12.4%,#005071 13.7%,#014b7c 14%,#10559d 14.4%,#2261ab 14.9%,#2774aa 15.6%,#24a6ad 16.9%,#20aca6 17.2%,#15a994 17.6%,#058b6c 18.6%,#008265 19.2%,#007771 20.4%,#006374 21.2%,#015b73 21.3%,#014d75 21.5%,#024081 21.6%,#133287 21.8%,#1c2e6d 21.9%,#1d266c 22.1%,#221880 22.4%,#301189 22.5%,#3d1373 22.7%,#3e1470 22.9%,#32158b 23.2%,#2b1d89 23.3%,#2f308a 23.6%,#353c8d 23.9%,#353e8e 24.4%,#2a258b 25%,#271f95 25.2%,#2418a9 25.3%,#2117ab 25.5%,#212198 25.6%,#1a2b84 25.9%,#112f8b 26.1%,#083d86 26.2%,#035974 26.5%,#006e6b 27%,#007658 27.9%,#007239 28.8%,#02772f 29.6%,#057b2f 29.9%,#098d36 30.4%,#10943e 31%,#14a648 31.7%,#1cb04a 35.1%,#1aae3d 37.1%,#10aa24 39.1%,#0ca90e 40.3%,#1aa707 41.1%,#6db40a 43.1%,#a2c411 44.3%,#d6de11 45.2%,#e9e70d 46%,#eedb11 46.8%,#f3b71a 47.7%,#f97326 48.9%,#f8481f 49.7%,#fc1c07 50.5%,#f61503 50.6%,#e00f00 50.8%,#a40900 51.1%,#950800 51.2%,#8d1700 52.5%,#8a5e00 55.1%,#867d00 56.6%,#808100 57.5%,#717900 58.3%,#4f6a00 59.5%,#195f00 62.1%,#035f06 63.3%,#006442 66.7%,#00654f 67.6%,#005b5b 69.6%,#003457 73%,#00275d 74.2%,#011387 77.6%,#060799 78.8%,#1300a0 80.4%,#1e0095 81.9%,#2d006b 85.3%,#2e005e 95.4%,#2e005e 99.8%,#2e005e 100%)"></i><i style="left:945px;width:2px;background:linear-gradient(#11039d 0%,#1202a3 1.5%,#1f0aa7 2%,#3d23a4 2.6%,#492893 3.5%,#47268d 5.1%,#3d2293 6%,#372d91 6.6%,#3a3795 6.9%,#393b9b 7.1%,#323ead 7.2%,#2a44b4 7.4%,#276bac 8%,#2893ac 8.9%,#28afac 9.8%,#24b6a3 10.7%,#19ab9b 11.7%,#129c96 12.1%,#056187 13.3%,#08578f 13.7%,#1e52aa 14.3%,#2751af 14.7%,#2857af 15.5%,#286eab 16.1%,#2894ac 16.9%,#27b1ac 17.5%,#21b89a 18.3%,#19b188 18.7%,#0f9f71 19.2%,#068b60 19.6%,#008260 20.4%,#007871 21.6%,#015e73 22.9%,#014a79 23.3%,#074385 23.9%,#054981 24.5%,#015571 25%,#016a70 25.6%,#007764 26.5%,#007749 27.5%,#017935 28.2%,#057e34 28.5%,#0c913c 29%,#139d46 29.3%,#18a950 29.6%,#23b667 30.5%,#27b970 31.7%,#26b764 34.4%,#16ae45 37%,#07a619 39.6%,#089c05 40.5%,#189403 41.1%,#39a402 41.9%,#8dbd09 43.9%,#bdd211 44.8%,#d7df10 45.2%,#eae50e 46.2%,#eedb11 46.8%,#f2be18 47.5%,#fa7c25 48.8%,#f8481f 49.7%,#fc1d08 50.5%,#f61503 50.6%,#e00f00 50.8%,#a30900 51.1%,#940800 51.2%,#8d1800 52.5%,#8a6100 55.1%,#867f00 56.6%,#7f8000 57.5%,#697600 58.4%,#436700 60%,#0d5f02 62.6%,#035f05 63.2%,#006335 65.8%,#00654f 67.3%,#005c5a 69.3%,#003557 72.7%,#00275d 73.9%,#011288 77.3%,#09069b 78.8%,#16009f 80.4%,#290079 83.7%,#2e006b 85.3%,#2e005e 95.4%,#2e005e 99.8%,#2e005e 100%)"></i><i style="left:947px;width:2px;background:linear-gradient(#021593 0%,#0808a2 0.8%,#1c08a6 1.4%,#442392 2.1%,#4e2882 2.8%,#482072 4%,#3e146a 4.6%,#3c1068 5.2%,#340762 5.7%,#350964 6.6%,#3e146a 7.1%,#41186d 7.8%,#441d7b 8%,#3b2292 8.1%,#35368f 8.4%,#353d8f 8.6%,#3344a0 8.7%,#2751b0 8.9%,#2663ab 9%,#2780aa 9.5%,#289cae 10.4%,#28a6af 11.3%,#269bad 12.1%,#207ea5 12.9%,#1c52a9 13.7%,#293db3 14.6%,#2a3bb4 15.3%,#2855af 16.3%,#2887a9 17.2%,#28a9ae 17.9%,#27b8a4 18.6%,#23bb93 19.3%,#17ad79 19.9%,#12a06a 20.2%,#0a9862 20.6%,#068a5a 20.9%,#008260 21.8%,#007a6e 23.3%,#00796a 24.8%,#007b5e 25.8%,#017a3c 27%,#058139 27.5%,#129d49 28.1%,#19ab56 28.4%,#25b973 29.1%,#28bd8b 30.1%,#27be93 31%,#25bc88 32.5%,#24b971 34.5%,#07a836 37.9%,#039816 39.4%,#068604 40.3%,#187b01 41.1%,#489800 42.3%,#8ebc04 43.9%,#cfdb0f 45.1%,#dfe20d 45.6%,#eae50e 46.2%,#eedb12 46.8%,#f2bf19 47.5%,#f96c26 49.1%,#f9411c 49.8%,#fc1d08 50.5%,#f61503 50.6%,#e00f00 50.8%,#a20900 51.1%,#940800 51.2%,#8d1900 52.5%,#8a6400 55.1%,#867c00 56.3%,#818200 57.2%,#737a00 58%,#4a6900 59.5%,#145f01 62.1%,#035f05 63%,#006335 65.6%,#00654f 67.2%,#005b5a 69.2%,#003358 72.5%,#00265f 73.8%,#01118b 77.1%,#08069a 78.4%,#1500a0 79.9%,#28007a 83.3%,#2e006b 84.8%,#2e005e 94.9%,#2e005e 99.4%,#2e005e 100%)"></i><i style="left:949px;width:2px;background:linear-gradient(#1021a4 0%,#1b12ac 0.6%,#3117a3 1.1%,#492489 1.7%,#4e267a 2.3%,#3b1067 3.5%,#330662 4%,#320567 4.1%,#230180 4.4%,#160a87 4.9%,#100d91 5.1%,#0a1095 5.2%,#002285 5.8%,#002f7b 6.7%,#012c7e 7.4%,#07208a 7.7%,#121e82 7.8%,#1b1f71 8%,#1d1b72 8.3%,#1d1677 8.4%,#200c84 8.6%,#330b77 8.7%,#3b1069 8.9%,#3e156b 9.2%,#411871 9.4%,#3a1d90 9.5%,#342d8f 9.7%,#35408d 10%,#35479b 10.1%,#2951af 10.3%,#2662ab 10.4%,#2779aa 10.9%,#2882a9 11.5%,#2878a9 12.3%,#283fb1 13.8%,#322db8 14.4%,#382ab4 15.2%,#2e32b7 16%,#2862ad 17.2%,#288dab 18.1%,#28a8ae 18.9%,#27baa2 19.8%,#22bb8e 20.6%,#17ad74 21.2%,#139f67 21.5%,#0c9b61 21.8%,#078c57 22.1%,#018259 23.3%,#007f56 24.5%,#017d48 25.5%,#068440 26.2%,#0d9547 26.7%,#1aad5c 27.3%,#27bc83 28.2%,#28bd9a 29%,#24b8a1 29.9%,#1dae97 30.8%,#14a88b 31.4%,#10a07d 32.4%,#11ae6d 34.4%,#0baf5a 35.9%,#02a23a 37.4%,#037d10 39.4%,#0a6e02 40.3%,#1e6800 41.3%,#589300 42.8%,#97be01 44%,#d8df0e 45.2%,#eae50f 46.2%,#eedb12 46.8%,#f2bf19 47.5%,#f96d26 49.1%,#f9421d 49.8%,#fc1e08 50.5%,#f61603 50.6%,#df0f00 50.8%,#a10900 51.1%,#930800 51.2%,#8e1300 52.1%,#8e3500 53.4%,#8a6300 54.9%,#867c00 56.1%,#828200 57.1%,#707900 58%,#4e6a00 59.2%,#185f00 61.8%,#045f03 62.7%,#006232 65.3%,#00664e 66.9%,#00555b 69.5%,#003657 72.1%,#00275c 73.3%,#011289 76.7%,#07079a 77.9%,#1400a0 79.4%,#250085 82.1%,#2c006e 84%,#2e005f 91.7%,#2e005e 99.4%,#2e005e 100%)"></i><i style="left:951px;width:2px;background:linear-gradient(#3128b6 0%,#3b23a9 0.5%,#4b2684 1.2%,#4a2278 1.5%,#340762 2.8%,#300266 3.1%,#230180 3.4%,#1e0284 3.5%,#0e0997 3.8%,#011b8c 4.3%,#003378 4.9%,#004c71 5.7%,#005b72 6.6%,#005c72 7.5%,#004b71 8.7%,#01397b 9.2%,#062b89 9.4%,#182679 9.5%,#1c236c 9.7%,#1d1678 10%,#280c86 10.1%,#3b106e 10.3%,#3e146a 10.7%,#3e1570 10.9%,#3a1887 11%,#342192 11.2%,#342d8f 11.3%,#35398e 11.8%,#363b95 12.3%,#363ca3 12.7%,#3e2796 14%,#432189 14.6%,#492178 15.5%,#48217a 16.4%,#3b2393 17.2%,#353290 17.6%,#333b9b 17.9%,#2d41a8 18.1%,#2649ad 18.3%,#2261a7 18.6%,#2789a9 19.2%,#28a8ad 20.1%,#27baa1 21%,#21b988 21.9%,#1ab176 22.5%,#14a064 23%,#0e9a57 24.5%,#149f58 25.5%,#19ae62 25.9%,#25ba7f 26.8%,#28bc9d 27.8%,#24b2a8 28.7%,#16969b 29.4%,#128d8d 29.8%,#08877b 30.2%,#067a6a 30.5%,#00714f 32.5%,#017547 34%,#019648 36%,#016c15 38.7%,#056303 39.9%,#1f5f00 41.1%,#306a00 41.7%,#6e9c00 43.3%,#a3c401 44.2%,#dce10e 45.4%,#eae50f 46.2%,#eedc12 46.8%,#f3b91b 47.7%,#fa7627 48.9%,#f74b21 49.7%,#fc1e08 50.5%,#f61603 50.6%,#df1000 50.8%,#9f0900 51.1%,#930900 51.2%,#8e1400 52.1%,#8a6200 54.8%,#867b00 56%,#828200 56.9%,#717900 57.8%,#486800 59.4%,#125f01 62%,#035f05 62.7%,#006335 65.3%,#00654f 66.9%,#005a5b 68.9%,#003058 72.2%,#00265f 73.2%,#001881 75.8%,#040899 77.3%,#16009f 79.3%,#2d006d 83.7%,#2e005f 91.4%,#2e005e 99.1%,#2e005e 100%)"></i><i style="left:953px;width:2px;background:linear-gradient(#42218f 0%,#482077 0.6%,#3e156b 1.1%,#320661 1.8%,#310465 2%,#24017f 2.3%,#1e0281 2.5%,#100995 2.8%,#041393 3.1%,#002f7a 3.7%,#004a71 4.3%,#03797c 5.8%,#078279 6.7%,#017e72 7.7%,#006b73 9.2%,#005371 10.1%,#014077 10.6%,#01367d 10.7%,#092889 10.9%,#182472 11%,#1b226b 11.2%,#1d137a 11.7%,#230983 11.8%,#2e0779 12%,#340768 12.1%,#380c66 12.4%,#3e146a 12.9%,#3d136a 13.8%,#340762 14.4%,#330764 15%,#310770 15.3%,#270784 15.6%,#1d1677 16.3%,#1d1f75 17%,#172584 17.9%,#162287 18.4%,#17299e 18.9%,#153d9c 19.5%,#2168a5 20.1%,#2691ab 20.7%,#28afab 21.6%,#27bba0 22.5%,#24bb88 24.1%,#26bb88 25%,#28bba0 26.5%,#27aeaa 27.5%,#1e8ea2 28.1%,#167a93 28.4%,#0f768a 28.7%,#067371 29.1%,#00725c 29.9%,#006e43 31.4%,#006535 34.8%,#006a2d 36.3%,#016012 38.3%,#065f02 39.6%,#266100 41.1%,#366a00 41.7%,#8aaf00 43.7%,#b5cd02 44.5%,#dbe10d 45.4%,#eae50f 46.2%,#eed814 46.9%,#f4b31d 47.9%,#f96f27 49.1%,#f8431e 49.8%,#fc1f09 50.5%,#f51603 50.6%,#de1001 50.8%,#9d0900 51.1%,#920900 51.2%,#8d1500 52.1%,#896500 54.8%,#867d00 56%,#808100 56.9%,#717900 57.7%,#4f6a00 58.9%,#195f00 61.5%,#045f03 62.4%,#006233 65%,#00654f 66.6%,#005b5b 68.6%,#003158 71.9%,#00265e 72.9%,#001781 75.5%,#050899 77%,#17009f 79%,#290079 82.4%,#2e006b 83.9%,#2e005f 91.6%,#2e005e 99.2%,#2e005e 100%)"></i><i style="left:955px;width:2px;background:linear-gradient(#330762 0%,#330762 0.5%,#2f056f 0.8%,#28027c 0.9%,#190681 1.4%,#0c0c94 1.7%,#031591 2%,#002f7a 2.6%,#004a71 3.2%,#016a78 4.1%,#067b83 4.6%,#0c8b90 4.9%,#1aa5a4 5.8%,#21aca1 6.7%,#16ab96 7.5%,#149e86 8%,#0d9c80 8.4%,#068a71 8.9%,#007c6e 9.8%,#006473 11%,#004471 12.3%,#012b80 13.5%,#002b7d 14.4%,#004371 16%,#005f73 17.5%,#006073 18.7%,#025075 19.6%,#0b3a88 20.4%,#133d97 20.7%,#15449a 21%,#2067a5 21.5%,#258fa9 22.1%,#27a3ad 22.7%,#28b4a9 23.9%,#28b3aa 25.5%,#26a1ac 26.4%,#228fa6 26.7%,#1f74a5 27%,#176095 27.3%,#145d8c 27.5%,#0c5f84 27.8%,#066973 28.1%,#02716c 28.4%,#007243 29.9%,#04783f 30.8%,#068546 31.4%,#068d4b 32.2%,#017b3f 33.1%,#006733 34%,#005f21 36.7%,#075f02 39.3%,#216200 40.5%,#407600 41.7%,#80ab00 43.3%,#b7ce02 44.5%,#dbe00d 45.4%,#eae510 46.2%,#eddd13 46.8%,#f3bb1c 47.7%,#fa7928 48.9%,#f74d22 49.7%,#fc1f09 50.5%,#f51704 50.6%,#dd1001 50.8%,#9b0900 51.1%,#910900 51.2%,#8d1600 52.1%,#8e3d00 53.4%,#896c00 54.9%,#858000 56.1%,#7c7f00 57.1%,#536b00 58.6%,#1d5f00 61.2%,#035f05 62.4%,#006546 65.8%,#006351 66.7%,#005b5a 68.3%,#003158 71.6%,#00275e 72.5%,#02108e 75.9%,#0a059c 77.1%,#1500a0 78.4%,#28007c 81.7%,#2d006b 83.3%,#2e005e 93.4%,#2e005e 99.2%,#2e005e 100%)"></i><i style="left:957px;width:2px;background:linear-gradient(#071393 0%,#002581 0.9%,#004171 1.8%,#006976 3.1%,#087f88 3.7%,#1c95a5 4.4%,#2794ac 5.4%,#2896ad 6.6%,#27b2aa 8.1%,#1eb397 9%,#13a182 9.7%,#0b9a7a 10%,#078c6f 10.3%,#007e6c 11.2%,#006674 13.2%,#006273 14.4%,#007c6d 17%,#007c6c 19%,#007271 19.9%,#015f74 20.9%,#05507a 21.3%,#073f83 21.8%,#143f98 22.4%,#1746a0 22.9%,#205ea9 23.3%,#2170a7 24.2%,#216ca8 25%,#2056ab 25.6%,#1843a0 25.9%,#143e96 26.2%,#074d7c 26.8%,#046573 27.1%,#007461 27.9%,#007444 28.8%,#057d3f 29.4%,#0c924c 29.9%,#129b57 30.2%,#15aa63 30.5%,#20b576 31.4%,#1eb777 32.2%,#0cab62 33.1%,#029c51 33.6%,#006e34 34.2%,#00642d 34.5%,#025f0d 37.9%,#055f03 38.8%,#176101 39.7%,#2c7300 40.5%,#418500 41.1%,#508900 41.7%,#77ac00 42.6%,#bed204 44.6%,#dee20e 45.6%,#eae610 46.2%,#eed914 46.9%,#f4b51e 47.9%,#f97228 49.1%,#f84620 49.8%,#fc2009 50.5%,#f51704 50.6%,#dc1001 50.8%,#b70c00 50.9%,#9b0a00 51.1%,#910900 51.2%,#8d1700 52.1%,#8b5b00 54.1%,#867d00 55.7%,#818100 56.6%,#6e7800 57.5%,#4d6a00 58.7%,#165f01 61.3%,#035f05 62.3%,#006547 65.6%,#006253 66.9%,#00565b 68.4%,#003557 71%,#00275e 72.2%,#020f8f 75.6%,#0a059c 76.8%,#1500a0 78.1%,#28007b 81.4%,#2e006b 83%,#2e005e 93.1%,#2e005e 98.9%,#2e005e 99.8%,#2e005e 100%)"></i><i style="left:959px;width:2px;background:linear-gradient(#004671 0%,#006e77 2%,#067e82 2.6%,#1892a2 3.4%,#268aa9 4.1%,#2766ab 5.7%,#275fac 6.4%,#276daa 7.2%,#27acab 9.2%,#23b69f 10%,#1ab292 10.6%,#13a381 11%,#099877 11.5%,#078c6e 11.8%,#017f6b 13.3%,#01806a 14.9%,#078c6d 16.4%,#089d74 17.3%,#089d6f 18.3%,#078b61 19%,#018663 19.9%,#007570 21.5%,#016574 22.4%,#015775 22.9%,#083a8a 23.8%,#0e318c 24.4%,#083a88 25%,#016070 25.9%,#007466 26.8%,#017a42 28.1%,#057f3f 28.4%,#129b54 29%,#19ad66 29.3%,#25bb87 30.1%,#27bd95 30.8%,#22bc91 31.7%,#14b178 32.7%,#03a25b 33.4%,#008944 33.9%,#00692e 34.4%,#006125 35%,#055f03 38.3%,#156301 39.3%,#308000 40.2%,#4e9d00 41%,#61a100 41.7%,#7cb602 42.5%,#aac805 44%,#c9d707 44.9%,#e5e50f 45.9%,#eddf13 46.8%,#f3be1c 47.7%,#fa7c28 48.9%,#f75024 49.7%,#fc200a 50.5%,#f41704 50.6%,#da1001 50.8%,#b60c00 50.9%,#9a0a00 51.1%,#910a00 51.2%,#8d1800 52.1%,#8a5e00 54.1%,#877a00 55.4%,#838200 56.3%,#737a00 57.2%,#4a6900 58.7%,#125f01 61.3%,#035f05 62.1%,#006548 65.5%,#006055 67%,#00545b 68.3%,#003357 70.9%,#00285b 71.8%,#02108d 75.2%,#09059c 76.4%,#17009e 77.9%,#290078 81.3%,#2e006b 82.8%,#2e005e 90.5%,#2e005e 98.2%,#2e005e 99.7%,#2e005e 100%)"></i><i style="left:961px;width:2px;background:linear-gradient(#017175 0%,#057f7c 1.2%,#0c9090 1.8%,#1699a1 2.3%,#258ca9 3.1%,#2769ac 4%,#2755ad 4.3%,#2f45b1 4.4%,#383f95 4.6%,#35318f 4.9%,#372793 5.1%,#40208e 5.2%,#461d75 5.4%,#41186d 5.5%,#3e146a 6.7%,#3e156c 7.5%,#411873 7.7%,#3d1d8c 7.8%,#362792 8%,#35418e 8.4%,#33489a 8.6%,#2751af 8.7%,#2671ab 9%,#278baa 9.5%,#28aaac 10.4%,#26b7a3 11.2%,#1eb595 12.1%,#15ad8b 12.6%,#14a282 13%,#14a383 15%,#17b291 15.6%,#21b597 16.6%,#23ba9c 17.8%,#21b68d 19.3%,#19b281 19.8%,#14a06f 20.2%,#0d9d69 20.7%,#078e5f 21%,#018165 22.2%,#007670 23.8%,#00776a 25.3%,#007a5b 26.2%,#047f45 27.1%,#088744 27.5%,#15a45a 28.1%,#22b97e 28.7%,#27bd93 29.1%,#27bba1 29.8%,#23b5a1 30.5%,#15ab8f 31.1%,#0c9778 31.6%,#058c63 32.2%,#00703b 33.4%,#006223 34.7%,#015f0e 36.7%,#086002 38.2%,#166c01 39%,#3e9900 40.2%,#56ac02 40.8%,#7cb806 42.3%,#a5c60a 43.9%,#cdd90a 45.1%,#e1e30f 45.7%,#eae410 46.3%,#eedb14 46.9%,#f3bf1c 47.7%,#f89028 48.6%,#f75b27 49.5%,#fa3618 50.2%,#fb210a 50.5%,#f41804 50.6%,#d81101 50.8%,#b40c00 50.9%,#990a00 51.1%,#910a00 51.2%,#8c1a00 52.1%,#8a6100 54.1%,#867c00 55.4%,#818100 56.3%,#6e7800 57.2%,#4d6a00 58.4%,#155f01 61%,#035f06 62%,#00633a 64.6%,#00654f 65.8%,#00585b 67.8%,#003657 70.4%,#00275e 71.6%,#001683 74.2%,#07079a 75.8%,#1500a0 77.3%,#28007a 80.7%,#2e006a 82.7%,#2e005e 92.8%,#2e005e 98.6%,#2e005e 99.8%,#2e005e 100%)"></i><i style="left:963px;width:2px;background:linear-gradient(#14988e 0%,#149892 0.5%,#17a3a2 0.9%,#2496ab 1.8%,#2877aa 2.8%,#2659ad 3.2%,#2c44b1 3.4%,#373c92 3.5%,#35348f 3.7%,#372494 3.8%,#451d77 4%,#41186c 4.1%,#360a69 4.8%,#270885 4.9%,#1d127a 5.1%,#1b1c6f 5.4%,#191d6d 5.5%,#151e77 5.7%,#0c2089 5.8%,#022e81 6.1%,#01397a 6.7%,#01327e 7.4%,#08288a 7.7%,#122787 7.8%,#1b2676 8%,#1d206e 8.3%,#1e1878 8.6%,#231384 8.7%,#321087 8.9%,#3d1371 9%,#3e1471 9.2%,#35168c 9.4%,#2f278b 9.5%,#354294 9.8%,#2a49ac 10%,#235ba8 10.1%,#2781aa 10.6%,#28a1ae 11.5%,#27b3a9 12.7%,#27b6a6 14.3%,#28adac 16.3%,#28a5ad 17.8%,#28b0aa 19.3%,#26bb9c 20.6%,#1eb482 21.5%,#14a26c 21.9%,#0c9b63 22.5%,#078a58 23%,#01865a 24.2%,#07844c 25.8%,#078649 26.1%,#0f9752 26.5%,#149e58 26.8%,#1aae67 27.1%,#26bc8e 27.9%,#28baa2 28.5%,#26afa9 29.1%,#2096a1 29.6%,#18909d 29.9%,#128a8b 30.2%,#0b8d80 30.5%,#047c63 31%,#006d47 31.9%,#00611e 34.5%,#036006 37.1%,#0c6a02 38%,#299001 39.3%,#48a903 40.2%,#64b20a 41.1%,#76b70a 42%,#9ac10f 43.6%,#ccd90a 45.1%,#e0e30f 45.7%,#ebe310 46.5%,#efd714 47.1%,#f4b320 48%,#fa7f28 48.9%,#f84b23 49.8%,#fb220a 50.5%,#f31804 50.6%,#d71101 50.8%,#b10c00 50.9%,#980a00 51.1%,#910b00 51.2%,#8c1b00 52.1%,#8a6400 54.1%,#867e00 55.4%,#7f8000 56.3%,#6a7600 57.2%,#4a6900 58.4%,#115f01 61%,#035f06 61.8%,#00633b 64.4%,#006450 65.6%,#00565b 67.6%,#003457 70.2%,#00285b 71.2%,#001780 73.8%,#06079a 75.3%,#1400a0 76.8%,#250083 79.4%,#2e006b 82.1%,#2e005e 89.7%,#2e005e 99.8%,#2e005e 100%)"></i><i style="left:965px;width:2px;background:linear-gradient(#279fad 0%,#2888aa 1.2%,#2774aa 1.8%,#2761ac 2.1%,#2851b0 2.3%,#3542a1 2.5%,#363a8f 2.6%,#352e8f 2.8%,#3d1d8c 2.9%,#41186d 3.1%,#370b64 3.5%,#2f0778 3.7%,#1d117c 3.8%,#1b1a71 4%,#191d6f 4.1%,#09228a 4.3%,#01327c 4.4%,#004870 4.9%,#005c72 5.8%,#006673 7.1%,#005b72 8.3%,#014a72 9%,#023e7a 9.4%,#0b2c8c 9.7%,#1d2175 10%,#251e85 10.3%,#26179d 10.4%,#2515ac 10.6%,#2421a0 10.7%,#272da0 10.9%,#2646ad 11.2%,#2368a6 11.7%,#2780aa 12.1%,#2894ac 13.3%,#2894ac 14.6%,#2788aa 15.8%,#2670ab 16.7%,#2259aa 17.5%,#2354ad 18.3%,#216aa7 19.2%,#2791ab 20.1%,#28b0aa 21.3%,#26bb9c 22.2%,#1cb278 23.8%,#14ad6c 24.7%,#21b377 25.9%,#27bc94 26.8%,#27b4a8 27.8%,#26a9aa 28.1%,#238da6 28.4%,#1d6ca5 28.7%,#155e8e 29%,#12608a 29.1%,#0d6884 29.3%,#096c77 29.4%,#05766d 29.8%,#01725c 30.2%,#006b37 31.7%,#00631f 33.7%,#02640e 35.7%,#067603 37.3%,#259a02 38.8%,#3fa904 39.7%,#61b310 41%,#78b911 42.2%,#9dc213 43.7%,#c5d60a 44.9%,#dce10f 45.6%,#eae50f 46.3%,#eed814 47.1%,#f4b520 48%,#fa8128 48.9%,#f84c24 49.8%,#fb220b 50.5%,#f31804 50.6%,#d51101 50.8%,#af0d00 50.9%,#970b00 51.1%,#900b00 51.2%,#8c1c00 52.1%,#8b5900 53.7%,#877900 54.9%,#848200 55.8%,#737a00 56.7%,#4a6900 58.3%,#105f01 60.9%,#035f07 61.7%,#00664c 65%,#005b5b 67%,#003857 69.6%,#00285b 70.9%,#00177f 73.5%,#06079a 75%,#1500a0 76.5%,#290079 79.9%,#2e006a 81.9%,#2e005e 89.6%,#2e005e 99.7%,#2e005e 100%)"></i><i style="left:967px;width:2px;background:linear-gradient(#2774a9 0%,#275fac 0.8%,#2c49b0 1.1%,#35429c 1.2%,#363c8f 1.4%,#352c8f 1.7%,#3c1d8d 1.8%,#41186f 2%,#3b1067 2.5%,#350a6d 2.6%,#200c82 2.8%,#1b1873 2.9%,#191b6e 3.1%,#0b1f8b 3.2%,#00327c 3.4%,#004470 3.7%,#006b74 4.9%,#00796f 5.8%,#007b6d 7.8%,#006f73 9%,#014a72 10.6%,#053a81 11%,#0a2a8d 11.3%,#122395 11.7%,#1527a2 12%,#1930a6 12.7%,#2545ae 13.3%,#2944ad 14.3%,#2f3a9f 14.9%,#2a268d 15.3%,#311496 16%,#331491 16.4%,#29178d 16.7%,#1d197a 17.2%,#1c2276 18.1%,#1a217b 19%,#222693 19.6%,#1721a9 20.1%,#1f2ea6 20.6%,#2645aa 20.9%,#2178a7 21.6%,#2797ab 22.1%,#28b3a9 23.3%,#27baa1 24.8%,#27b2aa 26.4%,#269eab 27%,#2592a9 27.1%,#2267ac 27.5%,#2855ad 27.6%,#2646a7 27.8%,#1836a3 27.9%,#143695 28.1%,#0b4986 28.4%,#075778 28.5%,#056570 28.7%,#017067 29%,#007045 30.2%,#006c30 31.1%,#017519 34.5%,#028214 35.4%,#04880e 36.2%,#0d9805 37.4%,#2ea907 39%,#60b415 41%,#7dbb18 42.5%,#a4c614 44%,#c4d50c 44.9%,#dce10f 45.6%,#eae50f 46.3%,#eed913 47.1%,#f4b71f 48%,#fa8328 48.9%,#f84e25 49.8%,#fb230b 50.5%,#f21904 50.6%,#d31101 50.8%,#ad0d00 50.9%,#960b00 51.1%,#8f0d00 51.4%,#8c2400 52.3%,#8a6200 53.8%,#867e00 55.1%,#7f8000 56%,#6a7600 56.9%,#4a6900 58.1%,#0f5f01 60.7%,#035f08 61.5%,#00664e 64.9%,#00595c 66.9%,#003657 69.5%,#00275e 70.7%,#001581 73.3%,#050899 74.5%,#1400a1 76.1%,#250082 78.7%,#2e006b 81.3%,#2e005e 89%,#2e005e 99.1%,#2e005e 100%)"></i><i style="left:969px;width:2px;background:linear-gradient(#3e1470 0%,#3e146a 0.6%,#380c68 1.2%,#310876 1.4%,#210a83 1.5%,#1b1a70 1.8%,#191d6f 2%,#0b208b 2.1%,#01317d 2.3%,#004371 2.6%,#007572 4.1%,#007f6b 5.1%,#079174 6.3%,#079c7c 6.9%,#07997a 7.5%,#078b6f 8.1%,#007f6b 9.4%,#007571 10.3%,#005a72 11.5%,#014076 12.7%,#073585 13.7%,#09308a 14.4%,#02377f 15.2%,#014972 16.1%,#005972 17%,#006473 18.6%,#016074 19.8%,#015274 20.6%,#074084 21.2%,#122b90 21.6%,#19299d 21.9%,#1627a4 22.2%,#1b28a6 22.4%,#273899 22.7%,#2e4d9f 23%,#2856ad 23.3%,#216ba8 23.8%,#2182aa 24.7%,#217ca8 25.2%,#216ba9 25.6%,#2361af 25.8%,#2b59ad 25.9%,#33569b 26.1%,#32468b 26.4%,#2a248c 26.7%,#2616aa 26.8%,#242a7c 27.1%,#1c317f 27.3%,#0a398a 27.5%,#045f70 27.8%,#007066 28.2%,#007450 29.1%,#007035 30.1%,#037b33 30.7%,#088c3a 31.1%,#10a344 32.1%,#11a53e 33.3%,#08a218 35.9%,#11a80b 37.4%,#48ae13 40%,#63b51a 41.3%,#82bd1d 42.8%,#a2c518 44%,#d0db0e 45.2%,#e6e50e 46%,#ece110 46.8%,#f2c619 47.7%,#f79a28 48.6%,#f84f26 49.8%,#fb240c 50.5%,#f11904 50.6%,#d11201 50.8%,#aa0d00 50.9%,#950b00 51.1%,#8f0e00 51.4%,#8c2000 52.1%,#8a6000 53.7%,#877800 54.6%,#848200 55.5%,#737a00 56.4%,#496800 58%,#0e5f02 60.6%,#035f06 61.2%,#00664d 64.6%,#005a5b 66.6%,#003657 69.2%,#00275e 70.4%,#001581 73%,#050798 74.2%,#1500a0 75.8%,#290079 79.1%,#2e006b 80.7%,#2e005e 90.8%,#2e005e 98.5%,#2e005e 100%)"></i><i style="left:971px;width:2px;background:linear-gradient(#171d6f 0%,#09228a 0.5%,#01317e 0.8%,#004571 1.4%,#006f73 2.9%,#007f6c 3.8%,#048a71 4.4%,#0b9c80 4.9%,#19b195 5.7%,#21b69e 6.6%,#21b59b 7.8%,#1bb393 8.6%,#13a282 9.2%,#0c9f7d 9.5%,#068c6f 10%,#007f6b 10.9%,#006c74 12.4%,#006073 14%,#006d74 16%,#007a6f 17.5%,#007c6c 19.5%,#007371 21%,#016274 22.2%,#025376 22.7%,#074185 23.2%,#0b378e 23.3%,#143189 23.5%,#1d2c70 23.8%,#1d1f6e 24.4%,#1d1f74 24.8%,#1d256a 25.5%,#1d2d6d 25.8%,#1b3074 25.9%,#133388 26.1%,#083d87 26.2%,#025573 26.5%,#01646d 26.8%,#007265 27.5%,#00754f 28.4%,#007539 29.1%,#04803a 29.6%,#16aa56 30.5%,#23b667 31.4%,#26b764 32.7%,#20b14b 34.2%,#13ac23 36.2%,#1aad14 37.7%,#4bb01a 40.3%,#73ba21 42.3%,#9bc31d 43.9%,#d6de0f 45.4%,#e8e70d 46.2%,#eeda11 47.1%,#f3ba1d 48%,#f89328 48.8%,#f75928 49.7%,#fa3d1d 50.2%,#fb250c 50.5%,#f11a05 50.6%,#cf1201 50.8%,#a70d00 50.9%,#940c00 51.1%,#8c1c00 52%,#8a5e00 53.5%,#877700 54.4%,#848200 55.4%,#727a00 56.3%,#506a00 57.5%,#145f01 60.1%,#035f05 60.9%,#00612e 62.9%,#00654e 64.4%,#00585b 66.4%,#003457 69%,#00285b 69.9%,#00177e 72.5%,#070699 74.1%,#16009f 75.6%,#27007f 78.2%,#2e006b 80.2%,#2e005e 90.3%,#2e005e 98%,#2e005e 100%)"></i><i style="left:973px;width:2px;background:linear-gradient(#005871 0%,#006674 1.2%,#017f6e 2.8%,#068e75 3.4%,#18b095 4.3%,#24b4a5 5.1%,#28a8ad 6.3%,#28a6ae 7.5%,#27b5a6 9%,#20b497 10%,#19b190 10.3%,#12a280 10.7%,#0a9b79 11%,#078c6e 11.3%,#007f6a 12.6%,#007c6c 15.2%,#018764 17.8%,#028961 19.8%,#018262 21%,#007970 23%,#006d70 24.5%,#007369 26.1%,#00785c 27%,#01783e 28.2%,#037e3d 28.5%,#0f9d4f 29.1%,#1baf63 29.6%,#26ba7a 30.4%,#28bc84 31.3%,#27bb7a 32.5%,#24b249 35.1%,#1daf2d 36.7%,#21af1d 38.2%,#5db523 41.6%,#90c123 43.6%,#aecb19 44.5%,#d6de0f 45.4%,#e9e50d 46.3%,#eedb10 47.1%,#f3bc1c 48%,#f89528 48.8%,#f84924 50%,#fb260d 50.5%,#f01b05 50.6%,#cd1201 50.8%,#a40d00 50.9%,#930c00 51.1%,#8c1e00 52%,#8a6200 53.5%,#877a00 54.4%,#828200 55.4%,#6e7800 56.3%,#4c6900 57.5%,#0f5f01 60.1%,#035f06 60.7%,#00664e 64.1%,#00585c 66.1%,#003457 68.7%,#00285b 69.6%,#00177e 72.2%,#070698 73.8%,#16009e 75.3%,#2a0075 78.7%,#2e006a 80.2%,#2e005e 90.3%,#2e005e 98%,#2e005e 100%)"></i><i style="left:975px;width:2px;background:linear-gradient(#007873 0%,#017f71 1.2%,#068a75 2%,#0c9b82 2.5%,#1bb098 3.2%,#26b3a8 4%,#289eae 4.9%,#2770ab 6.9%,#2772ab 7.7%,#28a5ad 9.7%,#27b5a7 10.4%,#21b699 11.2%,#16af8c 11.8%,#12a27e 12.3%,#089c77 12.7%,#078e6d 13%,#048a68 15%,#078f69 16%,#099d72 16.6%,#14a579 17.5%,#16b384 18.3%,#19b383 19.5%,#14af7b 20.1%,#14a06e 20.7%,#0c9d68 21.3%,#078a5a 21.9%,#00805f 23.9%,#007c5a 25.5%,#017b42 27%,#048040 27.5%,#12a257 28.2%,#23b977 29%,#28be93 29.9%,#27be9a 30.8%,#1cb78d 31.7%,#19b576 33%,#28b55a 35%,#24b12f 37.6%,#27b122 38.8%,#47b325 40.8%,#76bc28 42.8%,#a6c71e 44.3%,#dbe00f 45.6%,#e9e60c 46.3%,#eddc0f 47.1%,#f3be1b 48%,#f89828 48.8%,#f84b25 50%,#fa270d 50.5%,#ef1b05 50.6%,#a20e00 50.9%,#920d00 51.1%,#8c1a00 51.8%,#8a5f00 53.4%,#877a00 54.3%,#828200 55.2%,#6d7800 56.1%,#4b6900 57.4%,#0d5f02 60%,#035f07 60.6%,#00654f 64%,#00565b 66%,#003258 68.6%,#00275e 69.5%,#001680 72.1%,#080699 73.6%,#15009f 74.8%,#240087 76.8%,#2e006b 79.4%,#2e005e 89.6%,#2e005e 99.7%,#2e005e 100%)"></i><i style="left:977px;width:2px;background:linear-gradient(#0a9984 0%,#139c88 0.9%,#1aae99 1.7%,#25b2a8 2.6%,#28a0ae 3.5%,#2771aa 4.8%,#265dac 5.1%,#2b4cb0 5.2%,#364397 5.4%,#353d8e 5.5%,#342f8f 5.8%,#352293 6%,#3a1988 6.1%,#3f1572 6.3%,#3e146a 6.6%,#3e146b 8.1%,#3e1470 8.3%,#311b8f 8.6%,#34368e 8.9%,#35448e 9.2%,#314a9e 9.4%,#2554ad 9.5%,#2672ab 9.8%,#278caa 10.3%,#28a9ac 11.2%,#27b5a7 11.8%,#21b99c 12.7%,#19b48e 14.3%,#20b692 15.8%,#26bba0 17.3%,#27baa2 19.9%,#25bc96 21.2%,#21b583 22.1%,#15aa70 22.7%,#14a067 23%,#0b9a5d 23.8%,#07874e 24.5%,#078549 25.5%,#0b964f 26.4%,#139b55 26.8%,#18ad64 27.3%,#26bc87 28.2%,#28bc9f 29.1%,#24b3a7 30.1%,#1fac9d 30.5%,#17ab92 30.8%,#099576 31.3%,#03825a 32.2%,#038a55 33%,#0bad63 33.7%,#25b762 35%,#29b327 39.4%,#41b427 41%,#75bb28 42.9%,#9fc522 44.2%,#d5de10 45.4%,#e9e60c 46.3%,#eddc0e 47.1%,#f2bf19 48%,#f79b28 48.8%,#f84c26 50%,#fa280e 50.5%,#ef1c05 50.6%,#a00e00 50.9%,#910d00 51.1%,#8c1b00 51.8%,#8a6300 53.4%,#867c00 54.3%,#7f8000 55.2%,#6d7700 56%,#4b6900 57.2%,#0c5f02 59.8%,#035f09 60.4%,#006442 63%,#006350 64%,#00595c 65.5%,#003557 68.1%,#00285b 69%,#02108b 72.4%,#080699 73.3%,#15009f 74.5%,#240087 76.5%,#2e006b 79.1%,#2e005e 89.3%,#2e005e 99.4%,#2e005e 100%)"></i><i style="left:979px;width:2px;background:linear-gradient(#23b1a7 0%,#27a5ad 1.5%,#2895ac 2.3%,#2867ac 3.5%,#2756ad 3.8%,#2c47b2 4%,#383f99 4.1%,#37388f 4.3%,#352d8f 4.4%,#3a1d90 4.6%,#411871 4.8%,#3d136a 5.1%,#3b106c 5.2%,#2d0b83 5.4%,#1e107f 5.5%,#1c1b72 5.8%,#1b1d74 6%,#111d86 6.1%,#05228a 6.3%,#012c80 6.4%,#013d75 7.1%,#013e75 8%,#01357d 8.4%,#042d88 8.6%,#10288b 8.7%,#1b2776 8.9%,#1d256e 9%,#1d1d72 9.4%,#201a7a 9.5%,#2a1389 9.7%,#3a1379 9.8%,#3e1470 10%,#361587 10.1%,#2e2489 10.3%,#34408f 10.6%,#3048a2 10.7%,#2356ab 10.9%,#2675aa 11.2%,#278caa 11.7%,#28a6ad 12.6%,#28b4aa 13.5%,#28b5a7 15.5%,#28aaad 17%,#289aad 19%,#28a1ae 20.2%,#28b4a9 21.8%,#26bc94 23.3%,#21b379 24.8%,#21b577 25.8%,#26bb86 26.7%,#28bba0 27.9%,#27b3a8 28.7%,#25a3a8 29%,#1d81a2 29.4%,#157890 29.8%,#0a877f 30.2%,#078170 30.4%,#00704f 31.3%,#006b3f 32.5%,#00703f 33.1%,#008248 33.4%,#02a75b 33.9%,#0db163 34.4%,#23b767 35.3%,#28b44c 37.3%,#28b32b 39.9%,#33b428 40.8%,#5cb628 42.3%,#92c327 43.9%,#b1cd1e 44.6%,#dae00f 45.6%,#e9e60c 46.3%,#eed90e 47.2%,#f3bb1b 48.2%,#f89328 48.9%,#f75628 49.8%,#f94321 50.2%,#fa290e 50.5%,#ef1d06 50.6%,#a00e00 50.9%,#910d00 51.1%,#8c1c00 51.8%,#896600 53.4%,#867e00 54.3%,#7d7f00 55.2%,#476800 57.2%,#175f00 59.2%,#035f07 60.1%,#00654f 63.5%,#005b5a 65%,#003757 67.6%,#00275d 68.9%,#00167f 71.5%,#070698 73%,#15009f 74.2%,#240087 76.2%,#2e006b 78.8%,#2e005e 89%,#2e005e 99.1%,#2e005e 100%)"></i><i style="left:981px;width:2px;background:linear-gradient(#288bab 0%,#2876ab 1.2%,#285bae 2.1%,#2945b3 2.6%,#2f3eb2 2.8%,#37399f 2.9%,#383492 3.1%,#3a2393 3.4%,#431d80 3.5%,#42196d 3.7%,#3d136a 4%,#3b106d 4.1%,#2b0b85 4.3%,#1f0f7f 4.4%,#1b1379 4.6%,#12148b 4.8%,#031c8e 4.9%,#012782 5.1%,#003e71 5.7%,#005b73 6.6%,#016a75 7.5%,#006975 8.4%,#005372 9.7%,#014275 10.1%,#023b7c 10.3%,#072f8b 10.4%,#172880 10.6%,#1d2471 10.7%,#1f2174 10.9%,#231e7e 11%,#2a168f 11.2%,#321497 11.3%,#2d1993 11.5%,#2d298d 11.7%,#323691 11.8%,#30429f 12%,#2849ac 12.1%,#2163a6 12.4%,#277eaa 12.9%,#278fab 13.7%,#2897ad 14.9%,#2788aa 16.4%,#2671ac 17%,#235dab 17.3%,#2752ad 17.5%,#354c90 17.8%,#35418d 18.3%,#342a8f 19.5%,#353a8e 20.4%,#35508d 21.2%,#355393 21.3%,#2c55aa 21.5%,#235fad 21.6%,#2790aa 22.2%,#27a6ad 23%,#28b5a8 23.9%,#28baa2 25.9%,#28b4aa 27.1%,#27a8ab 27.6%,#2597a8 27.9%,#215eac 28.4%,#1d51a5 28.5%,#174898 28.7%,#14498d 28.8%,#10528a 29%,#076771 29.3%,#037469 29.6%,#007259 30.1%,#006f43 31%,#017641 31.9%,#07ae65 33.9%,#18b56c 35.1%,#25b869 36%,#24b237 39.4%,#2bb329 41%,#6cb928 42.9%,#9cc526 44.2%,#d4dd11 45.4%,#e9e60c 46.3%,#eed90d 47.2%,#f3bc1a 48.2%,#f89628 48.9%,#f75728 49.8%,#f94522 50.2%,#fa2a0f 50.5%,#ee1e06 50.6%,#9f0f00 50.9%,#910e00 51.1%,#8c1e00 51.8%,#8a5c00 53.1%,#877700 53.8%,#828200 54.8%,#727a00 55.5%,#4e6a00 56.7%,#0e5f02 59.4%,#035f08 60%,#006442 62.6%,#006450 63.3%,#005a5b 64.9%,#003657 67.5%,#00265f 68.7%,#001581 71.3%,#080699 72.9%,#15009f 74.1%,#27007d 76.7%,#2e006a 78.7%,#2e005e 88.8%,#2e005e 98.9%,#2e005e 99.8%,#2e005e 100%)"></i><i style="left:983px;width:2px;background:linear-gradient(#284ab1 0%,#2f3cb2 0.8%,#3638a5 1.1%,#383294 1.4%,#372892 1.7%,#3e2192 2%,#461d74 2.3%,#3e156b 2.6%,#390e6a 3.1%,#270784 3.4%,#1f0982 3.5%,#1a0a87 3.7%,#0c0d9a 3.8%,#031594 4%,#002e79 4.6%,#004a70 5.2%,#066e80 6%,#0c8890 6.4%,#149591 7.1%,#14998c 8%,#089180 8.6%,#078676 8.9%,#028075 9.5%,#005972 11%,#014873 11.5%,#053c80 11.8%,#09318a 12%,#11288d 12.1%,#182482 12.3%,#1b2181 12.4%,#1f1f99 12.7%,#1e1aa9 12.9%,#1d1aad 13%,#24299a 13.5%,#2f42a3 14.3%,#32439d 14.9%,#353e92 15.3%,#2a2386 16%,#30168b 16.3%,#381482 16.4%,#3e1470 16.6%,#3e146c 16.9%,#3d1370 17%,#35107e 17.2%,#280c86 17.3%,#1e117e 17.5%,#1d206e 17.9%,#1d2e6d 18.6%,#1a3079 18.9%,#13318a 19.2%,#0e358e 19.8%,#12338c 20.1%,#1d3272 20.6%,#1d2e6b 21%,#1d216e 21.5%,#221b7d 21.8%,#2b148a 21.9%,#39137d 22.1%,#3e146d 22.2%,#3e146a 22.4%,#3d1474 22.5%,#32158b 22.7%,#2c2388 22.9%,#354a8b 23.3%,#35538d 23.6%,#355695 23.8%,#2c58aa 23.9%,#2360ae 24.1%,#2376ab 24.4%,#278cac 24.8%,#2794ab 25.5%,#2689ac 26.1%,#216ca9 26.5%,#245fb0 26.7%,#2e59a7 26.8%,#355493 27%,#334d8d 27.1%,#2c2a8b 27.5%,#241aa8 27.6%,#1f219b 27.8%,#202c86 27.9%,#16358c 28.1%,#074582 28.2%,#065773 28.4%,#04666d 28.5%,#007160 29%,#007141 30.2%,#047e44 30.8%,#12a968 31.7%,#1bb77b 32.7%,#14b678 33.9%,#0fb36f 35.1%,#1cb568 36.3%,#1eb037 39.7%,#23b12a 41%,#38b429 41.7%,#74bb28 43.3%,#a7c823 44.5%,#d3dd11 45.4%,#e9e60b 46.3%,#edda0c 47.2%,#f2be18 48.2%,#f89828 48.9%,#f75928 49.8%,#f94623 50.2%,#fa2c10 50.5%,#ee1f06 50.6%,#9f0f00 50.9%,#910e00 51.1%,#8c1f00 51.8%,#8a5f00 53.1%,#877900 53.8%,#808100 54.8%,#6e7800 55.5%,#4a6900 56.7%,#1a5f00 58.7%,#035f05 59.7%,#00654f 63%,#005b5b 64.6%,#003757 67.2%,#00275e 68.4%,#020e8d 71.8%,#080699 72.7%,#16009e 73.9%,#28007c 76.5%,#2d006b 78.1%,#2e005e 88.2%,#2e005e 98.3%,#2e005e 99.8%,#2e005e 100%)"></i><i style="left:985px;width:2px;background:linear-gradient(#3e146a 0%,#3c1168 1.2%,#350867 1.5%,#32076d 1.7%,#290782 2%,#1c0785 2.5%,#0e0a99 2.8%,#021790 3.2%,#003477 4%,#004870 4.4%,#045e7a 4.9%,#198ba1 5.7%,#2498ab 6.6%,#26a6ac 8.1%,#1daf9b 9.4%,#149e87 9.8%,#109d84 10.1%,#078973 10.6%,#006e72 11.8%,#014673 13.3%,#0c2e8c 14.6%,#0f2d8c 15.3%,#043187 15.8%,#014377 16.4%,#005c72 17.3%,#007172 18.9%,#007570 20.4%,#006b74 21.9%,#015c73 22.5%,#024c7a 22.9%,#0b398e 23.2%,#19357e 23.3%,#1d336f 23.5%,#1d236c 24.1%,#2c178b 24.8%,#32148c 25.5%,#291c85 25.9%,#1f226d 26.4%,#1d2e69 26.7%,#1d326f 26.8%,#10368b 27%,#06477f 27.1%,#025f6b 27.5%,#007067 27.9%,#007450 28.8%,#017540 29.4%,#037c40 29.8%,#0f9d5a 30.4%,#17ad6c 30.7%,#24bb89 31.4%,#26be95 32.4%,#1fbb8e 33.3%,#06af71 34.8%,#07ae69 35.7%,#12b053 37.7%,#15ad2e 40.3%,#1daf28 41.1%,#2db224 41.7%,#71ba26 43.3%,#a6c723 44.5%,#d3dd12 45.4%,#e9e60b 46.3%,#edda0b 47.2%,#f2bf17 48.2%,#f79b28 48.9%,#f75b28 49.8%,#f94723 50.2%,#fa2d10 50.5%,#ee1f07 50.6%,#9f0f00 50.9%,#910e00 51.1%,#8c2000 51.8%,#8a6100 53.1%,#867b00 53.8%,#818100 54.6%,#6f7800 55.4%,#4b6900 56.6%,#1a5f00 58.6%,#035f05 59.5%,#006442 62.1%,#006351 63%,#00585c 64.6%,#003358 67.2%,#00285c 68.1%,#020f8b 71.5%,#0a059b 72.7%,#15009f 73.6%,#27007d 76.2%,#2d006b 77.8%,#2e005e 87.9%,#2e005e 98%,#2e005e 100%)"></i><i style="left:987px;width:2px;background:linear-gradient(#031c8d 0%,#031b8e 0.9%,#00277f 2.1%,#004771 3.4%,#015873 4%,#086a85 4.4%,#1a7f9f 4.9%,#2580a8 5.4%,#276aab 6.6%,#2769ab 7.5%,#2782aa 8.7%,#27a3ac 9.7%,#23b1a5 10.3%,#1aae93 10.9%,#14a285 11.2%,#109f80 11.5%,#078a71 12%,#017b70 12.9%,#006b73 14.1%,#006c73 15.6%,#007f6b 17.6%,#048a67 19.2%,#058a65 21.2%,#018164 22.1%,#00786f 23.6%,#016b6f 25.2%,#007267 26.7%,#007658 27.6%,#017941 28.5%,#078645 29%,#15a964 29.6%,#23bb86 30.2%,#27bd99 30.8%,#22ba9d 31.6%,#0ca985 33.1%,#018e5e 34.7%,#008150 35.3%,#01914e 36.5%,#05a647 38%,#0ba923 40.6%,#1daf1d 41.6%,#66b721 43.1%,#adcb20 44.6%,#d9e011 45.6%,#e9e50a 46.5%,#eed70b 47.4%,#f3ba19 48.3%,#f79d28 48.9%,#f94924 50.2%,#fa2e11 50.5%,#ee2007 50.6%,#9f1000 50.9%,#900f00 51.1%,#8c1b00 51.7%,#8a5c00 52.9%,#877900 53.7%,#828200 54.4%,#707900 55.2%,#4b6900 56.4%,#1a5f00 58.4%,#045f05 59.4%,#006442 62%,#006450 62.7%,#005a5c 64.3%,#003557 66.9%,#00285a 67.8%,#021089 71.2%,#09069a 72.4%,#17009e 73.6%,#28007a 76.2%,#2e006b 77.8%,#2e005e 87.9%,#2e005e 98%,#2e005e 100%)"></i><i style="left:989px;width:2px;background:linear-gradient(#005872 0%,#005571 1.2%,#016476 2.8%,#086e84 3.5%,#1c7aa0 4.3%,#266faa 4.8%,#244cad 5.7%,#243ab1 6%,#2a35af 6.1%,#313099 6.4%,#2c248e 6.7%,#2b1994 7.4%,#2a189a 8%,#2a238b 8.6%,#323891 9%,#333f96 9.2%,#274aad 9.5%,#2157a7 9.7%,#267daa 10.1%,#27a1ac 10.9%,#25b3a6 11.5%,#1ab192 12.3%,#14a483 12.6%,#0ea07e 13%,#078c6d 13.5%,#01866b 15.5%,#078d69 17%,#0e9f75 17.6%,#14a47a 18.4%,#17b387 18.9%,#21b68e 19.8%,#1fb588 21%,#16b07d 21.5%,#14a06e 21.9%,#0f9d68 22.7%,#078a5a 23.3%,#01865c 24.2%,#017e5a 25%,#017b53 26.2%,#057f44 27.5%,#078443 27.8%,#0f9650 28.2%,#19ad66 28.7%,#26bd90 29.4%,#28bba0 30.1%,#20b3a0 30.8%,#0e9b88 31.4%,#027c65 32.4%,#006f50 33.6%,#00663b 35.6%,#006a35 36.8%,#00872f 38.8%,#059a19 40.8%,#13ac12 41.6%,#52b119 42.8%,#9cc41f 44.3%,#cbd915 45.2%,#dce10f 45.7%,#e9e50a 46.5%,#eddb09 47.2%,#f2c114 48.2%,#f79e27 48.9%,#f85d28 49.8%,#f84a24 50.2%,#f92f11 50.5%,#ee2107 50.6%,#9f1000 50.9%,#900f00 51.1%,#8c1b00 51.7%,#8a5d00 52.9%,#867b00 53.7%,#818100 54.4%,#6d7800 55.2%,#506b00 56.1%,#0f5f01 58.7%,#035f07 59.4%,#006546 62%,#006252 62.9%,#005a5c 64.1%,#003457 66.7%,#00285b 67.6%,#021089 71%,#080699 72.2%,#1300a0 73.2%,#21008d 74.7%,#2d006c 77.3%,#2e005e 87.4%,#2e005e 97.5%,#2e005e 99.5%,#2e005e 100%)"></i><i style="left:991px;width:2px;background:linear-gradient(#078379 0%,#07827d 1.2%,#0b908f 1.8%,#148794 2.6%,#1d85a2 3.2%,#266da9 4%,#2553ac 4.4%,#2346ad 4.6%,#2b37af 4.8%,#343394 4.9%,#302b8c 5.1%,#2e1f8c 5.2%,#33148b 5.4%,#3a137d 5.5%,#340f84 5.7%,#230e87 5.8%,#1d157b 6%,#1d1a78 6.1%,#1b1c7c 6.3%,#131e8a 6.4%,#0a218d 6.6%,#012e7f 6.9%,#013f75 7.8%,#013b7a 8.7%,#053584 9%,#0b2c8c 9.2%,#142888 9.4%,#1c2575 9.5%,#1d2171 9.7%,#251e80 10%,#2e1590 10.1%,#35148e 10.3%,#2b1d8a 10.4%,#2d2d87 10.6%,#344790 10.9%,#294eab 11%,#2362a8 11.2%,#2682aa 11.5%,#28a1ad 12.1%,#26b5a6 12.9%,#21b497 13.7%,#15b18c 14.6%,#14ab85 15.3%,#1bb48e 16.3%,#26b9a0 17.8%,#28afaa 19.3%,#28afaa 20.9%,#27ba9e 22.4%,#1db37a 23.9%,#15ac6f 24.2%,#149f63 24.5%,#149a56 26.5%,#149e59 26.8%,#1aae67 27.3%,#23ba81 28.1%,#27bc9d 28.8%,#23b0a8 29.8%,#159e9c 30.4%,#027767 31.1%,#006e58 31.7%,#006840 33.7%,#00612b 37.1%,#00661e 39.1%,#027311 40.6%,#037c0f 41%,#0ca208 41.6%,#76b917 43.6%,#a1c51b 44.5%,#d1dc12 45.4%,#e9e60b 46.3%,#eddb09 47.2%,#f2c213 48.2%,#f7a027 48.9%,#f85e28 49.8%,#f84a24 50.2%,#f92f11 50.5%,#ed2107 50.6%,#9f1000 50.9%,#900f00 51.1%,#8c1c00 51.7%,#8c4d00 52.6%,#887300 53.4%,#858000 54%,#7a7e00 54.8%,#4b6900 56.3%,#195f00 58.3%,#035f06 59.2%,#006336 61.2%,#006450 62.4%,#005a5c 64%,#004258 65.5%,#00285a 67.5%,#021189 70.9%,#080699 72.1%,#16009f 73.3%,#28007b 75.9%,#2e006b 77.5%,#2e005e 87.6%,#2e005e 97.7%,#2e005e 99.7%,#2e005e 100%)"></i><i style="left:993px;width:2px;background:linear-gradient(#21a0a5 0%,#2198a9 1.5%,#2785a9 2.5%,#276cab 3.1%,#2755ad 3.4%,#2f44af 3.5%,#363c93 3.7%,#2f288b 4%,#34178c 4.1%,#3e136f 4.3%,#3a1071 4.4%,#240f85 4.6%,#1d1976 4.8%,#1c1d72 4.9%,#152082 5.1%,#042888 5.2%,#01357b 5.4%,#004d71 6%,#006773 6.9%,#007071 8.1%,#006873 9.4%,#015173 10.3%,#024279 10.6%,#053884 10.7%,#152b85 10.9%,#1d286f 11%,#202372 11.2%,#251f7e 11.3%,#32138d 11.5%,#391485 11.7%,#2c2289 11.8%,#34438b 12.1%,#344b94 12.3%,#2655ae 12.4%,#2779ab 12.7%,#2893ac 13.2%,#28a6ac 14%,#27b2a9 15.2%,#28adab 16.4%,#2896ac 17.9%,#287fac 18.7%,#265faf 19.3%,#2a56ae 19.5%,#355091 19.9%,#35518c 20.9%,#345496 21.3%,#2a5bb0 21.6%,#2786ac 22.2%,#289dad 22.7%,#28b5a7 23.9%,#27bb94 25.5%,#27bb93 26.7%,#28b8a4 27.9%,#28acac 28.7%,#1f94a4 29.1%,#158094 29.4%,#08787c 29.9%,#017466 30.4%,#006e4c 31.6%,#00693b 32.8%,#006024 37.3%,#02600b 40.6%,#046906 41.1%,#0e8a03 41.6%,#2ca503 42.2%,#7dba13 43.7%,#aac917 44.6%,#d8df10 45.6%,#e9e50a 46.5%,#edd808 47.4%,#f2bd15 48.3%,#f89728 49.1%,#f75427 50%,#f93e1c 50.3%,#f92f11 50.5%,#ed2107 50.6%,#9e1000 50.9%,#900f00 51.1%,#8c2300 51.8%,#8b5700 52.8%,#887400 53.4%,#858100 54%,#747b00 54.9%,#4d6a00 56.1%,#1c5f00 58.1%,#045f04 59%,#006334 61%,#00654f 62.3%,#005b5b 63.8%,#003557 66.4%,#00275f 67.6%,#020e8d 71%,#0b059b 72.2%,#1500a0 73.2%,#28007c 75.8%,#2e006b 77.3%,#2e005e 87.4%,#2e005e 97.5%,#2e005e 99.5%,#2e005e 100%)"></i><i style="left:995px;width:2px;background:linear-gradient(#286cac 0%,#2868ac 0.9%,#295aaf 1.4%,#2d53b0 1.5%,#354ea8 1.7%,#3b4c96 1.8%,#3b4692 2.1%,#3c3494 2.6%,#442896 2.8%,#4f287c 2.9%,#4f2877 3.1%,#4e277b 3.2%,#3c2393 3.4%,#2b2784 3.5%,#212375 3.7%,#1c2471 3.8%,#0c268c 4%,#02367d 4.1%,#004772 4.4%,#006b73 5.4%,#007c6c 6.3%,#008067 8.9%,#007870 10.4%,#005f73 11.3%,#024a75 11.8%,#04417f 12%,#0b308c 12.1%,#1d2c72 12.3%,#212970 12.4%,#2e2589 12.7%,#422291 12.9%,#49278e 13%,#3d2e97 13.2%,#3b4b92 13.7%,#3b5096 13.8%,#3454a8 14%,#2b5ab1 14.1%,#286cad 14.4%,#287eac 15.2%,#287cac 16%,#2867ad 16.7%,#2d58b0 17%,#3453a9 17.2%,#394f9b 17.3%,#3b4494 17.6%,#3b3693 17.9%,#3e2c99 18.1%,#482892 18.3%,#4f2882 18.4%,#442794 18.7%,#392795 18.9%,#2a2781 19.2%,#1d236e 19.6%,#1d2b6b 20.6%,#1e256f 21.5%,#292481 21.9%,#2d1d8a 22.1%,#3a1b8c 22.2%,#4a2279 22.4%,#4f2877 22.7%,#4f287b 22.9%,#462893 23%,#3c3394 23.2%,#3b538f 23.6%,#3b5c91 23.9%,#3a5f9a 24.1%,#2e63b3 24.2%,#2872af 24.4%,#2893ac 24.8%,#28a0ad 25.3%,#28a6ac 26.5%,#289aac 27.5%,#2882ad 28.1%,#2886a9 28.5%,#2589a9 28.7%,#1c8aa2 28.8%,#087379 29.1%,#017068 29.4%,#006c3c 31.4%,#006227 34.8%,#015e12 39.3%,#046305 40.8%,#076d03 41.1%,#249a01 41.9%,#3ba803 42.3%,#87bc12 43.9%,#b2cd14 44.8%,#dce10f 45.7%,#e9e509 46.5%,#edd808 47.4%,#f2bd14 48.3%,#f7a125 48.9%,#f85f28 49.8%,#f84b24 50.2%,#f92f11 50.5%,#ed2107 50.6%,#9e1000 50.9%,#900f00 51.1%,#8c2300 51.8%,#8b5800 52.8%,#887500 53.4%,#858100 54%,#737b00 54.9%,#4d6a00 56.1%,#1b5f00 58.1%,#045f05 59%,#006335 61%,#006550 62.3%,#005a5c 63.8%,#004358 65.3%,#00295b 67.3%,#021189 70.7%,#080699 71.9%,#16009f 73.2%,#28007b 75.8%,#2e006b 77.3%,#2e005e 87.4%,#2e005e 97.5%,#2e005e 99.5%,#2e005e 100%)"></i></div><svg style="left:0;top:0" width="1400" height="933" viewBox="0 0 1400 933"><path d="M403.5 194V846M485.5 194V846M544.5 194V846M589.5 194V846M626.5 194V846M658.5 194V846M685.5 194V846M709.5 194V846M731.5 194V846M872.5 194V846M954.5 194V846M1013.5 194V846M1059.5 194V846M1096.5 194V846M1127.5 194V846M1154.5 194V846M1178.5 194V846M1200.5 194V846M344 782.5H1341M344 718.5H1341M344 655.5H1341M344 591.5H1341M344 527.5H1341M344 464.5H1341M344 400.5H1341M344 336.5H1341M344 273.5H1341M344 209.5H1341" stroke="#3f3f3f" stroke-width="1" opacity="0.9" fill="none"/><polyline points="344.0,560.0 347.0,565.1 350.0,570.0 353.0,575.4 356.0,580.1 359.0,582.3 362.0,583.7 365.0,584.0 368.0,583.6 371.0,582.9 374.0,582.0 377.0,580.0 380.0,576.5 383.0,572.5 386.0,568.8 389.0,564.7 392.0,560.6 395.0,557.0 398.0,554.1 401.0,551.5 404.0,548.9 407.0,546.2 410.0,543.5 413.0,540.8 416.0,538.0 419.0,535.0 422.0,531.8 425.0,528.1 428.0,524.4 431.0,521.0 434.0,518.1 437.0,515.2 440.0,512.9 443.0,511.7 446.0,510.8 449.0,510.2 452.0,510.0 455.0,510.4 458.0,511.4 461.0,512.6 464.0,513.8 467.0,515.2 470.0,516.7 473.0,518.2 476.0,519.4 479.0,520.5 482.0,521.6 485.0,522.6 488.0,523.5 491.0,524.3 494.0,525.1 497.0,525.7 500.0,526.0 503.0,525.8 506.0,525.3 509.0,524.7 512.0,524.2 515.0,524.0 518.0,524.2 521.0,524.7 524.0,525.5 527.0,526.2 530.0,527.0 533.0,527.9 536.0,528.9 539.0,529.9 542.0,530.7 545.0,531.0 548.0,531.0 551.0,531.0 554.0,531.0 557.0,531.0 560.0,531.0 563.0,531.1 566.0,531.5 569.0,532.0 572.0,532.5 575.0,533.0 578.0,533.4 581.0,533.8 584.0,534.2 587.0,534.6 590.0,535.0 593.0,535.5 596.0,535.9 599.0,535.9 602.0,534.8 605.0,533.0 608.0,531.1 611.0,529.6 614.0,528.2 617.0,526.9 620.0,525.7 623.0,524.6 626.0,523.7 629.0,523.0 632.0,522.3 635.0,521.7 638.0,521.2 641.0,520.9 644.0,520.7 647.0,520.5 650.0,520.4 653.0,520.3 656.0,520.2 659.0,520.0 662.0,519.9 665.0,519.8 668.0,519.7 671.0,519.5 674.0,519.4 677.0,519.3 680.0,519.2 683.0,519.1 686.0,519.0 689.0,519.0 692.0,519.0 695.0,519.2 698.0,519.5 701.0,519.8 704.0,520.2 707.0,520.6 710.0,521.0 713.0,521.4 716.0,521.9 719.0,522.4 722.0,522.9 725.0,523.4 728.0,523.8 731.0,524.1 734.0,524.4 737.0,524.7 740.0,524.9 743.0,525.2 746.0,525.4 749.0,525.6 752.0,525.8 755.0,525.9 758.0,526.0 761.0,526.0 764.0,526.0 767.0,525.9 770.0,525.9 773.0,525.8 776.0,525.7 779.0,525.5 782.0,525.4 785.0,525.3 788.0,525.1 791.0,524.9 794.0,524.7 797.0,524.4 800.0,524.0 803.0,523.6 806.0,523.2 809.0,522.8 812.0,522.4 815.0,522.0 818.0,521.6 821.0,521.1 824.0,520.7 827.0,520.3 830.0,520.1 833.0,520.0 836.0,520.1 839.0,520.4 842.0,520.7 845.0,521.0 848.0,521.4 851.0,521.9 854.0,522.4 857.0,523.0 860.0,523.6 863.0,524.2 866.0,524.6 869.0,524.9 872.0,525.1 875.0,525.2 878.0,525.4 881.0,525.5 884.0,525.6 887.0,525.6 890.0,525.7 893.0,525.8 896.0,525.9 899.0,526.0 902.0,526.1 905.0,526.2 908.0,526.3 911.0,526.5 914.0,526.6 917.0,526.7 920.0,526.8 923.0,526.9 926.0,527.0 929.0,527.0 932.0,527.0 935.0,526.9 938.0,526.8 941.0,526.7 944.0,526.5 947.0,526.4 950.0,526.3 953.0,526.1 956.0,526.0 959.0,526.0 962.0,526.0 965.0,526.0 968.0,526.0 971.0,526.0 974.0,526.0 977.0,526.0 980.0,526.0 983.0,526.0 986.0,526.0 989.0,526.0 992.0,526.0 995.0,526.0 998.0,526.0 1001.0,526.0 1004.0,526.0 1007.0,526.0 1010.0,526.0 1013.0,526.0 1016.0,526.0 1019.0,526.0 1022.0,526.0 1025.0,526.0 1028.0,526.0 1031.0,526.0 1034.0,526.0 1037.0,526.0 1040.0,526.0 1043.0,526.0 1046.0,526.0 1049.0,526.0 1052.0,526.0 1055.0,526.0 1058.0,526.0 1061.0,526.0 1064.0,526.0 1067.0,526.0 1070.0,526.0 1073.0,526.0 1076.0,526.0 1079.0,526.0 1082.0,526.0 1085.0,526.0 1088.0,526.0 1091.0,526.0 1094.0,526.0 1097.0,526.0 1100.0,526.0 1103.0,526.0 1106.0,526.0 1109.0,526.0 1112.0,526.0 1115.0,526.0 1118.0,526.0 1121.0,526.0 1124.0,526.0 1127.0,526.0 1130.0,526.0 1133.0,526.0 1136.0,526.0 1139.0,526.0 1142.0,526.0 1145.0,526.0 1148.0,526.0 1151.0,526.0 1154.0,526.0 1157.0,526.0 1160.0,526.0 1163.0,526.0 1166.0,526.0 1169.0,526.0 1172.0,526.0 1175.0,526.0 1178.0,526.0 1181.0,526.0 1184.0,526.0 1187.0,526.0 1190.0,526.0 1193.0,526.0 1196.0,526.0 1199.0,526.0 1202.0,526.0 1205.0,526.0 1208.0,526.0 1211.0,526.0 1214.0,526.0 1217.0,526.0 1220.0,526.0 1223.0,526.0 1226.0,526.0 1229.0,526.0 1232.0,526.0 1235.0,526.0 1238.0,526.0 1241.0,526.0 1244.0,526.0 1247.0,526.0 1250.0,526.0 1253.0,526.0 1256.0,526.0 1259.0,526.0 1262.0,526.0 1265.0,526.0 1268.0,526.0 1271.0,526.0 1274.0,526.0 1277.0,526.0 1280.0,526.0 1283.0,526.0 1286.0,526.0 1289.0,526.0 1292.0,526.0 1295.0,525.9 1298.0,525.8 1301.0,525.7 1304.0,525.6 1307.0,525.4 1310.0,525.3 1313.0,525.1 1316.0,524.9 1319.0,524.7 1322.0,524.4 1325.0,524.2 1328.0,524.0 1331.0,524.0 1334.0,524.2 1337.0,524.4 1340.0,524.8" fill="none" stroke="#45dde4" stroke-width="1.3" stroke-dasharray="7 3"/><path d="M343.5 193V846.5H1341.5" stroke="#b8b8b8" fill="none" stroke-width="1" opacity="0.6"/><path d="M344 193.5H1341" stroke="#e0e0e0" stroke-width="1" opacity="0.75"/><path d="M344 845.5H1341" stroke="#ff5a30" stroke-width="1" opacity="0.55"/><path d="M1341.5 193V846" stroke="#d070c0" stroke-width="1.2" opacity="0.8"/><rect x="345" y="196" width="21" height="42" fill="#fff" opacity="0.5"/><circle cx="355.5" cy="206.5" r="5.8" fill="none" stroke="#4a4a4a" stroke-width="1.6"/><path d="M352 206.5h7" stroke="#4a4a4a" stroke-width="2"/><path d="M355.5 203v7" stroke="#4a4a4a" stroke-width="2"/><circle cx="355.5" cy="227.5" r="5.8" fill="none" stroke="#4a4a4a" stroke-width="1.6"/><path d="M352 227.5h7" stroke="#4a4a4a" stroke-width="2"/><rect x="1293" y="822" width="47" height="22" fill="#d9c6e6" opacity="0.62"/><circle cx="1304.5" cy="833" r="5.8" fill="none" stroke="#4a4a4a" stroke-width="1.6"/><path d="M1301.0 833h7" stroke="#4a4a4a" stroke-width="2"/><circle cx="1328.0" cy="833" r="5.8" fill="none" stroke="#4a4a4a" stroke-width="1.6"/><path d="M1324.5 833h7" stroke="#4a4a4a" stroke-width="2"/><path d="M1328.0 829.5v7" stroke="#4a4a4a" stroke-width="2"/></svg><div class="btn" style="left:346px;top:822px;width:53px;height:21px;border-radius:4px;border-color:#999"></div><span class="t" style="left:349.5px;top:825.5px;font-size:11.5px;line-height:14px;color:#222;letter-spacing:-0.24px;">Generate</span><div class="btn" style="left:1250px;top:780px;width:90px;height:19px;border-radius:3px;border-color:#aaa"></div><span class="t" style="left:1275.0px;top:782.5px;font-size:11px;line-height:14px;color:#333;letter-spacing:-0.31px;">10 .. 200</span><div class="btn" style="left:1250px;top:802px;width:90px;height:19px;border-radius:3px;border-color:#aaa"></div><span class="t" style="left:1267.0px;top:804.5px;font-size:11px;line-height:14px;color:#333;letter-spacing:-0.18px;">20 .. 20 000</span><span class="t" style="left:316.0px;top:202.6px;font-size:11px;line-height:14px;color:#333;-webkit-text-stroke:0.25px #333;">1,0m</span><span class="t" style="left:316.0px;top:234.4px;font-size:11px;line-height:14px;color:#8c8c8c;">900u</span><span class="t" style="left:316.0px;top:266.2px;font-size:11px;line-height:14px;color:#333;-webkit-text-stroke:0.25px #333;">800u</span><span class="t" style="left:316.0px;top:298.1px;font-size:11px;line-height:14px;color:#8c8c8c;">700u</span><span class="t" style="left:316.0px;top:329.9px;font-size:11px;line-height:14px;color:#333;-webkit-text-stroke:0.25px #333;">600u</span><span class="t" style="left:316.0px;top:361.7px;font-size:11px;line-height:14px;color:#8c8c8c;">500u</span><span class="t" style="left:316.0px;top:393.5px;font-size:11px;line-height:14px;color:#333;-webkit-text-stroke:0.25px #333;">400u</span><span class="t" style="left:316.0px;top:425.3px;font-size:11px;line-height:14px;color:#8c8c8c;">300u</span><span class="t" style="left:316.0px;top:457.2px;font-size:11px;line-height:14px;color:#333;-webkit-text-stroke:0.25px #333;">200u</span><span class="t" style="left:316.0px;top:489.0px;font-size:11px;line-height:14px;color:#8c8c8c;">100u</span><span class="t" style="left:324.6px;top:520.8px;font-size:11px;line-height:14px;color:#333;-webkit-text-stroke:0.25px #333;">-0u</span><span class="t" style="left:312.4px;top:552.6px;font-size:11px;line-height:14px;color:#8c8c8c;">-100u</span><span class="t" style="left:312.4px;top:584.4px;font-size:11px;line-height:14px;color:#333;-webkit-text-stroke:0.25px #333;">-200u</span><span class="t" style="left:312.4px;top:616.3px;font-size:11px;line-height:14px;color:#8c8c8c;">-300u</span><span class="t" style="left:312.4px;top:648.1px;font-size:11px;line-height:14px;color:#333;-webkit-text-stroke:0.25px #333;">-400u</span><span class="t" style="left:312.4px;top:679.9px;font-size:11px;line-height:14px;color:#8c8c8c;">-500u</span><span class="t" style="left:312.4px;top:711.7px;font-size:11px;line-height:14px;color:#333;-webkit-text-stroke:0.25px #333;">-600u</span><span class="t" style="left:312.4px;top:743.5px;font-size:11px;line-height:14px;color:#8c8c8c;">-700u</span><span class="t" style="left:312.4px;top:775.4px;font-size:11px;line-height:14px;color:#333;-webkit-text-stroke:0.25px #333;">-800u</span><span class="t" style="left:312.4px;top:807.2px;font-size:11px;line-height:14px;color:#8c8c8c;">-900u</span><svg style="left:0;top:0" width="1400" height="933"><path d="M341.5 814.5H344M341.5 782.5H344M341.5 750.5H344M341.5 718.5H344M341.5 686.5H344M341.5 655.5H344M341.5 623.5H344M341.5 591.5H344M341.5 559.5H344M341.5 527.5H344M341.5 495.5H344M341.5 464.5H344M341.5 432.5H344M341.5 400.5H344M341.5 368.5H344M341.5 336.5H344M341.5 305.5H344M341.5 273.5H344M341.5 241.5H344M341.5 209.5H344" stroke="#6a6a6a" stroke-width="1"/></svg><span class="t" style="left:335.0px;top:177.0px;font-size:11px;line-height:14px;color:#222;">s</span><div class="a" style="left:299px;top:186px;width:43px;height:16px;box-sizing:border-box;border:1px solid #2c2cff;background:#fff"></div><span class="t" style="left:302.5px;top:188.0px;font-size:12px;line-height:15px;color:#2020e8;letter-spacing:-0.25px;-webkit-text-stroke:0.3px #2020e8;">1,050m</span><span class="t" style="left:335.3px;top:850.5px;font-size:11px;line-height:14px;color:#222;">150</span><span class="t" style="left:393.9px;top:850.5px;font-size:11px;line-height:14px;color:#222;">200</span><span class="t" style="left:476.6px;top:850.5px;font-size:11px;line-height:14px;color:#222;">300</span><span class="t" style="left:535.2px;top:850.5px;font-size:11px;line-height:14px;color:#222;">400</span><span class="t" style="left:580.7px;top:850.5px;font-size:11px;line-height:14px;color:#222;">500</span><span class="t" style="left:617.8px;top:850.5px;font-size:11px;line-height:14px;color:#222;">600</span><span class="t" style="left:649.2px;top:850.5px;font-size:11px;line-height:14px;color:#222;">700</span><span class="t" style="left:676.4px;top:850.5px;font-size:11px;line-height:14px;color:#222;">800</span><span class="t" style="left:700.4px;top:850.5px;font-size:11px;line-height:14px;color:#222;">900</span><span class="t" style="left:726.3px;top:850.5px;font-size:11px;line-height:14px;color:#222;">1k</span><span class="t" style="left:866.5px;top:850.5px;font-size:11px;line-height:14px;color:#222;">2k</span><span class="t" style="left:949.1px;top:850.5px;font-size:11px;line-height:14px;color:#222;">3k</span><span class="t" style="left:1007.8px;top:850.5px;font-size:11px;line-height:14px;color:#222;">4k</span><span class="t" style="left:1053.2px;top:850.5px;font-size:11px;line-height:14px;color:#222;">5k</span><span class="t" style="left:1090.4px;top:850.5px;font-size:11px;line-height:14px;color:#222;">6k</span><span class="t" style="left:1121.8px;top:850.5px;font-size:11px;line-height:14px;color:#222;">7k</span><span class="t" style="left:1149.0px;top:850.5px;font-size:11px;line-height:14px;color:#222;">8k</span><span class="t" style="left:1173.0px;top:850.5px;font-size:11px;line-height:14px;color:#222;">9k</span><span class="t" style="left:1191.4px;top:850.5px;font-size:11px;line-height:14px;color:#222;">10k</span><span class="t" style="left:1244.9px;top:850.5px;font-size:11px;line-height:14px;color:#8c8c8c;">13k</span><span class="t" style="left:1274.0px;top:850.5px;font-size:11px;line-height:14px;color:#8c8c8c;">15k</span><span class="t" style="left:1299.5px;top:850.5px;font-size:11px;line-height:14px;color:#8c8c8c;">17k</span><div class="a" style="left:1325px;top:849px;width:32px;height:16px;box-sizing:border-box;border:1px solid #2c2cff;background:#fff"></div><span class="t" style="left:1327.5px;top:850.5px;font-size:11.5px;line-height:14px;color:#2020e8;letter-spacing:-0.23px;">19,9k</span><div class="a" style="left:1344px;top:323.5px;width:20px;height:391.5px;box-sizing:border-box;border:1px solid #2a2a2a;background:linear-gradient(#ff0e00 0.0%,#f63400 5.0%,#fa6900 10.0%,#f3aa00 15.0%,#f0c800 17.5%,#ecde00 20.0%,#e8e600 22.5%,#d7de00 25.0%,#b6ce00 27.5%,#96be00 30.0%,#68b200 35.0%,#3aa800 40.0%,#08a806 45.0%,#00a62c 50.0%,#00ae5c 55.0%,#00b48a 60.0%,#00a898 65.0%,#00a0a2 67.5%,#008aa0 70.0%,#006a98 75.0%,#003ea0 80.0%,#001ea2 85.0%,#060aae 87.5%,#1600a8 90.0%,#24008a 92.5%,#2e006c 95.0%,#2e005e 100.0%)"></div><span class="t" style="left:1367.0px;top:688.4px;font-size:11px;line-height:14px;color:#333;">34</span><span class="t" style="left:1367.0px;top:649.3px;font-size:11px;line-height:14px;color:#333;">38</span><span class="t" style="left:1367.0px;top:610.3px;font-size:11px;line-height:14px;color:#333;">42</span><span class="t" style="left:1367.0px;top:571.3px;font-size:11px;line-height:14px;color:#333;">46</span><span class="t" style="left:1367.0px;top:532.2px;font-size:11px;line-height:14px;color:#333;">50</span><span class="t" style="left:1367.0px;top:493.2px;font-size:11px;line-height:14px;color:#333;">54</span><span class="t" style="left:1367.0px;top:454.1px;font-size:11px;line-height:14px;color:#333;">58</span><span class="t" style="left:1367.0px;top:415.1px;font-size:11px;line-height:14px;color:#333;">62</span><span class="t" style="left:1367.0px;top:376.1px;font-size:11px;line-height:14px;color:#333;">66</span><span class="t" style="left:1367.0px;top:337.0px;font-size:11px;line-height:14px;color:#333;">70</span><svg style="left:0;top:0" width="1400" height="933"><path d="M1345 695.5H1364M1345 656.5H1364M1345 617.5H1364M1345 578.5H1364M1345 539.5H1364M1345 500.5H1364M1345 461.5H1364M1345 422.5H1364M1345 383.5H1364M1345 344.5H1364" stroke="#222" stroke-width="1"/></svg><span class="t" style="left:1347.0px;top:311.0px;font-size:11px;line-height:14px;color:#333;">72</span><span class="t" style="left:1347.0px;top:716.5px;font-size:11px;line-height:14px;color:#333;">32</span><div class="a" style="left:282px;top:204px;width:12px;height:630px;background:#fff"></div><div class="a" style="left:282px;top:767px;width:12px;height:10px;background:#dcdcdc"></div><svg style="left:282px;top:195px" width="12" height="8" viewBox="0 0 12 8"><path d="M1 6.5 L6 1.5 L11 6.5Z" fill="#7a7a7a"/></svg><svg style="left:282px;top:835px" width="12" height="8" viewBox="0 0 12 8"><path d="M1.5 1.5 L6 6.5 L10.5 1.5Z" fill="#6a6a6a"/></svg><div class="a" style="left:355px;top:868px;width:974px;height:12px;background:#fff"></div><div class="a" style="left:793px;top:868px;width:497px;height:12px;background:#dadada"></div><svg style="left:345px;top:869px" width="8" height="10" viewBox="0 0 8 10"><path d="M6.5 1 L1.5 5 L6.5 9Z" fill="#555"/></svg><svg style="left:1331px;top:869px" width="8" height="10" viewBox="0 0 8 10"><path d="M1.5 1 L6.5 5 L1.5 9Z" fill="#555"/></svg><div class="a" style="left:494px;top:884px;width:704px;height:22px;box-sizing:border-box;border:1px solid #dcdcdc;background:#fff"></div><svg style="left:501px;top:888px" width="15" height="15" viewBox="0 0 15 15"><rect x="1" y="1" width="13" height="13" rx="2.5" fill="#fff" stroke="#2f6fe6" stroke-width="1.4"/><path d="M4 7.6 L6.6 10.2 L11 4.8" fill="none" stroke="#2f6fe6" stroke-width="1.6"/></svg><span class="t" style="left:521.0px;top:889.0px;font-size:11.5px;line-height:14px;color:#2ea4d8;letter-spacing:-0.05px;">2 juin 12</span><div class="a" style="left:681px;top:895.5px;width:49px;height:1.2px;background:#4ab8dc"></div><span class="t" style="left:775.0px;top:889.0px;font-size:11.5px;line-height:14px;color:#2ea4d8;letter-spacing:-0.38px;">29,4 dB</span><svg style="left:848px;top:888px" width="15" height="15" viewBox="0 0 15 15"><rect x="1" y="1" width="13" height="13" rx="2.5" fill="#fff" stroke="#2f6fe6" stroke-width="1.4"/><path d="M4 7.6 L6.6 10.2 L11 4.8" fill="none" stroke="#2f6fe6" stroke-width="1.6"/></svg><span class="t" style="left:868.0px;top:889.0px;font-size:11.5px;line-height:14px;color:#2bbfbf;letter-spacing:-0.03px;">Peak energy time</span><svg style="left:1029px;top:893px" width="48" height="6"><path d="M0 3H48" stroke="#49cfd3" stroke-width="1.3" stroke-dasharray="6 3"/></svg><span class="t" style="left:1120.0px;top:889.0px;font-size:11.5px;line-height:14px;color:#2bbfbf;letter-spacing:-0.27px;">0,00 ms</span></body></html>
